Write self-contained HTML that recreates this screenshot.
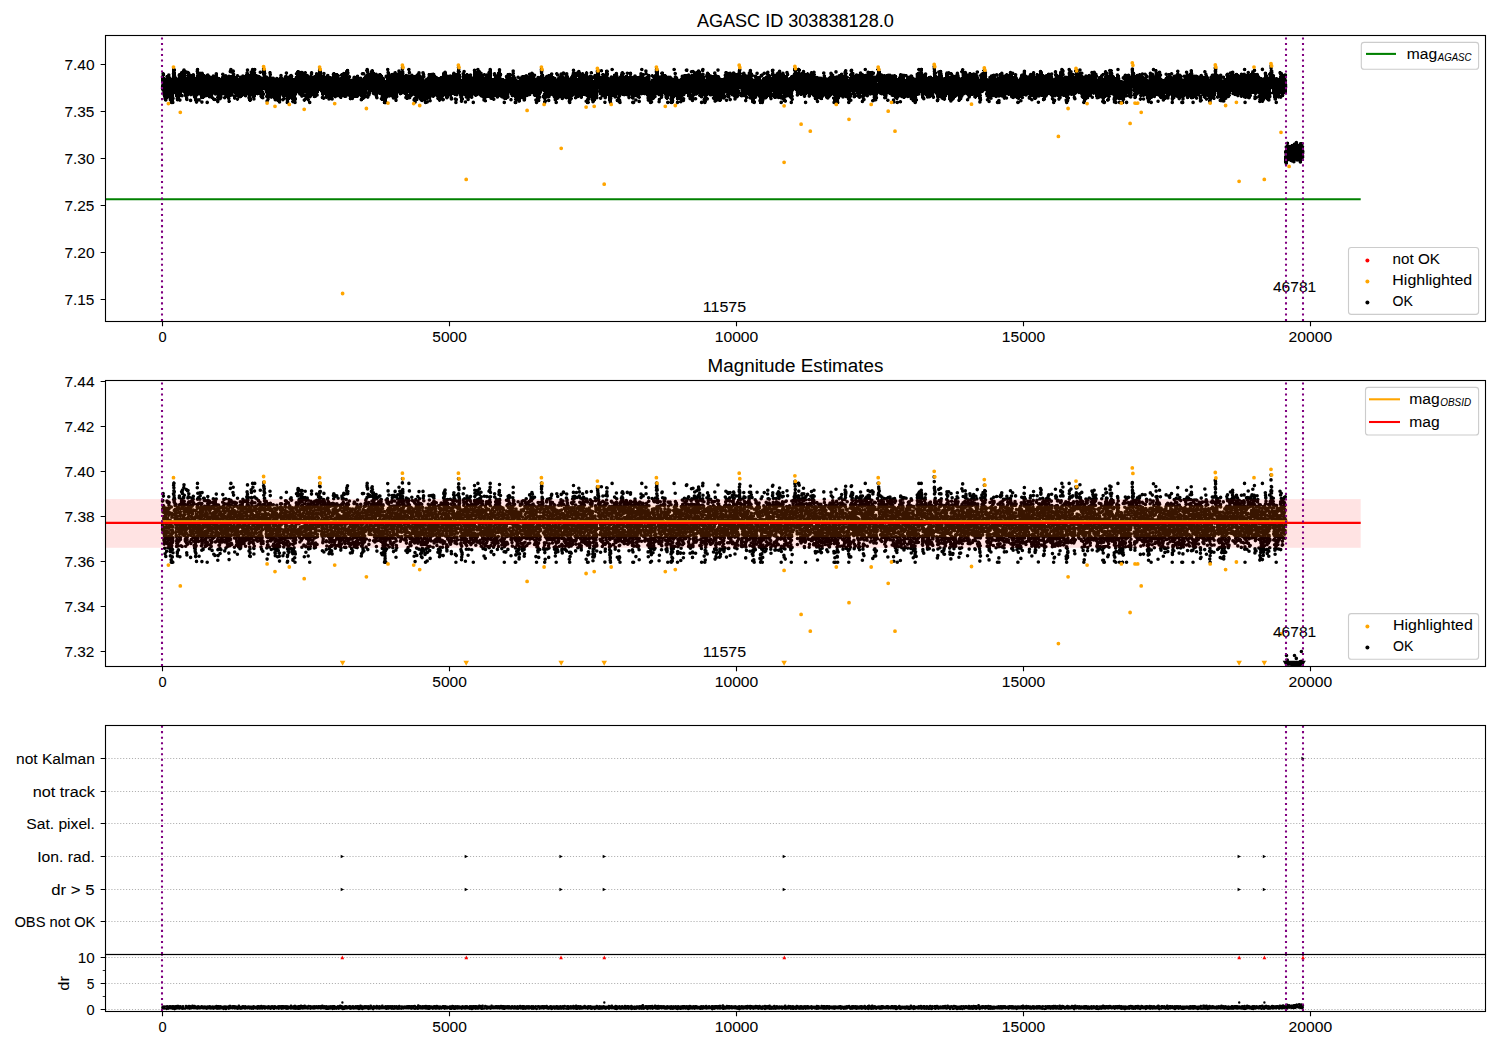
<!DOCTYPE html>
<html><head><meta charset="utf-8"><style>
html,body{margin:0;padding:0;background:#fff;}
svg{display:block;font-family:"Liberation Sans",sans-serif;}
text{stroke:#000;stroke-width:0.06px;}
</style></head><body>
<svg width="1500" height="1050" viewBox="0 0 1500 1050">
<rect width="1500" height="1050" fill="#fff"/>
<defs><clipPath id="c2"><rect x="105.5" y="380.5" width="1380.0" height="286.0"/></clipPath><clipPath id="c4"><rect x="105.5" y="954.5" width="1380.0" height="57.0"/></clipPath></defs>
<text x="696.91" y="26.90" font-size="17.72" textLength="196.87" lengthAdjust="spacingAndGlyphs" fill="#000">AGASC ID 303838128.0</text>
<path d="M161.5 76v6m0 3v5m1 -18v19m0 2v1m1 -22v25m1 -24v3m0 1v24m1 -23v23m1 -26v26m1 -26v24m1 -25v24m1 -24v27m1 -24v27m1 -26v26m1 -36v10m0 1v25m1 -36v36m1 -36v26m1 -25v2m0 1v25m1 -20v24m1 -23v23m1 -27v27m1 -28v25m0 1v2m1 -29v25m0 2v2m1 -30v26m1 -27v22m0 2v3m1 -28v24m1 -24v27m1 -26v30m1 -29v3m0 1v1m0 1v24m1 -30v25m0 1v4m1 -30v25m1 -24v23m0 5v1m1 -27v22m0 3v3m1 -28v22m0 3v2m1 -27v21m1 -21v24m1 -24v27m1 -24v26m1 -34v5m0 1v28m1 -35v28m0 3v4m1 -35v27m0 4v2m1 -29v23m0 4v2m1 -29v26m1 -26v27m0 2v2m1 -31v27m0 2v2m1 -30v26m1 -25v24m1 -23v22m1 -23v23m0 4v3m1 -30v23m0 4v3m1 -30v24m0 4v1m1 -28v23m1 -22v22m1 -22v23m1 -24v25m1 -25v19m0 3v4m1 -26v20m0 3v3m1 -28v22m0 3v3m1 -28v22m0 2v1m0 1v1m0 1v1m1 -29v30m1 -26v26m1 -26v23m1 -22v22m1 -26v1m0 2v22m1 -26v22m1 -22v22m0 2v1m1 -23v20m0 1v3m1 -24v24m1 -24v23m1 -22v23m1 -24v28m1 -33v3m0 2v28m1 -35v5m0 2v22m0 4v1m1 -34v5m0 2v21m1 -26v26m1 -26v23m0 2v4m1 -28v1m0 1v21m0 1v4m1 -23v23m1 -24v22m0 1v2m1 -26v23m0 1v3m1 -26v2m0 1v22m1 -24v22m1 -22v22m1 -22v22m1 -23v22m1 -22v21m1 -21v22m1 -23v23m1 -28v2m0 1v25m1 -28v26m1 -26v2m0 2v28m1 -27v28m1 -31v31m1 -33v27m0 2v3m1 -33v30m1 -30v32m1 -32v32m1 -32v3m0 1v25m1 -23v21m1 -20v20m1 -20v20m1 -24v2m0 2v20m1 -24v3m0 2v22m1 -26v1m0 4v22m1 -31v7m0 2v22m1 -32v23m0 1v8m1 -32v23m0 3v2m1 -26v24m0 3v1m1 -21v22m0 2v2m1 -26v26m1 -25v24m1 -30v27m1 -27v27m1 -24v1m0 2v21m1 -21v21m1 -21v22m1 -21v23m1 -23v23m1 -24v24m1 -24v25m1 -24v25m1 -26v26m1 -29v29m1 -29v21m0 4v1m1 -23v20m0 1v3m1 -23v23m1 -25v24m1 -28v2m0 1v22m0 1v1m1 -27v32m1 -32v2m0 2v28m1 -28v27m1 -28v25m1 -26v25m1 -25v26m0 1v1m1 -27v28m1 -25v25m1 -25v26m1 -31v2m0 1v28m1 -33v24m0 3v2m1 -30v23m1 -23v24m1 -23v24m1 -24v25m1 -25v26m1 -26v26m1 -25v25m0 2v2m1 -29v21m0 1v3m0 1v4m1 -31v22m0 1v7m1 -29v1m0 1v26m1 -26v27m1 -26v28m1 -27v22m0 1v1m0 1v3m1 -32v26m0 3v3m1 -33v26m1 -25v3m0 1v20m1 -20v22m1 -23v23m1 -25v25m1 -25v24m1 -24v23m1 -27v24m1 -25v23m1 -23v24m1 -22v25m0 2v2m1 -24v24m1 -27v24m0 1v3m1 -28v23m0 2v2m1 -23v22m1 -23v24m1 -25v24m1 -24v26m1 -24v24m1 -24v24m1 -23v23m1 -27v27m1 -28v25m1 -25v26m1 -25v25m1 -25v24m1 -24v24m1 -23v23m1 -22v1m0 2v20m1 -24v2m0 1v22m1 -26v26m1 -26v24m1 -25v25m1 -25v26m1 -27v27m1 -29v28m1 -28v27m1 -27v6m0 1v20m1 -21v25m1 -24v2m0 1v21m1 -21v21m1 -21v21m1 -24v23m1 -23v22m1 -22v22m1 -23v23m1 -23v23m1 -23v22m1 -20v19m1 -19v20m0 1v3m1 -28v2m0 2v24m1 -29v3m0 4v22m1 -29v3m0 2v23m1 -27v2m0 1v23m1 -29v1m0 4v23m1 -30v5m0 1v20m0 1v3m1 -30v22m0 2v6m1 -29v29m1 -25v23m1 -25v23m1 -24v22m1 -23v25m1 -24v25m1 -23v23m1 -22v25m1 -25v26m1 -25v25m1 -25v20m1 -21v22m1 -22v22m0 3v2m1 -26v27m1 -26v26m1 -24v27m1 -26v26m1 -29v3m0 2v24m1 -35v1m0 5v29m1 -36v30m1 -30v29m1 -25v25m1 -22v22m1 -24v24m1 -24v26m1 -26v26m1 -27v27m1 -28v31m1 -29v29m1 -29v25m1 -28v23m1 -23v25m1 -24v24m1 -28v3m0 1v24m1 -29v28m1 -27v3m0 1v23m1 -19v20m1 -21v25m1 -25v26m1 -31v1m0 5v25m1 -32v6m0 1v18m0 1v5m1 -31v6m0 1v24m1 -27v1m0 2v24m1 -25v23m1 -23v22m1 -21v20m0 3v3m1 -26v21m0 1v6m1 -28v28m1 -29v27m1 -28v28m1 -29v26m1 -26v28m1 -25v26m1 -25v26m1 -30v30m1 -30v29m1 -28v5m0 2v23m1 -24v25m1 -26v22m0 1v3m1 -27v23m0 1v2m1 -30v26m0 2v1m1 -29v26m0 1v2m1 -29v29m1 -29v23m1 -23v24m1 -24v25m1 -25v24m1 -22v21m1 -20v21m1 -20v23m1 -23v24m1 -24v25m1 -26v25m1 -25v24m1 -27v28m1 -29v25m0 1v3m1 -30v25m0 3v1m1 -29v27m1 -26v27m1 -24v24m1 -24v23m1 -23v21m1 -21v21m0 1v3m1 -25v25m1 -27v22m0 2v3m1 -28v23m1 -23v24m0 2v2m1 -27v23m0 2v6m1 -31v23m0 2v6m1 -37v29m0 3v1m1 -34v28m1 -27v29m1 -25v1m0 2v28m1 -23v24m1 -30v29m1 -32v25m0 3v2m1 -30v26m0 5v2m1 -29v24m0 3v2m1 -30v25m0 3v2m1 -30v28m1 -27v27m1 -27v24m1 -24v24m1 -24v25m1 -22v21m0 3v3m1 -35v26m0 6v3m1 -35v27m0 6v1m1 -34v28m1 -28v1m0 1v25m1 -28v28m1 -28v27m1 -25v26m1 -25v26m1 -25v25m1 -23v24m1 -24v27m1 -28v3m0 1v25m1 -28v28m1 -28v24m0 2v2m1 -28v24m1 -27v27m1 -30v30m1 -30v31m1 -30v31m1 -22v22m1 -27v3m0 2v23m1 -29v25m0 1v2m1 -27v24m1 -22v23m1 -26v26m1 -29v29m1 -29v28m1 -28v28m1 -24v3m0 2v20m1 -20v20m1 -20v21m0 2v3m1 -25v21m0 1v3m1 -28v2m0 1v21m0 2v1m1 -28v25m1 -27v26m1 -26v25m1 -25v20m1 -20v22m0 3v3m1 -27v2m0 1v20m0 1v3m1 -31v27m1 -27v27m1 -24v1m0 1v23m0 1v1m0 1v3m1 -27v27m1 -25v25m1 -28v2m0 2v21m1 -25v3m0 1v22m1 -25v25m1 -25v25m1 -26v23m1 -24v24m1 -24v26m1 -26v26m1 -26v26m1 -26v22m1 -22v22m1 -24v2m0 1v20m1 -23v23m1 -23v23m1 -24v22m1 -22v22m1 -21v23m1 -22v23m1 -23v2m0 2v19m0 2v4m1 -25v26m1 -28v27m1 -27v26m1 -25v25m1 -34v6m0 1v20m0 1v2m1 -30v25m1 -25v23m0 4v3m1 -24v18m0 1v6m0 2v2m1 -26v27m1 -28v28m1 -29v23m0 2v2m1 -27v23m0 2v1m1 -27v24m0 1v3m1 -28v24m0 1v3m1 -29v23m1 -23v22m1 -22v23m1 -20v22m1 -21v24m1 -28v1m0 3v27m1 -32v4m0 3v25m1 -31v3m0 2v22m0 2v1m1 -29v2m0 1v22m1 -23v22m1 -25v25m1 -25v27m1 -28v28m1 -28v3m0 1v23m1 -27v3m0 2v21m1 -25v26m1 -26v26m1 -26v26m1 -23v27m1 -25v26m1 -27v27m1 -29v25m1 -31v2m0 1v25m0 1v1m1 -30v27m1 -27v2m0 1v23m0 2v2m1 -27v27m1 -27v27m1 -28v6m0 1v20m1 -28v28m1 -28v27m1 -25v26m1 -25v26m1 -27v26m1 -25v23m1 -22v22m1 -24v24m0 4v2m1 -31v26m0 2v5m1 -32v32m1 -28v28m1 -29v25m0 2v1m1 -31v2m0 1v23m1 -27v3m0 1v26m1 -29v2m0 2v27m1 -27v3m0 1v23m1 -29v28m1 -28v27m1 -32v30m1 -30v30m1 -30v20m0 2v1m1 -22v25m0 2v2m1 -29v2m0 4v19m0 2v3m1 -31v3m0 2v1m0 1v23m1 -29v2m0 1v24m1 -24v24m1 -23v25m0 2v3m1 -34v29m0 2v3m1 -34v28m1 -28v26m1 -25v1m0 1v2m0 2v24m1 -23v25m1 -27v28m1 -36v3m0 5v27m1 -35v3m0 5v21m1 -28v1m0 4v23m1 -23v24m1 -26v26m1 -26v26m0 1v3m1 -29v22m0 2v5m1 -25v26m1 -27v28m1 -30v23m0 2v5m1 -32v23m1 -24v25m1 -24v24m1 -23v1m0 2v20m1 -21v21m1 -24v2m0 1v21m1 -24v24m1 -24v2m0 2v23m1 -27v3m0 1v23m1 -27v23m0 2v1m1 -26v3m0 1v23m0 3v1m1 -27v23m0 2v3m1 -28v23m0 2v3m1 -29v22m0 4v2m1 -28v22m0 2v2m1 -25v21m0 2v2m1 -25v22m1 -22v22m0 2v3m1 -27v23m0 1v3m1 -34v1m0 3v22m0 2v1m0 3v1m1 -34v3m0 2v22m1 -27v3m0 2v22m1 -22v22m1 -21v1m0 2v18m1 -25v5m0 2v18m1 -25v5m0 1v20m1 -22v27m1 -27v27m1 -27v29m1 -22v23m1 -29v2m0 2v25m1 -30v4m0 1v21m0 1v2m1 -28v25m1 -25v24m1 -31v30m1 -30v27m1 -27v27m1 -25v26m0 2v5m1 -27v20m0 2v5m1 -30v1m0 2v24m1 -28v27m1 -27v26m1 -26v22m1 -20v21m1 -21v25m1 -24v25m0 2v1m1 -27v24m0 1v3m1 -28v23m0 2v3m1 -28v20m0 6v1m1 -27v28m1 -27v27m1 -26v26m1 -36v3m0 7v25m1 -35v3m0 1v3m0 1v22m1 -29v1m0 2v3m0 1v21m1 -24v1m0 2v24m0 1v2m1 -26v23m0 1v3m1 -25v21m0 1v2m1 -24v21m0 1v1m1 -24v25m1 -28v28m1 -28v22m0 1v4m1 -27v21m0 1v5m1 -28v22m0 2v3m1 -32v2m0 3v20m1 -25v3m0 2v20m1 -25v3m0 2v23m1 -23v23m1 -23v26m1 -29v2m0 2v25m1 -30v3m0 1v19m0 1v7m1 -31v3m0 1v28m1 -32v31m1 -30v25m0 2v2m1 -28v23m0 2v3m1 -29v24m0 3v2m1 -30v25m1 -25v24m0 1v1m1 -26v27m1 -26v27m0 4v1m1 -34v2m0 3v24m0 3v3m1 -36v4m0 1v25m0 3v2m1 -35v4m0 1v23m0 2v5m1 -27v28m1 -25v25m1 -31v27m0 1v1m1 -30v24m0 1v3m1 -28v23m0 3v1m1 -26v23m1 -21v21m1 -21v21m1 -21v21m0 1v2m1 -26v1m0 1v25m1 -28v30m1 -30v30m1 -27v27m1 -33v2m0 4v26m1 -32v2m0 4v26m1 -25v26m1 -24v24m1 -24v23m1 -23v21m1 -21v21m1 -25v25m1 -28v22m0 2v3m0 1v2m1 -30v22m0 1v1m0 4v3m1 -30v26m0 1v2m1 -29v26m1 -26v29m1 -29v23m0 3v3m1 -28v23m0 3v1m1 -28v24m1 -24v25m1 -25v28m1 -27v27m1 -27v25m1 -25v25m1 -29v28m1 -29v21m0 1v4m0 1v1m1 -27v20m0 3v5m1 -24v1m0 1v22m1 -24v24m1 -25v25m1 -25v25m0 3v1m1 -27v28m1 -27v27m1 -27v20m0 1v2m1 -26v24m1 -26v29m1 -30v30m1 -29v32m1 -29v4m0 1v25m1 -28v1m0 3v25m1 -29v3m0 1v25m1 -29v24m0 2v2m1 -31v2m0 1v23m1 -26v3m0 1v20m1 -20v21m1 -21v28m1 -30v30m1 -30v3m0 3v24m1 -30v3m0 1v26m1 -32v3m0 2v26m1 -31v3m0 2v22m1 -26v1m0 2v23m1 -27v3m0 1v23m1 -28v27m1 -27v26m1 -23v24m1 -23v25m1 -31v3m0 1v3m0 1v23m1 -31v23m0 1v4m1 -28v29m1 -24v25m1 -25v25m1 -26v25m1 -26v26m1 -27v28m1 -29v29m1 -29v29m0 2v3m1 -31v26m0 2v3m1 -32v22m0 1v5m0 2v1m1 -31v30m1 -28v28m1 -27v23m0 1v3m1 -31v26m0 3v2m1 -31v26m1 -24v3m0 2v19m1 -20v21m1 -22v23m0 2v3m1 -29v29m1 -29v26m0 1v1m1 -35v3m0 2v18m0 8v1m1 -33v23m1 -23v24m1 -23v28m1 -28v3m0 1v24m1 -28v28m1 -28v27m1 -26v2m0 2v23m1 -24v24m1 -25v24m1 -25v27m1 -26v27m0 3v2m1 -30v24m0 4v3m1 -31v22m0 6v2m1 -31v22m1 -21v24m1 -23v23m1 -25v25m1 -26v24m1 -23v24m1 -25v26m1 -26v29m1 -26v1m0 1v24m1 -24v26m1 -26v27m1 -26v22m0 2v1m1 -25v22m1 -22v23m1 -23v23m1 -27v1m0 4v22m1 -28v2m0 1v22m1 -25v2m0 1v21m1 -21v23m1 -20v21m1 -21v21m1 -22v22m1 -23v22m1 -26v25m1 -25v24m1 -23v22m0 2v2m1 -25v22m0 1v7m1 -28v28m1 -33v2m0 3v28m1 -33v2m0 3v28m1 -28v28m1 -29v29m1 -30v25m1 -26v24m1 -24v24m1 -24v25m1 -23v23m1 -28v27m1 -28v29m1 -28v28m1 -25v1m0 2v24m0 2v1m1 -26v1m0 1v25m1 -30v2m0 1v27m1 -35v3m0 1v29m1 -33v23m0 1v4m0 2v2m1 -32v26m1 -23v26m1 -23v23m1 -24v18m0 1v5m1 -24v20m0 1v2m1 -23v23m1 -23v24m1 -26v27m1 -27v26m1 -26v22m0 1v2m0 3v3m1 -30v30m1 -29v28m1 -34v3m0 3v23m0 1v3m1 -33v3m0 3v22m1 -27v1m0 4v23m1 -26v26m1 -26v23m0 1v1m1 -25v24m1 -24v24m1 -24v24m0 5v1m1 -30v24m0 4v3m1 -30v3m0 1v26m1 -30v2m0 2v25m1 -25v25m1 -32v1m0 5v26m1 -33v14m0 1v12m0 2v2m1 -32v26m1 -25v26m1 -23v24m1 -21v21m1 -21v21m1 -20v21m0 1v1m1 -24v25m1 -24v24m1 -25v25m0 1v1m1 -27v20m0 5v3m1 -28v20m0 5v2m1 -27v21m1 -21v21m1 -20v21m1 -21v22m0 2v3m1 -27v22m0 2v4m1 -29v24m0 1v4m1 -28v24m1 -24v25m0 1v3m1 -26v22m0 1v3m1 -27v21m0 4v1m1 -29v23m0 4v2m1 -30v24m0 3v3m1 -29v24m0 3v2m1 -29v24m1 -24v25m1 -25v25m1 -25v3m0 2v19m1 -24v3m0 1v19m1 -21v22m1 -22v22m1 -22v21m1 -22v25m1 -25v25m1 -25v27m1 -25v25m1 -24v26m1 -26v26m1 -31v30m1 -34v1m0 2v24m0 3v2m1 -33v3m0 1v23m1 -27v3m0 1v23m1 -27v25m1 -25v30m1 -30v3m0 1v27m1 -25v26m1 -27v22m0 2v3m1 -27v23m1 -23v25m1 -21v21m1 -22v22m1 -22v22m1 -22v22m1 -22v21m1 -20v21m1 -33v34m1 -34v28m0 3v2m1 -32v28m1 -22v2m0 1v22m0 2v3m1 -26v26m1 -31v31m1 -32v28m1 -28v28m1 -28v29m1 -24v25m1 -22v22m1 -23v24m1 -28v27m1 -28v25m1 -25v23m1 -23v28m1 -28v3m0 1v25m1 -29v3m0 1v26m1 -30v30m1 -29v28m1 -26v25m1 -25v24m1 -24v23m1 -26v25m1 -25v24m1 -23v29m1 -25v25m1 -31v1m0 6v23m1 -32v4m0 4v23m1 -32v29m1 -28v26m1 -24v24m1 -24v23m1 -22v23m0 4v2m1 -27v22m0 2v3m1 -27v27m1 -29v26m1 -26v25m1 -24v23m1 -23v23m1 -23v22m1 -22v25m1 -25v26m1 -28v27m1 -27v2m0 2v22m1 -26v2m0 4v22m1 -24v1m0 3v24m1 -29v29m1 -30v20m0 2v1m0 1v4m1 -31v1m0 1v21m1 -24v23m1 -24v23m1 -22v22m0 2v2m1 -23v25m0 2v2m1 -22v22m1 -22v24m1 -27v23m0 1v3m1 -28v24m1 -24v24m1 -25v23m1 -23v23m1 -23v23m1 -23v24m1 -24v2m0 2v20m0 3v2m1 -29v2m0 1v20m0 3v4m1 -27v20m0 2v5m1 -31v24m0 2v5m1 -31v24m1 -25v25m1 -25v25m1 -22v24m1 -24v24m1 -25v25m1 -26v22m0 2v2m1 -25v21m0 2v2m1 -25v22m1 -24v23m1 -24v26m1 -25v26m1 -26v27m1 -27v3m0 1v23m1 -25v24m1 -25v25m1 -24v25m0 3v1m1 -25v21m0 2v3m1 -25v21m0 1v3m1 -26v21m0 2v2m1 -28v23m0 1v3m1 -28v25m0 1v2m1 -28v25m1 -29v26m0 1v1m1 -28v26m1 -26v26m1 -21v21m1 -20v19m1 -19v19m0 1v3m1 -25v25m1 -26v27m1 -27v24m0 1v3m1 -29v25m0 2v2m1 -30v28m1 -27v28m1 -24v24m1 -27v26m1 -26v24m0 4v2m1 -29v23m0 4v3m1 -33v26m0 4v2m1 -33v26m1 -26v27m1 -25v25m0 1v3m1 -27v27m1 -26v26m1 -26v25m1 -26v23m1 -24v23m1 -23v22m1 -22v22m1 -22v23m1 -23v24m0 1v2m1 -27v2m0 1v25m0 1v1m1 -24v18m0 1v6m1 -33v2m0 1v2m0 2v19m0 2v5m1 -34v27m0 2v3m1 -31v25m1 -22v23m1 -22v25m1 -28v28m1 -29v28m1 -31v28m1 -28v28m1 -27v7m0 1v20m1 -21v21m1 -21v22m0 1v4m1 -27v28m1 -28v28m1 -36v3m0 1v30m1 -34v27m0 2v2m1 -30v26m1 -24v25m1 -23v22m1 -22v26m1 -29v2m0 2v1m0 1v24m1 -31v26m0 2v3m1 -31v25m1 -25v24m1 -23v2m0 1v21m1 -25v2m0 1v22m1 -25v2m0 1v22m1 -22v26m1 -26v2m0 1v24m0 3v1m1 -27v28m1 -28v28m1 -29v27m1 -27v25m1 -25v24m1 -25v25m1 -25v23m1 -22v22m1 -26v27m1 -27v23m0 2v3m1 -28v23m0 3v1m1 -27v23m1 -22v25m1 -24v26m1 -24v2m0 2v20m1 -22v22m1 -23v22m1 -23v23m1 -24v24m0 3v1m1 -29v30m1 -30v3m0 2v26m1 -33v4m0 1v23m0 1v4m1 -34v28m0 3v2m1 -32v26m0 2v2m1 -29v25m0 1v3m1 -31v1m0 4v26m1 -32v29m0 1v1m1 -31v26m0 1v1m1 -28v26m1 -25v1m0 1v23m1 -20v21m0 1v6m1 -27v27m1 -26v27m1 -30v26m0 1v3m1 -36v3m0 3v25m1 -31v3m0 3v26m0 2v1m1 -28v25m0 1v3m1 -24v20m0 1v2m1 -23v20m0 1v3m1 -27v2m0 2v23m1 -28v4m0 1v23m1 -30v26m1 -26v23m0 5v1m1 -29v23m0 4v3m1 -30v20m0 1v2m0 4v2m1 -29v23m1 -23v24m1 -22v22m1 -30v30m1 -30v20m0 2v1m0 4v1m1 -28v24m0 1v3m1 -24v27m1 -24v24m1 -25v24m1 -24v21m1 -21v20m1 -21v21m0 1v1m0 2v2m1 -26v23m0 1v3m1 -28v24m0 1v2m1 -27v23m0 2v2m1 -27v2m0 1v21m0 1v2m1 -27v2m0 2v19m0 2v2m1 -27v23m1 -22v25m1 -24v3m0 1v23m1 -22v23m1 -31v31m1 -31v28m0 1v3m1 -31v26m0 2v3m1 -35v2m0 2v25m0 4v1m1 -35v3m0 3v23m1 -28v2m0 5v22m1 -29v28m1 -28v27m1 -24v24m0 4v2m1 -31v2m0 1v22m0 4v3m1 -32v27m1 -27v28m1 -25v2m0 2v21m1 -20v19m0 1v2m1 -22v22m1 -22v22m1 -28v2m0 2v17m0 1v5m1 -27v26m1 -25v1m0 1v23m1 -26v26m1 -26v23m1 -23v22m1 -23v3m0 1v24m0 1v3m1 -31v2m0 2v27m1 -29v25m0 2v1m1 -28v24m1 -24v22m1 -26v1m0 2v23m1 -27v28m1 -28v30m1 -26v26m1 -26v25m1 -24v23m0 3v3m1 -25v21m0 1v3m1 -29v2m0 2v21m0 1v3m1 -29v22m1 -26v2m0 2v21m1 -25v27m1 -27v28m1 -25v25m1 -26v24m1 -27v29m1 -30v30m1 -29v29m0 2v3m1 -29v24m0 2v3m1 -29v23m1 -23v24m1 -24v24m1 -24v21m0 1v2m1 -23v20m1 -20v26m1 -28v20m0 1v7m1 -28v20m0 1v7m1 -27v21m0 4v1m1 -25v22m1 -28v3m0 3v23m1 -28v29m1 -27v23m0 2v2m1 -25v22m0 1v2m1 -23v22m0 1v2m1 -23v25m1 -28v28m1 -30v26m0 2v1m1 -29v25m1 -25v26m1 -33v33m1 -33v29m1 -29v25m0 4v2m1 -24v24m1 -23v23m1 -23v23m0 1v3m1 -28v28m1 -28v28m1 -26v2m0 2v22m1 -26v3m0 1v22m1 -26v26m1 -24v22m1 -27v26m1 -26v25m1 -25v25m1 -26v2m0 1v22m1 -25v22m0 1v1m1 -25v21m1 -21v24m1 -24v24m1 -21v22m1 -23v23m1 -23v23m1 -23v24m1 -23v23m1 -22v20m1 -22v24m1 -24v25m1 -25v24m1 -28v1m0 3v25m1 -30v3m0 2v25m0 3v3m1 -36v3m0 3v25m0 2v3m1 -30v24m1 -26v26m1 -27v28m1 -27v1m0 1v25m1 -26v25m1 -26v22m0 1v1m1 -25v23m1 -25v25m1 -25v3m0 1v21m0 2v4m1 -31v2m0 2v27m1 -27v21m0 2v3m1 -26v20m0 4v1m1 -24v20m0 1v3m0 3v1m1 -26v27m1 -26v26m1 -26v25m1 -24v25m1 -25v24m1 -30v28m1 -28v27m1 -27v28m1 -25v26m1 -27v1m0 2v24m1 -29v29m1 -36v33m1 -33v24m0 3v2m1 -24v24m1 -20v24m1 -23v25m1 -22v22m0 1v3m1 -27v23m0 1v3m1 -26v20m0 4v1m1 -25v20m1 -27v4m0 1v22m1 -27v23m0 1v3m1 -26v26m1 -25v24m1 -23v23m1 -23v20m0 57v2m0 3v7m1 -89v20m0 52v19m1 -91v2m0 4v2m0 1v10m0 49v2m0 1v20m1 -23v22m1 -22v2m0 1v16m1 -16v16m1 -16v17m1 -18v18m1 -18v18m1 -19v20m1 -20v20m1 -21v18m1 -19v20m1 -19v19m1 -17v17m1 -18v20m1 -21v21m1 -21v21m1 -21v19m1 -15v12" stroke="#000" stroke-width="1"/>
<path d="M162.5 76.9h0m.1 10h0m0 1.7h0m.1-8.3h0m.1 5h0m.2-3.9h0m0-2.6h0m.1-5.1h0m.1 16.5h0m.2-15.4h0m.1 4h0m0 7.1h0m.1-1.9h0m.3 9.1h0m.3 1.7h0m.1-6.9h0m0-4.1h0m.3-4.1h0m.1 16.9h0m.4 2.2h0m.5-17.1h0m.1 9.3h0m.1 9h0m.1-5.8h0m.3-14.4h0m.4 18h0m.3-15.6h0m0 5.8h0m.1-11.2h0m.3 9.6h0m.2-1.5h0m.6 4.8h0m0 3.6h0m.3-5.1h0m.2-8.4h0m.2-4.7h0m.1 20.2h0m.3-17.8h0m0 4h0m.7 4.2h0m.3-.8h0m0 13.1h0m.2 1.8h0m.4-8.4h0m.2-2.3h0m.2 7.8h0m.1-17.6h0m0 23.1h0m.1-8.9h0m.3-11.6h0m.2 1.7h0m.2 2h0m.2 14.6h0m.2-6h0m0 2.9h0m.1-6.8h0m.2 12.1h0m0-9h0m.1-5.7h0m0 4.5h0m.1 6.2h0m.5-24.6h0m.1 2.4h0m.2-6.7h0m.1 1.8h0m0 1.2h0m.1 2.1h0m0-5.1h0m.1 7.7h0m.2 3.5h0m0-7.7h0m.3 3.2h0m.3 7.6h0m.4 2.7h0m.3-5h0m.2 8.5h0m.2-11.7h0m.3 10h0m.1 3.3h0m0-5.9h0m.2 8h0m0 2.1h0m.5-10.9h0m.1 9.4h0m.1 4.3h0m.2 1.2h0m.1-19.2h0m.3 8.9h0m.2 6.1h0m.2-14.1h0m.1 15.7h0m.1-12.3h0m.1 3.7h0m.7-13.1h0m0 16.4h0m.1-6.3h0m0-10.9h0m.1 3.9h0m.4 21.5h0m.5-18.8h0m0 11.6h0m.4-8.7h0m0 5.4h0m.2 5.9h0m.1-8.7h0m.1-4.3h0m.4-9.6h0m.1 3.2h0m.1 12.4h0m.3 7.3h0m.1-16h0m.3-7.6h0m.3 12.7h0m.7 6.3h0m.5-21.2h0m.1 17h0m.1-10h0m.1-2.6h0m.2 8.2h0m.4-2.3h0m.1 9.9h0m.3 3.3h0m.1-15.2h0m.3 17.4h0m.2-8.6h0m.4-2.4h0m0-12.6h0m.1 18.2h0m.3 8.1h0m.1-17.1h0m.1 18.1h0m.3-7.4h0m.3 2.9h0m.3-6.7h0m.1-12.6h0m.1-3.1h0m.4 5.6h0m.1 6.6h0m.1-2.8h0m.1-2.7h0m.1-5.4h0m.1 17.2h0m.4-15.7h0m.3 3.1h0m.1 9.8h0m.1 5.6h0m.4-10.1h0m.4 16.7h0m.3-5.8h0m.3-8.1h0m.1 4.9h0m.3-1.1h0m.1-9.5h0m.4 6h0m0-11.2h0m.1 .5h0m0 2.9h0m.9 4.9h0m.1-7.8h0m.1-1.2h0m.4 18.7h0m.1-12.9h0m.2 8.1h0m.1-10.7h0m.1 17.3h0m.4 1h0m0-4.7h0m.2-6.6h0m.5 2.7h0m.1 10.4h0m.1-5.8h0m.2 7.6h0m.2-1.3h0m.2-3.2h0m.2-13.4h0m.2 20h0m.3-12.5h0m.3-10.3h0m.2-8h0m.1 11.8h0m.1-7h0m0-6.6h0m.2 17.2h0m.1-13.1h0m.3 12.8h0m.2 7.3h0m.5-12.2h0m0 9.9h0m.1 2.2h0m.2 6.3h0m.5-22h0m.1 9.2h0m.1 2.9h0m.2-13.9h0m0-2.7h0m.2 1.2h0m.1 16.1h0m.2-9.8h0m.1 3.3h0m.1 7.1h0m.7 4.2h0m.4 1.9h0m.1 4.7h0m0-24.2h0m.1 16.6h0m.1-21.2h0m.2 8.8h0m.1 11.1h0m.1-5.3h0m.6 9.2h0m.1-12.7h0m.3 1.7h0m.1-10.5h0m.3 14.2h0m0-9.8h0m.3-4.3h0m.1 15.3h0m0-14.4h0m.8 18.9h0m.3 .3h0m.4-2.8h0m.1-10.2h0m.1-6.1h0m.2 11.1h0m.2-3.1h0m.3-5h0m.1 15.7h0m.4-5.4h0m0 12.4h0m.1-8.2h0m.2-2.9h0m.1-11.2h0m.1-2.1h0m.1-3h0m.4 8.5h0m.5 1.8h0m.1 3.4h0m.7 8.1h0m.1-19.8h0m.4 4.9h0m.1 11.3h0m0-13.4h0m.4 5.4h0m.4 5.4h0m.3 5.2h0m.1-5.1h0m.4-2.9h0m.3 6.1h0m.1 3.6h0m.2-15.1h0m.3-4.9h0m.4 2.1h0m.1 12.1h0m.2-15.7h0m.1 8.4h0m.4 14.7h0m.4-10.9h0m0-2.4h0m.6-8.8h0m.1 22.5h0m.2-17.5h0m.4 11.9h0m.3-3.1h0m.1-7.6h0m.2-2.8h0m.1-4.4h0m.1-2.1h0m.2 4.9h0m.4 14.8h0m.4-7.2h0m.3 4.2h0m.1-2.4h0m.1 13.4h0m.1-4.4h0m0-13.1h0m.2 15.5h0m.4-21.1h0m.3 2.4h0m.1 12.3h0m.1 2.1h0m.3-7.8h0m.8 11.3h0m.4-8.5h0m0-8.7h0m.1-2.1h0m.1 3.6h0m.3 14.1h0m.3-11.6h0m.6 8.4h0m.4-2.6h0m.1-2.1h0m.3-11.9h0m.1-3.2h0m0 8.2h0m.1 4.9h0m.8-9.5h0m.2-1.6h0m.1 6h0m0 2.8h0m.3-4.5h0m.4 13.4h0m0 3.8h0m.5-11.1h0m.2 4.1h0m0-1.4h0m.3-13.4h0m.2 20.6h0m.1-18.4h0m.4 15.6h0m.1-12.7h0m.3 3.2h0m.3 11.8h0m.1-5.9h0m.7-3.1h0m.3-8.5h0m.3 14.4h0m.1-12.1h0m.2 17.8h0m.2-22.3h0m.1 25h0m.2-18.5h0m.2 8.4h0m.3 4.3h0m0-9h0m.1 2.3h0m.2-6.5h0m.2-10.7h0m0 12.5h0m.3 8.8h0m.3-23.4h0m.1 7.2h0m.4 2.3h0m.2 9.1h0m.2 6.9h0m.6-9.3h0m.3 5.1h0m.1-11.1h0m.2-6.4h0m.1 4.1h0m.1-6.3h0m0 11h0m.4-7.8h0m.2 9.6h0m.4 3.9h0m.2 8.3h0m0-3.9h0m.2-11.3h0m.1 17.2h0m.2-20.6h0m.2 5.1h0m.2 6.2h0m.5 3.5h0m.2-6.3h0m.5 9.2h0m.1-16.2h0m.2 14.9h0m.6 5.2h0m.1-23.4h0m.3 12h0m.1-4.7h0m.3 8.1h0m.1-11.3h0m.2 1.8h0m.1 14.4h0m.1-6.2h0m.3-3.5h0m.8 .8h0m.2 9.7h0m.3-19.6h0m0 5.7h0m.1 10.6h0m.2 2.9h0m.3-16.3h0m.1 10h0m.3-4.2h0m1-2.7h0m.1-3.8h0m.1 15.4h0m0-5.6h0m.3 2.7h0m.1-15.8h0m.5 18.2h0m0 .2h0m.3-8.2h0m.4-6.4h0m.3 1.8h0m.1-5h0m.3 12h0m.1-3.5h0m.7 10.6h0m0-15.7h0m.1 11.3h0m.2-7h0m.3 .7h0m.4 7.7h0m.1-11.6h0m.1-6.1h0m.3-2.1h0m.3 5.3h0m.1-8.2h0m.1 18h0m0-5.1h0m.7-4.3h0m0-3.4h0m.1 14.7h0m.5-3.2h0m.1 10.9h0m.1-3.1h0m.4-9.8h0m.1 15h0m.3-6.3h0m.1 3.4h0m0-15.8h0m.1 17.3h0m.2 1.6h0m.1-9.2h0m.5 3.2h0m.1-5.3h0m0-11h0m.2-5.6h0m.2 3.5h0m0-2.4h0m.2 12.4h0m.3-1.7h0m.4-3.4h0m.1 1.8h0m.2-12.8h0m.1 8.1h0m.2-6.5h0m.3 16.2h0m.2 4.2h0m.1 3.1h0m.3-4.1h0m.1 8.5h0m0-2.4h0m.4-11.2h0m0 10.2h0m.2-22.9h0m.1 7.4h0m0-4.9h0m.1-5.7h0m.2 8.1h0m.7 10.3h0m.1-5h0m.2-7.3h0m.2 9.7h0m.1 7.9h0m.3-13h0m.4-4.2h0m.1 14.2h0m.5-2.9h0m.1 6.3h0m.2-9.6h0m.4-5.6h0m.3-1.8h0m.4 3.9h0m.3 3.1h0m.2 .7h0m.2 6.9h0m.4-13.8h0m0 12.1h0m.1 3.9h0m0-13.9h0m.2-7.2h0m.1 14.5h0m.6 9.3h0m.6 .9h0m.2-9.3h0m.2-5.4h0m0 9.7h0m.4-7.1h0m.3-6.5h0m0 2.1h0m.1 8.2h0m0 9.1h0m.2-4.2h0m.1 1h0m.5-25.6h0m0 1.4h0m.1-1.4h0m.1 5.4h0m.2-3h0m.1 1.1h0m.2-.8h0m.1 4h0m.3-2.2h0m0 7h0m.4 2.8h0m.2 3.1h0m.1-2.1h0m.2 3.7h0m.2-9.2h0m.4 11.8h0m.1-13.6h0m.2 14.4h0m.2-3h0m.1 8h0m.1-14h0m.2 18.7h0m.2-7.3h0m.1-13.6h0m.7 18.9h0m.2-7.4h0m.4-6.5h0m0-6.9h0m.3 10.7h0m.3 7.1h0m0-13.6h0m.4 3.8h0m.1-7h0m.2-6.6h0m.2 12.4h0m.1-10.5h0m.1 3.1h0m.2 15.4h0m.2-5.1h0m.5 9.1h0m.3-6.7h0m.2 2.7h0m.3-14.7h0m.3 2.7h0m.3 2.5h0m.2 11.9h0m.4-10.1h0m0-7h0m.2 8.6h0m.2 4h0m.1 5.8h0m.1-7.9h0m.7-9h0m.2 2.8h0m.2 15.7h0m.1-4.8h0m.2 6.1h0m.9-10.1h0m.2-9.1h0m0 3.9h0m.1 2.8h0m.1 4h0m.2-12.6h0m.2 18.1h0m.1-13.5h0m.4 12.3h0m.1 4.6h0m.1-20.4h0m.4 13.4h0m.5-9.6h0m.3 5.6h0m.4-2.4h0m0 13.2h0m.1-1.4h0m0-5.2h0m.1 8.6h0m.2-6.1h0m.1-5.4h0m.2-4.6h0m.3-5.2h0m.2-2.6h0m.3 4h0m.2-6.5h0m.3 13.1h0m.2-10.6h0m.3 8.4h0m.8 7.7h0m.1-1.8h0m.1-8h0m.1 15.4h0m.5-17.6h0m.1 8.1h0m.2 5.8h0m.1-15.6h0m.2 8.9h0m.1 9.2h0m.3-12.8h0m.6 7.4h0m0-3.2h0m.1-11.6h0m.1 5.1h0m.1 11.3h0m.2-17.9h0m.4 11.1h0m.1-10h0m.3-1h0m.1-3.8h0m.1 12.8h0m0-4.6h0m.3 10.7h0m.1-4.9h0m.3 7h0m.1 8.3h0m.1-2.3h0m.1-3.4h0m0-13.2h0m.1 18.5h0m.1-2.6h0m.2-8.6h0m.4 1.4h0m.1-14.6h0m.3 11.4h0m0-3.7h0m.3 13h0m.1-18.5h0m.1 11.2h0m0-7h0m.6-5.2h0m.3 2.4h0m.2 13.6h0m.1-18.8h0m.2 16.3h0m.2 4.3h0m.2-9h0m.1-12.1h0m.1 6.9h0m.4-6h0m.5 14h0m.1-4.2h0m.1 11.6h0m0-18.1h0m.5 19.1h0m.1 2.8h0m0-17.5h0m.2 9.3h0m.1 1.6h0m.2-10.1h0m.3-3.5h0m.2 9.9h0m0-3.8h0m.2-7.8h0m0 16.6h0m.6 4.2h0m.2-2.4h0m.1 4.3h0m.2-12.5h0m.1 9h0m0-4.6h0m.5-1.2h0m0-8.9h0m.1-4.4h0m.4-2.2h0m.2-3.8h0m.1 12.6h0m.1 3.5h0m.1-10.5h0m.1 4.9h0m.2-1.6h0m.5-8.1h0m.1 14.3h0m.3-16.9h0m.1-.3h0m.2 10.6h0m.1-10.6h0m.3 19.8h0m.2-13.3h0m.1-1.6h0m.2 9.6h0m.4 2.3h0m.3 5.4h0m.1-3.1h0m0-5.9h0m.4-4.4h0m.1 3.3h0m0-6.5h0m.3-2.7h0m.3-2.1h0m.3 20.7h0m.1-4.9h0m.4 7.8h0m.1-23.6h0m0 17h0m.1-12.2h0m.3 2.2h0m.3-4.2h0m0 7.3h0m.4 2.9h0m.3 2h0m.5 7.8h0m.1-3.3h0m.3 8.1h0m.3-19.9h0m.2-2.2h0m.3-2.6h0m.1-2.6h0m.1 16.6h0m.1-6.1h0m.3 12.5h0m.2 2.4h0m.3-13.8h0m.4 2.4h0m.1 5.8h0m0-12.2h0m.5-4.8h0m.1 12.7h0m.5-4.8h0m.2 11.2h0m.1-16.7h0m.1 21.8h0m0-23.3h0m.3 14.1h0m.1 6.2h0m.4-17h0m.7 22.6h0m.1-16.7h0m0-1.9h0m.1-2.2h0m.1 15.1h0m.1-3.7h0m0-5.8h0m.3 2h0m.5-12.3h0m.3 13.5h0m.3-16.4h0m.1-1.3h0m.2 7.1h0m.3 14.4h0m.1-8.7h0m.9 6h0m.1-8.7h0m.1-3.7h0m0 9.2h0m.6-5.6h0m.3-5.6h0m.1 19.4h0m.4-19.6h0m.3 15.2h0m.2-5.1h0m.2 9.2h0m.2-10.7h0m0 3.6h0m.1 5.3h0m.3-13.7h0m.2-3.1h0m.4-3.7h0m.1 2.6h0m0 6.6h0m.4 11.9h0m.3-3.2h0m.6-11.7h0m.1 5.3h0m.4-1.4h0m.1-1.7h0m.1 5.3h0m.3 1.6h0m.1-14.6h0m.5-4h0m.1 2.4h0m.1-3.5h0m0 8.1h0m.3-6.7h0m.3 1.9h0m.1 6.8h0m.2-4h0m.2 3h0m.3 .4h0m.1 6.2h0m.3-2.8h0m.2 8.6h0m.1-2.8h0m.2-4.8h0m0 8.1h0m.3 6.1h0m.3-16.7h0m.1 13.4h0m.2-.7h0m.2-.9h0m.2-2.2h0m.2-14.3h0m.3 21.9h0m0-24.5h0m.2 12.9h0m.3-6.9h0m.3 1.7h0m.1-3.8h0m.3 6.6h0m.2 4.7h0m.5 2.3h0m.4 2.8h0m.1 3.2h0m.1-3.6h0m.3-5.2h0m.1 7.3h0m.2-14.6h0m.4-4.9h0m.1 2.7h0m.1 11.7h0m.2-14.9h0m.1 9.9h0m.1-2.7h0m.4-5.6h0m.3 13.4h0m.3 8.3h0m.1-10h0m.3 5.1h0m0-10.3h0m.1 13h0m.2-15.3h0m.4-3.4h0m.2 1h0m.5 7.7h0m.3-8.7h0m.1 11h0m.3 3.4h0m.1 5.3h0m.1-2h0m.3-12.1h0m.1 15.3h0m.4-15.7h0m.2 8.5h0m.1-10.1h0m.1 4.9h0m0-8.8h0m.5-3.1h0m.2 7.6h0m.1-1.9h0m.1-6.5h0m.2 21.4h0m.2-7.3h0m.2 2.6h0m.1 3.4h0m.3-19h0m.3 14.4h0m.2 7.3h0m.1-11.2h0m.3-1.4h0m.1-5.9h0m.6 13.5h0m.3-10.8h0m.1-6.1h0m.2 11.9h0m.3 8.8h0m.6 .1h0m0-3.6h0m.2-16.2h0m.1 2.9h0m.2 8.3h0m.2-2.8h0m.2 5.2h0m.1-6h0m.4 12.4h0m0-1.2h0m.2-3.9h0m.3-6.2h0m.2-3.9h0m.8 16.8h0m.2-7h0m0 6.2h0m.1-18.1h0m.1 4.9h0m.2 3.7h0m.1 7.8h0m.2-1.9h0m.2-18.1h0m.4 1.1h0m0 5.3h0m.3 8.8h0m.1-5.5h0m.6-7.1h0m.2 2.1h0m0-5.3h0m.2 16.7h0m.1-17.3h0m.3 20.4h0m.3-8.5h0m.1 10.6h0m.1-13.7h0m.2 5.4h0m.6 3.7h0m.1-11.9h0m.3 16.6h0m.2-14.2h0m.2 3.7h0m0-9.4h0m.1 16.2h0m.2-3.6h0m.3-17.6h0m.2 1.4h0m.2 .9h0m.2 5.8h0m.1-8.9h0m.2 3.2h0m.1 10.7h0m0 1.4h0m.1-13h0m.1 5.6h0m.4 16.2h0m.3-4.7h0m.6-7.7h0m.1-5.4h0m.2 15.6h0m.2-4.8h0m.1 8.2h0m.2-13.8h0m.2 2.7h0m.1 13.9h0m.2-18.4h0m.1 10.7h0m.1 4.2h0m.4-8.6h0m.5 6.2h0m.5-8.5h0m.1 14.2h0m.3-7.9h0m0 7.1h0m.1-17.4h0m.1 3.3h0m0 4.7h0m.7 5.9h0m0-1.8h0m.5-14.4h0m.3-.7h0m.5 9.3h0m.2-5.6h0m.1 2.5h0m.1 7.6h0m.2-3.1h0m.3 8.2h0m.2-.4h0m.3-3.5h0m.1-10.5h0m.1 9.1h0m.1-3.8h0m.5-8.1h0m.1 4.3h0m.1 13.1h0m.3-19.9h0m.1 3.1h0m.2 12.2h0m.1-5.4h0m.1 6.8h0m.6-4.5h0m.1 1.2h0m.2 5h0m.4-13.1h0m.8 1.6h0m.5 1.4h0m.1-6.5h0m.1 9.9h0m.2 4.8h0m.2-11h0m0 4.8h0m.1 13.1h0m.1-9.3h0m.2 5.2h0m.1 3.1h0m.7-25.1h0m.2 15.2h0m.1 6h0m.2-11.7h0m.4-2.8h0m.2 11.7h0m.1-18.4h0m.2 12.4h0m.1 11.6h0m.1-18.5h0m.4 14.8h0m.1-1.2h0m.6-14.9h0m.4 7.6h0m.1-3.7h0m0-3.3h0m.1 10.9h0m.1-12.8h0m.1 6h0m0 5.3h0m.1-11.6h0m.1 19.8h0m.2-3.4h0m.7-22.4h0m0 5.1h0m.1-4.5h0m.1-1.4h0m.1 9.3h0m.2 7.1h0m.1-14.1h0m0-.4h0m.2 25.7h0m.2-23.1h0m.2 13.9h0m.3-6.7h0m.3-3.7h0m.1 17.5h0m.2-11.2h0m0 6.9h0m.4 2.5h0m.1-13.3h0m.7 8.5h0m.2-13.7h0m.6 16.1h0m.3-18h0m0 13.6h0m.2-8.2h0m.1 3.8h0m.1-10.6h0m.2 3.4h0m.2-3.9h0m0 13.9h0m.4-2.3h0m.4 5.6h0m.4-14.7h0m.2 20h0m.5-16.8h0m0 1.2h0m.1 13.4h0m.2-11.1h0m.4 6.6h0m0 7.3h0m.3-5.2h0m.4-5.3h0m.5 2.9h0m.1-12.2h0m.2 8.1h0m.1 13.6h0m.1-2.6h0m.4 4.4h0m0-21.8h0m.2 13.8h0m.1-8.8h0m.1-1.8h0m.2 12.9h0m.9-7.2h0m.1 1.9h0m.4 2.3h0m.2 1.6h0m.1-12.5h0m.2 4.7h0m.2 10.5h0m0-18.5h0m.3-.1h0m.1 6.5h0m.2 5h0m.8 3.8h0m0-11.8h0m.1 15.5h0m.2-17.5h0m.1 22.5h0m.3-17.3h0m.1 3.1h0m.2 2h0m.2 12.8h0m.1-2.7h0m.2-4.1h0m.2-3h0m.3-11.1h0m.1 17h0m0-16.7h0m.3 5.7h0m.1 6.3h0m.4-3.4h0m.5-6.1h0m.1 21.2h0m.5-2.5h0m.1 .8h0m.1-6h0m.2 3h0m.2-8.8h0m.1 3.6h0m.1 9.9h0m.3-16h0m.1-3.7h0m0-6.3h0m.4 20.5h0m.1-12.3h0m.3-7.2h0m.2 10.2h0m.1-11.6h0m.2 4.7h0m.2-11.2h0m0 25.8h0m.1-4.3h0m.3-18.4h0m.2 20h0m.5-15.2h0m0-3.1h0m.3 7.2h0m.2 2.3h0m0 12.2h0m.3-9.5h0m.3 3.4h0m.1-10.7h0m.6 14.8h0m0-10.8h0m.1 1.9h0m.3 6h0m.4-3.4h0m.1-10.5h0m.4 3.8h0m.3-6.5h0m0 17.9h0m.6 4h0m.3-17.5h0m.1 12.2h0m.2-5.8h0m.1 12.6h0m.1-8.4h0m.3 4.8h0m.3-19.8h0m.1 9.1h0m.2-3.8h0m.1-3h0m.3 10.2h0m.1-8h0m.1-6.2h0m.1 9.5h0m.2 8.5h0m.5-6.1h0m0 12.7h0m.1 2.9h0m.2-6.8h0m.2 1.9h0m.2-20.3h0m.1 21.3h0m.3-14.2h0m.1 5.7h0m.4-8.7h0m.2-5h0m.3 15.6h0m.1-3.4h0m.1-8.7h0m.2 6.6h0m.2-3.7h0m.1 11.1h0m.3-20.6h0m.3 7.6h0m.5-6h0m.3 10.6h0m0-7.5h0m.2 17.8h0m.1-5.8h0m.7-3.8h0m.2-3.3h0m.2 6.6h0m0-11.1h0m.1 9.1h0m.2 4.6h0m.1 2.8h0m.5-23.4h0m.1-1.7h0m.1 7.4h0m.1-3h0m.1 1.5h0m.1 5h0m.5-1.6h0m.3 4.7h0m.3 1.7h0m.3 4.9h0m.4 4.9h0m.1-9.8h0m0 3.1h0m.2 4.6h0m.2-12.2h0m.6 10.7h0m.1 8.1h0m.1-15.9h0m.3-6.1h0m.1 18.8h0m.9 3.9h0m.2-19.6h0m.2 12.9h0m.1-6.7h0m0-1.2h0m.1 3.5h0m.2 9h0m.1-16h0m.1-4.2h0m.4 14h0m.2-20.5h0m0 7.2h0m.4 7.7h0m.1-11.8h0m.1 8.9h0m.2 16.1h0m.1-10.1h0m.1 7.4h0m.2-4.6h0m0 1.8h0m.7-12.7h0m.2 16h0m.5-10.8h0m.1 7.7h0m.2 1.5h0m0-18.5h0m.5 13.9h0m.1-12.6h0m.4 5.9h0m.1 5.1h0m.4-7.3h0m.3 12.4h0m.3-3.5h0m.2 10.7h0m.1-11.8h0m.1-3.3h0m.3 9.6h0m.1-16.7h0m.2 11.7h0m.1 8.9h0m.1 3.8h0m.3-11.6h0m.2-6h0m.1-3.5h0m.1-4.8h0m.4 17.2h0m.3-10.9h0m.1 14h0m.1-5.9h0m.1 8.9h0m.4-20.9h0m.3 8.4h0m.2-6.2h0m.1 6.7h0m0-12.6h0m.9 10h0m0 12h0m.1-3.5h0m0-15.4h0m.2-5.1h0m0 5.9h0m.4 11.6h0m.2-14.5h0m.7 5.9h0m.2 12.1h0m0-7h0m.1 12h0m.1-9.4h0m.3-8h0m.1 15.9h0m.1-2.3h0m.2 5h0m.3-21.9h0m.1 12.6h0m.1-6.4h0m.2 16.1h0m.1-6.5h0m.1-8h0m.1-2.3h0m.1-4.2h0m.5-6.7h0m.3 2.8h0m.2 12.7h0m.1-13.6h0m.1 22.7h0m.1-20.7h0m.2 14.1h0m.5-6.5h0m.1 9.9h0m.2-12.3h0m.2 17.2h0m.1-.4h0m.2-8h0m.2 11.7h0m.1-16.7h0m.2 3.4h0m.2 6h0m.1-15.3h0m.3 6h0m.3-3h0m.5 19.1h0m.1-3.6h0m.1-4.2h0m.1-2.6h0m.2-2.7h0m.1-7h0m.3 11.4h0m.1 3.1h0m.1-18.2h0m.5 8.6h0m.4-12h0m.1 14.5h0m.1-8.7h0m0-4.1h0m.2 2.6h0m.1 18.6h0m.1-13.2h0m.2 11.3h0m.1 5.1h0m.3-8.8h0m.7 1.5h0m.1-18.9h0m.6 6.9h0m.1 4.4h0m.2 3.2h0m0-11.3h0m.3 10.1h0m.1 3.5h0m0-8.6h0m.5-8.4h0m.1 21.8h0m.3-10.5h0m.3-11.2h0m.4 19.8h0m.1-.8h0m0-13.5h0m.3 9.3h0m.4-8.1h0m.2-3.8h0m.2 6.8h0m.3 5.9h0m.1-3.4h0m.1 6.2h0m.2-12.6h0m.1 3.9h0m.2-6.6h0m.2 5.8h0m.4 12h0m.6-6.4h0m.2 3.4h0m.2 5.8h0m.6-19.3h0m.4 7.1h0m.2-.9h0m.1-3.5h0m.3 18.5h0m.2-9.2h0m.2 7.4h0m.2-2.1h0m.2-15.3h0m.2 13h0m.3-5.8h0m.4-10.4h0m.3 12.8h0m.3-6.9h0m.5 2.7h0m.1 9.8h0m0-18.1h0m.3 13.1h0m.1 8.5h0m.3-18.9h0m0 7.2h0m.1 6.8h0m0 4.9h0m.2-10.2h0m.1-7.4h0m.1-6.5h0m.2-1.7h0m.1-.4h0m.8 20.5h0m0-14.3h0m.4-7.3h0m0 1.3h0m.1 10.4h0m.2 2.1h0m0-9.2h0m.1 14.5h0m.7-2h0m.2 6.8h0m.1-15.4h0m.2 14.3h0m0-3.4h0m.2 6h0m.2-10.4h0m.3 2h0m.1-10.9h0m.2 17.5h0m0-19.7h0m.3 7.6h0m.9 9.2h0m0-11.1h0m.3 9.5h0m.1-4.6h0m.1 1.1h0m.8-7.7h0m.1-4.1h0m.2 8.9h0m0 9.9h0m.4-16.8h0m.2 12.7h0m.2 7.1h0m.1 1h0m.2-11.2h0m.1 5.8h0m.2-1.3h0m.4-2.7h0m.1-7.3h0m.1-5.6h0m.1 3.2h0m.5 7.1h0m.5-3.3h0m0-9.4h0m.3-.8h0m.3 8.7h0m.1-5.4h0m.1-2.1h0m.3 17.5h0m.3 2.2h0m.1-6.2h0m.2 11h0m.1-19.8h0m0 6.1h0m.4 4.2h0m.1 12.8h0m.4-2.8h0m.5-4.9h0m.1-11.2h0m.2-1.6h0m.1-5h0m.2 2.4h0m.1 13.8h0m.1-18.8h0m.1 15.9h0m.1-3.2h0m.1 1.3h0m.5-17.1h0m.1-3.6h0m.1 3.6h0m.1-1.5h0m.3 2.4h0m.1 2.9h0m.5 9.4h0m.1-6.7h0m0-.9h0m.1 6.8h0m.1 2.2h0m.3-5.3h0m.3 7.9h0m.1-7.8h0m.1 10.9h0m.1 1.5h0m0 1.9h0m.1 2.2h0m.6 4.2h0m.2-5.6h0m0 4.5h0m.3-8.7h0m.1 7h0m0 .7h0m.2-15.3h0m.2 2h0m0 2.1h0m.7-7.4h0m0-6.8h0m.1 19.3h0m.1-16.8h0m.3 1h0m.1 1.4h0m.3-7.2h0m.3 22.8h0m.1-18.4h0m0 14.1h0m.2-3.1h0m.1-9.4h0m.4 5.8h0m.2 18.7h0m.2-22.1h0m.1 13.8h0m.4-2.8h0m.1-5.7h0m.1 11.8h0m.1-9.3h0m.3 7.7h0m.1-16h0m.2-4.6h0m.2 1.7h0m.3 14.7h0m.3-9.1h0m.2 8.5h0m.1 8.8h0m.1-23.6h0m.5 9.6h0m.1 11.6h0m.2-15.8h0m0 7.5h0m.2 5h0m.2-8.9h0m.4 4.8h0m.1-11h0m.1-2.3h0m.5-1.3h0m.1 6.9h0m.3 13.1h0m.5-2.9h0m.2-4.9h0m.1-9.1h0m0 19.1h0m.4-12.7h0m.1-2.6h0m.3-1.1h0m.1 9.6h0m.7 12h0m.3-14.3h0m.1 3.2h0m.2 2.7h0m.3-6.9h0m.2-6.2h0m.1-10.5h0m0 6.3h0m.2 7.9h0m.1-9.6h0m0-2.6h0m.1 1.2h0m.1 4.1h0m.2 3.6h0m.4-2.6h0m.2 16.6h0m.2-4.5h0m.4-10h0m.3 12.7h0m.1-5.7h0m0-15.3h0m.1 21.4h0m.1-17.5h0m.2 6.9h0m.3 5.3h0m.2-3.5h0m.2-15.6h0m.1 6.8h0m.3 6.4h0m0-9.2h0m.3 17.2h0m.1-11h0m.7-8h0m.1 5.8h0m.2 7.6h0m0 1.9h0m.2 7.5h0m.1-1.2h0m.2-3h0m.1-8.7h0m.7-8.4h0m.1 1.9h0m.1 20.7h0m.3-6.4h0m.1-5.3h0m.4-3.9h0m.4 6.3h0m0-9.5h0m.2 15.6h0m0-14.2h0m.1 3.7h0m.3 14.6h0m.1-3.4h0m.5-.7h0m.4 7.3h0m.2-15h0m.1-10.1h0m.2 15h0m.2-1.1h0m.6 6.3h0m0 5.8h0m.1-21.7h0m.1 18h0m.1-16.5h0m.1 1.9h0m.1 4.1h0m.3 2h0m.1 2.5h0m.2-13.9h0m.2 2.8h0m.2-5h0m.7 17.9h0m.2-9h0m.4 11.9h0m.1-8.2h0m.4-7.1h0m.2 9.5h0m.2-4.7h0m0-12.6h0m.2 23.6h0m.2-19.5h0m.1-1.7h0m.2 8.3h0m.2-4.9h0m.2-7.4h0m.1-1.6h0m.1 7.9h0m.2-4.1h0m0 1.7h0m.1 17.9h0m.3 2.5h0m0-8.1h0m.2 10.9h0m.5-17h0m.1 5.8h0m0-3.2h0m.2 7h0m.3-1.2h0m.1 4.5h0m.7-12.9h0m.2-1.5h0m.3 16.4h0m.3 3.1h0m.2-13.2h0m.2 2.3h0m.1 2.9h0m.1 1.3h0m.1 2.7h0m.1-21.4h0m.1 1.3h0m.1 8h0m.4-4.1h0m.2 6.8h0m.2-8.6h0m.3 14.6h0m.2-9.1h0m.3-6.6h0m.1 12.1h0m.7-5.7h0m.1 11.7h0m.1 2.8h0m0-16.6h0m.3 8.4h0m.2-3.1h0m.4 6h0m.2-13.4h0m0 17.5h0m.5-22.8h0m0 1.1h0m.4-1.6h0m.1-2.6h0m.1 7.8h0m.1-1.2h0m.5 4.4h0m0 2.5h0m.2 5.6h0m.1-14.5h0m.2 18.6h0m.1-6.4h0m.8 3.5h0m.1-10.6h0m.1 15.6h0m0 1.5h0m.1-12.4h0m.1 6.5h0m.8-9.1h0m.1-2h0m.2 8.1h0m0 1.5h0m.4-8.8h0m.6 17.5h0m.2 4.4h0m.1-9.8h0m.1-7.2h0m.2 10.2h0m.5-12.8h0m.3 12.4h0m.2-4.8h0m.1 7.8h0m0-6.6h0m.5-10.5h0m.1 6.3h0m.1-10.9h0m.5 2.3h0m.2 5.8h0m.3-6.2h0m.1 16.4h0m.2-3.6h0m.1 5.9h0m.2-22.3h0m.6 8.9h0m.3 5.3h0m.2-14.5h0m.1 11.7h0m0-5.3h0m.4-6h0m.1 3.2h0m.4 8.1h0m.1 4.8h0m.4-6.1h0m0 4.2h0m.1-7.8h0m.2 18.4h0m0-6.8h0m.5-2.7h0m.4 2.3h0m.1 1.7h0m.3 1.4h0m.1-17.1h0m.4-3h0m.1 11.3h0m.3-15.8h0m0 2.4h0m.3 9.9h0m.2 5.7h0m.1-12.2h0m.2 4.5h0m.1 9.5h0m.1-4.8h0m.4-7.8h0m.5 14.7h0m.1-.7h0m0 4h0m.1 6.2h0m.1-5.9h0m.3 5.9h0m.1-3h0m.2-15.9h0m0-3.3h0m.4 9.1h0m.3 8.6h0m.1-9.9h0m.7 7h0m0-2.1h0m.2-7h0m.2 4.4h0m.2-13.1h0m.3 4.3h0m.3 17.4h0m.3-3.2h0m.1 5.4h0m.2-18h0m.1 4.3h0m.1 11.5h0m.2-6.5h0m.3-3.4h0m.3-10.3h0m.2 2.6h0m.4 4.4h0m.2 7.2h0m.3-2.3h0m.5 6.4h0m.1-19.9h0m.1 1.1h0m.1 14.1h0m.1-6.9h0m.1 12.1h0m.1-2.6h0m.4-11.3h0m.1-6.9h0m.1 11h0m0-7.1h0m.6 13.8h0m.1-4.9h0m.4 10.4h0m.3-1h0m.2-2.8h0m.1-19.4h0m.2 9.6h0m.1 1.6h0m.1-5.1h0m.2 9.4h0m.2-7.7h0m.1-4.9h0m.5-3.7h0m.2 3.5h0m.1 2.3h0m.3 13.7h0m.3-9.8h0m.1 5.6h0m.2-1.1h0m.6-12.7h0m.3 10.4h0m.1 6.8h0m.1-11.5h0m.3 6.7h0m.4 2.2h0m.1-7h0m.2 2.8h0m.1-13.5h0m.1 20.1h0m0-14.1h0m.2-1.7h0m.7-2.3h0m.2 14.5h0m.3-8.3h0m.1 3.7h0m.4-9.6h0m.3-3.3h0m.4 19.2h0m.1-14.1h0m0-4.4h0m.3 14.5h0m.3-7.2h0m.4 2.9h0m.2 1.8h0m.3 5.6h0m.2-12.8h0m.2 2h0m.2-5.6h0m0 19.8h0m.1-4h0m1.1-6.9h0m.2 15.9h0m.1-12.4h0m.3 7h0m.2 7.8h0m.1-23h0m.1 9.7h0m.2 6.9h0m.1-14.5h0m.1 11h0m.2-9.1h0m.1 7.2h0m.2-4.4h0m.2 11.3h0m.3-20h0m.5 17h0m.1 5.9h0m.3-21.7h0m.3 6h0m.5 12.4h0m.2-4.3h0m.1-11.3h0m.1 7h0m0 3.3h0m.2-2.6h0m.1-2h0m.3-4h0m.1-5.8h0m.5-7.9h0m.1 1.3h0m0 1h0m.1-2.3h0m0 3.6h0m.2-2.4h0m.3 4.5h0m.1 4.3h0m.4-3.6h0m.1 9h0m.1-7.3h0m.3 4.1h0m.1 5.1h0m.2 3.3h0m.3 6.9h0m.1-.6h0m.2-15.1h0m.2 5.3h0m.2 7.6h0m.3 8.2h0m.1-4h0m.4-14.3h0m0 17h0m.2-9.2h0m.6-12.8h0m.1 2.2h0m.1 12.9h0m.2-5h0m.2-12.4h0m.2 9.9h0m.4 10.1h0m.2-20.6h0m.3 15.6h0m.6-3.2h0m.2-5.2h0m.1-4h0m.1 21h0m.2-8.2h0m0-9.2h0m.1 13.5h0m.1-1.8h0m.2-18.8h0m.2 3.3h0m.1 6.5h0m.1-4.7h0m.7 8h0m.9-10.2h0m.1-4.3h0m.3-.4h0m.1 12.8h0m.2 2h0m.1 3.3h0m.1-8.5h0m.2 10.7h0m.1-16.9h0m.3 1.9h0m.3 6.2h0m.1-3.7h0m.8-3.6h0m.2 17.9h0m.3 .8h0m.3-16.9h0m.1 9.9h0m0-11.4h0m.2 7.1h0m.2 14.1h0m.1-11.6h0m.3 5.6h0m.1-1.8h0m.2-8.1h0m.2 18.5h0m.1-8h0m.3-13.3h0m.2-7.3h0m.3 7h0m.1 5.1h0m.2-2.3h0m.1 6.6h0m.1 7.2h0m.1-22.4h0m.2 23h0m.2-10.1h0m.5-9.3h0m.1 14.9h0m.8-12h0m.1 14.2h0m.1-11.1h0m.1 6.4h0m.1-13.5h0m0 10.5h0m.3 1.4h0m.5-5.4h0m.3-6.5h0m0-1.1h0m.2-2.3h0m.3 6.5h0m.3 14.3h0m.1 2.7h0m.2-12.2h0m.1 7h0m.1 6.1h0m.2-3h0m.1-8.1h0m.4-10.5h0m.4-3.8h0m.2 17h0m0-16.8h0m.1 5h0m.2 4.2h0m.3 10h0m.2-12.6h0m.4 11h0m.2-7.1h0m.2 13.2h0m.1-11.5h0m.1 10.2h0m.1-14.8h0m.2 7.4h0m.7-12.7h0m.1 22.1h0m.1-18.7h0m.1-5.1h0m.1 19.2h0m.1-16.3h0m.1 11.7h0m.1-12.1h0m.6 17.3h0m0-11.5h0m.2 8.2h0m.1-4.4h0m.1-7.2h0m.4 16.7h0m.2-10.8h0m.5-3h0m.1 19.5h0m.2-2.9h0m.2 4.1h0m.1-13.9h0m.3 11.5h0m.4-16.9h0m.2 9.2h0m.1-12.6h0m.3 10.1h0m.1 5.8h0m0 3h0m.3-21h0m0 9.5h0m.3-1.9h0m.2 5.5h0m.3-13h0m.2 2h0m.1 15.3h0m0-19h0m.3 6.6h0m.2-7.5h0m.3 12.2h0m0-14.1h0m.1-2.8h0m.7 23.1h0m.1-9.1h0m.4-8.7h0m.2 12.9h0m0 1.5h0m.4-2.7h0m.1-6.5h0m.2 16.8h0m0-19.2h0m.2 13.6h0m.2 2.8h0m.4-21.6h0m.5 11.8h0m.1-2.4h0m.1-7.3h0m.2 4.4h0m.1 7.5h0m.3 4.5h0m.1 4.6h0m.1-7.4h0m.5-9.8h0m.2 4.6h0m.2-12.3h0m.4 23.3h0m.1-12.6h0m.1-9.2h0m.4 4.4h0m.3 8.8h0m.2-10.7h0m.1 13h0m.1 2.5h0m.2 1.4h0m.2-11.6h0m.2 14.9h0m.2 1.6h0m.3-19.3h0m.4 5.3h0m.6-9.5h0m0 11.2h0m.2 3h0m.3 2.1h0m.1-9.1h0m.3 13h0m.1-18.8h0m.2 2.6h0m.2 15.1h0m.4-14.3h0m.5 4.5h0m.4 11.5h0m.1-7.9h0m.1 5.3h0m.1-3.4h0m.6 12.6h0m.1-21h0m.1 3.7h0m.2-10.9h0m0 .2h0m.1 2.8h0m.5 19.3h0m.1-3.6h0m.2-14.5h0m.2 25.2h0m.1-3h0m.2-13.3h0m.1 16.3h0m.3-12.1h0m0 7.7h0m.2-11h0m.2 8.2h0m.1-13.6h0m.1 17.4h0m0-15h0m.3-3.5h0m.3 12h0m.1 3.9h0m.5-11.3h0m.1-8.8h0m.1 17.9h0m0-16h0m.1 11.7h0m.8-17.1h0m.1 9.8h0m.5 5.8h0m0-9.9h0m.3 6.1h0m.2-7.6h0m.1 4.2h0m.2 10.6h0m.1 8.4h0m0-1.2h0m.2 2.8h0m.2-4.7h0m.1-2.9h0m.3-6.2h0m.4 8.8h0m.3-10.5h0m.1 13.5h0m.7-16.7h0m0-7.6h0m.2 14.2h0m.2-10.9h0m.1-2.1h0m.2 2.9h0m0 1.5h0m.1 11.3h0m.4 2.1h0m.2-9.7h0m.1 7.1h0m0-5.2h0m.1 2.1h0m.1 6.5h0m0 2.4h0m.1-6.8h0m.5-19.5h0m.1-.5h0m.1 1.3h0m.2 2.1h0m.3-.6h0m.2-2.8h0m.2 9.6h0m.2-5.5h0m.2 2.8h0m.1 4.5h0m.3 2.7h0m.1 3.3h0m.4-9h0m.3 13.5h0m0-15h0m.1 13.1h0m.4 2.5h0m0 4.9h0m.6-8.5h0m.2-19h0m.2 13.8h0m.3-2.4h0m.1-3.3h0m.1 7.8h0m.2 9.1h0m.2-8.1h0m.2 6h0m.1-16.7h0m.1-2.3h0m.1 17.4h0m.2-7.8h0m.7-2.9h0m.1-1.9h0m.1-2.1h0m.6 13h0m.2 11.9h0m.2-7.3h0m0-8.2h0m.1 11h0m.1-.9h0m.4-13.7h0m.3-8.7h0m.1 18.5h0m.5-16.6h0m.1-5.1h0m.2 1.7h0m.2-1.6h0m0 9.1h0m.1-5.8h0m0 3.2h0m.1 10.3h0m.3-3.9h0m.1 9.8h0m.1-7.9h0m.2 4h0m.9-7.3h0m.3 5.9h0m0 3.3h0m.3 3.9h0m0-16.9h0m.1 15.8h0m0 2.3h0m.2 2.2h0m.4 2.2h0m.1-1h0m.1-9.9h0m.1 11.7h0m.1-4.7h0m.1 .9h0m0-12.1h0m.1-4.4h0m.2 1.7h0m.4-6.8h0m0 3h0m.1 12.2h0m.3-5.7h0m.1-9.2h0m.2-7.8h0m.5 19.1h0m.4 6.5h0m.3-.1h0m0-5.9h0m.2-7.5h0m.2 3.2h0m.4 6.9h0m.4-13.1h0m.1-3.4h0m.3 6.7h0m.3 15h0m.1-12h0m.1 1.7h0m.2-7.1h0m.5 14.6h0m.3-20.6h0m.1 17.9h0m.1-13.6h0m.1-1.9h0m.2 13.5h0m.3-4.3h0m.1 15.2h0m0-21.3h0m.4 3.7h0m.3 5h0m.4-5.6h0m.3 15.5h0m0-4h0m.1 7.7h0m.4-5.8h0m0-4.2h0m.1-1.6h0m.3 10.7h0m.1-5.1h0m.1-16h0m.2 23.1h0m0-24.8h0m.2 7.4h0m.2-3.9h0m.5 9.3h0m.3-3.8h0m.2-10.9h0m.1 14.2h0m.4 3.9h0m.1-20.4h0m.2 10.9h0m.2-11.4h0m0 6.1h0m.4-2.8h0m.3-2.5h0m0 17.8h0m.2-9.4h0m.5 6.9h0m.1-1.9h0m.2 7.5h0m0-16.9h0m.5 11.5h0m.2-8.9h0m.1 14.2h0m.1-9.3h0m.2 5.8h0m.3-9.3h0m.2 10.6h0m.6-15.6h0m.3 2.4h0m.6 8.9h0m.1-1.2h0m0-13.6h0m.1 20.4h0m.2-10.5h0m.2 11.8h0m.3-17.2h0m.1 12.3h0m.4-8.7h0m.4 3.9h0m0 12.4h0m.3-8.4h0m0 5.1h0m.1-2.5h0m.3-8.2h0m.3-5.5h0m0 7.9h0m.4-12h0m.1-.6h0m0 3.5h0m.3 13.5h0m.1-9.4h0m.3 12.9h0m.1-16.5h0m.3 9.3h0m.3-8h0m.3 5h0m.2 13.6h0m0-1.9h0m.2-9.7h0m.2 16.7h0m.2-4.3h0m.1-8.8h0m.1 4.9h0m.2-2.4h0m.2 10.6h0m.2-6.7h0m.1-18.5h0m.2 4.6h0m.7-2.6h0m.2-3.2h0m0 11h0m.3-3.2h0m.2-2.4h0m.1 9h0m.1-13.3h0m.2 22.9h0m.2-7.7h0m.5 3.5h0m.3-3.4h0m0 2.5h0m.4-5.4h0m.1-11.6h0m.4 2.9h0m.3 6.9h0m.2-1.5h0m.2-2.2h0m.2 11.7h0m.2-2.8h0m.1-14.2h0m.1 18.5h0m.1 4.2h0m.4-11.3h0m.1-12.8h0m.2 4.4h0m.7 5.6h0m.2-2.7h0m.2-10.7h0m.1 1.5h0m.1 15.7h0m.3-5.2h0m.1 7.7h0m.2-24.1h0m.2 9h0m.1 2.7h0m.7 7.6h0m.4-14.1h0m0 3.2h0m.7 5.8h0m.2-4.6h0m.4 6.9h0m.1 7.3h0m.1-2.2h0m.2 2.5h0m.1-6.3h0m.3-5.5h0m.3-2.1h0m.2 3.8h0m.1-12.4h0m.2 2.7h0m.3 16.1h0m.2-12.1h0m.5 3.8h0m.2 4.7h0m.5 6.5h0m.1 2.5h0m.1-5.9h0m.1 8.7h0m.2 2h0m.3-16.7h0m0-7.9h0m.2 1.4h0m.1 1.9h0m0 8.7h0m.2-4.4h0m.3-1.4h0m.1 11.1h0m.7-7.1h0m.3 4.3h0m0 12.4h0m.1-8.3h0m.2 3.2h0m.5 1.9h0m.1-2.8h0m.1 5.6h0m0-13.6h0m.2-3.3h0m.5-9.3h0m.2 4.4h0m0 1.7h0m.2 7.3h0m0 3.4h0m.4 5.9h0m.7-3h0m0-18.7h0m.4 3.3h0m.3 6.5h0m.2 4.6h0m.1-8.5h0m.2 2.2h0m.1 11.7h0m.4-16.4h0m.1-3.1h0m.1-1.5h0m.1 12.1h0m.2 3.1h0m0 2.8h0m.5-22.4h0m.1 1.1h0m0-2.8h0m.2 0h0m.1 .6h0m0 3.7h0m.4 .8h0m0-2.3h0m.3 11.6h0m.2-2.1h0m0-5.3h0m.3 2.8h0m.1 6.5h0m.2 6.1h0m.4-3h0m.1 3.6h0m.2 2.1h0m.1 7.2h0m.3-2.3h0m.4-14.9h0m.5-7.5h0m.3 10.2h0m.1 2.5h0m.1-7.1h0m.1-2.5h0m.6 17h0m.1-6.3h0m.2 4.6h0m0-1.5h0m.1-20.7h0m.3-.3h0m.2 16.4h0m.2-14h0m.3 17h0m.2-10.9h0m.1-2.9h0m.2 6.7h0m.7 1.2h0m.6-2.7h0m.1 6.6h0m.1-12h0m0 1.7h0m.1-4.4h0m.4 17.5h0m.3-5.2h0m.1-.9h0m.3 9.9h0m0-1.8h0m.6-11h0m.3 13.8h0m.1-.6h0m.1-16.1h0m.3 9.9h0m.3 11.2h0m0-7.8h0m.3-17.3h0m.3 1.7h0m.1 8.3h0m.1-2.6h0m.1 4.9h0m.6-8.1h0m.5 7.8h0m.2 2.5h0m.1-11.1h0m0-3.4h0m.1 17.6h0m.6-7.7h0m.1-2.7h0m.1 14.4h0m.1-20.5h0m.1 23.7h0m.1 .3h0m.2-5.6h0m.6-13.6h0m.1 5.4h0m.1 13.3h0m.3-9.7h0m0 8.5h0m.1-2.6h0m.1-2.6h0m.1-10.1h0m.4 11.4h0m.1-8.8h0m.1-7.2h0m.5 11.8h0m.1-23.1h0m.1 20.2h0m.1-10.3h0m.3 5.5h0m.1 10.9h0m.5-22.2h0m.1 10.3h0m.1-6.8h0m.2 3.9h0m.1 10.8h0m.3-4.4h0m.3-9.7h0m.2 8.8h0m.1-8.2h0m.3 16.3h0m.1-14.1h0m.3 9.7h0m.2 12.2h0m.1-3.7h0m.1-.7h0m.1-2.1h0m.1-3h0m.3 1.7h0m.1-11.1h0m.3-2.9h0m.2 8.5h0m.2-3h0m1 4.2h0m.1-7.3h0m.1 15.6h0m.4-5.6h0m.1 5.6h0m.1 3.1h0m.1-14.4h0m.2 9.2h0m.1-6.5h0m0 1.4h0m.1-12.2h0m.5 2.5h0m.2 3.8h0m.3-9.1h0m.3 18.7h0m.3-1.5h0m.3-7.9h0m.2 14.8h0m.1-16.1h0m.1 14.3h0m.1-8.1h0m.1 4h0m.2-13.7h0m.1-1.6h0m.1 9.1h0m.2-12.7h0m.2 11.4h0m.1-2.1h0m.8 7.5h0m.1-16.4h0m.1 7h0m.4-3.8h0m.3-9h0m.4-.3h0m.3 16.8h0m.1-10.8h0m.2 13.7h0m.1-6.1h0m0-2.9h0m1 13.1h0m0-2.3h0m.1-16.4h0m0 20.7h0m.4-9.3h0m.3-8.1h0m.4 14.3h0m.1-9.1h0m0 6.3h0m.1 1.2h0m.1-10.4h0m.1 17.9h0m1.1-12.8h0m.1 9.7h0m.1-14.6h0m.1-9.2h0m.1 4.8h0m0 1.5h0m.2-2.1h0m.4 8.2h0m0 6h0m.2-2h0m.1 12.3h0m.1-10.8h0m.3 8.8h0m.1-26.9h0m0 24.1h0m.1-1h0m.1-2h0m.2-5.7h0m.6-5h0m0-3.6h0m.4-3.6h0m.2 13.3h0m.1-15h0m.2 10.9h0m0-3h0m.2 10.9h0m.2-8.5h0m.3 15.4h0m.4-12.3h0m0 7.7h0m.7-18.1h0m.1-3.5h0m0 17.9h0m.3-12.5h0m.2 15.2h0m.2-13.8h0m.2 1.2h0m.1 7.6h0m.4-4.1h0m.4-13h0m.2 3.4h0m.4-2.3h0m0 17.9h0m.4-11.2h0m.1-5.2h0m.1 12h0m0-2.8h0m.1 12.7h0m.3-19.4h0m.3 10.7h0m.1 6.2h0m.1-16.7h0m.1 14.2h0m.1-6h0m.2-4.6h0m.3 15.5h0m.1 1.3h0m.1 5.7h0m.1-9.9h0m.8-3.8h0m.2-18.3h0m.1 12.1h0m.1-13h0m.1 4.9h0m.4 10.7h0m.2-6.2h0m.1 13.2h0m0-1.2h0m.3-13.7h0m.2 22.6h0m.2-17.3h0m.2 5.7h0m.1-7.8h0m.1 22h0m.1-7.5h0m.3 2.5h0m.1 4.1h0m.3-17.4h0m.1 12.1h0m.1-9h0m.6 7.6h0m.2-5h0m.1 2.8h0m.2-17.2h0m.3 23.5h0m.1-17.7h0m.1-1.2h0m.2-6.6h0m.1 15.2h0m.3-2.4h0m0-8.3h0m.5-3.4h0m.4 8.7h0m.2 6.8h0m.4 3.9h0m.4-14.6h0m.1 11.6h0m.1-4.3h0m.1-6.2h0m.1 14.4h0m.3-11.1h0m0-7.6h0m.3 10.6h0m.2 8.1h0m.1-9.8h0m.1 9.4h0m.4-3.8h0m.1-10.1h0m.4-3.5h0m.1 11.9h0m.4 5.4h0m.4-5.8h0m.4 9.6h0m.2-15.3h0m.1 7.6h0m.3-4.6h0m.1 6.2h0m.1-12.9h0m.2-2.1h0m.1 19.9h0m.1-12.1h0m.1-11.7h0m.1 7.7h0m.2 20.3h0m.2-25.8h0m.1 4.3h0m.3 6.6h0m.4 10.1h0m.1-1.9h0m0 6.1h0m.3-1.8h0m.2-10h0m.3-6h0m0 7.5h0m.1 1.8h0m.3-9.7h0m0-5.8h0m.2 12.1h0m.4-18.5h0m.1 14.8h0m.2-5.7h0m.1-2.5h0m.1 1.9h0m.3-.5h0m.3 20.1h0m.4-11.4h0m0 13.5h0m.1-8.4h0m.1 2.9h0m.2-13.1h0m0 15.2h0m.3 3.1h0m.2-16.9h0m.1 7.1h0m.1 8.9h0m.2-19.6h0m.1 12.6h0m.7-6h0m.3-3.8h0m.1-2.5h0m0 8.5h0m.3 5.3h0m.4 3.2h0m.3-7.2h0m0-5.5h0m.7 10.7h0m.2 3.2h0m.1-17.2h0m.3 11.4h0m.1-2.5h0m.2-10.9h0m.2 17.5h0m.3-9.6h0m0 1.6h0m.2-13.1h0m.3 8.1h0m.1-6.1h0m.2-4.4h0m.2 8.6h0m.4 18.9h0m.2-9.3h0m.2-14.3h0m.3 9.7h0m.1-7.2h0m.1-6h0m.3 21.1h0m.2-10.8h0m.2 5.2h0m.1 8h0m.1-23h0m.5 22.9h0m.1-16.1h0m.1 4.8h0m.1 8.9h0m.1-2.5h0m.2-13.2h0m0 11.9h0m.3-13.5h0m.4-3.6h0m.1 26.3h0m.3-17.4h0m.4 5.6h0m.1 5.1h0m.3-12.7h0m.4 3.3h0m.6-6.5h0m0-2.5h0m.1 11.7h0m0 8.5h0m.2-3.8h0m.3 3h0m.5-13.1h0m.1-2.9h0m.1 11.8h0m0-16.6h0m.3 .3h0m.2 9.6h0m.1-7.3h0m.6 9.3h0m0 11.3h0m.1-4.3h0m.1 7h0m.2-11.2h0m.1 8h0m.7-16.1h0m.3-1.3h0m0 7.2h0m.1-10.9h0m.1 15.7h0m.2 4.3h0m.1-11.8h0m.2 13.9h0m.4-19.3h0m.1 16.1h0m.3-5.3h0m.3 7h0m.1-8.1h0m.1-6.7h0m.3 10.5h0m0 1.6h0m.1-7.7h0m.5-12.1h0m.2-1.8h0m.1 4.4h0m.3-5.6h0m.1 5.9h0m0-2.3h0m.2 9h0m.2-4.3h0m.2 2.1h0m.5 7.5h0m.1-3h0m.2-2.5h0m.1 12.2h0m.2 1.4h0m.2-7.4h0m.4 4.2h0m.1-1.9h0m.6-3.4h0m.1-11.4h0m.2 19.6h0m.2-10.7h0m.2-6.3h0m.1 1.6h0m.1-6.8h0m0 17.7h0m.3-9.4h0m.1 1.8h0m.4-5.2h0m.4 16.4h0m.1-19.3h0m.1 14.2h0m.3-10.2h0m.1 7.9h0m.1 13.4h0m.1-6.6h0m.1 2h0m.5-2.3h0m.1 3.8h0m0-14.9h0m.1 9h0m.2-5.9h0m.8-8.2h0m.1 4.5h0m.2 4.6h0m.2 6.2h0m.1-1.5h0m.2-11.8h0m.2 4h0m.2 5h0m.2-13.4h0m.2 1.2h0m.2-3.2h0m.1 5.9h0m.4 16.5h0m0-12.5h0m.1 14.8h0m.2-13.3h0m.2-13.9h0m.3 2.6h0m0 18.8h0m.3-.7h0m0-4.7h0m.1-8.3h0m.3 3.7h0m.2 7.8h0m.1-10.3h0m.4-4.1h0m.2 23.6h0m0-4.9h0m.3-9.6h0m.1 11.3h0m0 6h0m.2-10.2h0m.1 7.9h0m.4-3.7h0m.3-7.9h0m.1 13.5h0m.4-21.1h0m0 22.1h0m.6-20.5h0m.4-5.6h0m.1 13h0m.1 7.9h0m0-12.7h0m.2 8.1h0m.4-15h0m.1-.6h0m.1 17.7h0m.2-7.9h0m.2-1.6h0m.1 4.1h0m.2 2h0m.1-11.7h0m.1-6.4h0m.5 21.4h0m.3-12.5h0m0 4.9h0m.6-5.8h0m.3 11.2h0m.3-14.7h0m.2 18.4h0m.2-11.3h0m0-5.5h0m.1 4.1h0m.2 5.8h0m.2 11.6h0m.3-7.3h0m.2 5.8h0m.2 3.1h0m.3-16.4h0m.2-10.1h0m.4 20.4h0m0-2.7h0m.1-3.1h0m.2-8.7h0m.2-6.8h0m.2 27.4h0m.1-14.8h0m.2-6.9h0m.1 19.7h0m.1-17.4h0m0 13.7h0m.4-.3h0m.5-3.5h0m.1-14h0m.5-5.6h0m.1 12.4h0m.1 4.2h0m.4 8h0m.1-1.7h0m.5-13.8h0m.1 4.9h0m.1 10.4h0m.2-18.2h0m.3-2.1h0m.1 19.5h0m.2-4.5h0m.2-3.9h0m0 6.9h0m.1-11.4h0m.2 10h0m.2-6.5h0m.4-13.6h0m.2-1.6h0m.1 17.8h0m.2-14.2h0m.4 8.5h0m.1-3.1h0m.1 6.4h0m.4 6.9h0m.2-15.5h0m0-3h0m.1 15h0m.3-12.9h0m.1 9.6h0m.3-4.5h0m.1-3.4h0m.5 13.4h0m.1 3.7h0m.2 1.6h0m.1-13.1h0m.4 4.6h0m.4-.8h0m.1-10.7h0m.1 16.7h0m.2-8.2h0m.2-16.4h0m0 4h0m.1 10.6h0m.2-3.5h0m0-8.4h0m.1-3.2h0m.3 7.2h0m.2-1.6h0m.4 3.5h0m0 5.7h0m.1 6.2h0m.3 3h0m.1-12.2h0m.3 5.7h0m.3 9.6h0m.3-11.5h0m.5 11.5h0m.2-1.8h0m.1-5.1h0m.2-14.6h0m.2 3.6h0m.1-2.2h0m.2 9.5h0m.2-3.4h0m.4 5.4h0m0-14.9h0m.1 18.9h0m.3-12h0m.6 14.3h0m.1-22h0m.1 10.4h0m.1 14h0m.2-19.7h0m.3-1.9h0m.1 10.5h0m.4 3.6h0m0-18.5h0m.1 9.5h0m.5-6.5h0m.3 11.9h0m.2 6.4h0m.2-11.2h0m.3 20.9h0m.1-6.6h0m0-16.9h0m.1 19h0m.1-8.9h0m.1-5h0m0 8.1h0m.5-7h0m.4-7.9h0m.4-3.9h0m0 15.5h0m.3-9.5h0m.1-4.5h0m.4 7.3h0m.1 10.6h0m.1 6.9h0m.1-14.4h0m.1 11.5h0m.1 3.6h0m.1-9.8h0m.1 4.5h0m0-11.8h0m.1 4.7h0m.1 7.2h0m.1-13.9h0m.3 15.7h0m.3 4.2h0m.2-11.3h0m.1 3.5h0m.1-16.3h0m.2 4.7h0m.4-4.8h0m.3 14.1h0m.1-11.8h0m.3-6.7h0m.1 13.7h0m.2 .7h0m.2-6.1h0m.1-6.2h0m.1 9.6h0m.3 11.5h0m.5-3.3h0m.2-3.5h0m.3-3.4h0m.2-.9h0m.4-5.8h0m.6 12h0m.1-9.1h0m.3 12h0m.2 3.5h0m.3-9.4h0m.2 14.6h0m.2-9.2h0m.2-1.6h0m.1-14.8h0m.3 19.4h0m.1 3h0m0-13.2h0m.2-5.8h0m0 3.2h0m.5 6.2h0m.7-6.3h0m.2 5.5h0m.1-1.9h0m.3-11.8h0m.1 3.2h0m.1 9.2h0m.5-17.9h0m.2-.9h0m.1 2h0m0 2.7h0m.1-1.3h0m.6 8.6h0m.1-5.7h0m0 2.4h0m.1 7.6h0m.2-8.7h0m.1 7.5h0m.6 5.8h0m.1-3.3h0m.1 4.3h0m.2 4.4h0m.1-2.5h0m.1-10.5h0m.7 2.9h0m.1-15.4h0m.2 9.4h0m.1-4h0m0-5.4h0m.1 3.2h0m.3 5.3h0m.1-7.7h0m.4 17.3h0m.4-3.7h0m.1 6.8h0m.2 2.8h0m.7-12.4h0m.1 13.2h0m0-13.5h0m.5 4.9h0m.3-9.6h0m.1 14.1h0m.1-16.4h0m.1 9.4h0m.2 6.2h0m.3-8.4h0m0-3.2h0m.2 15.9h0m.6-22.2h0m0 20.9h0m.2-16.8h0m0 3.5h0m.1 7.4h0m.1-12.7h0m.6 22.4h0m.1-8.1h0m0-3.6h0m.6 9.6h0m.4 8.3h0m0-11.3h0m.3-16.2h0m.1 1.4h0m0 5.9h0m.2 3.9h0m.3-5.9h0m.7-.1h0m.1-.9h0m0 9.3h0m.1-6.7h0m.3-7.7h0m.2 9.6h0m.4 9.1h0m.1-6.5h0m.5 3.2h0m.2-11.5h0m.1 18.1h0m.1-3.3h0m0-16.6h0m.2 18.8h0m.8-16.4h0m.1 8h0m.1-5.8h0m0 1.4h0m.2 7.7h0m.2-15.1h0m.2 10.3h0m.1 8.3h0m.3-20.5h0m0 7.5h0m.4 5.8h0m.8-2.2h0m.3-6.7h0m.1 11.5h0m.4 3h0m.1 3.3h0m0-6.4h0m.3-12.1h0m.1-4.3h0m.2 2.5h0m0 6.6h0m.1 10.9h0m.1-12.3h0m.3 5.5h0m.6 12.5h0m.2-18.7h0m.1 19.3h0m.2-8.9h0m.1 5.8h0m.2-12.3h0m.3-2.3h0m.1 5.6h0m.4-9h0m.4 15h0m.1 5.5h0m.1 3.5h0m.5-23.4h0m.1 16.1h0m.1-8.2h0m.3 3h0m.4-7.8h0m0 2.6h0m.3 11.5h0m.5-17.1h0m0 8.1h0m.2 5.5h0m.3-4.3h0m.2 10.4h0m.2-4.2h0m.3-15.5h0m.3 20.3h0m.1-7.5h0m.3-1h0m.1-10.1h0m.1 7.1h0m.2-3.2h0m.2 12.7h0m.2-14.4h0m.1 12.3h0m.7-5.6h0m0-9.6h0m.6-6.2h0m.1 18.9h0m.3-6.9h0m.1-8.9h0m.1 1.3h0m.3 6.3h0m.3-1h0m.1 12.3h0m.1-9.1h0m.3 3h0m.1-10.2h0m.4 2h0m.1 7.3h0m.5 4.4h0m0-2.2h0m.2 7.1h0m.6-14.8h0m.4 15.5h0m.2-12.5h0m.1 6.6h0m.1 3.2h0m0-13.1h0m.5-2.8h0m0 8.4h0m.1 2.9h0m.2-12.2h0m.5 16.4h0m0 1.1h0m.6-18.3h0m.1 9.2h0m.3 1.7h0m.1-4.6h0m.2 10.7h0m.2-21.5h0m.2 8.6h0m.1-7.1h0m.2 17h0m.4-13.1h0m.6 9h0m.1-5.5h0m.1-6.8h0m.5 10.4h0m.1 5.9h0m.5-10.4h0m.1 16.8h0m.1-8.4h0m.1 8.9h0m0 3.9h0m.1-24.7h0m.1 16.9h0m0-9.7h0m.6 15.6h0m0-7.1h0m.4 4.9h0m.1 4.1h0m.4-14.9h0m.2-15.6h0m.3 6.9h0m.1 4.5h0m0 6.9h0m.1-5h0m.1-8.2h0m.1 5h0m.2 10.5h0m.1 3.6h0m.4 4.1h0m.3 2.2h0m.4-24.4h0m.1 20.1h0m.1-3.7h0m.1-15h0m.1 11.4h0m.1-6.7h0m.4 3.7h0m.2-11.9h0m.6 6.4h0m.3 13.5h0m.1-3.7h0m.3-6.6h0m0 5.5h0m.1-11.9h0m.9 9.6h0m.2-14.5h0m.1 3.4h0m.5 10.2h0m0 7.8h0m.2-12.8h0m.1-1.6h0m0-4.9h0m.1 16.6h0m.3 4.1h0m.5-8.1h0m.1-10.2h0m.2 6.5h0m.2 6.5h0m.1-2h0m.1 5.9h0m.6-19.4h0m.3-3.9h0m.2 1h0m.1 10.1h0m.1-8.1h0m.1 4.1h0m0-5.2h0m.1 12.1h0m0-15.6h0m.1 2.3h0m.3 9.2h0m.1 11.8h0m.1 2.6h0m.6-8.9h0m0 4.3h0m.2-11.3h0m0-.3h0m.1-3.2h0m.1 5.7h0m.3 7.6h0m.1-4.5h0m.6 9.3h0m.4 3.6h0m.1 3.5h0m.3-2.7h0m.2-14.5h0m.2 8.3h0m.1 3.5h0m.2-14h0m.1 5.5h0m.2-8.8h0m.3 16.5h0m.3-17.6h0m.1 21.6h0m0-25.4h0m.2 19.5h0m.1-3.7h0m.1-4.9h0m0-14.9h0m.2 7.1h0m0-3.8h0m.2-3.7h0m.6 11.9h0m.3 3.7h0m.1-11.8h0m.2 4.1h0m0-4.7h0m.1 3.2h0m.2 4.8h0m.2 6.9h0m.1 5.3h0m.4-2.4h0m.2 1.8h0m.2 3.5h0m.7-12.7h0m.2-3.9h0m.3 8.8h0m0 6.6h0m.1-13.3h0m.2 3.5h0m.2-9.9h0m.2 2.5h0m.4 6.5h0m.1-7.8h0m0-1.9h0m.2 15.3h0m.2-2.6h0m.6 4.6h0m.4-12.9h0m.1 2.6h0m.4 14.2h0m.1-12.1h0m.1 10.7h0m.2-6.8h0m0-12.5h0m.6 21.6h0m.1-1.3h0m.3-9.6h0m0-4.4h0m.3 9.1h0m.1-4.9h0m0-8.5h0m.3-4.5h0m.1 19.7h0m.4-16.9h0m.5 3.7h0m0-1.7h0m.4 5.3h0m.1 5.8h0m.2 1.2h0m.1 11.3h0m.1-26.7h0m.1 10.2h0m.3-4.4h0m.1 16.4h0m.1-1.2h0m.1-7.3h0m.2 10.4h0m.1-4.1h0m.3-2h0m.2 6.8h0m.4-21.5h0m0 17.2h0m.3-14.8h0m.1-4.4h0m.2 7.1h0m.1 5.8h0m.1-2.9h0m.1-16.6h0m.4 20.3h0m.1-14.2h0m.9-.4h0m.2 17h0m0-2.5h0m.2 3.5h0m.2 2.5h0m0-14.3h0m.1-3.1h0m.3 8h0m.1-2.3h0m.3-11.6h0m.1 5.2h0m.6 5.1h0m.1-3.1h0m.1 7.4h0m.3-12.4h0m.4 17.1h0m.4-18.8h0m.2 21h0m.1-4.8h0m.2-12h0m.3 14.9h0m.2-11.3h0m.1 3.9h0m.7-8.1h0m.1 6.7h0m.1-10.7h0m.6 11.5h0m.1 2.6h0m0 14.2h0m.1-26.9h0m.1 17.5h0m.1-9.9h0m.1-8.4h0m.1 14.7h0m.1-8.8h0m.1 12h0m.3 3.3h0m.4-4.6h0m.1 7.5h0m0 2.7h0m.4-12.9h0m.1-9.6h0m.1 2h0m.3 12.5h0m.2-14.4h0m.2 6.7h0m.1 15.5h0m.1-16.8h0m.5 11.5h0m.1 3.2h0m.8-8.1h0m.1 3h0m.2-4.5h0m0-12.2h0m.1 4.6h0m.1 5.5h0m.5-16.4h0m.1 4.8h0m.3-.8h0m0-4h0m.1 1.5h0m.1 .7h0m.1 6.5h0m.3 1.4h0m.1-7h0m.1 9.1h0m.1 1.8h0m.7 4.5h0m.1 5.1h0m.3-2.1h0m0-16.2h0m.2 11.7h0m.1-8.6h0m.1 11.4h0m.4-5.2h0m.1-2.7h0m.3 12.4h0m.2-18.6h0m.6 11.4h0m.1-.8h0m.4-7.4h0m.3 3.4h0m.2 9.2h0m.2 .9h0m.7-16.1h0m.1 13.7h0m0-6.4h0m.2 11.8h0m0 2.9h0m.4-10.2h0m.4 9.9h0m.1-12h0m.2 10.3h0m.4-19.8h0m.1 4h0m0-1.5h0m.1 14.7h0m.1-3.3h0m.2-8.3h0m.7 1.5h0m.4 17.1h0m.2-11.7h0m.1-13.1h0m.1 9.9h0m.5-6.1h0m0 13.4h0m.4-2h0m.5-8.9h0m.1 11.3h0m0-15.7h0m.1 10.8h0m.1-12.9h0m.5 10.3h0m.4-1.5h0m.6-3.5h0m.2 12.4h0m.1-3.6h0m.4 5.9h0m.1-10.4h0m0-2.5h0m.4-5h0m.2-1.3h0m.5 10.7h0m.2 13.4h0m.1-4.7h0m.1 6.6h0m.4-10.2h0m.1-11.6h0m.3-4.4h0m0 14.4h0m.4-7.3h0m.2 1.2h0m.4-7.3h0m.1 17.3h0m.3 3.4h0m.1-10h0m.1-7h0m.1 1.9h0m.2 6h0m.4 9.9h0m.2-18.1h0m.2 22.2h0m.1-10.5h0m.4 2.8h0m.1-9.9h0m.6-5.3h0m0 8.4h0m.1 8.1h0m.1-13.4h0m.2 7.5h0m.2 1.8h0m.7-6.3h0m.4 6.1h0m.1-14.9h0m0 7.4h0m.1-3.3h0m0 20.8h0m.3-26.9h0m.5 19.9h0m.1-5.3h0m.2-10.9h0m.1 14.7h0m.2 3.2h0m.2-10.3h0m.4-3.5h0m.4-7.2h0m.3 2.2h0m.1 9h0m0-7.2h0m.6 12.1h0m.1 3.1h0m.1 2.7h0m.2-8.4h0m.2-13.4h0m.2 8.5h0m.1-1.6h0m0 9.3h0m.1 4.7h0m.3-.5h0m.3-3.3h0m.4-6.3h0m.3-10.6h0m.2 4.9h0m.1 3.5h0m.1 .8h0m.6 2.9h0m.2-6.9h0m0 11.7h0m.2-13.7h0m.2 16h0m0-4.7h0m.1 6.3h0m.7-13.3h0m.6-6h0m.5 11h0m.2-2.4h0m.2 6.1h0m.1-7.5h0m.1-3.7h0m.3 14h0m.3 2h0m.3-17.5h0m.1-3.2h0m.1 22.6h0m.2-10.3h0m.1-6.4h0m.1-5.4h0m.2 9.8h0m.1 4.5h0m.6 3h0m.5-10.6h0m.2 17.4h0m.1-3h0m.2-15.1h0m.2-3.4h0m.1 9.4h0m.4 7.4h0m.1-9.7h0m.5 5.9h0m.2 4.7h0m.1 5.6h0m.3-12.5h0m.1 8.1h0m.1-12.7h0m.3-5.1h0m.2 19.8h0m.1-13.9h0m.4-3.3h0m.3 11.4h0m.1-15.8h0m.1 14.7h0m.1-18.8h0m.1 1.1h0m0 1.2h0m.1 3.9h0m.6 7h0m.2 3h0m.2-16.8h0m0 10.1h0m.1 10.2h0m.1-16.9h0m0 7.4h0m.2-15h0m.5 3.6h0m.2 16h0m.3 2.5h0m.1-11h0m.4-3.3h0m.4-1h0m.2 10.1h0m.2-16.9h0m0 13.6h0m.1-13.6h0m0 2.9h0m.5 1.7h0m.2 1.7h0m0 2.4h0m.4 16.7h0m0-7.3h0m.1 6h0m.1-.9h0m0-12.2h0m.1 14.8h0m.2 1.8h0m.1 .7h0m.1-8.1h0m.2 4.4h0m.2-8.8h0m.1 2.8h0m.2 10.6h0m.5-15.7h0m.3-1.6h0m.3-3.1h0m.2 7.3h0m.1-10.1h0m.1 .6h0m.3-2.1h0m.1 17.5h0m.2-2h0m.1-11.1h0m.6 16.1h0m0-13.4h0m.2 5.1h0m.4-3h0m.3 13.2h0m.1 .6h0m.7-7.1h0m.1-7.7h0m.2 10.1h0m.1-13.4h0m.2 8.6h0m.2-9.8h0m.3 19h0m0-12.7h0m.4 10h0m.3-.8h0m0-7h0m.1-3.7h0m.1 7.5h0m.2-12.7h0m.8 3.2h0m.6-.1h0m.4 5.3h0m.1 5.1h0m.1-7.9h0m.1 4.7h0m.1-8.6h0m.1 16.4h0m.2-2.7h0m.3-2.3h0m.1 6.9h0m0-12.7h0m.1 1.1h0m.2 5.8h0m.5-24.7h0m.1 1.9h0m.1 2.9h0m.1-.5h0m0 2.8h0m.2 3.6h0m.3-1.3h0m.1-3.1h0m.1 7.3h0m.1-4.7h0m.6 6.7h0m.1 6.7h0m0-1.4h0m.1-6.6h0m.2 3.4h0m.2-7.2h0m.4 16.3h0m.1-1.1h0m.2-14.6h0m.2 22.7h0m.2-15.8h0m.1 10.2h0m.2 4.6h0m0-2.7h0m.1-7.1h0m0-3.6h0m.3-4.2h0m.1 11.3h0m.4-21.3h0m.3 7.3h0m.1-2.6h0m.3-2.9h0m.2 14.2h0m.2 .8h0m.1 7.5h0m.4-17.2h0m0 12.4h0m.2-20h0m0 12.4h0m.3 1.3h0m.1-11.3h0m.3 2h0m.2 18.4h0m.3-6.6h0m.1-6.2h0m.2 16.4h0m.1-19.4h0m.1 19.6h0m.2-5.8h0m.5-3.8h0m.2-4.8h0m.1 6.9h0m.1-5.8h0m.6 14.2h0m.2-2.3h0m0-6.8h0m.3 9.1h0m.1-19.4h0m.1 6h0m.1-4.1h0m.1-2.8h0m.5 15.4h0m0 1.6h0m.1-.2h0m.3-2.9h0m.2-5.2h0m0-1.3h0m.4-7h0m0 5h0m.1-4h0m.1 10h0m.2-13.9h0m.1-2.1h0m.1-1.1h0m.8 1.5h0m.1 8.8h0m.1 7h0m.2-13.3h0m.3 16.6h0m.2-20.7h0m.3 14.8h0m.1-7.3h0m.2-1.5h0m0 9.7h0m.4 7.9h0m.1-10.6h0m.1 12.2h0m.1 1h0m.4-6h0m.4 2.2h0m.1-11.8h0m0 17.5h0m.2-19h0m0-8.3h0m.2 17.7h0m.3-14.5h0m.4 11.1h0m.2-12.5h0m.2 5.3h0m0-1.3h0m.1 5.4h0m.1 7.1h0m.1 7.1h0m.1-14.9h0m.2 14.5h0m.1-19.4h0m.4 15.5h0m.4-9.2h0m.1 11.1h0m.2-7.5h0m.4-4.9h0m.4-7.2h0m.2 4.9h0m.1 10.3h0m0-11.2h0m.3-4.8h0m.2 19.5h0m.3-8.1h0m.4 6h0m.1-15.4h0m.1 6.7h0m.4-10h0m.1 15.8h0m.2-17.4h0m.2 8.5h0m.3 5.5h0m0-11.8h0m.2 1.5h0m.5 2.2h0m.1 4.9h0m.3 16.1h0m.1-5.9h0m.3-1.8h0m.1 3.9h0m.1-10.5h0m.1 12.6h0m.2-17.7h0m.1 8.4h0m.1-6.5h0m.6 15.8h0m1-2.3h0m0-17.4h0m.1 8.1h0m.1-15.3h0m0 18.6h0m.1-7.8h0m.1-4.2h0m.1 14.6h0m.1 1.8h0m.1-10.6h0m.3-14.4h0m.1 10.3h0m0-7.4h0m.4 2.3h0m.4 11.2h0m.3-4h0m.3 6.3h0m.1-10.8h0m.1 15.8h0m.2-2.7h0m.2-11.6h0m.3 5.1h0m.2-11.7h0m.2 3h0m.1 8h0m.4-9.5h0m.7 12.8h0m.2 5.3h0m.1-14h0m.1 7.1h0m.1-9.3h0m.1 4.7h0m.1 12.7h0m.2-3.5h0m0 9.9h0m.5-17.1h0m.1 12h0m.1-3.3h0m.3-14.7h0m.5 11.1h0m.1 9.2h0m.1-3.8h0m.6-6.8h0m0-12.5h0m.1 6h0m.1 3.3h0m0 5.8h0m.1 5.8h0m.9-14.2h0m.1-2.7h0m.1-3h0m.4 9.9h0m.1 6.1h0m.4-1.2h0m.1-3.2h0m.1 7.8h0m.1-16.1h0m.1 12.9h0m0-7.8h0m1-7.9h0m.1-1.2h0m.3 7.2h0m.3-3.5h0m.4 7h0m.1 2h0m.1-2.8h0m0 12.8h0m.2-4.6h0m0 1.2h0m.2-4h0m0 7.6h0m.6-22.1h0m0 14.9h0m.7-10.7h0m.1 2.4h0m.2-5.6h0m.4-3.8h0m.1 14.6h0m.2 8h0m.2-15.8h0m0-.8h0m.1 6.5h0m.1 3.4h0m.1 4.2h0m.1 3.3h0m.1-14h0m.4 12.6h0m.5-8h0m.2 4.8h0m.3-2.5h0m.2 13.5h0m0-4.1h0m.1 .6h0m0-14.4h0m.3 11.5h0m.1 4.3h0m0-7.5h0m.1 7.5h0m.2-8.6h0m.1-15.6h0m.1 4.8h0m.6 3.8h0m.2 3.5h0m.2-13.4h0m.1 4h0m.1 4.1h0m.6 8.6h0m.2-9.7h0m.2-8h0m.1 4.5h0m.3 8.6h0m.2 3.1h0m.1-5.5h0m.6-13.7h0m.1 0h0m.1 6.1h0m.5 1h0m.2-2.7h0m.1-1.9h0m.1 3.5h0m.2 7.9h0m.1-3.9h0m.1 1.9h0m.5 7.3h0m.1-2h0m.4 6.3h0m.2-13.9h0m0 12.3h0m.1 3.5h0m.3 4h0m.1-17.3h0m.5 3.6h0m.2 3h0m.6 7.1h0m.2 5.3h0m0-4.5h0m.5 .7h0m.1-13.8h0m.2-4.2h0m.1-2.1h0m0 15.8h0m.3-7.1h0m.2 4.7h0m.1 4h0m0-13.4h0m.1 12.6h0m.1-6.7h0m.2 10.8h0m.5-22.2h0m.1 4.8h0m.2 2.4h0m0-4.2h0m.4 7.8h0m.3 1.2h0m.1 3.1h0m.8 4.3h0m.2-2.3h0m.1-6.5h0m.1-11.3h0m.3 2.1h0m0-.5h0m.2 11.9h0m0-6.4h0m.1 2.5h0m.2-4.1h0m.5 10.1h0m.4-11.4h0m.3 13.8h0m.3 3.1h0m.5-10.8h0m.1-10.7h0m.3 6h0m.2 11.7h0m.1-8.9h0m.1 3.4h0m.1 15.3h0m.1-13.9h0m.4-10.4h0m.5 16.7h0m.3-3.3h0m.1 9.1h0m.1 1.8h0m0-6.5h0m.3-6.1h0m.1-4.7h0m.6-7.5h0m.1-2.6h0m.1 19.7h0m.1-7.6h0m0-5.2h0m.1 1.8h0m.1-3.9h0m.7 11.7h0m.3-5.5h0m.2-6.5h0m.1-6.1h0m.3 22.6h0m.2-3.8h0m.2-3.2h0m.3-12.1h0m.6-.7h0m0 4.8h0m.2 2.6h0m.3 10.2h0m0-3.4h0m.2 6.1h0m.1-1.3h0m.2 2.9h0m.2-9.1h0m.1-9.6h0m.1 7.1h0m.4-10.4h0m.1 8h0m.8 5.7h0m.2 3.1h0m.2 5.1h0m0-16.5h0m.2 12.1h0m.1-9.2h0m.1-9.6h0m.2 12.9h0m.3-9h0m.2 11.7h0m.4-4.4h0m.5 7h0m.2 1.1h0m.2-16.9h0m.5 4.8h0m.4-6.2h0m.1 8h0m.2-3.7h0m.3 11.3h0m0-2.8h0m.1-16.1h0m.3 14h0m.2 8.3h0m.3-9.3h0m.1-4.3h0m.1-6.4h0m.3 21.9h0m.5-18.7h0m.1 14.9h0m0-5.3h0m.3-14.2h0m.3 9.8h0m.1 6.2h0m.1 8h0m.2-18.8h0m.3 16.3h0m.1-3.3h0m.4-6.5h0m.1 9.3h0m0-12.7h0m.2 7.2h0m.6-11.8h0m.1 14.8h0m.3-5.1h0m.1-12.1h0m.5 8.3h0m.1-4.9h0m.3 2.3h0m.3 15.6h0m.2 1.2h0m.1-6.4h0m.1-4.7h0m.4 7.7h0m0-5.6h0m.3 14.2h0m.1 0h0m.4-4.2h0m.4-15h0m.5 3.1h0m.1-5.6h0m.3 14.8h0m.1-6.3h0m0 3.6h0m.1-13.1h0m.2 16.8h0m.1-12h0m.4-5.6h0m.3 21.9h0m.1-22h0m.2 3.2h0m.1-4.5h0m.2 16.5h0m.1-2.5h0m.2-16.2h0m.2 13.4h0m.4 8.8h0m.2-12.5h0m0 .8h0m.3 5.9h0m.1 2.7h0m.2-16.7h0m.1 3.7h0m.7 7.2h0m.1-15h0m.2 .1h0m.1-2.5h0m.4 12h0m0 2.7h0m.1-7.7h0m.4 5.9h0m0-8.1h0m.3 18h0m.3-3h0m.1 4h0m.4-14.2h0m.5 8.1h0m.3-7h0m0-4.3h0m.3 16h0m.4-8.2h0m0-8.4h0m.7 12.9h0m.4-10.4h0m.1 11.3h0m.1-4.5h0m.1 11.8h0m.2-1.1h0m.3-3.4h0m.3-12.8h0m.1-1.1h0m.1 3.7h0m0-7.8h0m.4-1h0m.4 2.6h0m0 10.5h0m.6 3.3h0m.2 8.8h0m0-4h0m.3-3.5h0m0-9.6h0m.2 3.1h0m.2 3.1h0m.4-10.8h0m.1 9h0m0-7.7h0m.2-2.8h0m.1-2h0m.2-1.8h0m.3 9.9h0m.2 11.7h0m.1 .8h0m.2-5.2h0m.6-4h0m.2 12.3h0m.4-5.1h0m.1-13h0m.1 17.2h0m.2-8.2h0m.2 2.7h0m.3-14.6h0m.4-.8h0m.1 6.6h0m.2-8.4h0m.1 19.5h0m.1-6.7h0m.2-2.1h0m.4-3.8h0m.3 6.2h0m.1 14.5h0m.1-10.1h0m.1-2.1h0m.1-12h0m.2 17.9h0m.2-17.2h0m.4 6.1h0m.4-5.7h0m.1-3.2h0m.4 5.6h0m.1-10h0m.2 13.7h0m.1-12h0m.2 .3h0m.2 19.6h0m0-20.9h0m.1 16.4h0m.1 2.7h0m.1-8.8h0m.1 12.6h0m.6-16.9h0m.5-2.7h0m.1 1.6h0m0 7h0m.1 5.1h0m.2-9.2h0m.2 11.4h0m.3 8.1h0m0-13.2h0m.2 7.1h0m.1 6h0m.2-3.8h0m.1 3.4h0m.2-1.5h0m.2-15.6h0m1-3.3h0m.1 5.7h0m.2 11.6h0m.1-6.7h0m.1-1.8h0m.2-11.6h0m.2 15.6h0m.6-11.4h0m.3 13.7h0m.7-11.3h0m.2 1h0m.2 2.8h0m.3-12.1h0m0 3.5h0m.1 10.4h0m.3-12h0m.6 10.2h0m0 4.7h0m.2-5.9h0m.1-4.9h0m.1 13.1h0m.6 .8h0m.2-4.5h0m.4-12.8h0m.3 6.3h0m0-9.1h0m.2 4.8h0m.5 17.1h0m0-14.7h0m.1 17.6h0m.1-3.8h0m.1-8.2h0m.7 5h0m.1-8.1h0m.2 18.7h0m.2-13.9h0m.3 12.2h0m.4-.4h0m.3-17.5h0m.1 12.2h0m0 .8h0m.2-16.7h0m.1 6.2h0m.2-13.4h0m.2 19.1h0m.2-16.3h0m.1 6.5h0m0-5.6h0m.2-.6h0m.4 17.8h0m.2-4.7h0m.9-9.1h0m0 3.2h0m.3 3.6h0m.2-9.3h0m.1 19h0m.2-12h0m.5 15.6h0m0-16.6h0m.2 7.4h0m.2 1.7h0m.3 1.1h0m.1-4.8h0m.3 9.7h0m.1-3h0m.2 .7h0m.1-17.8h0m.1-2.8h0m.2-2.3h0m0 7.7h0m.2 6.2h0m.2-9.2h0m.4 6.1h0m.3-13.7h0m.1 18.3h0m.2-6.7h0m.3 9.8h0m.1-17.8h0m0 19.1h0m.2-13.6h0m.2-7.6h0m.1 3.7h0m.2 9.2h0m.3 11.3h0m.5-2h0m.1-7.2h0m.3-8h0m.3 10h0m.1-7.5h0m.3 2.8h0m.4-.7h0m.1 8.4h0m.2-13.8h0m.3 22.8h0m.1-20.1h0m.1 21.1h0m0-4.7h0m.1-5.8h0m.2 11.9h0m.4-8.7h0m.1-6.5h0m.1 9.5h0m.3 3.8h0m0-.7h0m.2-14.8h0m.1 12.9h0m.1 .4h0m.3-9.5h0m.2 5.4h0m.1-3.5h0m0-13.2h0m.2 3.9h0m.2-3.2h0m.2-8.7h0m.1 4.2h0m.1 2.3h0m.1 6.6h0m0-10.1h0m.7 14.8h0m.4 3h0m.1-12.3h0m0 7.9h0m.2 7.5h0m.1-21.5h0m.4 22.3h0m.1-9h0m.2-2.6h0m.2-2.8h0m.1-4.6h0m.8-.5h0m.1 13.8h0m.6 3.5h0m.1-14.8h0m.2 17.2h0m.3-10.8h0m.3 14h0m0-17h0m.3 6h0m.2 12.2h0m.3-7.7h0m.1-2.9h0m.1 4.8h0m.6-22.1h0m.2 3.1h0m.1-2.6h0m.1 3.3h0m.1 4.3h0m.1-3.8h0m.1-4.3h0m.1 6.1h0m.2-5.7h0m.1 11h0m.3 2.9h0m.1-1.3h0m.3-6.4h0m.4 10.7h0m.2-5h0m.1 7.2h0m.2 1.5h0m.3 .5h0m.3-12.4h0m.2 4.4h0m.1 2.9h0m.1-13.4h0m.3-3.8h0m.5 5.3h0m.1 2.6h0m.2 12.2h0m.7-8.9h0m.1 12.1h0m.1-8.4h0m.1-11.8h0m.3 15.7h0m.1 7.3h0m.4-19.1h0m.1 7.8h0m.3-2.3h0m.2 14.9h0m.1-18.1h0m.1 10.1h0m.2-2h0m.3 14.9h0m.3-10.3h0m.1 9.3h0m.1-6.3h0m.3 .8h0m.1-7.5h0m.1 10.6h0m.1-17.9h0m.1 18.2h0m.4-15.1h0m.2 2.1h0m.3-10.3h0m.1 1.8h0m.3 3.9h0m.1-4.3h0m.4 12.6h0m.3 4.2h0m.4 3.4h0m0-14.1h0m.1 8.9h0m.1-6.4h0m0 10.3h0m.3-8.7h0m.4-7.4h0m.8-4.6h0m0 3.6h0m.2 13.4h0m.2-2h0m.2-7.1h0m.4-4.7h0m0 16.5h0m.4-8.8h0m.4 2.7h0m.2 3.1h0m.1-11.4h0m.3-4.8h0m.3-3.5h0m.3 24.7h0m.4-13.1h0m.8-6.2h0m0-3.3h0m.1 18.4h0m0-11.4h0m.3 5.8h0m.1 2.9h0m.2-18.1h0m.4 14.4h0m.1-5.2h0m.5 3.3h0m.3-6.1h0m.4-4.4h0m.3 1.6h0m.1 17.4h0m.2-2.7h0m.1-2.2h0m.3 7.3h0m.3 2h0m.2-11.7h0m.3-3.4h0m.1-2.3h0m.4 17.1h0m.1-6.3h0m.3-1.6h0m.5 4.6h0m.1-16.3h0m.5 19h0m.4-10.2h0m.3-2.3h0m.1 7.4h0m.1-12h0m0 2h0m1 12.4h0m.2-18.2h0m.1 12.4h0m.2 .7h0m.2-9.9h0m.1 .7h0m.1 17.5h0m.1-9.5h0m.2 13.8h0m.3-17.1h0m.1-9.9h0m0 21.9h0m.1 2h0m.2-6h0m.1 9.1h0m.1-19h0m.2 19.8h0m.3-12.7h0m.2 12.7h0m.1-15.4h0m.2-7.7h0m.1 13.9h0m.3 2.7h0m0-13.1h0m.4-4.6h0m.1-6.4h0m.1 5.5h0m.6 9.2h0m.1-10.5h0m.1 14h0m.2-16.7h0m.1 18.2h0m.2-6.7h0m.1-3h0m0-6.1h0m.5 20h0m.2 4.4h0m0-21.8h0m.1 7.8h0m.2 3.2h0m.2-9.6h0m0 13.4h0m.1 6.3h0m.6-5.9h0m.1 2.7h0m.2-12.8h0m.4 8.1h0m.1-10.2h0m.1-10.7h0m.2 15.7h0m.1-14.2h0m.1 1.7h0m.2 3h0m.1 6.3h0m.5-12.2h0m.2 16.9h0m0-9.2h0m.2 12.1h0m.2-17h0m.4 19.9h0m.3-11.3h0m.2 10.9h0m0-6.3h0m.5-10.2h0m.3 .8h0m.1 7.6h0m.1-5h0m.5 10.1h0m0-10.6h0m.1 19.9h0m.1-1.1h0m.1-3.1h0m.1 6.6h0m.3-13.9h0m.1 12.3h0m.2-6.5h0m.1-7.2h0m.1-3.6h0m.6 19.4h0m.2-6.8h0m.3 2.3h0m.3-15.8h0m0 8.1h0m.1-11.7h0m.1 12.7h0m.1-7.7h0m.2 3.8h0m.1-7.7h0m.3-4.6h0m.4-5.5h0m.3 7.3h0m.3 2.8h0m.1 13.6h0m0-14.6h0m.1 10.5h0m.3 9.4h0m0-15.2h0m.1 9.7h0m0 2.8h0m.2-10h0m.2 16.6h0m1.1-16.2h0m.1 3.3h0m.1 7h0m.1-14.9h0m.1 13.7h0m.5-4h0m.2-6.4h0m0-3h0m.4 16.9h0m0-6.4h0m.4 10h0m.3-5.2h0m.2 1.2h0m.2-20.5h0m.1 10.2h0m.1 11.2h0m.1-5.5h0m.4-5.9h0m0-4.9h0m.2 6.1h0m.2-12.2h0m.3 .6h0m.2 1.9h0m.4 6.3h0m.1 5h0m0-15.5h0m.2 19h0m.1 1.8h0m0-7.7h0m.4-6.8h0m.2 1.7h0m.2 3h0m.1 16.2h0m1-10.2h0m.5-12.5h0m.1 9.4h0m.1-7.5h0m.1-4.1h0m.1-2.2h0m.1 20.5h0m.3-8.7h0m.6-2.6h0m.1 5.8h0m.1 3.6h0m.4-9.6h0m.5-3.5h0m.1 16.2h0m.2-8.9h0m.1 4.7h0m0-6.3h0m.1 8.9h0m0-17.5h0m.1 12.7h0m.1-13.4h0m.5 4.6h0m.5-6.5h0m0-5.8h0m.1 1.5h0m0-1.9h0m.1 3.2h0m.2 1.3h0m.5 3.2h0m.4-3.1h0m.1 13.2h0m.1-2.8h0m.1-4.9h0m.4 10.6h0m.4 5.1h0m0-.9h0m.2-12.6h0m.1 10.1h0m0 5.9h0m.1-1h0m.6-19.8h0m0 10.5h0m.1-3.6h0m.2 2h0m.2 6.4h0m.1-1.9h0m.2-7.9h0m.1-3.8h0m.2 15.7h0m.6-.7h0m.2-17.8h0m.2 3.7h0m.2 7.9h0m.6-2.1h0m.3-9.8h0m0 6.8h0m.3 7.6h0m0-10.6h0m.6-4.1h0m0 2.1h0m.2 14.5h0m.1 1.4h0m.3 6.2h0m.5-3.5h0m.1-2.5h0m.2-3.8h0m.1-2.3h0m.2-5.6h0m.1-1.9h0m0 3.8h0m.4 6.8h0m.2-5.7h0m.1-7.1h0m.1-3.2h0m.8 3.6h0m.1 2.9h0m.3 18.4h0m0-3.8h0m.6-5.9h0m.1 2.3h0m.2 2.4h0m.1-7h0m.1-1.5h0m.3-2.6h0m.1-2.6h0m0-6.1h0m.4 4.1h0m.1 14h0m.2-5.4h0m.6 1.8h0m.2-12.6h0m.1 .9h0m.3 6.9h0m.1-3.1h0m.1 14.6h0m.3 1.8h0m.2-5.5h0m.1 6.1h0m.4 1.6h0m.2-12.6h0m.2 14.8h0m.6-2.5h0m.1-4.3h0m.3-13.1h0m.1 7.4h0m.3-9.1h0m0 5h0m.1 1.1h0m.1-8.1h0m0-1.6h0m.2-3h0m.2 18.4h0m.3-11.9h0m.3 22.5h0m.2-5.1h0m.2-3.7h0m.4-4.4h0m.1-5.3h0m.1 11.2h0m.2-20.7h0m.1 11.7h0m.2-4.2h0m.5 3.1h0m.1-8.1h0m.1 15.4h0m.1-22.7h0m.4 21.5h0m.1-12.4h0m.1 3.7h0m.2 4.7h0m.1 9.3h0m1.1-4.6h0m.1 2.4h0m.1-6h0m.2-17.4h0m.2 4.2h0m.1 6.7h0m0-9h0m.3 12.1h0m.1-7.2h0m.2 1.7h0m.3-4.3h0m0 .9h0m.4 14.8h0m0-5.5h0m.3 9.2h0m.1-6.5h0m.2 13.3h0m.6-17.9h0m.4-3.2h0m.1 15.1h0m.4-22.8h0m.1 5.7h0m.3 16.6h0m.1-4.3h0m.3-6.9h0m.1 9h0m0-17.4h0m.1 21.6h0m.1-10.3h0m.4 11h0m.1-17.5h0m.1 7.6h0m.7-4.4h0m.2 .5h0m.8 5.4h0m0 5.4h0m.1-2.1h0m.2-5.8h0m.1 13.4h0m.3-6.4h0m.5-13h0m.1 16.1h0m.3-8.4h0m.4 8.2h0m0 1.9h0m.2-6.6h0m.5-8h0m.4-4.6h0m.1-4.8h0m.2 11.6h0m.3-7.6h0m.1 10.5h0m.1 4.1h0m.4-11.9h0m.2 3.1h0m.1-6.1h0m.1 12.1h0m0-8.3h0m.2 16.2h0m0-3.3h0m.1 1.7h0m.1-9.3h0m.6-8.7h0m.2 14.2h0m.2-17.7h0m.6 12h0m.1-11.6h0m.1 15.3h0m.3 3.3h0m.3-9.6h0m.2-3.5h0m.3 8.3h0m.2-11.3h0m.4-4.1h0m.2 4.5h0m.1 7h0m.2 7.4h0m.1-2.9h0m.1 12.7h0m.1-3.8h0m.1 .6h0m.1-18.8h0m.1 13.2h0m.1-10.4h0m.1 14.1h0m0-1.4h0m.2-8.3h0m.6 3.2h0m.2 6.8h0m.2-12.3h0m.2-9.1h0m.4 16.1h0m.5-10h0m0-4.2h0m.6 1.7h0m.4 15.4h0m.1-17.7h0m.1-1.8h0m.1 13.2h0m.2-2.3h0m.2-3h0m.1 7.5h0m0 3.2h0m.6 2.1h0m.1-22.1h0m.1-3.1h0m.2 16.5h0m.4-5.3h0m.1-6.4h0m.3 9.6h0m.1-5.2h0m0 9.3h0m.2-11h0m0 16.4h0m.1 3.5h0m.6-5.6h0m.1-17.6h0m.2 7.1h0m.2 7.7h0m.4 6.3h0m.1-19.8h0m.3 11.3h0m0-3.9h0m.3 11.4h0m.5-3.8h0m0 10.7h0m.4-22.4h0m0 5.1h0m.1 2.9h0m.3 14.4h0m.1-10.1h0m.2 6.6h0m.2-18.1h0m.2 13.4h0m0 1.9h0m.8-19.9h0m0 6.1h0m.1 5.1h0m.4 2.1h0m.3-9.9h0m.1 4.6h0m.4 8h0m.6-14h0m.1 3.4h0m.4-9.3h0m0 22.9h0m.2-8.8h0m.1-10.8h0m.4 15.1h0m.1-15.5h0m.1 17.9h0m.1 4.4h0m.1-16.4h0m0 6.4h0m.7-3.2h0m.7-6.1h0m.1 15.9h0m.1-3.3h0m.1-8.4h0m.2 13.2h0m.1-10.1h0m.4-9.3h0m.1-2h0m0 13.3h0m.3-8h0m.3-1.6h0m.1 5.1h0m.4-12.2h0m.1 21.5h0m.1-19.1h0m0 24.4h0m.2-23.5h0m.3 15.2h0m.3 5.2h0m.2-9.4h0m0 12.4h0m.2-4.7h0m0-11.4h0m.2 9.1h0m.1 6.8h0m.1 5.1h0m.4-25.1h0m.4 9.9h0m.1-7.9h0m.1 3.5h0m.1-6.4h0m.3 19.9h0m.2-15.1h0m.4 12h0m0-9.1h0m.2 5.9h0m.2-11.9h0m.2 18h0m.3-2.2h0m0-17.5h0m.3 13.1h0m.2-2.9h0m.1 11.5h0m.3-21.6h0m.8 6.7h0m.1-3.3h0m.1 11.8h0m.6-5.6h0m.1 8.7h0m.7-5.8h0m.1-11.7h0m.1 5.8h0m.4 3.5h0m.2 3.3h0m.1 2.1h0m0-13.3h0m.1 17.6h0m.2 2.4h0m0 2.2h0m.1-4.5h0m.1 .9h0m.3-15.8h0m.1 18.8h0m.2-24.7h0m.3 12.1h0m0-3.6h0m.2 8h0m0-12.3h0m.2 1.6h0m.6 3.3h0m.2-7.4h0m.2 11.9h0m0 4.9h0m.1-10.8h0m1 11.3h0m.4-7.6h0m.3 10.1h0m.1-25.3h0m.1 19.8h0m.1-11.4h0m.2-3h0m.2 6.6h0m.2 1.1h0m.2-10.5h0m.4 15.1h0m.2 9.6h0m.1-5.9h0m.1-12.6h0m.3 6.1h0m.1-9.5h0m.4 18.1h0m.1-2.4h0m.2-14.5h0m.1 2.6h0m.2 7.1h0m.2 3.4h0m.5-7.9h0m.8 14.2h0m.2 3.3h0m0-14.2h0m.3-6.7h0m.1 22.2h0m0-2.7h0m.1-10.4h0m.1 5.5h0m.3-2.2h0m.5-15.4h0m.1 10.1h0m.1 10.5h0m.2-14h0m.2-1.5h0m.2 13h0m.1-10.1h0m.2 5.4h0m.1-15.4h0m.1 2.3h0m.1 2.1h0m1 9.1h0m.2-13.5h0m0 7.5h0m.2 15.5h0m.2-5h0m0 2h0m.1-15.2h0m.2 9.5h0m.2 1.7h0m.1-5.1h0m.5-15h0m0-3h0m.2 5.2h0m.1-4.5h0m0 3h0m.1-2.1h0m.1 7.7h0m.1-2.6h0m.1 7.4h0m.4 2.7h0m.6-5.1h0m.1 .9h0m.3 .9h0m.1 6.2h0m.1-12h0m.1 21.3h0m.2-6.6h0m.4 2.8h0m.1-8.5h0m.4 11.9h0m.3-19.1h0m.1 15.9h0m.1-4.1h0m.1 3.3h0m.4-10.3h0m0 6.5h0m.3-.7h0m.2 12.2h0m.3-22.1h0m.1-3h0m0 4h0m.2 5.5h0m.2 11.3h0m.3-10.4h0m.3 12.7h0m.4 2.4h0m.2-9.4h0m.3 1.4h0m0 2.2h0m.3-12.8h0m.1-.8h0m0 6.7h0m.4-10.9h0m.1 8.5h0m.2 9.1h0m.1-13h0m0 19.2h0m.7-9.4h0m.1-2.1h0m.1 8.1h0m.2-17.5h0m.6 4.9h0m.1 6.3h0m.1-3.1h0m.1 10h0m.4-18.7h0m0 15h0m.7-19.5h0m.2 6.8h0m.1 5h0m.4-12.6h0m0 6.4h0m.1-3.9h0m.1 16.3h0m.3-2.7h0m0-6.5h0m.3 12.6h0m.5-.8h0m.2-.4h0m.2-18.8h0m0 16.2h0m.3-10h0m.3-4.5h0m.4 6.7h0m0 3.4h0m.2-15.1h0m.3 3.8h0m0 13.3h0m.2-10.4h0m.4 5h0m.3-4h0m.2-1.1h0m.5 3.3h0m.1 7.4h0m.1-14.9h0m.1-3.2h0m.3 21.2h0m0-6.6h0m.2 2.6h0m.8 4.2h0m.3-9.5h0m.1-6.6h0m.1 7.2h0m.1 6.2h0m.4-10.3h0m.1 9.8h0m0-15.3h0m.1 19.3h0m.8-2.8h0m.3-14.5h0m.1 10.5h0m.2-13.2h0m.5 11.5h0m0-3.2h0m.4-7.3h0m.3 3.7h0m.1 16.4h0m.1-13.6h0m.1 8.1h0m.5-12.4h0m.3 15.5h0m.1-7.7h0m.3-9h0m.5 11.8h0m.4 3.1h0m.2-11h0m.1 3.8h0m.1 9h0m.4-4.2h0m.3-7.3h0m.1 14.5h0m.1-21.8h0m.1 3.3h0m.5 9.4h0m.1-5.9h0m.5 10.5h0m.3-8.1h0m.1 10.6h0m.2-4.2h0m.6-13.2h0m.2 1.9h0m.1-4.4h0m.1 2.8h0m.2 11.2h0m.1-18.8h0m.1 21.4h0m.1 6.1h0m.1-10.8h0m.1 9.8h0m.1 6.4h0m.1-9.6h0m.3-11.4h0m.1 15.6h0m.2-8.1h0m.2-4.8h0m.2-4.8h0m.4-3.8h0m.4 21.4h0m0-2.6h0m.1-2.1h0m.1-4h0m.3-11.8h0m.4-1h0m.1 4.3h0m.1 2.5h0m.1 3.2h0m.1-12.8h0m.3 18.7h0m.5 6.5h0m.1-12h0m.3 3.6h0m.3 3.1h0m.4-13.2h0m.1 16.1h0m0-17.2h0m.2 5.3h0m.3 6.9h0m.2-12.9h0m.1 8.8h0m0-11.3h0m.2 12.1h0m.1-5.3h0m.5 10.5h0m.2-18.1h0m.7 8.6h0m.1-10.9h0m.4 5.6h0m.1 11.4h0m.1-3.9h0m.1-6h0m.2 4.1h0m.2 8.5h0m.3-17.2h0m.1 3.7h0m.1-2.5h0m0-5.2h0m.1 18.3h0m.3-8.5h0m.1 18.3h0m.1-1.7h0m0-17.3h0m.2-4.8h0m.2 18.7h0m.3-.5h0m.1-6.4h0m.1 5.1h0m.1 6.1h0m.5-15.2h0m.6-7.9h0m.1 10.5h0m.2 2.6h0m.2 3h0m0-13.5h0m.1 4.4h0m.1-5.3h0m.5 2.9h0m.6 17.3h0m.1-15.3h0m.1 11.7h0m.4-7.2h0m.1-7.2h0m.1 12.9h0m.1 10.1h0m.1-13.7h0m0 11.8h0m.2-15.2h0m.1 12.2h0m.1-18.1h0m.4 18.8h0m.2-3.6h0m.3-4.9h0m.2-7.2h0m.2 2.9h0m.8 16.8h0m.4-14.1h0m.3 4.1h0m.2-12.2h0m0 20.4h0m.1-11.9h0m.2 10.6h0m.1-2.3h0m.4-1.9h0m0-1.2h0m.6-10.7h0m0-3.2h0m.1 4.9h0m.3 1.6h0m.1-2.6h0m.1 6.2h0m0-15.7h0m.2 1.1h0m.3 1.2h0m.2 1.3h0m.4 4.2h0m.1 16h0m.2-6.5h0m.2-4.4h0m.2 6.1h0m.1-2.8h0m0 9.3h0m.1-4.1h0m.6-10h0m.1-4.8h0m.6-1.6h0m.1 4.9h0m.1 16.7h0m0-2.1h0m.3-6.2h0m.2-4.7h0m.2-5.1h0m.1-7.5h0m.1 22.1h0m.1-3.6h0m.1-5.1h0m0 .6h0m.1 4.9h0m.2-16.2h0m.1 6.9h0m.7-17.9h0m0 2h0m.1 4.4h0m.1 3.6h0m.1-5.2h0m.2 2.7h0m.1-2.5h0m.1 1.6h0m.2 6.9h0m.7 6.2h0m.1-2.8h0m.4 3.8h0m.2-11h0m0 12.3h0m.1-9.3h0m.3 14.4h0m0-2.5h0m.2-12.3h0m.6 7.5h0m.1 9.3h0m.2 1.7h0m.1 .6h0m.2 1.6h0m.2-5.9h0m0-12h0m.3 6.2h0m.2-4.4h0m.2 13.9h0m.2 5.6h0m.2-12.4h0m.1-11.3h0m.6 6h0m.1-2.1h0m.4 5.3h0m.1-4.3h0m.2 11.4h0m.1-3h0m.3-2.4h0m.4-9.5h0m0 16.8h0m.2-11.3h0m.9 7.1h0m.2-19.9h0m.4 5.4h0m.1 5.2h0m.1-9.1h0m0 2.9h0m.1 11.6h0m0 8.3h0m.5-23.5h0m0 7.7h0m.1-5.5h0m.5 15.7h0m.2-4.2h0m.1-1.2h0m.1 9.2h0m.4-.2h0m.1-16.2h0m.7 13.4h0m.3-8.7h0m0 6.6h0m.5-9.6h0m.1-5.2h0m.3 2.4h0m0 5.9h0m.1-4.9h0m.2 10.2h0m.2 3.4h0m.1-2.2h0m.1-15.2h0m0 5.6h0m.1 5.8h0m.1 .5h0m0-1.9h0m.1 76.8h0m.1-10.2h0m0 8.1h0m.1-2.4h0m0-.7h0m.1 2.4h0m.1-5.3h0m.1 9.6h0m.1-16.2h0m.5 2.4h0m.2 10.7h0m.3-13.4h0m.1-3.6h0m.7 8.9h0m.3-5.8h0m.3 3.1h0m.2 5.1h0m.1 3.1h0m.1-1.1h0m1-9.6h0m.3 13h0m.5-8.5h0m.1-2.1h0m.3 7.4h0m.2 3.9h0m.2-6.5h0m.4-8.3h0m.1 4h0m1.1 2.8h0m.2 5.1h0m.1-10.2h0m.3 14.2h0m.4-5.5h0m.1-11.8h0m0 14.8h0m.3-5h0m.4-4.7h0m.4 1.6h0m.4-5.6h0m.3 12.9h0m.2-15.8h0m.2 12.2h0m.2-1.8h0m.1-4.7h0m.3 11.6h0m0-5.8h0m.3-8.2h0m.7 9.6h0m0-5.8h0m.2 10h0m.7-12.7h0m.4 4.3h0m.2-6.2h0m.1 12.2h0m.6 4.6h0m.1-9.6h0m0-8.4h0m.3 6h0m.2 4h0m.3 .3h0m.6 5.1h0m.1-15.5h0m.1 5h0m.2 1.9h0m.2-3.9h0m.1 10.4h0m0-1.2h0m.1-3.1h0m.1-1.5h0" stroke="#000" stroke-width="3.6" stroke-linecap="round"/>
<path d="M1260.6 69.4a1.8 1.8 0 1 0 3.6 0a1.8 1.8 0 1 0 -3.6 0" fill="#000"/>
<path d="M171.6 67.1a1.9 1.9 0 1 0 3.8 0a1.9 1.9 0 1 0 -3.8 0M166.5 103.6a1.9 1.9 0 1 0 3.8 0a1.9 1.9 0 1 0 -3.8 0M178.4 112.3a1.9 1.9 0 1 0 3.8 0a1.9 1.9 0 1 0 -3.8 0M261.7 66.6a1.9 1.9 0 1 0 3.8 0a1.9 1.9 0 1 0 -3.8 0M265.2 103.1a1.9 1.9 0 1 0 3.8 0a1.9 1.9 0 1 0 -3.8 0M273.1 106.3a1.9 1.9 0 1 0 3.8 0a1.9 1.9 0 1 0 -3.8 0M287.4 104.4a1.9 1.9 0 1 0 3.8 0a1.9 1.9 0 1 0 -3.8 0M302.3 109.3a1.9 1.9 0 1 0 3.8 0a1.9 1.9 0 1 0 -3.8 0M317.7 67.1a1.9 1.9 0 1 0 3.8 0a1.9 1.9 0 1 0 -3.8 0M332.8 103.6a1.9 1.9 0 1 0 3.8 0a1.9 1.9 0 1 0 -3.8 0M340.7 293.5a1.9 1.9 0 1 0 3.8 0a1.9 1.9 0 1 0 -3.8 0M364.5 108.5a1.9 1.9 0 1 0 3.8 0a1.9 1.9 0 1 0 -3.8 0M386.1 103.1a1.9 1.9 0 1 0 3.8 0a1.9 1.9 0 1 0 -3.8 0M400.5 65.2a1.9 1.9 0 1 0 3.8 0a1.9 1.9 0 1 0 -3.8 0M411.8 103.6a1.9 1.9 0 1 0 3.8 0a1.9 1.9 0 1 0 -3.8 0M417.8 105.5a1.9 1.9 0 1 0 3.8 0a1.9 1.9 0 1 0 -3.8 0M456.5 65.2a1.9 1.9 0 1 0 3.8 0a1.9 1.9 0 1 0 -3.8 0M464.3 179.4a1.9 1.9 0 1 0 3.8 0a1.9 1.9 0 1 0 -3.8 0M525.2 110.4a1.9 1.9 0 1 0 3.8 0a1.9 1.9 0 1 0 -3.8 0M539.5 67.1a1.9 1.9 0 1 0 3.8 0a1.9 1.9 0 1 0 -3.8 0M542.2 104.4a1.9 1.9 0 1 0 3.8 0a1.9 1.9 0 1 0 -3.8 0M559.3 148.3a1.9 1.9 0 1 0 3.8 0a1.9 1.9 0 1 0 -3.8 0M584.2 107.1a1.9 1.9 0 1 0 3.8 0a1.9 1.9 0 1 0 -3.8 0M592.3 106.3a1.9 1.9 0 1 0 3.8 0a1.9 1.9 0 1 0 -3.8 0M595.5 68.5a1.9 1.9 0 1 0 3.8 0a1.9 1.9 0 1 0 -3.8 0M602.3 184.2a1.9 1.9 0 1 0 3.8 0a1.9 1.9 0 1 0 -3.8 0M609.3 104.4a1.9 1.9 0 1 0 3.8 0a1.9 1.9 0 1 0 -3.8 0M654.5 67.1a1.9 1.9 0 1 0 3.8 0a1.9 1.9 0 1 0 -3.8 0M663.4 106.3a1.9 1.9 0 1 0 3.8 0a1.9 1.9 0 1 0 -3.8 0M673.4 105.5a1.9 1.9 0 1 0 3.8 0a1.9 1.9 0 1 0 -3.8 0M737.3 65.2a1.9 1.9 0 1 0 3.8 0a1.9 1.9 0 1 0 -3.8 0M782.2 105.8a1.9 1.9 0 1 0 3.8 0a1.9 1.9 0 1 0 -3.8 0M782.2 162.3a1.9 1.9 0 1 0 3.8 0a1.9 1.9 0 1 0 -3.8 0M793.0 66.3a1.9 1.9 0 1 0 3.8 0a1.9 1.9 0 1 0 -3.8 0M799.2 124.2a1.9 1.9 0 1 0 3.8 0a1.9 1.9 0 1 0 -3.8 0M808.4 131.2a1.9 1.9 0 1 0 3.8 0a1.9 1.9 0 1 0 -3.8 0M834.4 104.4a1.9 1.9 0 1 0 3.8 0a1.9 1.9 0 1 0 -3.8 0M847.1 119.3a1.9 1.9 0 1 0 3.8 0a1.9 1.9 0 1 0 -3.8 0M869.3 104.4a1.9 1.9 0 1 0 3.8 0a1.9 1.9 0 1 0 -3.8 0M876.3 67.1a1.9 1.9 0 1 0 3.8 0a1.9 1.9 0 1 0 -3.8 0M886.3 111.2a1.9 1.9 0 1 0 3.8 0a1.9 1.9 0 1 0 -3.8 0M889.6 102.3a1.9 1.9 0 1 0 3.8 0a1.9 1.9 0 1 0 -3.8 0M893.1 131.2a1.9 1.9 0 1 0 3.8 0a1.9 1.9 0 1 0 -3.8 0M932.3 64.4a1.9 1.9 0 1 0 3.8 0a1.9 1.9 0 1 0 -3.8 0M969.6 104.2a1.9 1.9 0 1 0 3.8 0a1.9 1.9 0 1 0 -3.8 0M982.4 67.9a1.9 1.9 0 1 0 3.8 0a1.9 1.9 0 1 0 -3.8 0M1066.2 108.5a1.9 1.9 0 1 0 3.8 0a1.9 1.9 0 1 0 -3.8 0M1056.5 136.4a1.9 1.9 0 1 0 3.8 0a1.9 1.9 0 1 0 -3.8 0M1074.1 68.5a1.9 1.9 0 1 0 3.8 0a1.9 1.9 0 1 0 -3.8 0M1085.2 103.6a1.9 1.9 0 1 0 3.8 0a1.9 1.9 0 1 0 -3.8 0M1119.5 103.1a1.9 1.9 0 1 0 3.8 0a1.9 1.9 0 1 0 -3.8 0M1128.2 123.4a1.9 1.9 0 1 0 3.8 0a1.9 1.9 0 1 0 -3.8 0M1130.4 63.0a1.9 1.9 0 1 0 3.8 0a1.9 1.9 0 1 0 -3.8 0M1133.1 103.1a1.9 1.9 0 1 0 3.8 0a1.9 1.9 0 1 0 -3.8 0M1135.8 103.1a1.9 1.9 0 1 0 3.8 0a1.9 1.9 0 1 0 -3.8 0M1139.3 112.3a1.9 1.9 0 1 0 3.8 0a1.9 1.9 0 1 0 -3.8 0M1208.3 103.1a1.9 1.9 0 1 0 3.8 0a1.9 1.9 0 1 0 -3.8 0M1213.4 64.9a1.9 1.9 0 1 0 3.8 0a1.9 1.9 0 1 0 -3.8 0M1223.7 105.5a1.9 1.9 0 1 0 3.8 0a1.9 1.9 0 1 0 -3.8 0M1234.5 102.3a1.9 1.9 0 1 0 3.8 0a1.9 1.9 0 1 0 -3.8 0M1237.2 181.3a1.9 1.9 0 1 0 3.8 0a1.9 1.9 0 1 0 -3.8 0M1252.1 67.1a1.9 1.9 0 1 0 3.8 0a1.9 1.9 0 1 0 -3.8 0M1262.4 179.4a1.9 1.9 0 1 0 3.8 0a1.9 1.9 0 1 0 -3.8 0M1269.1 63.6a1.9 1.9 0 1 0 3.8 0a1.9 1.9 0 1 0 -3.8 0M1279.1 132.3a1.9 1.9 0 1 0 3.8 0a1.9 1.9 0 1 0 -3.8 0M1287.2 166.4a1.9 1.9 0 1 0 3.8 0a1.9 1.9 0 1 0 -3.8 0M262.3 68.9a1.9 1.9 0 1 0 3.8 0a1.9 1.9 0 1 0 -3.8 0M318.3 69.4a1.9 1.9 0 1 0 3.8 0a1.9 1.9 0 1 0 -3.8 0M401.1 67.5a1.9 1.9 0 1 0 3.8 0a1.9 1.9 0 1 0 -3.8 0M457.1 67.5a1.9 1.9 0 1 0 3.8 0a1.9 1.9 0 1 0 -3.8 0M540.1 69.4a1.9 1.9 0 1 0 3.8 0a1.9 1.9 0 1 0 -3.8 0M596.1 70.8a1.9 1.9 0 1 0 3.8 0a1.9 1.9 0 1 0 -3.8 0M655.1 69.4a1.9 1.9 0 1 0 3.8 0a1.9 1.9 0 1 0 -3.8 0M737.9 67.5a1.9 1.9 0 1 0 3.8 0a1.9 1.9 0 1 0 -3.8 0M793.6 68.6a1.9 1.9 0 1 0 3.8 0a1.9 1.9 0 1 0 -3.8 0M876.9 69.4a1.9 1.9 0 1 0 3.8 0a1.9 1.9 0 1 0 -3.8 0M932.9 66.7a1.9 1.9 0 1 0 3.8 0a1.9 1.9 0 1 0 -3.8 0M983.0 70.2a1.9 1.9 0 1 0 3.8 0a1.9 1.9 0 1 0 -3.8 0M1074.7 70.8a1.9 1.9 0 1 0 3.8 0a1.9 1.9 0 1 0 -3.8 0M1131.0 65.3a1.9 1.9 0 1 0 3.8 0a1.9 1.9 0 1 0 -3.8 0M1214.0 67.2a1.9 1.9 0 1 0 3.8 0a1.9 1.9 0 1 0 -3.8 0M1269.7 65.9a1.9 1.9 0 1 0 3.8 0a1.9 1.9 0 1 0 -3.8 0" fill="#ffa500"/>
<path d="M105.5 199.20H1360.7" stroke="#008000" stroke-width="2.08"/>
<text x="702.81" y="311.80" font-size="14.72" textLength="43.33" lengthAdjust="spacingAndGlyphs" fill="#000">11575</text>
<text x="1272.93" y="291.80" font-size="14.76" textLength="43.34" lengthAdjust="spacingAndGlyphs" fill="#000">46781</text>
<path d="M162.0 321.0V35.5M1286.0 321.0V35.5M1303.0 321.0V35.5" stroke="#800080" stroke-width="2.08" stroke-dasharray="2.08 3.44" fill="none"/>
<rect x="105.5" y="35.5" width="1380.0" height="286.0" fill="none" stroke="#000" stroke-width="1.11"/>
<path d="M162.5 321.5v4.86M449.5 321.5v4.86M736.5 321.5v4.86M1023.5 321.5v4.86M1310.5 321.5v4.86" stroke="#000" stroke-width="1.11"/>
<text x="158.43" y="341.80" font-size="14.76" textLength="8.14" lengthAdjust="spacingAndGlyphs" fill="#000">0</text>
<text x="432.28" y="341.80" font-size="14.76" textLength="34.59" lengthAdjust="spacingAndGlyphs" fill="#000">5000</text>
<text x="714.74" y="341.80" font-size="14.76" textLength="43.55" lengthAdjust="spacingAndGlyphs" fill="#000">10000</text>
<text x="1001.74" y="341.80" font-size="14.76" textLength="43.55" lengthAdjust="spacingAndGlyphs" fill="#000">15000</text>
<text x="1288.63" y="341.80" font-size="14.76" textLength="43.65" lengthAdjust="spacingAndGlyphs" fill="#000">20000</text>
<path d="M105.5 64.5h-4.86M105.5 111.5h-4.86M105.5 158.5h-4.86M105.5 205.5h-4.86M105.5 252.5h-4.86M105.5 299.5h-4.86" stroke="#000" stroke-width="1.11"/>
<text x="64.42" y="69.50" font-size="14.76" textLength="30.27" lengthAdjust="spacingAndGlyphs" fill="#000">7.40</text>
<text x="64.42" y="116.50" font-size="14.76" textLength="30.01" lengthAdjust="spacingAndGlyphs" fill="#000">7.35</text>
<text x="64.42" y="163.50" font-size="14.76" textLength="30.27" lengthAdjust="spacingAndGlyphs" fill="#000">7.30</text>
<text x="64.42" y="210.50" font-size="14.76" textLength="30.01" lengthAdjust="spacingAndGlyphs" fill="#000">7.25</text>
<text x="64.42" y="257.50" font-size="14.76" textLength="30.27" lengthAdjust="spacingAndGlyphs" fill="#000">7.20</text>
<text x="64.42" y="304.50" font-size="14.72" textLength="30.01" lengthAdjust="spacingAndGlyphs" fill="#000">7.15</text>
<rect x="1361.3" y="42.4" width="117.29999999999995" height="26.9" rx="2.8" fill="#fff" fill-opacity="0.8" stroke="#cccccc" stroke-width="1.11"/>
<path d="M1366 53.9h30" stroke="#008000" stroke-width="2.08"/>
<text x="1406.86" y="58.90" font-size="14.45" textLength="30.38" lengthAdjust="spacingAndGlyphs" fill="#000">mag</text>
<text x="1437.78" y="60.80" font-size="10.33" font-style="italic" textLength="33.75" lengthAdjust="spacingAndGlyphs" fill="#000">AGASC</text>
<rect x="1348.5" y="247.5" width="130.0999999999999" height="66.89999999999998" rx="2.8" fill="#fff" fill-opacity="0.8" stroke="#cccccc" stroke-width="1.11"/>
<path d="M1365.4 260.4a2.0 2.0 0 1 0 4.0 0a2.0 2.0 0 1 0 -4.0 0" fill="#ff0000"/>
<path d="M1365.4 281.4a2.0 2.0 0 1 0 4.0 0a2.0 2.0 0 1 0 -4.0 0" fill="#ffa500"/>
<path d="M1365.4 302.4a2.0 2.0 0 1 0 4.0 0a2.0 2.0 0 1 0 -4.0 0" fill="#000"/>
<text x="1392.55" y="264.10" font-size="14.76" textLength="47.42" lengthAdjust="spacingAndGlyphs" fill="#000">not OK</text>
<text x="1392.35" y="285.10" font-size="14.56" textLength="79.78" lengthAdjust="spacingAndGlyphs" fill="#000">Highlighted</text>
<text x="1392.41" y="305.80" font-size="14.76" textLength="20.38" lengthAdjust="spacingAndGlyphs" fill="#000">OK</text>
<text x="707.63" y="372.10" font-size="17.48" textLength="175.70" lengthAdjust="spacingAndGlyphs" fill="#000">Magnitude Estimates</text>
<path d="M162.5 501.1h0m.1 23.9h0m0 4.3h0m.1-20h0m0 17.3h0m.1 3.7h0m0-8.9h0m.1-20.8h0m.1 11.3h0m0-6.2h0m.1-12.2h0m.1 39.5h0m.1-25.3h0m.1-11.6h0m.1 9.6h0m0 16.9h0m.2-6.1h0m.1 2.1h0m.1 21.5h0m0-20h0m.2-7.7h0m.1 31.7h0m.1-16.7h0m.1 14.1h0m.1-5.5h0m.1-28.2h0m.1 40.5h0m0-29.7h0m.2 19.3h0m.2 15.8h0m0-22.8h0m.4-20.1h0m0 4.7h0m.2 18.8h0m.1 4.7h0m0 17.4h0m.1-32.6h0m0 18.7h0m.3-15.6h0m0-18.7h0m.4 43h0m.1-19.9h0m.2-17.4h0m0 13.8h0m.1-26.7h0m.1 42.6h0m.2-19.8h0m.1-21.6h0m0 8.2h0m.1 9.8h0m.1-2.2h0m0 3.5h0m.2 15.4h0m.1-3.9h0m.1 14.8h0m.1-15.9h0m0 8.5h0m.1-38.5h0m.2 26.3h0m.2-20.1h0m.2-11.3h0m.1 48.5h0m0-40.3h0m.1 3.8h0m0 6.3h0m.2-12.5h0m0 9.7h0m.2 24.1h0m0-10.2h0m.4 12.9h0m.1-16.9h0m.2 21.2h0m.1-23.1h0m0 31.3h0m.1-1.8h0m.1 6.1h0m.1-31.8h0m.2 2.5h0m.1 7.3h0m0 2.1h0m.2-5.7h0m.1 16.6h0m.1 12.9h0m.1-52.8h0m0 55.2h0m.1-21.3h0m.1 6h0m.1-12.5h0m.1 11.2h0m0-32.4h0m.2 4.1h0m0 43.9h0m.1-35.4h0m.1-3.7h0m.2 34.8h0m0-41.8h0m.1 15.3h0m.1 12.1h0m0 7h0m.1-16.3h0m.1-.8h0m0 8.8h0m.1 21h0m0-21.6h0m.1-13.7h0m0 10.9h0m.1 14.9h0m.5-59h0m.1 5.8h0m0-14.2h0m.2 8.2h0m0-10.2h0m.1 4.5h0m0 2.9h0m.1 4.9h0m0-12.3h0m.1 18.6h0m.1-4.3h0m.1 12.8h0m0-18.6h0m.1 10.6h0m.1-3.7h0m.1 .8h0m0 3h0m.3 15.2h0m.1 3.4h0m0-7.7h0m.1-9.4h0m0 1.5h0m.1 9.4h0m0 4.9h0m.1 4.3h0m.1-14.9h0m.2 3h0m.2 20.3h0m.1-18.5h0m.1-9.5h0m.1 27h0m.1 3.7h0m.1-6.8h0m0-6.3h0m.1 14.4h0m.2 4.8h0m0 5.1h0m.1-20.7h0m.1 1.5h0m0 16.4h0m.2-4.2h0m.3 13.7h0m.1-1.4h0m.1-35.5h0m0 39.7h0m.1-45.9h0m.1 9.1h0m0-11.6h0m.1 35.2h0m.3 3.2h0m.1-20.7h0m.2 24.7h0m.1-29.5h0m.1 8.7h0m.1 2.6h0m.2-9.5h0m.1-9.5h0m.1 28.4h0m0-12.5h0m.2-30.8h0m0 39.3h0m.1-41.1h0m.1 9.2h0m.1 28.8h0m.2-29.4h0m.1 52.1h0m.2-48h0m0-3.7h0m.1 10.8h0m.2-4.1h0m0 27.8h0m.1-2h0m.1-9.7h0m.2-9.2h0m0 13h0m.2 14.2h0m.1-20.9h0m.1-10.2h0m.2 7.9h0m.1-21.3h0m.1-9.6h0m0 11h0m.1-3.4h0m0 21.5h0m.1 8.2h0m.1 5.1h0m.1-2.9h0m.1 15.3h0m.1-55.4h0m0 17.1h0m.2-14.8h0m.1-3.4h0m0 16.9h0m.3 13.5h0m.4-16.5h0m0 3h0m.1-9.4h0m.1 30.1h0m.1-11.2h0m0 18.9h0m.2-37.5h0m.1-10.2h0m.1 21.9h0m0 2h0m.1-26.7h0m.1 40.5h0m0-6.9h0m.1-17h0m.1 11h0m0-17.1h0m.1 34.4h0m0-24.2h0m.1 9.4h0m.2 8.4h0m.3 9.7h0m.1 3h0m.2 3.2h0m0 1.6h0m.1-36.2h0m.2 36.8h0m.1 4.8h0m.2-20.7h0m.1 8.2h0m0-6.3h0m.1 2.9h0m0-21.7h0m.1 11.6h0m.1-30.6h0m.1 43.6h0m.2 9.9h0m0-2.7h0m.1 12.3h0m.1-34.2h0m0-6.9h0m.1 43.4h0m.1-15.5h0m.1-15.8h0m.1 13.6h0m.1-28.1h0m.2 35h0m0-53.4h0m.1 14.5h0m.2 23h0m.1-14.3h0m0-16h0m.1-7.4h0m.2 26.5h0m.1-20.4h0m.1 5.9h0m.3 4.1h0m0 14.4h0m.1-27.3h0m.1 41.2h0m.1-15.8h0m0-17.4h0m.1 14.1h0m.1-4h0m0 1h0m.1-15.7h0m.1 11.4h0m.1 17.2h0m.2 2.5h0m.1 13.4h0m.3-9.9h0m.2-30h0m.2 28.6h0m.1-23h0m0 50h0m.1-33.2h0m.2-19.5h0m0 38.7h0m.1-23.7h0m0 15.8h0m.1-19.1h0m.2 23.1h0m.3-6.3h0m.1-22.7h0m.1 12.2h0m.3-24.7h0m.1 1.3h0m0 6.8h0m.1 6.1h0m.1-10.9h0m.1 12.8h0m.1 12.8h0m.3-16.9h0m.1 27.8h0m.1-20h0m.1-18.5h0m0 29.6h0m.1-32.5h0m0 28.7h0m.3-22.4h0m0 28.2h0m.1 10.3h0m.1-31h0m.1 24.1h0m.1-12.4h0m.1-17.9h0m.1 41.5h0m.2-25.9h0m.2 28.3h0m0-11.2h0m.2-26h0m.3 40.2h0m.1-1.6h0m.1-22h0m0 14.5h0m.1 1.8h0m0 8.7h0m.1-13.9h0m.1 18h0m0-9.4h0m.1 9.6h0m0-32.5h0m.1-7.7h0m0 1.6h0m.1 35.4h0m.1-24.6h0m0-18.4h0m.1 28.7h0m0 6.7h0m.2-32.1h0m0 1.6h0m.1 17.3h0m.1 28.8h0m.3-29.7h0m.1-10h0m.2-14.7h0m.1-2.4h0m.1-16.9h0m0 48.4h0m.2-36.8h0m0-15.9h0m.1 22.1h0m0 2.7h0m.1 9.7h0m.1-24.7h0m.1 33h0m0 12h0m.2-14.2h0m.1-26.2h0m.1 43.6h0m0-19.9h0m.1-17.8h0m.1 25.2h0m.1 1.9h0m.1 3h0m.1-21.6h0m0 23.7h0m.1 5.4h0m.2 15h0m.1-40.6h0m.4-12.2h0m.1 22.1h0m.1 6.9h0m0-24.7h0m.1 6.9h0m0-11.7h0m.1-3.8h0m0-6.4h0m.2 2.9h0m.1 24.6h0m.1 2.4h0m.1-11.9h0m.1 7.8h0m0 10.1h0m.5 5.6h0m.1-14.9h0m0-10.3h0m.1 2.7h0m.1-5.5h0m0 39.4h0m.1-5.3h0m0-2.9h0m.2-20.9h0m.1 33.7h0m0-18.7h0m.1 30h0m0-58h0m.1 11.1h0m0 28.5h0m.1-50.6h0m.1 51h0m.1-14.4h0m.1 11.1h0m.1-12.8h0m0 9.4h0m.2 4.1h0m0-29.2h0m.2 11.9h0m.1 1.9h0m0 2.5h0m.1 20.6h0m0 .8h0m.4-27.3h0m.1-24h0m.3 34h0m0-23.6h0m.1 10.6h0m.2-20.8h0m0 28.9h0m.1 7.5h0m0-34.4h0m.2 23.7h0m.1-17.7h0m.3 10h0m.1-2.5h0m0 25.4h0m.1 6.5h0m.2-14.6h0m0-24.7h0m.1 15.6h0m0 24.3h0m.1-36.8h0m.1 33.2h0m.1-6h0m.1 2.9h0m.2-39h0m.1 10h0m.1 15.7h0m0 .9h0m.2 3.4h0m0-10.7h0m.2 13.3h0m0-20.6h0m.1-4.9h0m.1 37.6h0m.3-30.3h0m.1 47.1h0m.1-19.6h0m.1-25h0m0 26.9h0m.1-8.8h0m.1-27h0m.1-5h0m.1-7.1h0m.1 27.5h0m.1-19.4h0m0-4.3h0m.1 32.3h0m.1 4.5h0m.5-15.8h0m.1 7.9h0m.1 1.3h0m.2-3.9h0m.1-7.5h0m.1-12.7h0m.2-3.2h0m0 45.4h0m.1-47.3h0m.1 9.5h0m.2 5.8h0m.1 28.2h0m0-31.7h0m.1 27.1h0m.1-3.5h0m.1-1.1h0m0-11.4h0m.2-3.2h0m.2-11.9h0m.1 20.5h0m.4 16.7h0m0-29.3h0m.1 17.1h0m0 8.7h0m.2-11.6h0m.2-3.9h0m.3 14.5h0m0-18.4h0m.1 26.9h0m.1-44h0m.1 7.9h0m.2 21.2h0m.1-32.9h0m0 29.8h0m.1 6.2h0m.1-18.5h0m.4-3.9h0m0-3.3h0m.1-14h0m.1 20.2h0m.3-10.6h0m.1 45.7h0m0-25.2h0m.1 8.6h0m.1-12.4h0m.2 3h0m0-5.8h0m.1 14.7h0m.1-33.4h0m.2 2.4h0m.2 18.9h0m0-23.6h0m.1 54h0m.1-37.8h0m.1-4.2h0m.1-2.6h0m.1-8.3h0m.1-1.4h0m0 31.4h0m.1 9.4h0m.3-7.4h0m.1-18.1h0m.2-12.2h0m0 5.4h0m.1 20.8h0m0-31.3h0m.1-5h0m0 12.1h0m.1 20.9h0m.2-11.2h0m.1 4.2h0m.4-8h0m.2 5h0m0 6.8h0m.1 8.3h0m.1 7.3h0m0-3.4h0m.2-13h0m0 5.1h0m.1 32h0m.1-10.4h0m0-31.4h0m.2 37.2h0m0-18.5h0m.1 4.1h0m0-8.4h0m.2 16.5h0m.1-44.3h0m.1 3.6h0m.1 26.5h0m.2-13.7h0m0 18.8h0m.1 5.1h0m0-35.7h0m.2 32.2h0m.1-27.3h0m0 12.1h0m.3-7.3h0m0 25.4h0m.3 3.4h0m.2-18.5h0m0 23.9h0m.3-41.7h0m.1 21.4h0m0-20.7h0m.1-5.1h0m.2 16.5h0m.1-7.8h0m0 8.7h0m.1 25h0m.1-12h0m.2-15.8h0m.1 5.6h0m0 3.8h0m.2-16.5h0m.2 24.6h0m.1 2.6h0m0-13.1h0m.4 6.9h0m.3-17h0m.1-16.6h0m0 34.4h0m.1-42.1h0m0 19.8h0m.1 25.3h0m0-13.6h0m.1-2.2h0m.3-17.8h0m.1 3.3h0m.1 1.4h0m0-2.9h0m.2-4.6h0m0 14.5h0m.1 15.9h0m.1-34.3h0m.1 21.2h0m.1 10.2h0m.1-3.7h0m.5 14.9h0m0 8.9h0m.1-34.5h0m.1-3.6h0m.1 8.2h0m.2 3.4h0m.2 9.7h0m0-3.2h0m.1 6.1h0m.2-38.2h0m.2 49.3h0m.1-44h0m0 22.9h0m.2 1.8h0m0 10.7h0m.1-31.6h0m0 34.4h0m.2-31.3h0m.2 25h0m.1-17.4h0m.2 10.6h0m.1 17.6h0m.3-30.1h0m0 27.4h0m.5-11.1h0m0-7.6h0m.1-10.6h0m.1 7.8h0m0 9.1h0m.1 7h0m0-33.6h0m.1 4h0m.2 11.6h0m.1 7.1h0m.1 18.2h0m0-2.1h0m.1 9.2h0m.1-50.3h0m.1-3.2h0m.1 41h0m0 19h0m.1-47.2h0m.1 2.9h0m.1-13.5h0m.2 9.4h0m.1 25.6h0m0-15.9h0m.1 24.8h0m0-21.6h0m.1 5.6h0m0 5.3h0m.1-28h0m.3-18.6h0m0 30.1h0m.2-2.5h0m.1 8.6h0m0 14.8h0m.3-39h0m0-17h0m.2 52.4h0m.1-1h0m0-29.9h0m.1 38.3h0m0-30.2h0m.1 14.2h0m.3-10.5h0m.1 27.8h0m0-12.7h0m.2-21h0m.2-9h0m.2 20.3h0m.1-13.2h0m.1 19.6h0m.2-11.4h0m.2-24.6h0m.1 10h0m.1-15.2h0m0 26.3h0m.1 6.5h0m.2 5.9h0m.1-30.9h0m.2 22.7h0m.1 13.1h0m.1-7.6h0m0-16.8h0m.2 28h0m.1-28.4h0m.1 41.1h0m0-9.3h0m.2-27.2h0m.1 41.3h0m.1-49.8h0m.2 3h0m.1 9.6h0m.1-1.1h0m.1 7.1h0m.2 12.2h0m.2-5h0m.1 9.9h0m.1-35.2h0m.1 20.2h0m0 15.5h0m.3-3.9h0m0-19.8h0m.1 16.4h0m0-28h0m.1 23.5h0m0 18.5h0m.1-38.9h0m.1 34.6h0m.1 1.1h0m.1-25h0m.3 2.1h0m0 4.1h0m.2 31.2h0m.1-56.1h0m.1 31.7h0m0-18.1h0m.1 8.7h0m.2-4.8h0m.1 6.2h0m.2 13.4h0m.1-27.1h0m.1 15.6h0m.2 11.2h0m0 11.9h0m.1-10h0m0-4.9h0m.2 10.4h0m.2-15.1h0m.3 12.3h0m0 4.5h0m.2-31h0m.2 12.4h0m.1-19.9h0m.1 6.1h0m0 37h0m.1-30.3h0m.2-16.5h0m0 13.7h0m.2 22.6h0m.1-6.5h0m0 16.2h0m.1-1.1h0m.1-26.2h0m.1-11.7h0m0 32.8h0m.4-19.1h0m.2 11.1h0m.2-7.3h0m.1 17.5h0m.3-16.5h0m0-13.6h0m.1-9h0m0 35.3h0m.1-23.9h0m.1-9.1h0m.1 23.5h0m.1-27.5h0m.1 17.6h0m0-1.8h0m.1 18.3h0m.1-35.7h0m0-2.3h0m.1 11.4h0m.1 17.3h0m.3 14.8h0m.1-16.9h0m.2-2h0m0 11.2h0m.1-27.8h0m.2 24.2h0m.1 12.3h0m.1-27.6h0m.2-3.5h0m0 21.9h0m.1-33.8h0m.3 28.8h0m.1-8.5h0m.1 17.3h0m0-14h0m.1 16.7h0m.1-17.7h0m.1-21.8h0m.3 44.8h0m0-37.4h0m.2 17.3h0m.1-7h0m.1 18.3h0m.1 2.6h0m.2-9.7h0m.1 3.2h0m.1-33.1h0m.1 14.4h0m.1-3.5h0m.1-14.5h0m.1 9h0m.1 16h0m.1-30h0m0 6h0m.1 19.1h0m.2-12.6h0m.1-10.2h0m0-9.3h0m.1 43.2h0m0-12.2h0m.1-13.6h0m.3-2.3h0m0 9.3h0m.1 2.4h0m0 23.9h0m.1-10.1h0m.1-19.9h0m0-8.2h0m.1 33.3h0m0 1.9h0m.2-12.7h0m.2 20.4h0m0-2.5h0m.1-13h0m.1 26.2h0m.1-7.5h0m.1-36.5h0m.3 13h0m.1 36h0m.1-8.9h0m0-23.8h0m.1 32.4h0m.1-28.2h0m.1 21.5h0m0-37.8h0m.1 41.5h0m.1-14.9h0m.1 18.6h0m.1-40.8h0m0 18.8h0m.1-16.2h0m.1 20.5h0m.1-30.3h0m.1 19.7h0m.1 14.1h0m.1-12.9h0m0-26.1h0m.1 10.1h0m.1-23.6h0m.2 8.3h0m0-5.6h0m.1 30.7h0m0-25.6h0m.1 24.6h0m.1-15.9h0m.1 25.7h0m0-33.8h0m.1 13.9h0m.1-10.5h0m.3 35.4h0m0-27.2h0m.1 4.3h0m.2-30.6h0m.1 19.6h0m0 16.3h0m.1 6.3h0m.1-38.4h0m.1 30.8h0m.1 22.2h0m0 .9h0m.3-5h0m0-7.4h0m.1 14.9h0m0-28.2h0m.2 32.7h0m.1-14.3h0m.1 20.2h0m0-5.6h0m.1-23.4h0m.2-18.2h0m.1 14.7h0m0 24.5h0m.2-55h0m.1 17.7h0m0-11.7h0m.1-13.6h0m.1 27.1h0m.1-7.8h0m.2 17.4h0m.2 11.8h0m.1-8.3h0m0-6.6h0m.1 20.1h0m.1-9.7h0m.1-11.9h0m.1 15.1h0m.1-32.4h0m.1 35.1h0m.1-11.9h0m.1 18.7h0m.3-31.1h0m.1 3.4h0m0-6.4h0m.3-7h0m.1 34.1h0m.2-18h0m.2 21.6h0m.1-10.6h0m.1 15.2h0m.1-12.2h0m.1-10.9h0m.1 2.1h0m.1 3.2h0m.2-18.7h0m.3-4.2h0m.1 .3h0m0 19h0m.2 18h0m0-9.2h0m.1-14.5h0m.3 2.9h0m.2 1.9h0m.1-8.4h0m.1 21.6h0m0 3.2h0m.1-27.3h0m.2 3.5h0m.1-9.3h0m.1 38.5h0m.2-35.9h0m0-14.7h0m.1 34.6h0m0 1.7h0m.1-3.5h0m.4 10h0m.1 14.1h0m.1-15.9h0m0 3.8h0m.2 8.6h0m.3 5.7h0m.2-22.3h0m.1 9.2h0m0 2.6h0m.1-24.6h0m0 23h0m.1-21.3h0m0 21.9h0m.2-8.6h0m0-21.5h0m.1 12.6h0m.1-2.2h0m0 3.5h0m.1 8.1h0m.1-24.9h0m0 4.9h0m.1 41.6h0m.1-37h0m.1 10.6h0m0 16.3h0m.1 2.2h0m.5-57.7h0m.1-3.5h0m.1 13h0m0-12.4h0m.1 4.8h0m.1 .4h0m0-1.3h0m.1 4h0m.1 17h0m0-15.9h0m.1-3.1h0m.1 9.7h0m.1 2.5h0m.1-2.7h0m.1-5.1h0m0 16.8h0m.2 1.2h0m.1 9.7h0m.1-4.3h0m.1-13.2h0m.2 15.7h0m.1 6.1h0m0-11.7h0m.1 8.9h0m0 5.4h0m.2-22h0m0 23.2h0m.3-13.2h0m.1 18.2h0m.1-32.5h0m0 29.2h0m.2 5.4h0m0-4.5h0m.1 5.3h0m0-11.4h0m.1-6.2h0m.1 28.7h0m.3 11.2h0m0-21.8h0m.2 4.4h0m.1-32.7h0m.1 .4h0m0 35.8h0m.2-26.9h0m.1 22.9h0m0-10.6h0m.1 14.1h0m.1-16.8h0m.1 26.3h0m0-19.5h0m.1 2.8h0m0-23.8h0m.2 9.1h0m.1-15.9h0m.1-3h0m.1 17.2h0m.6 25.9h0m0-32.3h0m.3 19.2h0m.1-8.5h0m.1-18.5h0m.1 24h0m.1-20.5h0m0-19.2h0m.1 38h0m.1-8.3h0m0-2.8h0m.1-22.5h0m.1 7.6h0m.2 36.8h0m0-4.1h0m.2-8.2h0m0 13.2h0m.4-25.1h0m.1 33.7h0m.1-26.5h0m0-14h0m.1 28.7h0m.1-4.1h0m.2 6.3h0m.3-3.7h0m0-31.4h0m.3 8.1h0m0-1.7h0m.3 6.1h0m.1 21.5h0m.1 7h0m0-15h0m.2 2.7h0m.1-13.3h0m.1 1.4h0m0-16.9h0m.2 23.9h0m0-3.2h0m.2 18.7h0m.1 4.6h0m.2-33.9h0m.1 22h0m.3-25h0m.1 8.6h0m.1-12h0m.1 10h0m0 7.5h0m.3 26.7h0m.1-7.1h0m0-4.3h0m.1 6.6h0m0 5.8h0m.1 2.2h0m.3-32.7h0m.2 6.4h0m.1 21.5h0m.1-12.3h0m.1-22.4h0m.1 17.9h0m0-2.7h0m.2-21.6h0m.1 16h0m.1 9.6h0m.1-22h0m0-4.3h0m.1-4h0m.2 13.9h0m0 29.5h0m.2-4.7h0m0-21.8h0m.3 23.7h0m.1 11h0m.1-48.8h0m.2 19.9h0m0 5.6h0m.1-11.8h0m.1 18.3h0m.1 .7h0m.1 9.9h0m.3-33.6h0m.1-1.6h0m.1 21.1h0m.1-6.1h0m.1 14.7h0m.1 8.2h0m0-6.3h0m.2-22.3h0m0 31.5h0m.1-3.2h0m0-12.5h0m.1 20.6h0m.2-34.3h0m0 19.6h0m.2-8.8h0m0 5.2h0m.1-20.3h0m.1-15h0m0 24h0m.2-21.4h0m.2-6.2h0m.1 9.5h0m.3 21.5h0m.1-16.6h0m0-20.5h0m.1 27.1h0m.1-4.4h0m.1 8.7h0m.1-21.8h0m.1-3.6h0m.2 35.5h0m.2-23.2h0m.2 7.6h0m.2-11.1h0m.2-3h0m.1 32.8h0m.1-4.5h0m.1-19h0m.1 36.9h0m.5-12h0m.1-10.8h0m.1-1.2h0m0-12.2h0m.1 27.4h0m.3-12.4h0m.1 18.4h0m.3-30.8h0m0 7.5h0m.1 13h0m.3-35.7h0m0 7.2h0m.1 22.4h0m.1 3.2h0m0-7.5h0m.1-27.7h0m.1 12.1h0m0-4.8h0m.1-1.4h0m0 33.4h0m.1-20h0m.1-23.1h0m.2 25.5h0m.2 1.3h0m.1-20.5h0m0-3.4h0m.1 16.3h0m.2-18.9h0m.1 10.2h0m0-19.1h0m.1 30.6h0m0-11.1h0m.2 33.3h0m0-8.5h0m.1 .9h0m.1-11.8h0m0 5.7h0m.3-16.4h0m0 27.6h0m.1 19.7h0m.1-5.6h0m.1-7.9h0m0-31.8h0m.1 24.3h0m0 20.1h0m.1-6.3h0m.1-22h0m.1 1.3h0m.1-5.3h0m.1 22.2h0m.1-9.5h0m.1-4h0m.1-34.8h0m.2 43h0m.1-15.7h0m0-8.9h0m.3 31h0m.1-44.1h0m0 6.4h0m.2 4.2h0m.1-7h0m.1-5.1h0m.3 10.1h0m0-11.1h0m.1 2.7h0m.1 18.6h0m0 22h0m.1-37.4h0m.1 14.8h0m.1 17.7h0m0-23.4h0m.1 14.7h0m0-36.4h0m.2 38.9h0m.2 10.5h0m.2-25.7h0m.1-25h0m0 36.2h0m.1-33.8h0m0 14.2h0m.3 17.5h0m.1-31.7h0m.2 29.4h0m.2-12.2h0m.1 16.2h0m0-7.3h0m.1-2.7h0m0-13.1h0m.1-2.5h0m.1 43.4h0m.1-37.2h0m.1 38.3h0m.1-14.6h0m.1 15.9h0m.1 6.6h0m0-41.9h0m.1 40.9h0m.1-18.5h0m.1 3.6h0m.2-24.1h0m0 29.8h0m.3-19.2h0m0-19.1h0m.1 5.2h0m.1 18.7h0m.2-27.7h0m0 39.7h0m.4-19.4h0m0 7.2h0m.1-9.3h0m.1 11.2h0m0 20.3h0m.2-5.8h0m.1 10.3h0m0-39.5h0m.1-6.7h0m.1 16.3h0m.1 21.6h0m0-11h0m.2-23.3h0m.1 7.1h0m0 10.9h0m.1-24h0m.1 26.4h0m.3-22.4h0m.1-8.3h0m0 21.2h0m.1-27.6h0m.1 3.4h0m.1-12.5h0m0 11.5h0m.1 18.6h0m.1 8.4h0m.1-25.1h0m.1 11.8h0m.1 3.1h0m0-12.1h0m.4 24.1h0m.2-38.4h0m.1 34.2h0m.1-18.2h0m.1-22.1h0m.1 4.2h0m.1-5.2h0m0 17.6h0m.1-15.3h0m.2-2.1h0m0 35h0m.1-8.5h0m.2 20.8h0m0-32.7h0m.3-2.9h0m.1 18.2h0m0-19.1h0m.1 24h0m0-2.4h0m.1 10.6h0m.2-19.7h0m0 24.3h0m.1-7.4h0m.1-30.1h0m.1 39.1h0m.1 4h0m.1-7.5h0m.1-20.8h0m.2 13.5h0m0-18.4h0m.1 1.1h0m.1 7.8h0m0-15.5h0m.2 17.5h0m.1-24h0m.1 20.4h0m.1 15.4h0m.1-37.7h0m0-3.2h0m.1 43.3h0m.2-28.1h0m0 34.5h0m.1-11.8h0m.2-1.8h0m.2 20.5h0m.1-56.6h0m.1 11.5h0m.1-8h0m.1 11.4h0m.1 2h0m.1-7h0m.2-3.1h0m0 17.5h0m.1 6.4h0m0 17h0m.2-6.5h0m0 3.2h0m.1-25.6h0m.3 3.3h0m0 13.9h0m.1-9.5h0m0 5.1h0m.3 3.8h0m.1 19.1h0m0-25h0m.1 17.1h0m.3 19.6h0m.3-58.1h0m.1 8.9h0m.1-3.8h0m.1 25.4h0m.1-19.3h0m.1-12.4h0m.1-6.2h0m.1 39.9h0m.1-14.7h0m0 10.1h0m.1-1.7h0m0-4.3h0m.2 25.7h0m.1 .4h0m.1 5.6h0m0-51.6h0m.1 32.9h0m.1 2.1h0m.1-22h0m0 5.3h0m.3 3.8h0m.2 15.9h0m0-29.2h0m.2-3.3h0m.1 5.1h0m.1 11.8h0m0 7.2h0m.1-32.2h0m.1 30.5h0m.1 6.7h0m.4-18.3h0m.2-4.8h0m0 31.5h0m.1-40h0m.1 52.3h0m0-55.7h0m.1 25.7h0m.1 21.2h0m.2-13.7h0m0 15.4h0m.1-7.9h0m.1-25.7h0m0 23h0m.2-30.3h0m.2 20.5h0m0-9.4h0m.2 2.5h0m0 13.6h0m.2-28.8h0m.1 55.8h0m.2-49.7h0m.1 36h0m.1-8.9h0m.2 7h0m.1-16h0m0-6.7h0m.1-13.8h0m.3 33.7h0m0-39.2h0m.1-3.4h0m.2 25.9h0m0-24.7h0m.1 14.7h0m0 16.5h0m.1 3.2h0m.1-23.4h0m.1-19.3h0m.1-3h0m0 41.8h0m.2-24.9h0m.1 20.6h0m.2 14h0m.1-21h0m.3-1.5h0m.1-5.1h0m.1 25h0m.1 .5h0m0-15.2h0m.1-11.4h0m.2 22.2h0m.1-20.9h0m.1-8.9h0m0 22.1h0m.1-25.4h0m.2 19.9h0m0-11.9h0m.1-4.3h0m.3 10.8h0m0 26.8h0m.2-42.5h0m.1 46.2h0m.1-15.1h0m0 12.5h0m.1-38.8h0m.1 11.5h0m.1-16.8h0m0 36.6h0m.4-28.2h0m0 23.8h0m.1-8.2h0m.2 22.1h0m.1-42.6h0m.1 16.9h0m0 8.7h0m.1 12.6h0m.2-29.4h0m0 18.7h0m.1-2.2h0m0-19.9h0m.3 27h0m.1-9.9h0m.1-6.9h0m.1-26.4h0m.1 6.3h0m0 15.8h0m.3-9.4h0m.1 37.8h0m0-20.7h0m.2-18.9h0m0 29.6h0m.1 2.3h0m.1-2.3h0m0-31.8h0m.4 14.9h0m.2-4.5h0m.1-5.5h0m.2 2.2h0m.1 8.4h0m0-21.4h0m.1 17.2h0m.1 7.5h0m0 5.3h0m.2-1.2h0m.1 5.1h0m0-30.8h0m.1-4.2h0m.5-9.5h0m.1 5.6h0m0 1.3h0m.1-9.8h0m0 19.6h0m.2-16.4h0m.1 .2h0m.3 4.8h0m.1 16.1h0m.2-9.5h0m.1-.5h0m0 12.8h0m.1-5.1h0m.1 10h0m.2-9.1h0m.1 17h0m.1 2h0m0-13.3h0m.1 7.8h0m.1-5.4h0m0 16.8h0m.1 2.8h0m.1 1.1h0m.1-6.7h0m.1-27h0m.1 15.4h0m0 19.5h0m.3 14.6h0m.2-41.9h0m.2 33.9h0m.2-1.6h0m0-36.8h0m.1 22.6h0m.1 12h0m.2-5.3h0m.2-34.1h0m.1 32.4h0m.1-9.4h0m.1 29.4h0m0-58.6h0m.1 19.1h0m.1 11.6h0m.1 4.6h0m.1-27.4h0m.1 6.4h0m.1 11.6h0m0 .4h0m.2-8h0m.1 3.4h0m0-12.5h0m.1 2.4h0m.1 4.5h0m.1 26.5h0m0-17.6h0m.1-4.2h0m.3 17.5h0m.2-16.1h0m0-7.3h0m.1 26.9h0m.3-11h0m.1 17.6h0m.1 7.8h0m.1-23.8h0m0 15.1h0m.3-12.4h0m.1 17.5h0m.2-35h0m0 16.3h0m.1-7.2h0m.3 2.1h0m0-22.9h0m.1 6.3h0m.2 18.6h0m.1-26h0m0 19h0m.1 2.8h0m.1-16.2h0m.1 29.7h0m.1-3h0m.1-22.5h0m0 28.4h0m.1-14.6h0m0-19.9h0m.2 11.9h0m.2-11.2h0m.2 34.2h0m0 17h0m.1-23.8h0m0-19.5h0m.3 31.6h0m.1 6.6h0m.1-2h0m0-8h0m.1-26.6h0m.1 39.8h0m0-10.8h0m.4-7h0m.1-27.9h0m.1 20.7h0m.2-10.4h0m.2 8.1h0m.2-5.8h0m.1-15h0m.1 26.4h0m.1 2.3h0m.1 2.7h0m.1 3.2h0m0 6.6h0m.1 5.9h0m.1-4.6h0m.4-22.3h0m0 29.9h0m.2-39.9h0m0 27.8h0m.1-36.1h0m.1 34.2h0m.2-3.4h0m0-8.8h0m.1-15.2h0m.1 11.7h0m0-21h0m.1 12.5h0m0-5.8h0m.3 9.3h0m0 4h0m.1-27.6h0m.3 3.2h0m0 10.5h0m.1-15.6h0m0 38h0m.2 13.3h0m.1-41.3h0m.1 23.9h0m.1-32.9h0m.1 39.1h0m.2-20.5h0m0 29.3h0m.2-46.2h0m.1 10.1h0m0 38.7h0m.2-14.3h0m.1 9.7h0m.1 7.7h0m0-35.7h0m.1 8.9h0m0 3.8h0m.3 9.9h0m0-17h0m.1-8.7h0m.1 16.8h0m.1-6.7h0m.1 9.4h0m.3 10.3h0m0-2.8h0m.1-30.2h0m.3-10.4h0m.1 8h0m0 12h0m.1 8.5h0m.2-11.1h0m.1 32.2h0m.2-12.8h0m0 3.2h0m.4 1.2h0m.1-26.6h0m.1 .3h0m0-12.5h0m.1 7h0m.1 22.4h0m.1-5.4h0m0 2.9h0m.1-6.4h0m.3 12.1h0m0 8.5h0m.1-22.8h0m0 6.4h0m.1 10h0m.1-18h0m.1 21.2h0m.1 10.1h0m0-3.1h0m.1-1.3h0m.4-22.7h0m.1 18.8h0m.1-28.2h0m.3-1.3h0m.2 37h0m.1-24.2h0m0 19.4h0m.1-33.9h0m.1 43.3h0m.2-2.1h0m.1-43.3h0m.1 11.8h0m.1 12.2h0m.1-3.3h0m.1 18.7h0m.1-9.9h0m.2-2.4h0m.1-35.7h0m.1 32h0m.1-30.7h0m.1 6.3h0m0 35.7h0m.1-40.5h0m0 12.5h0m.1 26.1h0m0-13.7h0m.2 8.8h0m0-28.3h0m.1 15h0m.1-3.2h0m.3 2.4h0m.2-16.1h0m.2-7.7h0m.2 39.9h0m0-26.3h0m.1-14.9h0m0 18h0m.1-12.4h0m.1 13.4h0m.1 29.7h0m0-17.8h0m.1-9.9h0m.1-7.3h0m.1 14.7h0m.1 25.4h0m0-17.2h0m.2 3.7h0m.1-6.5h0m.1 10.5h0m.1 3.3h0m0-13.9h0m.1 16.4h0m.1-24h0m.2 16.7h0m.1-28.6h0m.1 9.1h0m.2-22.9h0m0 53.6h0m.2-33.9h0m0 17.3h0m.1-26.6h0m.1 18.1h0m0-22.7h0m.1 39h0m.1-28.6h0m0 27.8h0m.1-7.9h0m.1-39.3h0m0 33.3h0m.2-8.9h0m0-27.1h0m.6 19.2h0m0 10.7h0m.1-32h0m.1 17.4h0m.1-9.6h0m.1 25.5h0m.1-27.6h0m.1 41.9h0m.1 8.2h0m.3 1.9h0m0-9.3h0m.1-21.8h0m0-7.9h0m.1 16.5h0m.1 11.3h0m.1 7.7h0m.1-12.3h0m.1 1.6h0m.1-1.9h0m.1-18.3h0m.1 6.6h0m.1-14.7h0m.2 37.2h0m.1-14.6h0m.1 3.1h0m.1 19.6h0m.1-13.9h0m.1-19.1h0m.1 13.3h0m.1 16.7h0m.1 9.7h0m.2-43.9h0m.1 25.6h0m.1-16.2h0m0 26.3h0m.1-5.8h0m.2-3.1h0m.1-24.8h0m0 13h0m.2-2.6h0m.1 9h0m.1 18.3h0m.4-9.5h0m.2-20.7h0m.1 24.2h0m0 9.8h0m.2-37.1h0m.1 18.3h0m0 16.9h0m.1-41.7h0m.1 19.3h0m.1 15.3h0m.2-20.1h0m.3 13.3h0m.1 5.6h0m0-4.3h0m.1-11.8h0m.1-13.3h0m.2 .5h0m.1-9.9h0m.1 43.1h0m.1-25.8h0m.1-18.9h0m0 30.1h0m.1-1.9h0m.3-27.6h0m.1 21.6h0m.2-13.5h0m0 10h0m.1 23h0m0-26.9h0m.1 13.7h0m0 4.4h0m.2-7.4h0m0-9.2h0m.3 28.9h0m.4-38.8h0m.1 29.4h0m0-4.5h0m.1-20.7h0m0 28.8h0m.2-16.1h0m.1 20.3h0m.4-31.1h0m0-8.4h0m.1-1.6h0m0 11.7h0m.1 31.4h0m.1-41.7h0m.1 30.9h0m.1-16.6h0m0-20.2h0m.1 7.3h0m.1 14.7h0m.1-10.5h0m.1 12.3h0m.1 16.1h0m.2 3h0m.1-13.2h0m.2-3.1h0m.1 2.5h0m.1 3.1h0m.1-13.4h0m0 16h0m.1 9.3h0m.4-31.3h0m.2-3.5h0m.7 6.4h0m.1 7.5h0m.1-16.2h0m.1 30.5h0m.1-17.7h0m.1-15.4h0m.1 23.5h0m.1 11.7h0m.3-26.6h0m0 11.6h0m.1 31.4h0m.1-13.2h0m0-9h0m.2-2.7h0m0 15.2h0m.1 7.3h0m.1-35.4h0m.1 22.3h0m0-28.6h0m.1 13.3h0m.1 21.1h0m.3-10.3h0m0-42.4h0m.2 36.2h0m.1 14.5h0m.1 7.7h0m.1-35.7h0m0-3.2h0m.1 35.4h0m.1 1.2h0m0-16.5h0m.1-11.4h0m.1-12.3h0m.2 28.1h0m.1-44.1h0m.1 34.9h0m.1-5.1h0m.1 11.3h0m0 16.4h0m.1-44.4h0m.3 32.7h0m0-20.5h0m.1 23.3h0m.2-1h0m.1-5.1h0m.1-4.4h0m.3-28.1h0m.1 1h0m0 22.3h0m.2-16.1h0m0-4.5h0m.1 15.6h0m.1-9h0m.1 18.4h0m.1-30.7h0m.1 14.4h0m.1 4.8h0m0-20.1h0m.1 47.5h0m.1-31.1h0m.1 23h0m.3-9.3h0m.1-26.7h0m.2 21.3h0m.1-38.8h0m0 12.1h0m.1-10.7h0m0 36.7h0m.1-40.2h0m.2 34.5h0m.1 4.9h0m.1-33.9h0m0-.9h0m.2 61.6h0m.2-55.3h0m0 9.9h0m.2 5.1h0m0 18.1h0m.1-12.8h0m.1-18.2h0m.1 15.1h0m.3-8.9h0m.1 41.8h0m0-37.7h0m.1 22.8h0m.1 4.7h0m.2-1.8h0m.1-11.9h0m.1 19.8h0m.1-31.8h0m.1-13.2h0m.1 1.1h0m0 18.3h0m.3 3.3h0m0 7.6h0m.2-15.9h0m0 19h0m.1 2.6h0m.2-8.1h0m.5 11.3h0m.2-22.5h0m0 13.1h0m.1-33.7h0m.2 13h0m.1 1.8h0m.1-18.1h0m.2 12.9h0m.1-8.9h0m0 23.2h0m.1-28.6h0m0 33.4h0m.2-30.5h0m.2 19.2h0m.1-12.1h0m.1-.4h0m0-2.8h0m.2 34.4h0m0-15.5h0m.3 5.2h0m.1 12.3h0m0-37.1h0m.2 48h0m.1-30.2h0m0-11.4h0m.1 23.2h0m.2-6.5h0m.1-15.3h0m0 2.7h0m.1 32.2h0m0-3.6h0m.2-23.2h0m.1 17.4h0m.1 11.2h0m.1-31.3h0m.1 18.5h0m0 17.5h0m.2-19.7h0m.1 7.2h0m.1 5h0m.3-17.5h0m.1 2.3h0m.1-24.4h0m0 18.2h0m.3-15.8h0m.1-2.7h0m0 44.5h0m.3-14h0m0 21.5h0m.2-42.7h0m.1 4.6h0m.1 32.3h0m.1 10.3h0m0-52.4h0m.2 33h0m.1-21h0m.1 4.9h0m0-9.1h0m.2 30.9h0m0-39.8h0m.1 31.3h0m.4-6.8h0m.2-14h0m.1 27.7h0m.1-2.8h0m0-12.8h0m.1 4.4h0m.1-4.4h0m0 7.4h0m.1-25.9h0m0 20.5h0m.1-9.4h0m.1 17.2h0m.1-21.1h0m.2-4.7h0m.4 36.2h0m0-44.3h0m.2 22.5h0m0 12.6h0m.1-35.2h0m.1 15.4h0m.1 6.2h0m.1 5.9h0m.1 14.2h0m.2-22.7h0m.1 20.9h0m.1-3h0m0-7.9h0m.1-19.3h0m0-6.1h0m.2 4.7h0m.1-2.6h0m0 39.8h0m.2-41.9h0m.1 53.7h0m.3-41.5h0m.1-3.3h0m.1 19.6h0m.3 26.7h0m.1-34.4h0m0 28h0m.1-24.9h0m.1 15.1h0m0-30h0m.1 6.8h0m0 20.8h0m.1-5h0m.2 12.3h0m.1-38.8h0m0 23.1h0m.1 17.7h0m0-39.9h0m.1 6.4h0m.2 7.2h0m.1 12h0m0 3.1h0m.1 18h0m.1-13.4h0m0-16.3h0m.1-5.7h0m.1 9.2h0m.2 24.1h0m.1-8.5h0m.2-30.1h0m.1 50.6h0m.1-46.5h0m0 30.4h0m.3 7.7h0m0-6.1h0m.1 8.4h0m0 4.1h0m.1-1.9h0m.1-14.6h0m.1-6.5h0m.1 13.8h0m.2-21h0m0 11.5h0m.2-13.7h0m0 34.4h0m.1-28.4h0m.1 7h0m.1-16.8h0m.1-23.9h0m.1 21h0m.1-3.2h0m.2 31.2h0m.2-11.2h0m0-23.8h0m.1 17.5h0m.1-29.2h0m.2 24.4h0m.1-27.9h0m0 31.1h0m.1-29.5h0m.1 9.7h0m.2-26.6h0m0 61.7h0m.1-10.4h0m.2-31.1h0m.1-12.9h0m0 21.4h0m.2 26.6h0m.1-30.4h0m.1-4.5h0m0 16.8h0m.2-4.4h0m.1-14h0m0-7.4h0m.1 14.2h0m0 13.5h0m.1 2.4h0m.3-7.4h0m0 29.3h0m.1-35.3h0m.5 20.5h0m0 6.1h0m.1-9.6h0m0-22.1h0m.2 34.8h0m.1-4.4h0m.2-23.2h0m.1 2.3h0m.1 4.8h0m.1 22.7h0m.2-8.4h0m0-28.9h0m.1 18.9h0m.1-2.2h0m.2 4.1h0m.1-25.2h0m.1 .3h0m.1 7.2h0m.1 6.1h0m.1-2.8h0m.1 8.1h0m.1-20.6h0m.1-4.7h0m0 42.8h0m.1-40.5h0m.1 20.9h0m.1 11.5h0m.1 15.2h0m.2 2.4h0m.2-38.2h0m.1-3.6h0m.1 29.2h0m.2-2.5h0m.1 18.9h0m.1-24.5h0m0 4.2h0m.1-2.4h0m.1 13.7h0m.1 .3h0m.1-18.1h0m.1 10.2h0m.1-39.7h0m.1 21.9h0m0-4.3h0m.2-4.8h0m.1-7.1h0m.1-4.3h0m0 41.6h0m.2-13h0m.1-2.8h0m0-16.4h0m.1-14.7h0m.1 22.8h0m.1 5.6h0m.1 14.6h0m.1-24.9h0m.2 29.5h0m.2 11.1h0m.1 7.1h0m.1-38h0m.1 21.8h0m0-24.7h0m.2 29.2h0m.1-24h0m0 13.2h0m.1-37.8h0m0 9.2h0m.1 41.7h0m.2-18.3h0m.1-16.6h0m0 1h0m.1 13.6h0m.2-3.6h0m0-20.9h0m.1 29.1h0m0 3.3h0m.1-28.7h0m.1 22.9h0m0-30.7h0m.1-4.2h0m.2 36.2h0m.1 1.2h0m.1-15.7h0m0 7.4h0m.1 12.8h0m.2-10.3h0m0-7.3h0m.2-9.7h0m0 .8h0m.1 26.5h0m.1-15.5h0m.2-33.8h0m.2 13.9h0m0 12.8h0m.1-8.5h0m.1-3.2h0m.1 23.1h0m.2-20.1h0m.1-14.1h0m.2 2.5h0m.1 22.9h0m0-18.1h0m.2 42.7h0m.1-14h0m0-31.1h0m.3 16.8h0m0 19h0m.1-30.8h0m.1 37.9h0m.2-16.1h0m.1 6.9h0m.1-21.2h0m0 1.6h0m.1 5.5h0m.1 10.4h0m.1-4.8h0m0 15.3h0m.1-17.2h0m0 8.8h0m.1 4.1h0m.1 6.8h0m.5-56.2h0m0 10.2h0m.1-14.3h0m0 24.9h0m.1-7.1h0m.1-7.1h0m.1 3.5h0m0-1.7h0m.1 8.3h0m.3 6.2h0m.1 2.2h0m.1-6.8h0m.1 17.1h0m.1-14.6h0m.1 8.7h0m.1 3.1h0m0-4.7h0m.4 10.9h0m0 3.6h0m.1 2.9h0m.3 2h0m.1 9.7h0m.1-23.4h0m0 7.4h0m.1 7.9h0m.1 3.1h0m.2-29.1h0m.1 32.2h0m.2-26.6h0m.2 8.3h0m.1 19.4h0m.1 11.7h0m.1-35.9h0m.1 17.7h0m.1 7.9h0m0-.3h0m.1-40.2h0m0-2h0m.1 45.1h0m0-13.6h0m.3-2.3h0m.1 3.2h0m.1-28.2h0m0 19.4h0m.1-10.3h0m.1 38.4h0m.2 2.7h0m0-36.8h0m.2-10h0m.2 30.8h0m.1-18.8h0m.1 7.4h0m.2 22.5h0m.1-38.4h0m.1-10.1h0m.1 4.4h0m.1 17.5h0m.1 4.5h0m.1-12.9h0m0 20.1h0m.2-49.2h0m0 17.2h0m.2 5.7h0m.2 16.1h0m.1-31.5h0m0 13.9h0m.2 4.7h0m.1 41.1h0m.1-33h0m0 8.9h0m.1 17.7h0m.1-15.9h0m0 10.2h0m.1-5.2h0m.1 11.7h0m0-1.5h0m.2-9.5h0m.1 8.4h0m.1-31.2h0m0 23.4h0m.2-27.4h0m0 6.8h0m.1 6h0m.1 16.9h0m0 8.7h0m.2-19.1h0m.1-3.4h0m0-8h0m.3 3.9h0m.1 18.6h0m.1-40.3h0m.2 11h0m.1 30.9h0m.2-8.6h0m.1-30.1h0m.1 41h0m.2-8h0m.1-18.9h0m.1-1.8h0m.2 14.7h0m.1-11h0m.1-7.2h0m0 1.8h0m.2 13h0m.1 14.9h0m.1-17.4h0m.3-19.9h0m.1 15h0m0 39.5h0m.1-28.2h0m.1-8h0m.3 23h0m.1-39.9h0m.2 38.8h0m0-10.7h0m.1 21.3h0m.1 9.1h0m.2-25.6h0m.1-2.2h0m.1 5.3h0m.1-19.7h0m0-10.7h0m.1 16.6h0m.1-25.8h0m.1 12.9h0m.1-12.7h0m.1 4.9h0m.1 2.6h0m0 33.5h0m.1-13h0m.2-13.1h0m.1 33.5h0m.1-14.2h0m.1 21.5h0m.3-25.5h0m.3 7.2h0m.1-20.8h0m0 9h0m.1 6.8h0m.1-21.7h0m.1 16.2h0m0-30.1h0m.1 46.8h0m0-21.7h0m.1-20h0m0 20.7h0m.2-10.4h0m.1 27.4h0m0-31.5h0m.3 9.8h0m.1 2.6h0m0 28.9h0m.1-8.4h0m0-36.8h0m.2-12.3h0m0 14.2h0m.1 16.8h0m.1 12.7h0m.1-24.9h0m.1 23.1h0m0-17.5h0m.2-17.2h0m.2 15.5h0m.1 5.5h0m.1 8.3h0m.1-19.2h0m.1 5.1h0m.1-1h0m.2 12.1h0m.1-21.5h0m0 50.1h0m.1-22.3h0m0-23.6h0m.1 30.2h0m.1 4h0m.1-11.5h0m.1 19.8h0m.1-5.6h0m.2 12h0m.1-3.4h0m.2-49h0m.1 30.3h0m0 17.6h0m.3 5.4h0m.1-31.1h0m0 15.6h0m.1-19.2h0m0 25.4h0m.1-30.8h0m.1-10.1h0m0 33h0m.1-24.3h0m.2 14.5h0m.1-19.8h0m.1-19.4h0m0 28.8h0m.2 5.5h0m0 7.4h0m.1-35.1h0m.2 30.4h0m.1-32.5h0m.1 48.6h0m0 5.7h0m.1-49.5h0m.1 12.4h0m.3 25.6h0m0-3.7h0m.2 2.6h0m.1-18.7h0m.1 23.6h0m.1-13.6h0m.1-5.2h0m.2 30.7h0m.1-1h0m.2-19.3h0m.1-18.7h0m.1 46.8h0m.1-39.9h0m0 2.9h0m.2 5.1h0m.1 18.5h0m0-37.2h0m.1 33.2h0m0-12.7h0m.1 17.1h0m0-41h0m.3 44.5h0m0-30.3h0m.1-4.2h0m.2-2.8h0m.1 25.4h0m.1-19.8h0m.1 7.8h0m.2 32.2h0m0-21.9h0m.1 13.3h0m.1-10h0m.1-6.3h0m.3-23.1h0m.1 33.3h0m.3 1.3h0m.1-43.4h0m.1 22.2h0m.1 2.2h0m.1-8.1h0m.1 12.7h0m0-23.1h0m.1 14.6h0m.1-16.8h0m.1 8.2h0m.1 6.7h0m.1-27h0m.1 34.8h0m.1-30.6h0m.1 40.1h0m.1-33.8h0m.1 44.3h0m.1-31.4h0m0 15.9h0m.1-11.6h0m.1 22.8h0m.1 12.1h0m.1-43.8h0m.1 24.6h0m.1-1.8h0m0-15.6h0m.6-9.4h0m.1 28.6h0m.1-45.4h0m0 12.8h0m.2 2.2h0m.1-6.1h0m0 21.7h0m.1 2.1h0m.1-8.6h0m.1 13h0m.1-19.6h0m.2 17.2h0m0-26.9h0m.2 13.8h0m.2 18.6h0m0-20.6h0m.2 6h0m.2-24.8h0m.1 36.4h0m0-37.6h0m.1 28.2h0m0 23.9h0m.2-41.6h0m.3 20.4h0m.1-30.6h0m0 6h0m.1-5.2h0m.1 1.9h0m.2 44.7h0m.1-2h0m0-32.3h0m.1-4.2h0m0 24h0m.2 2.5h0m.1-13.1h0m0-16.1h0m.1 19.9h0m0 13.4h0m.2-23.5h0m.1-1.2h0m.2 3.3h0m.1 5.1h0m.1-12.2h0m.2 8.1h0m.1-5.6h0m0 15.6h0m.1 14.8h0m.2-28.2h0m.2 18.4h0m.1-26.9h0m.2 23.5h0m.2-3.4h0m.1 16.9h0m0-6.3h0m.1 12.1h0m.2-3.5h0m.1-5.3h0m.1-16.4h0m0-5.3h0m.2 15.1h0m.2 8.3h0m.1-21.7h0m.1 35.5h0m.1-25.1h0m.1-2.3h0m.3 24.8h0m.1-43.7h0m.2 43.5h0m0-16.5h0m.1-13.9h0m.3 1.9h0m0-7.2h0m.1-5.6h0m0 4.4h0m.2-4.1h0m.1 48.4h0m0-19.5h0m.2-2.6h0m.1-12h0m.1 29.7h0m0 2.1h0m.2-7.1h0m0-7h0m.2-29.6h0m.1 19.7h0m0 20.1h0m.1-8.7h0m.1-37h0m.1 21.8h0m.1 1.3h0m.1 12h0m.2-4.8h0m0-21.3h0m.1-10.9h0m.1 20.5h0m.1-6.2h0m.1 16.5h0m.1-25.1h0m.2 8.4h0m.1 3.4h0m0 19.8h0m.3-12.6h0m.2 19.5h0m0-43.3h0m.3 31.3h0m0 5.6h0m.1 14.7h0m.1-30h0m.1 8.4h0m0-10.5h0m.1-13.1h0m0 17.2h0m.1 16.3h0m0 11.8h0m.1-36h0m.1 11.5h0m.1-17.8h0m.1-15.4h0m.1 7.7h0m.1-11.9h0m.1-.9h0m.1 21.6h0m.2-13.8h0m0 9.5h0m.1-2h0m0-5.9h0m.1-5.6h0m.2-5.3h0m.1 50.6h0m.1-47.5h0m.3-4.3h0m0 3.2h0m.1 24.8h0m.1 11h0m.1-5.8h0m.1-19.8h0m0 32.5h0m.1-20.3h0m.1-2.2h0m.1-5.9h0m.1-1.2h0m.2 19.2h0m.1 5.5h0m0-31.4h0m.1 2.5h0m0 18.2h0m.1 27h0m.1-36.8h0m0 17.5h0m.1 5.5h0m.1 11.1h0m0-8.1h0m.2 13.4h0m0 .9h0m.2-24.8h0m0-5.1h0m.3 9.8h0m.1-27.7h0m0 1.6h0m.1 34.4h0m.1 7.5h0m0-47.1h0m.1 24h0m.2-5.9h0m.1-3.2h0m.1 22.1h0m.1-28.9h0m.3 3.6h0m.2 5.2h0m.1-3.4h0m.1 27.5h0m.2-4.6h0m.2-8.3h0m.1 3.3h0m.1-23.2h0m.1 34.9h0m0-22.9h0m.1 5.4h0m.2 7.6h0m.3-33.4h0m.2 21.2h0m0 23.7h0m.1-25.7h0m.1 3.4h0m.2 17h0m0-34.8h0m.3 6.3h0m0 31.7h0m.1 9.4h0m.1 2.3h0m.2-26.7h0m.1 13.8h0m0-27.2h0m.1 24.5h0m.1-3.3h0m.1-6.1h0m.1 3.8h0m.4-9.7h0m0-22.5h0m.1 7.6h0m.1 6.9h0m.1-8.9h0m0 24.8h0m.1-13.9h0m.2 8.2h0m.1-22.5h0m.3 18.7h0m0-10.2h0m.1-16.3h0m.3-2.1h0m.1 25.5h0m.1-20.5h0m.1 15.9h0m.1-12.8h0m.1-5.2h0m.1 20.6h0m.1-11.7h0m0 20.9h0m.1 11.7h0m0 .3h0m.1-38.4h0m.1 41.7h0m.1 2.2h0m0-8.9h0m.1-6.1h0m.1-22h0m.1 48.5h0m.1-47.5h0m0 14.6h0m.4 10.1h0m0-1.3h0m.1 31.9h0m.1-20.7h0m0-18.8h0m.3 32.9h0m.1-36.3h0m.1 3.3h0m.2-21.3h0m.1 42.5h0m.1-26.7h0m.1-3.1h0m0 23h0m.1-23.8h0m.1-12.1h0m.2 5.7h0m.1 9.1h0m0 23.9h0m.1-44.8h0m.1 38.1h0m0-21.2h0m.1 13.4h0m0-16.9h0m.1 20h0m.5-41h0m.1-8.6h0m0 16.8h0m.1-1.9h0m.1-9.8h0m.1 3.8h0m.1 16.6h0m.1-14.7h0m0 7.6h0m.1-.5h0m.1 8.2h0m.1 1.9h0m.1-8.4h0m.1 14.9h0m.1 5.8h0m.1-16h0m0-2.2h0m.1 7.6h0m.1 14h0m0 1.6h0m.1-3.6h0m.1-2.3h0m.2-8.7h0m.2 6.8h0m0 12.4h0m.1-18.6h0m0 21.2h0m.1 4.9h0m.1 3.5h0m0 4.4h0m.1 5.4h0m.1-6.4h0m.2 1.9h0m.1-8h0m.1 14.4h0m0-24.6h0m.1 32.9h0m.2-13.5h0m0 10.9h0m.1-23.8h0m.3 19.6h0m0 1.6h0m.1-24.9h0m.1-11.6h0m.1-3.6h0m.1 8.4h0m.1-11.2h0m.2 8.4h0m.1 3.4h0m.1 11.7h0m.2-25.2h0m0-16.1h0m.1 46.2h0m.1-2.6h0m0-37.6h0m.2 14.9h0m0-2.8h0m.1-9.8h0m.1 3.4h0m.1 14.4h0m.1-16.1h0m.1-15.6h0m0 38.1h0m.3 3.6h0m0 12.8h0m.1-44h0m0 33.8h0m.2-7.3h0m.2 11h0m0-20.4h0m.3 .8h0m.2 44.7h0m.1-32.1h0m.1-20.8h0m.1 32.9h0m.1 2.9h0m.3-9.6h0m.1-13.7h0m.1 28.3h0m0-47.1h0m.1 36.9h0m0-11.9h0m.1-16.1h0m.1 11.3h0m.1 23.3h0m.1-38.5h0m0 6.2h0m.1-14.8h0m.1-2.4h0m.1 35.6h0m.1-31.4h0m.2 4.3h0m0 12h0m.1 18.7h0m0-16.3h0m.1 14.3h0m.2-19.7h0m.1-4h0m0 14.9h0m.2 30.7h0m.1-56.7h0m.1 43.3h0m.2-11.5h0m.1-7.5h0m.2-5.9h0m0 32.4h0m.2-20h0m.2-17.3h0m0 29.3h0m.1 1.1h0m.1-22.4h0m.1 6.9h0m.1-16.9h0m0 25.2h0m.2-3.6h0m.1-26.2h0m0 .8h0m.1 18.5h0m0-25h0m.2 38.3h0m.2-36.7h0m.1-4.7h0m.2 18.6h0m0-5.8h0m.1-3.5h0m.1 38.7h0m.1-27.7h0m.2 8.1h0m.1 10.1h0m.1 2.5h0m.1-16.3h0m0 18h0m.1-13.5h0m.1-21.8h0m0 45.7h0m.1-16.7h0m.1 10.3h0m0-13.9h0m.2-9.9h0m.1-6.3h0m.3-2.7h0m.1-1.5h0m.1 31.3h0m.1-24.3h0m.1-10.6h0m.1 16.8h0m.3-7.8h0m0 47.8h0m.1-53.3h0m.1 21.1h0m.1-2.1h0m.1 7.6h0m.1-6.1h0m.1 12.7h0m.2-26.4h0m.2 8.7h0m.1 12.9h0m.1-51.7h0m0 15h0m.1 .8h0m0 31.9h0m.1-13.7h0m.1-23h0m0-6.3h0m.1 2.9h0m.1 9.9h0m.2 8.5h0m0 10.6h0m.2 4.2h0m.2 13.3h0m0-34.3h0m.2 39.8h0m0-37.9h0m.2 27.1h0m.1-17h0m.1-22.6h0m0 17.1h0m.2-1.4h0m0 28.1h0m.3-23.9h0m0 26.3h0m.1-13.8h0m0-36.6h0m.2 9.3h0m.1 30.1h0m.1-26.9h0m.1 39h0m0-8.1h0m.2-4.9h0m0 7.4h0m.2-15.7h0m0-16.9h0m.2-20.5h0m.1 16.4h0m.1-9.6h0m.2 24.8h0m0-22h0m.1 34.6h0m.2 6.6h0m.1-26.4h0m.1 4.1h0m0-.9h0m.1-11.9h0m.1 24.2h0m.1-5.7h0m.1 7.5h0m.1-30.8h0m.1-5.6h0m.1 13.9h0m.2 18.3h0m0 4.4h0m.1 4.7h0m.1 13.2h0m0-44.9h0m.1 42h0m.2-7.1h0m.1-34.3h0m0 13.5h0m.2-5.8h0m.1 36.3h0m.1-15.3h0m.1 1h0m0-18.1h0m.2-18.2h0m0 42.8h0m.1-38.2h0m.1 49.4h0m.1-44.8h0m.1 13.7h0m.1 16h0m.1-12.9h0m.3-13.7h0m0 17.1h0m.1-12.5h0m0-6.6h0m.3 1.2h0m.1 20.3h0m0-22.8h0m.2 37.4h0m0-34h0m.1 33h0m.1-5.5h0m.1-19.5h0m.1 35.9h0m.1-21.8h0m.2-16.9h0m0 31.6h0m.2-25.2h0m.2 27.7h0m.1-12.8h0m0-3.2h0m.2 28.1h0m.1-22.5h0m.1-13.2h0m0 14.9h0m.1-39.1h0m.2 21.9h0m.3 20.4h0m.1 7.6h0m0-24.3h0m.1 10.2h0m.3 12.5h0m0 13.8h0m.1-51.9h0m.1 43.1h0m.1-39.3h0m.1 4.5h0m0 .3h0m.1 9.4h0m0 3.2h0m.1-15.8h0m0 27.9h0m.2-10.5h0m.1 5.9h0m0-31.3h0m.2-1.9h0m.1 41.1h0m.1-34.4h0m.2 12.2h0m0-24.2h0m.1 7.1h0m.2 37.5h0m.2-26.6h0m.1 15.9h0m.1 8.9h0m.1-5.5h0m.1-16h0m.1 20.2h0m.1 8.7h0m.1-30.3h0m.1 12.2h0m0 17.8h0m.1-19.8h0m0-4.3h0m.2 14.1h0m.2-26.7h0m0-.4h0m.2 23.2h0m.1-31.5h0m.1 20.3h0m0-30.2h0m.2 56.5h0m0-23.8h0m.3 7.5h0m0-34.4h0m.1 38h0m.1-45h0m0 26.8h0m.1-16.8h0m.1 5h0m.1-1.9h0m.1-15.8h0m.1-3.9h0m.1 44.3h0m0-25.4h0m.1 11.4h0m0-8h0m.1-13.2h0m0 4.2h0m.1 42.7h0m.1-28.2h0m.1 8.1h0m.1 26.2h0m0-19.5h0m.2 26.1h0m.1-22.4h0m.1 4.3h0m.1 3.1h0m.1-13.5h0m0 27.6h0m.1-30.9h0m.3-4.5h0m0 18.7h0m.1 8.3h0m.2-11.2h0m.3-22.7h0m.2 1.1h0m.1 12.1h0m.1-5h0m.1-3.5h0m.2 26.7h0m0-32.4h0m.3 39.3h0m.2-15.3h0m.1-5.5h0m0 28.2h0m.1-26.7h0m.4 7.5h0m.1 3.2h0m0-8.7h0m.1 15.2h0m.1-51.4h0m.1 3.3h0m.1 14.8h0m0 4.2h0m.1 8.8h0m.1 17.9h0m.1-21.7h0m.1-14.7h0m.2 11.7h0m.1 21.8h0m.1-35h0m0-3h0m.3 35.2h0m.2-21.9h0m.1 27.9h0m.1-40.8h0m0 30.5h0m.1-33.5h0m.1 9.9h0m.2 14.5h0m.3 14.7h0m.1-10.7h0m.1-12.9h0m.1-8h0m.1 42.7h0m0-39.8h0m.1 17.4h0m.2 14h0m0-11.3h0m.1-10.4h0m.1 3h0m.2 21h0m.1-30.6h0m.1 23.8h0m.1-4h0m.1-28.1h0m0 42.1h0m.1-45.4h0m.2 16.1h0m.1 7h0m.1-32.4h0m0 2.7h0m.1 19.2h0m.2-21.1h0m.1-2h0m.1-6.1h0m.1 14.7h0m0 3.8h0m.1-2.7h0m0 5.6h0m.3 21.7h0m.1-3.9h0m0-11.6h0m.2-4h0m.1 22h0m.1-20.6h0m0-14h0m.2 44.4h0m.1-15.3h0m.1-3.9h0m.2-5.1h0m.2 25.5h0m0-21.9h0m.3 13.7h0m.1-25.4h0m.1 37.5h0m0 3.6h0m.1-29.6h0m.1 15.5h0m.1 2.4h0m.1-6.9h0m.1 12.1h0m.1-19.7h0m.3-8.2h0m.1-1.6h0m.1-4.6h0m.2 19.2h0m0 3.7h0m.1-9.8h0m.3-11.4h0m.1 30.2h0m0-23.2h0m.2 8.4h0m.2 9.3h0m.1 17.4h0m.1-10h0m.1 20.4h0m0-48.3h0m.1 24.8h0m0 8h0m.1-25.2h0m.1 22.1h0m.1 2.4h0m.1-21.7h0m.1 3.6h0m0-9.9h0m.2 12h0m.4 15h0m.1 6.7h0m.2 .4h0m0-15.8h0m.2 .5h0m.1-22h0m.2-3.7h0m0 21.3h0m.1-6.1h0m.1-26h0m.2 29h0m.1-6.6h0m0 19.7h0m.2-36.8h0m.1 37.2h0m.1-23.1h0m.1 16.8h0m.2-31.8h0m.1 39.3h0m.1-10.3h0m.1-21.9h0m.1 37.6h0m.1-25.9h0m0-6.6h0m.1-20.7h0m.1 2.3h0m.1 8.9h0m.1 28.5h0m.1-34.8h0m.1-.8h0m.1 17.2h0m.3 12.6h0m0-16h0m.2-18.6h0m.2 7.4h0m.1-5.5h0m0 23.1h0m.2-8.8h0m0-15.3h0m.1 7.8h0m.1 5.7h0m.1 18.1h0m.2-4.5h0m.1 11.5h0m.2-3.8h0m.4-24.9h0m.1 49.5h0m0-16.4h0m.1-28.9h0m.1 25.3h0m.1 2h0m.1-23.1h0m.1 18.4h0m0-25.7h0m.1 32.5h0m.2-23.4h0m0 2.9h0m.2 23.2h0m.1-10.5h0m.1-10.8h0m.1 24.8h0m.4-32.9h0m.1-5.2h0m0-10.3h0m.1 27.1h0m.1 2.4h0m.1-23.9h0m.1-16.1h0m0 5.5h0m.1 28.2h0m0 8.3h0m.1-26.8h0m0-2.2h0m.1 16.3h0m.1-2.6h0m0-2.5h0m.1 14.8h0m.1-25.3h0m.2 4.2h0m.1 29.3h0m0-4.4h0m.2 7.5h0m.1-19h0m.2-14.2h0m.2 29.5h0m.2-11.3h0m.1 17.1h0m.1-1.7h0m0 9.5h0m.1 14.8h0m.1-14.2h0m.1-34.1h0m.2 48.3h0m.1-7.3h0m.1-14.3h0m.1-23.7h0m0-7.8h0m.2 15.2h0m.2 2.6h0m.1 4.7h0m0-16h0m.2 6.3h0m0 29.5h0m.1-39.7h0m0 16.1h0m.3 9.9h0m0 7.2h0m.1-2.2h0m.1-7.7h0m.2 9.4h0m0-5h0m.1-10.5h0m.1-6.1h0m.1-3.4h0m.1-2.4h0m.2-15.2h0m.2 48.6h0m.1-38.2h0m.1 36.9h0m.2 4.8h0m0-40.3h0m.1 24h0m.2 8.6h0m0-20.5h0m.1 7h0m0 26.3h0m.1-1.4h0m.1-41.5h0m.1 10.1h0m.1-4.1h0m0 31.8h0m.1-26.2h0m.2 13.1h0m0-21.2h0m.2 10.5h0m.3-24.6h0m.1-1.1h0m.3 38.9h0m.1-27.2h0m.2-2.3h0m0 24.3h0m.1 1.3h0m0-9h0m.1-19.2h0m.1-1.2h0m.1 24h0m0-11.3h0m.3 12h0m.1 12.6h0m0-3.4h0m.1 5.3h0m.1-47.6h0m.1 2.7h0m.1 33.8h0m.2 12.5h0m.3-33.3h0m0 9.3h0m.1-6.1h0m.1-3.2h0m.1-16.6h0m.3 26.9h0m.1 16.2h0m.1-32.9h0m.1 26.5h0m.1 5.6h0m0-33.7h0m.1 22h0m0-7.1h0m.1 22.4h0m.2 3h0m.1-20.5h0m0 27.2h0m.3-2.5h0m0-32.4h0m.2 25.7h0m.1-46.3h0m0 33h0m.1-27.3h0m0 30.4h0m.1 5.4h0m.1-14.9h0m.1-12.8h0m.2 23.3h0m.2-35h0m0 16.4h0m.1 6h0m.3-20.8h0m.1 3.5h0m.1-9.2h0m.2 18.7h0m.1-4.9h0m0 5.7h0m.1 12.5h0m0 7.9h0m.2 6.7h0m.3-23.5h0m.1 13.6h0m.1-12.3h0m.1 9.6h0m.1-23.5h0m.1 3.2h0m0 13.3h0m.1-18.5h0m.3-4.9h0m.1 26h0m.3 15.1h0m.1-27.5h0m0 18.2h0m.3-2.1h0m.1-19.5h0m.1 16.5h0m.1-24.4h0m.1 19.1h0m0 13.5h0m.1-16.8h0m0-3.2h0m.2 10.1h0m.1-32.5h0m0 6.4h0m.1 41.7h0m0-33.6h0m.2 29.9h0m0-34h0m.3-4.1h0m.1 25.1h0m.2-6.7h0m.1-19.9h0m.1 36.6h0m.1-1.8h0m.1-18.2h0m.2-1.7h0m0-16.8h0m.1 25.7h0m.1-16.4h0m.1 23.3h0m.1-20.4h0m.1-9.5h0m.1 11.2h0m.2 21.4h0m0-40.5h0m.4 28.9h0m0 17h0m.1-33.7h0m0-10.6h0m.1 3.7h0m.2 31h0m.2-30.5h0m.1 13.3h0m0 14.7h0m.1-22.3h0m0 24.7h0m.1-20.1h0m.2 9.9h0m.1-2.8h0m.1 7.1h0m0 .7h0m.3 12.9h0m.1-5.1h0m.1-16.9h0m0-8.8h0m.1 28.4h0m.1-23.6h0m.2-13.3h0m0 47.3h0m.1-9.6h0m0 5.1h0m.1-19.9h0m.3 9.8h0m.2 13.1h0m.5-12h0m0-12.7h0m.2 38.3h0m.1-29.9h0m.1-11.7h0m0-2.8h0m.1 29.2h0m.1 2h0m.2 18.8h0m.1-25h0m0-30.2h0m.2 2.2h0m.1 37.8h0m.1-34.9h0m.1 26.5h0m0-15h0m.2-6.8h0m.1 8.2h0m0 9h0m.2 12.3h0m.2 4.2h0m0-29.8h0m.1 7.9h0m.1 23.4h0m0-4.1h0m.1-45.4h0m.2 31.5h0m.3 9.3h0m0-11.1h0m.1 25.2h0m.3-51.9h0m.1 30.1h0m.1-9.1h0m.1-8.2h0m.1 5.2h0m.1 16.5h0m.1-31.2h0m.1 7.5h0m0 3.7h0m.1 29.5h0m.1-31.4h0m.1 21.3h0m.1-27.2h0m.1 16.7h0m0 7.9h0m.1-26.5h0m.1 20.3h0m.1-9.6h0m0 4.7h0m.2 4.5h0m0-24.6h0m.1 10.6h0m.1-13.9h0m.5-19h0m.1 3.4h0m0 2.4h0m.1-5.8h0m0 8.8h0m.1-6.4h0m.1 .7h0m.1 6.4h0m.2 6.3h0m0-1.9h0m.1 10.3h0m.1-6.3h0m0 7.3h0m.2 8.7h0m.1-18.4h0m.1 7h0m0 14.6h0m.1-17.5h0m.1 .8h0m0 18.8h0m.2-9.7h0m.1 12.1h0m.2 7.9h0m.1-6.6h0m.1-10.7h0m.1 33.8h0m.1-1.5h0m0-20.2h0m.1-16.7h0m.1 3.1h0m.2 10.3h0m.1 9.9h0m.1 8.5h0m.1 2.3h0m.2 17.2h0m0-11.9h0m.1 2.3h0m.1-21.5h0m.1 18.2h0m0-27.7h0m.1 10.9h0m.1-14.2h0m0 40.9h0m.2-22.2h0m.2-28.5h0m.3 13.8h0m0 5.7h0m.1-21.6h0m.1 5.3h0m.1 31h0m.2-12h0m.1-3h0m.1 8h0m0-34.9h0m.1 1.1h0m0 36.6h0m.1-13.9h0m.1-17.9h0m0 8.6h0m.3 33.6h0m.1-9.1h0m.1-40.4h0m.3 13.7h0m.1 6.4h0m.1 13.1h0m0-9.5h0m.3 10.2h0m0-7.8h0m.1 3.7h0m0-20.6h0m.1 2.6h0m.1 5.6h0m0 29h0m.1-38.7h0m.1 50.3h0m0-17.7h0m.2-1.9h0m.1 10.3h0m.1-4.3h0m.2-45.1h0m.1 13.8h0m0 11.9h0m.2-2.2h0m.2 6.5h0m.2-9.3h0m.1 16.1h0m.1-9.3h0m.2-10.6h0m0 14.6h0m.1-24.7h0m0-3.8h0m.1 1.7h0m.2 36.1h0m0-41.2h0m.4 34.9h0m.1-24.9h0m.1-12.9h0m0 26.6h0m.3-27.6h0m.1 15.7h0m.1 3.6h0m.1 14.2h0m0 2h0m.1 8h0m.1-14.8h0m0-5.6h0m.1 1.7h0m.1 23.8h0m.1-40.4h0m.1 31.9h0m0 5.4h0m.2-32.7h0m.3 14.8h0m.1 3.9h0m.5-11.1h0m.1 16.5h0m.1-19.5h0m.1-7.3h0m0 11.2h0m.2 31.6h0m.1-8.2h0m.2 10.1h0m0-29.7h0m.1 17.7h0m.2-28.4h0m0 21.5h0m.1 2.3h0m0-27.3h0m.2 29.6h0m0-12.8h0m.2 33.9h0m.1-27.9h0m.1-2h0m0 20.5h0m.1 6.2h0m.1-11.1h0m0-18.1h0m.1 13.7h0m.2 13.6h0m0-32.9h0m.2 44.2h0m.1-19h0m.1-28.8h0m.1 23.2h0m.1-26.3h0m.2 35.9h0m0-53.4h0m.1 33.1h0m.1 21.7h0m.1-38h0m.1 12.2h0m0-3.9h0m.2-1.6h0m.1 15.7h0m.1 1.1h0m0 16.1h0m.1-53.7h0m.2 55.3h0m0-20.8h0m.1-2.9h0m.2 11.1h0m0-2.1h0m.1 5.2h0m0-29.6h0m.2 7h0m.1-14.5h0m.1 35.8h0m.1-17h0m.3-18.8h0m0 19.9h0m.3-11h0m.1-3.3h0m.1 35.4h0m.2-11.4h0m.1-32.1h0m0 25.1h0m.1-11.6h0m.1 5.3h0m.1 9.7h0m.2-.8h0m.3-12.1h0m.2 5h0m.1-20.6h0m0-2.8h0m.1 38.2h0m.1-43.7h0m.3 15.7h0m0-4.8h0m.1 29.2h0m.2 9.8h0m.1 6.5h0m0-1.6h0m.1-35.9h0m.1 8.2h0m0 13.7h0m.1 3.2h0m0-23.3h0m.1 37.8h0m.1-4.4h0m.1-20.5h0m0 17.6h0m.1-19.3h0m.1 11.4h0m.1-4.8h0m.1-10.8h0m.1-21h0m.2 3.3h0m.2-12.4h0m.1 24.6h0m.1-24h0m.1 12h0m0 9.2h0m.1 18.4h0m.2-13.3h0m.2 19.6h0m0-14.1h0m.1 16.9h0m.1-32.9h0m.2 22.3h0m.4-13.1h0m.1 17.4h0m.1 14.4h0m0-23.3h0m.1-4.4h0m.1-6.3h0m0 30.8h0m.1-35.5h0m.1 32.2h0m0-11.3h0m.1-3.2h0m.4 15.7h0m.2-36.2h0m.1-9.9h0m.1 52.9h0m.1-44.8h0m.1 18h0m0-30.1h0m.1 46.1h0m.1-28.1h0m0-11h0m.1 28h0m.1-29.1h0m.2 19.6h0m0 16.1h0m.1-32.5h0m.3 10.7h0m.1 18.3h0m.1 1.4h0m.1-10.5h0m0 14.9h0m.1-32.2h0m0 3.1h0m.1 17.2h0m.1-9.3h0m.2 28.9h0m.2-2.6h0m.2 3.7h0m.4 12.6h0m.1-39h0m.1 32.1h0m0-40.9h0m.1 5h0m.1 45.7h0m.1-33.3h0m0-5.3h0m.2 17.1h0m.1 15.8h0m.2-22.3h0m0 9.5h0m.1-12.6h0m.2 21.1h0m0-17.3h0m.1 3h0m.1-30h0m0 3.2h0m.2 3.1h0m.2 31.7h0m0 7.3h0m.3-50.3h0m0 22.7h0m.2 2.9h0m.1-7.5h0m.1 9.5h0m0 9.2h0m.1-5.4h0m.2-9.8h0m0-6.5h0m.1-9.3h0m.1 25.2h0m.1-30h0m0 3.9h0m.1 36.6h0m0-45.4h0m.1 12.3h0m.2 3.6h0m.2 27.2h0m0-45.3h0m.3 29.2h0m0-33.6h0m.1-6.9h0m.3 27.5h0m.1-11.3h0m.2 21.5h0m0-15.3h0m.1 32.9h0m.1-21.7h0m.2 11.6h0m.2-32.5h0m.1-1.9h0m.1 32.9h0m0 3.6h0m.2 3.4h0m.2-9.8h0m.1-15.6h0m.1 10.1h0m.1 30h0m0-45.8h0m.1 10.7h0m0 25.2h0m.1-3.5h0m.1-20h0m.1 26.8h0m.1-4.2h0m.3-47.6h0m.1 33.4h0m.1-12.7h0m.3 15.6h0m0-8h0m.1-5.8h0m0 19.8h0m.1-37.3h0m.1 33.1h0m.1-18.6h0m0-3.8h0m.1 17.9h0m.1 11.7h0m.2-1h0m0-13.9h0m.1 24.9h0m.5-15.9h0m.1-25.2h0m.2 11.1h0m.2-29.5h0m.1 33.2h0m.3 22.6h0m.1-48h0m0 17.7h0m.1-21.9h0m.1 22.6h0m0 31.3h0m.1-22h0m.1-15.1h0m0 1.4h0m.1-7.8h0m.2 23.8h0m0 1.6h0m.1 5.2h0m.2-35h0m.1 31h0m.1 6h0m.2 3.4h0m.1 .9h0m.1-28.6h0m0 8.6h0m.1-13.6h0m.1 24.4h0m.1 17.9h0m.1 2.1h0m0-4.2h0m.2-38.5h0m0 14.3h0m.1-17.8h0m.1 38.1h0m.2-19.3h0m0-8.6h0m.1 2.5h0m.2-17.6h0m.2 26.3h0m.1 6.8h0m.1-38.3h0m.1 24.4h0m.1 9.7h0m0-14.1h0m.1 22.8h0m.2-3.7h0m.1-21.8h0m0-9.3h0m.1 6.1h0m.2 34.4h0m.1-45h0m.1 31.2h0m.1-25.2h0m.2 36.2h0m.2-4.2h0m.1-14.3h0m.1-15.7h0m.1 27.4h0m.4-16.5h0m.1-17.4h0m0 15.8h0m.1 12.9h0m.1 2.8h0m.1 13.4h0m0-3.5h0m.1-15.6h0m0-4.7h0m.1 17.6h0m0-25.6h0m.5-10.4h0m.1 14h0m.1 23.5h0m0 20.4h0m.1-16.8h0m0-33.5h0m.2 14.3h0m.1-31.4h0m0 .4h0m.1 6.7h0m.1 22.5h0m.1 3.5h0m0-5.3h0m.2 11.2h0m.1 14.4h0m.1-35h0m.1 19.6h0m0-11.9h0m.1-16.1h0m0 60.3h0m.2-27.1h0m.1 19.9h0m.2-31.8h0m.1 39h0m.1-35.4h0m.1 15.3h0m.1-8.8h0m0 18.5h0m.1-13.2h0m.1-25h0m0 11.8h0m.2 19.7h0m.1-32.6h0m.1 41.6h0m0-35.9h0m.2-10.1h0m0 27.3h0m.1-25.6h0m0 31.9h0m.3-3.2h0m.1 9.3h0m.1-24.6h0m.1 22h0m.1-7.4h0m0-8h0m.2-9.1h0m.1-21h0m.1 43h0m0-38.5h0m.1 11.1h0m.1 15.4h0m.1-4.2h0m.1-23.4h0m.2 8h0m.3-19.6h0m.2 41.1h0m.2-26.7h0m.2 22.7h0m.1-13.1h0m.1 2.4h0m0-14.2h0m.1 15.9h0m.1-6.2h0m.1-11.9h0m.1 10.1h0m.1 13.1h0m.1-2.2h0m0 14.3h0m.1 20.2h0m0-2.9h0m.2 6.6h0m.1-9.3h0m0-12.4h0m.1 10.4h0m.1-17.5h0m0 10.6h0m.2-.5h0m.1-15.8h0m0 1.6h0m.1 7.4h0m0 11.1h0m.2-9h0m.1 19.6h0m0-8h0m.1-3.2h0m.2-21.9h0m.1 32.3h0m0-8.6h0m.1 6.7h0m.2-33.4h0m.2-3.3h0m.2-1.4h0m0-18.2h0m.1 32.3h0m.1 1.5h0m.2-25.9h0m.1-5h0m.2 6.9h0m0 3.7h0m.1 28.5h0m.1-30.2h0m.2 12.7h0m0 11.4h0m.1 9.4h0m.1-16.3h0m.1-6.9h0m.1 17h0m0-12.4h0m.1 5h0m0 16.4h0m.1-.8h0m0 5.8h0m.1-16.2h0m.5-46.8h0m.1-1.3h0m.1 3.3h0m.2 5h0m0-4.1h0m.1 1.8h0m0-4.4h0m.2 5.3h0m.1 5.3h0m0-3.8h0m.1-8.4h0m0 13.6h0m.1 12.9h0m.1-9.3h0m0 5.8h0m.1 6.6h0m.1-19.7h0m0 3.3h0m.1 8.6h0m.1-5.1h0m0 17.8h0m.2-14.7h0m.2 13.2h0m.1 8.8h0m.3-13.4h0m.1-10.4h0m0 2.2h0m.3 32.4h0m.1-29.8h0m0 25.3h0m.1-23.8h0m.1-8.3h0m.1 22.2h0m0 8.9h0m.1 6.8h0m0 11.7h0m.1-34.6h0m0 14.7h0m.2-9.6h0m.1 5h0m.2 11.7h0m.1-6h0m.1-10.1h0m0-36.7h0m.1 43h0m.1 11.7h0m0-21.8h0m.3-5.8h0m.1-7.8h0m.1 18.7h0m.2 21.8h0m.1-30.5h0m.1 11.1h0m.1 9.4h0m.2-35.1h0m0 39.6h0m.1-45h0m.1 41.6h0m.2-24.1h0m.1 30.3h0m.1-8h0m.1-26.3h0m.3 18.6h0m.1-16.2h0m.1-4.6h0m0 23.7h0m.1-28.7h0m.2 2.9h0m.2 11.8h0m.1-1.2h0m.1 17.6h0m0-13.7h0m.2 4h0m0 38.4h0m.1-41h0m.1 23.3h0m0-19.6h0m.1 26.5h0m.1-2.3h0m.2-39.7h0m.1 23.2h0m0 10.7h0m.1-26.9h0m.1 27.2h0m.1-6.2h0m.1-32h0m0-9.9h0m.1 44.4h0m.1-4.3h0m.1-7.8h0m.1-14.9h0m.2-12.8h0m.1 29.4h0m0-41.7h0m.1 6.3h0m0 29.7h0m.1-8.9h0m0-23h0m.2-3.8h0m0 21.9h0m.1-14h0m0 7.6h0m.4 15.5h0m.1 23.3h0m.1-18.8h0m.1 3.7h0m.1 5.9h0m.2-24.9h0m.3 13.3h0m.2-7.9h0m.1 18.5h0m.1-16.5h0m.1-5.3h0m.1 25.4h0m0-9.2h0m.1 3.3h0m0 7.8h0m.2 1.1h0m.1 8.2h0m0-40.4h0m.1 37.8h0m0 5.4h0m.2 5.3h0m.1-26.5h0m0 25.5h0m.1-1.4h0m0-13h0m.2 20.8h0m0-27.8h0m.1 24.8h0m0 .6h0m.1-23.8h0m.1 28h0m.1-11.1h0m0-5h0m.1 7.1h0m0-29h0m.1-10.7h0m.2 4.2h0m.2 1.8h0m.1 2.1h0m.1-20.2h0m0 7.1h0m.1 2h0m0 27.3h0m.1-19.4h0m.2 5.7h0m.1-9.9h0m0-12.1h0m.2 4.1h0m0-22.8h0m.1 24.8h0m.3 8.3h0m.1 21.7h0m0-9h0m.2-17.9h0m.1 23.3h0m0-6.8h0m.2 5.1h0m.1-8.7h0m.1 20.4h0m0-14.2h0m.1-3.2h0m.3 17h0m0-24.2h0m.4 16.6h0m.3-13.9h0m0-15.5h0m.1-1.8h0m0-2.2h0m.1-6.1h0m.1 13h0m.1 21.9h0m.1-18.9h0m.1 28h0m.2 8.1h0m.1-2h0m.1-36.1h0m.1 15.2h0m.1 13.5h0m0-32.5h0m.1 26h0m0-3.5h0m.1-12h0m.1-1.5h0m.1-4.1h0m.1 30.2h0m.1-6.2h0m.2-43.2h0m0 9.2h0m.1 26.7h0m.2-30.1h0m.1 24.6h0m.1 7.8h0m0-26.9h0m.1 20.9h0m.2-4.5h0m.1 36.6h0m0-51h0m.2 12.6h0m.2-3.8h0m.1-1.4h0m.2 13.3h0m0 11.3h0m.1-29.2h0m.2 26.1h0m.2-12.9h0m.1 8.1h0m.1 20.3h0m0-9.6h0m.1 18.4h0m0-26.8h0m.2-14.1h0m.1 8h0m.1 19.1h0m0-9.9h0m.2 21.1h0m.1-32.6h0m0-9h0m.1 42.1h0m.1-45.6h0m0 33.5h0m.1-38.3h0m.2 55.2h0m0-59.4h0m.2 17.8h0m.1-15.3h0m.2 3.8h0m.1 30.4h0m0-36.4h0m.1 11.7h0m0 .8h0m.2 17.9h0m.1 2.4h0m.2-11.4h0m0 13.1h0m.1-36.6h0m.1-2.7h0m0 30.5h0m.1 3.6h0m.3-17.3h0m.1 26.5h0m.1-44.8h0m0-4.1h0m.2 26.1h0m.2-27.1h0m.2 6.3h0m0-6h0m.1 14.8h0m0 5.1h0m.1-12.5h0m.1 23.4h0m.1 4.3h0m.1-33.7h0m0 42.7h0m.1-26.1h0m.1 3.7h0m.1-11.8h0m0 19.5h0m.2 21h0m.1-9.4h0m.1-2.8h0m.1-4.7h0m.1-21h0m.1 39.1h0m0-40.5h0m.2 34.7h0m.2-20.2h0m.1 12.9h0m0 8.8h0m.1 4.2h0m.1-34.1h0m.1 13h0m.1-1.3h0m.1-14.2h0m.1 28.1h0m.1-3h0m.1 8.3h0m0-21.8h0m.1-5.9h0m.2 25.4h0m.2-11.5h0m.2-9.2h0m.1 21.9h0m.1-38.6h0m0 3.2h0m.2 7.9h0m.1-10.7h0m.3 20.7h0m.2-8.7h0m.1 14.7h0m.1-2.9h0m0-32.4h0m.1 48.7h0m.2-25h0m.2 19.6h0m0 8.5h0m.1-38.9h0m.1 14h0m0-9.1h0m.1-7.2h0m0 5.2h0m.1 24.2h0m0 1.2h0m.4-22h0m0 18.8h0m.1 5.9h0m.2 4.7h0m.1 9.7h0m.1-25.3h0m.2 5.3h0m0 12.2h0m.3-28.9h0m.1 24.4h0m0-21.2h0m.2 9.9h0m.1-23h0m0 18.9h0m.3-2.7h0m.1-26h0m0 13.2h0m.1-14.6h0m0 8.3h0m.2 28.5h0m.1 3.9h0m.1-22.7h0m.3 3.2h0m0 27.7h0m.1-32.9h0m0-6.5h0m.2 33.5h0m.1-11.2h0m.1 5.9h0m.2-25h0m.1 21.5h0m.1-11.9h0m.1 2.3h0m.1 2.3h0m.1 30.1h0m0-4.4h0m.1-22.2h0m.2 15.6h0m0 5.1h0m.1 18.2h0m.2-10.2h0m0-19.5h0m.1-22.8h0m0 21.1h0m.1 11.9h0m0-30.8h0m.1 27.7h0m.1 5.6h0m0-8.5h0m.2 25.5h0m.2-40.5h0m0 24.5h0m.1-44.3h0m.1 25.5h0m.1-14.5h0m.2 21.9h0m.1-18.1h0m.1 11.8h0m.1-21.6h0m.1-2.5h0m.3-5.3h0m0 26.2h0m.1 6.6h0m.1-24.9h0m.1 10.6h0m.1 2.1h0m0 17h0m.2-13.3h0m.1-21.7h0m.1 13.7h0m.1 41.2h0m.1-45.1h0m.2 16.4h0m.1 14.6h0m0-27h0m.1 18.5h0m.1 5.2h0m.1 7.1h0m.1-20.2h0m.2 18.2h0m.2-7.3h0m.2-1.9h0m.1-4.1h0m0-27.4h0m.1 4.4h0m.2 5.9h0m.1-9.1h0m0 5.6h0m.2 10.1h0m.2 26.8h0m.1-24h0m.2-5.1h0m.1 11.7h0m.1 16.2h0m.1-4.9h0m.2-35.8h0m.1 44.4h0m.1 9.9h0m.1-34.5h0m0 13.2h0m.1-30.3h0m0 19.4h0m.2 5.3h0m0-21.9h0m.1-8.8h0m.1 13.4h0m0 14.7h0m.1-17.5h0m.1 8.1h0m.1-2.5h0m.5 7.8h0m.2-6.5h0m0 14h0m.1-2.1h0m.1-37.5h0m.1 3.6h0m.1 37.5h0m.1-19.4h0m0-12.6h0m.2 19.5h0m.1 2.4h0m0 16.3h0m.2-57.9h0m.3 23h0m0 5h0m.2-2h0m.2 4.2h0m.2 4h0m.1 12.1h0m.2-26.3h0m.1 23.5h0m.1-31h0m0 7.7h0m.1 2.1h0m.3 30.7h0m.1-15.7h0m.1-9.9h0m.1 6.1h0m.2-10.4h0m.3 25.8h0m.1-9.3h0m.1 17.5h0m.2-6.6h0m.1 7.2h0m.1-15.1h0m.1 11.8h0m.1-15.3h0m.1-3h0m0-6.5h0m.2-1.8h0m.1-3.4h0m.1 7.2h0m.1 1.9h0m.1-29.7h0m.1 42.7h0m0-2.7h0m.1-33.5h0m.1 13.7h0m.3-1.5h0m.1 29.1h0m0-31.8h0m.2 19.6h0m.3-10.4h0m.4 21.4h0m.1-11.8h0m0 9.1h0m.2 8.1h0m0-4.2h0m.1 10.2h0m0-20h0m.2 26.7h0m.1-41.5h0m0 30.5h0m.1-21.9h0m0 37.7h0m.1-41.8h0m.2-17.1h0m.1 46.3h0m.1-42.8h0m.1 4.4h0m0 20.9h0m.2-10.6h0m.2 31.5h0m.1-27.9h0m0-6.8h0m.1 2h0m0 24.3h0m.4-9.3h0m.1-1.1h0m.1 23.1h0m.1-29.5h0m.2 13.6h0m.1-3.3h0m0 29.6h0m.1-19.7h0m.1 2.1h0m.1 5.4h0m.1-9.4h0m0-23.2h0m.1 6.8h0m0 11.3h0m.1-2.7h0m.2 21.9h0m.2 6.6h0m.2-13.4h0m0-27h0m.2 10.9h0m.1-5.1h0m.2-28.2h0m0 39.7h0m.1-27h0m.1-2h0m0 3.9h0m.1 10.6h0m.1 7h0m.2-2.9h0m.2 25h0m.2-41.7h0m.1 3.3h0m.1 3.7h0m.3 27.6h0m0-44.8h0m.1 42.2h0m.1-3.1h0m.2-31.1h0m.1 3.9h0m0 36.7h0m.1-47.8h0m.2 22.8h0m0-8.5h0m.1 19.3h0m.1-20.2h0m.1 19.4h0m0-17.2h0m.1 14.6h0m0-11.6h0m.1 28h0m0-9.9h0m.1-8.1h0m.1-8.3h0m.2-13h0m.1 27.4h0m0-34.8h0m.1-3.5h0m0 42.3h0m.1-13.3h0m0 1h0m.2 6.3h0m0 6.8h0m.5-53.7h0m.1 2.8h0m0-7h0m.2 0h0m0 3.1h0m.1-1.5h0m0 8.8h0m.1 13.2h0m0-18.5h0m.3 7.3h0m0-5.6h0m.1 21.2h0m.2 6.7h0m0-19.3h0m.1 4.1h0m.1 10.2h0m0-12.7h0m.1 10.4h0m.1-2.7h0m0 6.8h0m.1-8h0m0 13.9h0m.3 16.5h0m.1-12.5h0m0-8.8h0m.1 7.5h0m.2 6.6h0m.1 12.5h0m0-4.1h0m.1-11.8h0m.1 16.8h0m.1 17.4h0m0-20.5h0m.1-7.1h0m0-2.2h0m.2 24.3h0m.1-26.7h0m.1-10.5h0m.1-12h0m.1 13.4h0m.4 17.4h0m.1-35.2h0m.1 21h0m.2 3.4h0m.1 11.5h0m0-5.5h0m.1-17h0m.1-6.1h0m.2-3.7h0m.1 6.2h0m.1 1.8h0m.1 31.7h0m.1 4.8h0m.1-15.1h0m.2 11.1h0m0-3.7h0m.1-49.4h0m.1 48.3h0m.1-23.2h0m0 10.3h0m.1-36.1h0m.1 35.6h0m.1 3.4h0m.1-7.5h0m.1-25.8h0m.1 23.1h0m.1 4.6h0m.1 12.8h0m.1-6.7h0m.2-26.2h0m.2 16.1h0m.2-9.4h0m.2-8.1h0m.1 25.9h0m.2-28.7h0m0 23.1h0m.1-9h0m.1-11.3h0m0-5.4h0m.2 6.9h0m0-4.5h0m.2 16.8h0m.1 15.9h0m0-34h0m.1 5.1h0m0 4.2h0m.1 24.3h0m0-34.8h0m.2 14.1h0m.1 24.3h0m.1 3.4h0m0-9.8h0m.3-2.8h0m.1-2.1h0m.2-7h0m.1 30.9h0m0-4.4h0m.1-.9h0m.1-21.9h0m.1 1h0m.1 17.6h0m0-24.6h0m.1 20.2h0m.1-17.8h0m.1 26.7h0m.1 3.3h0m0 3h0m.1 .1h0m.1-1.5h0m.1-38.4h0m.1 18.3h0m.1-16.1h0m.2 20.5h0m.2 27.7h0m0-18.6h0m.3-41.5h0m0 12.5h0m.2-5.1h0m.1-3.3h0m.1 32.5h0m0-12.7h0m.1-6.2h0m.1 21h0m0-9.2h0m.4-28.8h0m0 15.5h0m.4 7.1h0m0-13.3h0m.1 10.8h0m.2 8h0m.1-2.1h0m.1 8h0m0-16.6h0m.1-9.8h0m0-8.4h0m.1 42.3h0m.2-6.5h0m0 3h0m.2-7.1h0m.1-17.2h0m.1 9.2h0m.1-6.4h0m.1 34.6h0m.1-49.1h0m.1 56.6h0m.1 .8h0m.1-15.7h0m0 1.4h0m.1 3.7h0m0-2.9h0m.2 4.3h0m.1-3.7h0m.1 8h0m.1-34.3h0m.1-6.7h0m.1 12.9h0m.1 31.9h0m0-45.2h0m.3 22h0m0 20.3h0m.1-6.2h0m.1-9.5h0m0 3.3h0m.1-24.3h0m.1 13.9h0m0-3.5h0m.1-12.2h0m.2 29h0m.1-21h0m.1 11.6h0m0-28.8h0m.3 21.8h0m.1-6.7h0m.1 4.7h0m.1-46.9h0m.1 52.9h0m0-4.5h0m.1-24.6h0m.1 6h0m.1 10.8h0m0 14.1h0m.1-17.7h0m0-3.7h0m.1 29.8h0m.2-40.3h0m.1 2.8h0m.2-15.7h0m.1 24.6h0m.1-16.3h0m.1 3.2h0m.1 6.1h0m.1 26h0m0-20.2h0m.1 10.3h0m.1-12.9h0m.3-5.1h0m0 24.8h0m.1-30.7h0m.1 10.1h0m.1-7.2h0m0 18.2h0m.1-19.7h0m0 18.3h0m.1 6.8h0m.2-2.2h0m0 16.2h0m.2-8h0m.2-2.6h0m.2 29.2h0m.1-8.7h0m.1-1.9h0m.1-4.9h0m.1-7.3h0m.1-19h0m.1-8.5h0m.1 30.4h0m.1-25.3h0m.2 28.5h0m.1-35.5h0m.2 20.4h0m.1-4.6h0m.1-2.5h0m0-8.2h0m.1 29.8h0m.1-4.5h0m.1-12.1h0m.2 6.7h0m.2-23.2h0m0 32.1h0m.1-5.8h0m.2-4.9h0m.2 19.9h0m.2-34.7h0m0 2.7h0m.2 18.6h0m0-16.5h0m.1 29.9h0m.1-15.9h0m0 23.3h0m.1-34.4h0m0 4.4h0m.2 17.7h0m0-35.2h0m.1 23h0m.1-29.4h0m.3 9.5h0m.1-6.3h0m0 21.7h0m.1-18.8h0m.2-4.4h0m.2 10.9h0m.1-19.1h0m0 24.8h0m.1 16.4h0m.1-13.2h0m.1 16.6h0m.1-40.3h0m.1 11.3h0m.1 25.5h0m.2-7.9h0m.1-11.1h0m.2 35.5h0m.1-38.5h0m.1 34.1h0m.1-17.2h0m.1 7.5h0m.1-29.8h0m.1 24.8h0m.1-31.7h0m.1 21.9h0m.2-4.4h0m0-26.2h0m.1 32.9h0m.1-21.8h0m0 16.4h0m.3-23.9h0m.1 9.3h0m.4-8.2h0m0 3.2h0m.1 13.9h0m0 18.6h0m.1-21.4h0m.3 16.4h0m.1 4.8h0m.1-31.4h0m.1 14.9h0m0-6.1h0m.1 12.6h0m.1-43h0m.2 51.4h0m.1-36.1h0m.1-16h0m.2 29.1h0m.1-5h0m0 16.1h0m.1-26h0m.1 5.1h0m.1 27.8h0m.1-14.6h0m.1 4.3h0m.2 4.6h0m.1-15h0m.2 4.3h0m0-16.7h0m.1 30.1h0m.3 12.9h0m0-5.5h0m.1-39.4h0m0 49.6h0m.3-2.6h0m.1-35.9h0m.1 11.5h0m.2-14.6h0m.3 18.2h0m.1 9.3h0m0 6.7h0m.1-21.8h0m0 15.1h0m.1 3.3h0m.1-25.4h0m.1 17.2h0m0 25.8h0m.1-40.6h0m.2 35.6h0m.1-18.6h0m.2 5.7h0m.2-10.7h0m.1-24.2h0m.2 22.1h0m0-7.1h0m.1 30.4h0m.2-57h0m.1 11.4h0m0 3.7h0m.1 2.2h0m.1-7.3h0m.3 13.3h0m.2 8.4h0m.1 7.4h0m.1 29.5h0m.1-5.4h0m0-20.3h0m.1-22.4h0m.1 9h0m0 2.8h0m.1 31.6h0m0-6h0m.1-58.4h0m0 57.6h0m.1-2.4h0m.1-4.7h0m.1-8.3h0m.1-5.4h0m0 8.2h0m.1 2h0m.2 5.5h0m.2-3.5h0m.1-24.2h0m0-8.5h0m.1-5.7h0m.2 24.4h0m.1-27.3h0m.1 17.6h0m0-16.7h0m.1 30.7h0m.1-35.6h0m.1 15.5h0m0 8.6h0m.1-5.3h0m.2 26h0m.3 1.2h0m.2-19.1h0m0 34.4h0m.1-43.7h0m.1 11.9h0m.1 4.1h0m0 3.7h0m.1 13h0m.1-5.2h0m.2-24.1h0m.1 20.5h0m0 7.9h0m.1-40.2h0m0 4.6h0m.2 16.4h0m0-23.2h0m.1-8.3h0m0 42.7h0m.3-29.8h0m.1-6.2h0m.1 42.6h0m.1-15.4h0m.1-17.7h0m.1 9.3h0m.1-6.3h0m.1 3h0m0 15.1h0m.1 3.6h0m.2-35.9h0m.1 22.6h0m0-17.1h0m.1-11.6h0m0 14.5h0m.2 28.5h0m.1-45.5h0m.1 33.5h0m.1-25.5h0m.1 21.9h0m.1 10.6h0m.1-18h0m.1-20h0m.3 6.9h0m.1 15.7h0m.1-18.9h0m.1 28.6h0m.1 23.7h0m0-37.6h0m.1-2.5h0m.2-6.3h0m.1 30.2h0m.2-4.6h0m.1 14.9h0m.1-39.5h0m.1 33.6h0m.1-19.2h0m0 4.7h0m.1 13h0m.1-24h0m0 30.6h0m.1 3.9h0m.2-7.2h0m0 9.9h0m.1 3h0m.1 13.7h0m.3-19.8h0m.2-1.2h0m0-40.2h0m.2 24.5h0m.1-20.4h0m.1 11.9h0m0 12.4h0m.1-18h0m.1-12.5h0m0-13.2h0m.1 28.9h0m.1-31.2h0m.1 11.8h0m.2 27.8h0m.1-1.4h0m.2 10.6h0m.1-26.1h0m0 20.4h0m.1 11.1h0m0-2.9h0m.2-26.4h0m.1-6.5h0m0 18.5h0m.2 35.8h0m.2-41.4h0m.1 8.9h0m.1-12.1h0m.1-2h0m.1 52.7h0m.1-18h0m0-3.3h0m.1 2.4h0m.2 6.9h0m.1 9.9h0m0-30.8h0m.1 23.2h0m.2-34h0m0 15.9h0m.1 12.9h0m.1-21.4h0m0-4h0m.1 29.1h0m.1-6h0m.3-4h0m.1 2.9h0m.2-11.9h0m.1 6.7h0m.1-23h0m.1 21h0m0-39h0m.2 30.2h0m.1 26h0m.1-42.5h0m.1-2.8h0m.2-15.7h0m.1 36.4h0m.1-31.8h0m.2 26h0m0-19.8h0m.1 16.2h0m0-1.1h0m.2-16.3h0m.1-2.1h0m0 13.4h0m.1-18.3h0m0 12.1h0m.1-11.4h0m.1 38.1h0m.2-18h0m.1 23.8h0m.1-7.6h0m.1-6.7h0m0-14.6h0m.1 25.1h0m.1-8.5h0m.1 14.1h0m.2-28.3h0m.1 8.5h0m.1-15.2h0m.1 27.7h0m.2-25.1h0m0 21.1h0m.1 13.5h0m.1-37.3h0m.2 10.7h0m0-18.3h0m.2 40.2h0m.1-14.8h0m.2 19.5h0m.1-23.5h0m.1 22.4h0m.2-32.4h0m.4 4.7h0m0-13h0m.1 25h0m.2-25.9h0m.1 28.5h0m0-10.1h0m.4 23.1h0m0-21.1h0m.1 13.5h0m.1-2.8h0m.1-23.8h0m.1 20.3h0m.2-16.3h0m0-7.1h0m.1 35.1h0m.1 11.3h0m.1-50h0m.1 22.1h0m0-8.9h0m.1 18.3h0m.2-17.2h0m.2-10.1h0m0 31h0m.1-19.1h0m.1 20.2h0m.1-36.8h0m0 25h0m.1 22.5h0m0-30.8h0m.1 1.8h0m.1-28h0m.1 18.5h0m.1 11.8h0m.1 36.8h0m.2-61.7h0m.1 10.3h0m.1 22.6h0m.2-6.7h0m0 21.6h0m.1-5.2h0m.2 16.5h0m0-24.4h0m.1 15.5h0m.1-4.5h0m0 14.6h0m.1-23.1h0m.1-21.2h0m0 36.7h0m.1 3.4h0m0-17.8h0m.2-6.2h0m.1 14.5h0m.2-28.9h0m0 17.9h0m.1 4.3h0m.1-28.3h0m0 7.7h0m.1-4.8h0m.1 2.2h0m0-13.9h0m.2 7h0m.2-6.4h0m0 21.4h0m.1-18.5h0m.1-18.7h0m.1 35.4h0m0-2h0m.3-17.6h0m.1 4.4h0m.1 22.4h0m.1-19.5h0m.1 22.4h0m0-26.4h0m.1 38.8h0m.2 9.4h0m.1-29h0m.3 1.5h0m0 32.4h0m.1-50.7h0m0 30.7h0m.1 6.7h0m.1-9.6h0m.1 14.8h0m.1 1.3h0m.1 .1h0m.1 6h0m.1-36.1h0m0 22.5h0m.1-32.4h0m0 5.5h0m.1 11.4h0m0 5.6h0m.1 21.3h0m.1-40.9h0m0 25.4h0m.1-31.4h0m.1 30.3h0m.1-25.8h0m.2 12.6h0m0 5.2h0m.1-12.5h0m.2 18.8h0m.1-12.8h0m.1-15.7h0m.3 21h0m.3 12.8h0m0-32.4h0m.3 23.9h0m.1 16.1h0m0-34.5h0m.1 25.9h0m0 5.9h0m.2-14.7h0m0-13.1h0m.3 2.8h0m.1 3.7h0m.1 25h0m.2-5.9h0m.1-3.4h0m0-24.7h0m.1 35.7h0m0-26.2h0m.1-14.8h0m.1 26h0m.1 13.4h0m.1-15.3h0m0 3.2h0m.1-6.1h0m.1-3.4h0m.1-22.6h0m.1 9.2h0m.1 32.7h0m.1-40.4h0m.1 23.4h0m.1-6h0m0 3.7h0m.1-6.6h0m.1-24.8h0m.1 13.3h0m.2 6.1h0m.1-14.5h0m.1 2.7h0m.1-13.3h0m.2 28.5h0m0-7.9h0m.1 3h0m.1-16.2h0m.2 58.4h0m.1-23.8h0m.1 1.6h0m.1-9.1h0m.1-25.2h0m.1 5.3h0m.2 17.9h0m.1-17.1h0m.1-14.3h0m.2 39h0m.1 11.4h0m.3-23.9h0m.1 10.5h0m0 6.6h0m.1 12.5h0m.1-32.4h0m0-22.6h0m.2 14h0m.1 19.2h0m.1 11.4h0m.1 10.3h0m.1-38.6h0m.1 11.5h0m.1 21.4h0m.1-6.1h0m.1-25.3h0m.1-6.2h0m0 28.5h0m.1-33.4h0m.1-2.3h0m.1 3.2h0m.1 25.9h0m.2-13.6h0m.1 10.6h0m0-31.4h0m.1 62.9h0m.2-49.2h0m.1 7.5h0m0 6.2h0m.1-3.2h0m.2 24.2h0m0-14.5h0m.2 13h0m.2-15.7h0m.1-14.7h0m.1 22.9h0m.1-2.3h0m.1-22.5h0m.3 29.4h0m.2-15.8h0m.2-19.4h0m0-5.9h0m.1 28.1h0m0 20.2h0m.2-9.2h0m.1-37.3h0m.1 14.3h0m.1 30.4h0m.2-23.6h0m.1-3.1h0m.1 11.1h0m0-25.5h0m.1 9.7h0m.1 18h0m0-25.1h0m.1 28.3h0m0-39.7h0m.1 6.6h0m0 6.5h0m.1 27.3h0m.1-39.8h0m.1 2.2h0m.1 9.2h0m.1-5.7h0m.1 22.2h0m.2 23h0m0-19.3h0m.1-7.5h0m.1-3.4h0m.1 7.2h0m0 27.1h0m.1-10.5h0m.1 16.8h0m0-45.5h0m.1 37.9h0m.1-10.3h0m0-8.7h0m.5 3h0m.1-19.6h0m.2-5.6h0m.2 21.2h0m0-7.5h0m.1-14.2h0m.1-8.7h0m.1 37.5h0m.1-18.9h0m.1 29.3h0m.1-28.4h0m.1 27.3h0m.1 6h0m.1-38.6h0m.1 2.3h0m.2 9.8h0m0-19.8h0m.1 38.6h0m.1-9.1h0m0-14.9h0m.2 11.3h0m.1 4.9h0m0 3.7h0m.1-29.8h0m.1 38h0m.1-19.3h0m.1-1.7h0m.1-5.7h0m.1-18.2h0m.1 34.6h0m0 4h0m.1-18.5h0m.5-29h0m.1-1.3h0m.1-3.1h0m0 8h0m.1 2.5h0m0 6.3h0m.2-7.2h0m0-5.3h0m.1-7h0m.1 14.1h0m0-5.7h0m.2 17.8h0m0 3.9h0m.1-14.1h0m.2 12.7h0m.1-4h0m.1-5.4h0m.1 11.7h0m.1 6.5h0m.2-14.9h0m0 20.2h0m.1-11.3h0m0 4.1h0m.2 5.1h0m0-11h0m.1 29.1h0m.1-2.3h0m.1-36.5h0m0 42.1h0m.1-1.4h0m.1-16.2h0m.2 9.4h0m.2 .6h0m.1-4.6h0m.2-17.4h0m.1 14.8h0m0 14.8h0m.1-36.2h0m.3-11.3h0m.1 25h0m.1 21.9h0m.1-23.6h0m0 19.8h0m.1-22h0m.2 12.2h0m.1-11.7h0m0-11.6h0m.1-16.3h0m0 42.4h0m.2-7.9h0m.1-30.4h0m0 15.7h0m.1 17.2h0m.1 7.8h0m.1-22.7h0m0-5.4h0m.1-3.3h0m0-4.4h0m.1 2.7h0m.2 13.2h0m.1-19.8h0m.2-.3h0m.1 33.9h0m.1-18.6h0m.2-5.7h0m0 37.9h0m.1-19h0m.1 32h0m.2-10.9h0m0-4.4h0m.4-8.8h0m.1 5.8h0m0 1.8h0m.1 9h0m0-35.5h0m.1 21.5h0m.1-13.5h0m.1 4.9h0m0-5.5h0m.1-19.8h0m.2 17.3h0m.1-1.6h0m0-7.2h0m.2 16h0m.1 12.9h0m.1-37.3h0m.1 10.9h0m.2 19h0m0-8h0m.1-13.6h0m.1 28.4h0m.1-3.8h0m.1-14.6h0m0-15.1h0m.1 1.5h0m.2 9.7h0m.1-5.8h0m0-10.4h0m.2 29.1h0m.1-28.7h0m0-4.3h0m.1 1.4h0m.1 1.4h0m.1 40h0m.1-47.5h0m.1 14h0m.3 26h0m0-29.4h0m.1 42.8h0m.1 5.6h0m0-35.2h0m.2 3.4h0m.2-33.3h0m0 37.2h0m.1 4.2h0m.1-7.4h0m.1-27.8h0m0 45h0m.1-11.7h0m.2 10h0m.1-27.5h0m0-3.5h0m.1 38.4h0m.1-48.2h0m0 22.8h0m.1-4.3h0m.2 18.8h0m.1-24.6h0m.1 21.4h0m.1-5.7h0m0 11.1h0m.1-13.7h0m.1 17.7h0m0-40.7h0m.1 28.1h0m.1 28.3h0m.2-38h0m.1 3.3h0m.1 27.1h0m0 14.3h0m.2-24.4h0m0 14.1h0m.1 5h0m.2-14.8h0m.1 11.6h0m.2-8.3h0m0-27.8h0m.2 11.4h0m.1-5.2h0m0 37.6h0m.2-11.7h0m.1-2h0m.1-36.9h0m0 52.9h0m.2-32h0m0 7.1h0m.1 13h0m.1-18.7h0m.2 2.4h0m0-20.8h0m.1 9.9h0m.1 25.6h0m0-8h0m.2-40.9h0m.2 49.9h0m0-30.4h0m.2 19.5h0m.1 1.1h0m.2-14.3h0m.1-22.7h0m.1-1.5h0m0 21.5h0m.1 20.8h0m.2-10.6h0m.2 11h0m.1-13.3h0m.1-23.2h0m0 3.5h0m.1 24.5h0m.1-7h0m.1-36.4h0m.4 22.4h0m.1-6h0m.1 11.8h0m0-15.3h0m.4 11.4h0m0 7.5h0m.2 18.1h0m.4-21.3h0m0-15.7h0m.1 33.2h0m.1-11.5h0m0-14.2h0m.2-9.5h0m.1 42.9h0m.1 1.1h0m0-6.4h0m.1-32.5h0m.1-1.2h0m.1 8.2h0m.1-3.7h0m.1 19h0m.2 27.9h0m.1-41.4h0m.1 14h0m.2 12.2h0m0-24.5h0m.1 36h0m.1 7.5h0m0-8h0m.2-25.8h0m.1 31h0m.1-36.5h0m.1 14.5h0m.1-38.7h0m0 46.6h0m.2-6.8h0m0-3.1h0m.1-10.3h0m.1 22.5h0m0-6.3h0m.1-7.6h0m.1 20.1h0m0-4.6h0m.1-36.3h0m.1 22.3h0m.1-38.5h0m.2 24.5h0m0 41h0m.1-35.4h0m.1-7.3h0m.1-9.2h0m.1 47.1h0m.1-41.7h0m0 32.8h0m.2-19.5h0m.1 16h0m0-7.6h0m.2 13.4h0m.2-27.1h0m0 7.7h0m.2 8.2h0m.1-33.7h0m.3 6.1h0m.1-3.6h0m.1-15.8h0m.1 29.6h0m.1 10.1h0m.2-12.4h0m.1-10h0m.1 41.7h0m.1-4.3h0m.1-10.9h0m.4-22.1h0m0 11.8h0m.1-.1h0m.1 3.4h0m0 21.5h0m.2-43.5h0m.2 4.5h0m.1-9.5h0m0 34.5h0m.1 12.1h0m0-7.2h0m.2-3.5h0m.1-5.6h0m.1-3.9h0m0 16.6h0m.1-27.3h0m.1-1.3h0m.1 25.3h0m0-19.9h0m.2 4.4h0m.1-22.3h0m0 27.4h0m.1 6.3h0m0-14.1h0m.2-29.9h0m.1 30.9h0m0-14.8h0m.1-19.9h0m.2 43.9h0m.1-35.3h0m.3 14.2h0m.1 6.2h0m.1-4.1h0m.2-16.3h0m0 9.7h0m.1 35.7h0m.2-.7h0m.1-40.5h0m.1 3.5h0m0-7.2h0m.1 21.1h0m0 14.8h0m.3-31h0m0 24.9h0m.1 4.6h0m0-6.4h0m.1 12.2h0m.2-22.9h0m0 20h0m.1-28.3h0m.1 35.1h0m.1-12h0m.1 3.9h0m.2 5.3h0m0-28.9h0m.1 37.5h0m0-1.9h0m.1-19.9h0m0-5.1h0m.1 30.9h0m.1-6.2h0m.2-29.6h0m.1-5h0m.1 12.8h0m.2-4.3h0m.1 12.3h0m.1-2.4h0m.1-25.6h0m.1 40h0m.2-19.7h0m.1-15.9h0m.1-23.3h0m0 9.5h0m.1 25.4h0m.1-26.2h0m.1 17.9h0m0-20.1h0m.1-7.6h0m.3 17.2h0m0 12.5h0m.1-16.6h0m.1 .1h0m.1 32.3h0m0-13.8h0m.1 3h0m.1 4.4h0m.1-17.4h0m.1 28.6h0m.1-7.1h0m.1 14.6h0m.1-.5h0m.1-29.1h0m.2 16.9h0m.1-3.2h0m0-22.3h0m.1 41.1h0m.1-3.9h0m.1 8.1h0m.1-41.1h0m.1 27h0m.1-23.8h0m0 10.2h0m.3 24.2h0m0-12h0m.2 15.3h0m.2-4.1h0m.1-12.4h0m.2-34.9h0m.1 42.5h0m.1-33.8h0m.1-5.3h0m.1 19h0m.1 3.6h0m.1 18.1h0m.1-26h0m0-14.5h0m.1 12.8h0m0 14.1h0m.1 8.1h0m.1-32.1h0m.1-11.2h0m.1 37.2h0m0 7.9h0m.3-28.5h0m0 28.8h0m.1-17.3h0m0 4.8h0m.1-9.5h0m.2 20.9h0m.2-42.4h0m0 48.9h0m.1-52.7h0m.1 20.1h0m0 4.8h0m.1 33.4h0m.2-47.1h0m.1 2.9h0m.2-7.4h0m0 20.9h0m.3 5.6h0m0-32h0m.1 11.5h0m.1 27.7h0m0-44.3h0m.1 22.7h0m.3 4.6h0m0 7.6h0m.2 6.2h0m0-33.8h0m.3 28.4h0m.2 15.4h0m.1-11.4h0m.1-15.5h0m.1 21.1h0m0 15.2h0m.2 13.7h0m.1-15.9h0m0-40.3h0m.1 45.5h0m0-14.3h0m.2-19h0m.1 16.6h0m.1-3.9h0m.3-17.6h0m0 7.4h0m.1 5.1h0m0-28.9h0m.2 6h0m.1-1h0m.1 7.5h0m.3-16.9h0m0 37.3h0m.1 3.8h0m.1-20.7h0m0-9h0m.1 3h0m.1 9.1h0m0-19.8h0m.2 12.4h0m.1 13.5h0m.1-8.4h0m.1 25.4h0m.1 16.3h0m.2-6.8h0m0-2.4h0m.1 11.1h0m.2-12.8h0m0-28.1h0m.1 11.1h0m0-9.2h0m.3 18.3h0m.1-11.1h0m0 15.6h0m.1 7.9h0m.1-38.7h0m0 27.2h0m.2 21.6h0m.1-36h0m.1 8.9h0m.1 8.5h0m0 .9h0m.1-39.9h0m0 42.9h0m.1-24h0m.1-7.7h0m.1 16.7h0m0 4.3h0m.3-5.9h0m0-26.7h0m.3 33.7h0m.1-17.3h0m0-10.9h0m.1 7.8h0m.2-23.7h0m.2 18.5h0m.3 34.4h0m.1-47.9h0m.1 22.9h0m.1-6.8h0m0 9.4h0m.1 4.4h0m.1 5.4h0m0 15.1h0m.2-22.3h0m.1-14.5h0m.1 18.7h0m0 2.2h0m.1 8.1h0m.1-2.6h0m.2-18.2h0m.2 4.2h0m.3-13.9h0m.3-2h0m.1 9h0m0 19.2h0m.2 8.5h0m0-22.9h0m.2 18.8h0m0-21.5h0m.1 30.5h0m.1-34.6h0m.3 18.5h0m0 10.2h0m.1-16.8h0m.1 25.1h0m.1-5.1h0m.1-4.3h0m.1-29.2h0m0 16.2h0m.2 34.8h0m.1-54.2h0m.1 32.2h0m0-5.1h0m.1-4.7h0m.1-7.5h0m0 13.5h0m.1-35.4h0m.3 46.4h0m.1 7.2h0m.2-45.5h0m0 7.6h0m.2 8.8h0m.1 6.2h0m.1-12.8h0m.3-15.4h0m.1 1.4h0m0 9.5h0m.2 6.8h0m0-20.8h0m.2 11.5h0m.1 6.3h0m.1 11.5h0m0-5.3h0m.2-17h0m.1 7.9h0m.1-15.7h0m0-2.8h0m.2 29.6h0m.5-42.7h0m0 11.6h0m.1-1.3h0m.1-12.6h0m.1 4.8h0m0 6.6h0m.1-3.2h0m0 4.1h0m.4 20.7h0m.1-5.9h0m.1 1.8h0m.1-13.7h0m0 5.7h0m.1 18.4h0m.1-12.5h0m.1-8.5h0m.1 17.9h0m0-6.2h0m.1-6.2h0m.3 22.7h0m0-6.4h0m.1 4.5h0m.1 5.5h0m.1-7.9h0m.1 10.3h0m.1-17.7h0m.1 28.3h0m.1-6h0m.1-25.8h0m.3-2.9h0m.4 10.5h0m.1-36.9h0m0 12.5h0m.1 28.2h0m.1-18.2h0m.1-9.6h0m0-12.9h0m.1 7.7h0m.1 7.1h0m.1 2.4h0m.1 3.2h0m.1-18.5h0m.1 36.3h0m.1-15.7h0m.2 20.8h0m.2-11.4h0m.1 14.2h0m.1-11.7h0m0 15h0m.1 1.4h0m.1-25h0m.1 31.7h0m.2-3.3h0m.1-25.8h0m.1 9.1h0m.1 18.4h0m.3 3.6h0m.1-16.9h0m.1-2.1h0m.1-21h0m.1 15.4h0m0-3.1h0m.2-1.9h0m.1-14.4h0m.1 .5h0m0-4.3h0m.1 37.8h0m.1-25.2h0m0-13.9h0m.1 11.6h0m.1 23.8h0m.1 1.9h0m.2 3.7h0m.1-23.9h0m.1 12.3h0m.1 18.1h0m0-24.5h0m.2-7.9h0m.1 28.4h0m.3-49h0m0 49.9h0m.1-17h0m.1-23.2h0m0 8.6h0m.1-6h0m.1-6.9h0m.3 10.3h0m0 21h0m.1-9.3h0m.1 30.8h0m.1 .9h0m.1-19.3h0m0-8.7h0m.4 11.8h0m0 5.6h0m.1 2.3h0m.1 3.2h0m.2-28.8h0m0 27.8h0m.1-7.3h0m.1 28.2h0m.1-51.2h0m.2-14.5h0m.1 3.2h0m.2 23.6h0m.1-4.6h0m.1-14.9h0m.1 5.3h0m.1-1.4h0m.1 18.1h0m.2 4.8h0m.1-8.9h0m.3-15h0m0 22.2h0m.1-16.1h0m.2-18.4h0m0 41.9h0m.1-16h0m0-25.7h0m.2 22.8h0m.1-1.6h0m.1 19.7h0m.2 3.8h0m.1-15.6h0m.1-12h0m.1 20.6h0m.1-24.2h0m.1 18.4h0m.3-22.6h0m0 26.6h0m.1 16.7h0m.1-7.9h0m0-39.7h0m.2 45h0m0-.2h0m.1-25.7h0m.1 3.7h0m.2 3.9h0m0-10.8h0m.1-12h0m.2 30.6h0m.1-28.8h0m0 34.1h0m.2-29h0m0 3.6h0m.2 18.3h0m.2-36.1h0m.1 7.9h0m.2 36.5h0m.1-15.3h0m.2-33.7h0m0 18.1h0m.1 19.3h0m.2-16h0m.1 10.5h0m.1-17h0m.2-6.4h0m.1 17.3h0m0-21.7h0m.1 25h0m.2 17.1h0m0-38.7h0m.2 2.9h0m0 38.1h0m.3-10.4h0m.2-34.1h0m.1 20.5h0m.1 20.9h0m0-37.3h0m.1 45.1h0m.2-11.8h0m0 10.5h0m.1-43h0m0 26.3h0m.1-7.9h0m0-28.6h0m.1 13.3h0m.1-7.3h0m0 15.7h0m.1 26h0m.1-29.3h0m.2 5.5h0m.1 7.5h0m.2-14.9h0m.1 3.4h0m.3 41.4h0m0-8.1h0m.1-4.2h0m.1-32.5h0m.1 46.2h0m.1-24.5h0m.1 3.3h0m.1 3.3h0m0 10.5h0m.1-31.7h0m.1 2.3h0m.1 4.9h0m.1 2.5h0m0 2.4h0m.1-15.2h0m.3 36.1h0m0-39.1h0m.1 33.8h0m.1-39.1h0m.1 29.9h0m.1 4.1h0m0-20.3h0m.1 2.1h0m.1 20.1h0m.1 13.4h0m.1 8.2h0m.3-32.6h0m.1 15.3h0m.1-38.5h0m.2 18.9h0m.3 7.2h0m0-6.4h0m.2 23.1h0m.3-11.9h0m.1-21.9h0m.1 32.1h0m.1-12.8h0m0-26h0m.1 14.3h0m0-4.1h0m.1-6.4h0m.2-6h0m.1 35.7h0m0-21.2h0m.1 18.1h0m.3-10.4h0m.1 22.9h0m.1-7.6h0m0 9.7h0m.1-45.1h0m.3 7h0m.1-9.2h0m.2 9.6h0m.1 39h0m0-23.1h0m.1 5.3h0m.1-12.6h0m.1 30.1h0m0-9.8h0m.1-10.3h0m.1-15.1h0m0-8.9h0m.1 17.1h0m.1 16h0m.1-23.8h0m.1 28.5h0m.1 2h0m.2-10.5h0m0-24h0m.1 14.6h0m0 14.7h0m.1-31.8h0m.1 24h0m.2-13.7h0m.2 17.6h0m.1-9.5h0m0-22.9h0m.2 8.3h0m.2 12.7h0m0-8.2h0m.2-27.6h0m.1 45.3h0m0-27.2h0m.1 22.8h0m.1-8.6h0m.2-24.9h0m.1 3.2h0m.3 15h0m.2-10.1h0m.2 37.1h0m.1-2.9h0m.2-5.3h0m.2-30.9h0m.1 7.1h0m.1 9.5h0m.1 3.2h0m.1 4.6h0m0-19.5h0m.1 17.6h0m.2-12.6h0m.1 24.6h0m.2-1.5h0m0-5.3h0m.2 16.8h0m.1-31.1h0m.6 12.1h0m.1 3.6h0m.1 7.7h0m.1 9.5h0m.2-29.8h0m.1 18.5h0m0-2.7h0m.1 7.5h0m0-31.4h0m.1 9.3h0m.3 4.7h0m0 9.9h0m.1-30.5h0m0 20h0m.1 7.1h0m.2-29.3h0m.1 27.2h0m.1-7.7h0m.1-8h0m.2 30.4h0m.2-38.3h0m.1 17.5h0m.1 2.6h0m.1-22h0m.1-3.7h0m.1 15.9h0m.1 22.9h0m0-20.2h0m.2 18.5h0m.1-21.9h0m0 11.5h0m.1-15.1h0m.1 29.1h0m.2-51.4h0m.2 20.7h0m.1-17.2h0m.1 14.5h0m0 25.3h0m.1 1h0m.1-3.9h0m.3-27.4h0m.2 34.3h0m.4-23.9h0m0 11h0m.1-13.1h0m.1-16.3h0m.1 3.5h0m0 23.3h0m.1-15.8h0m0 26.1h0m.1-28.8h0m.1 23.9h0m.1-7.3h0m0-19.2h0m.1 33.5h0m.1-16.2h0m.1-3.3h0m.2 23.7h0m.1-29.3h0m.1 40.2h0m.1-20.1h0m.1 21.5h0m0 9.2h0m.1-59.2h0m.1 40.6h0m.2-14.4h0m.3-10.1h0m0 13.8h0m.1 24.8h0m0-17h0m.4 2.4h0m0 9.3h0m.1 9.8h0m.1-23.5h0m0-11.5h0m.1 8.2h0m0-28.1h0m.1 18.3h0m.2-.5h0m0-10.1h0m.1-5h0m0-20.8h0m.1 33.2h0m.2-9.1h0m0-7.7h0m.1 11h0m0 16.5h0m.1-12.2h0m.1-19.5h0m.1 11.9h0m0 .8h0m.1 17.3h0m.2 15.7h0m.1 .1h0m.1 9h0m.1-6.3h0m.1 7.1h0m.1-27.9h0m.1 12.6h0m0 2.8h0m.1 17.7h0m.1-40.7h0m0 18.3h0m.2-3.3h0m.1-32.8h0m.1 48.2h0m.1-8.7h0m.1-36h0m.1 27.3h0m.1-16h0m.1-1.7h0m.3 10.5h0m0-1.8h0m.2-26.7h0m.2 29.5h0m0-4.2h0m.2 8.1h0m0-21h0m.1-2h0m.1 4.9h0m.3 32.2h0m.2-43h0m0 34.3h0m.1-27.7h0m.1 25.1h0m.1-28.6h0m0 24.9h0m.1-10.5h0m.1 3.3h0m.2-11.5h0m.1-15.3h0m0 9.2h0m.1 25.1h0m.1-14.4h0m.2 12.2h0m.2-34.8h0m.1 8.1h0m.5 24.5h0m0 18.8h0m.2-30.6h0m.1-3.8h0m0-11.8h0m.1 39.8h0m.1-17h0m.1-1.5h0m.1 28.2h0m0-39.3h0m.1-6.3h0m.1 32.6h0m.2-18.7h0m.2-12h0m.1 26.4h0m0-7.7h0m.1 4.8h0m.1 4h0m.2-14.8h0m.1 22.3h0m0 5.4h0m.1-7.2h0m.2 4.6h0m.1-16.1h0m.2-27.8h0m0 13.8h0m.3-23.2h0m.1 15h0m.1-12.5h0m.1 29.3h0m0-5.2h0m.1-19.3h0m.1 9.8h0m0-12.4h0m.1 28.9h0m0-37.4h0m.1 5.5h0m.1 1.1h0m.2 20.9h0m.1 21.9h0m0 6.4h0m.1 6.3h0m.1-16.7h0m.2 16h0m.1-38h0m.2 17.3h0m0 10.3h0m.2-27h0m0-.7h0m.1 24.6h0m0-32.4h0m.1 13.7h0m.1 24.9h0m.1-21.1h0m.1 14.4h0m.1-10.6h0m.4 4.9h0m0-9.5h0m.1 12.1h0m.1 14.6h0m.1 5.5h0m0-8.4h0m.1-10.7h0m.2 22.4h0m.1 8.2h0m.1-26.2h0m.2-10.4h0m0 30.2h0m.2-17.7h0m0-17.1h0m.1-8.2h0m.1 28h0m0 16.1h0m.1-7.6h0m.2-33.5h0m.1 13.1h0m.2-20.9h0m.1 36.5h0m.1-2.7h0m.1 5.5h0m.2-30.6h0m.1-11.6h0m.1 51.8h0m0-60.7h0m.1 27.5h0m.1 19.2h0m.1-9h0m.1-47.4h0m.1 34.8h0m.1-17.8h0m0-9h0m.1 24h0m.1-32.8h0m0 43.4h0m.1-2.3h0m.3-34.3h0m0 6.9h0m.1 .8h0m.1 12.2h0m0 1.6h0m.1-16.1h0m0 11h0m.2 14h0m.1-28.1h0m.2 9.7h0m0-11.3h0m.1 7.7h0m.2 23.3h0m.1-17.6h0m.1 22.2h0m.1-13.6h0m0 26.5h0m.1-24.7h0m0 16.4h0m.1-23.6h0m.1 21.2h0m.1 4.8h0m.1-16.2h0m.1 20.6h0m.2 8.5h0m.1-13.5h0m.1 12.6h0m.1-3.6h0m.1-12h0m.1-5.4h0m.1-14.5h0m.3-7.7h0m0 4.3h0m.2-5.3h0m.1 26.4h0m0 15.7h0m.1-31.9h0m.2 8.5h0m0 2.1h0m.1-24.3h0m.1-1.5h0m.1 18.3h0m.1-12.3h0m.2 5.1h0m.2 10.5h0m.1-18.8h0m0-4.6h0m.1 15h0m.1 21.8h0m.2-6.4h0m0-4h0m.2-15.7h0m.2 27.9h0m.2 2.8h0m.2-6.7h0m.1-13.3h0m.1 10.8h0m.1-15.5h0m.3 26.5h0m.1 7.6h0m.2-3.2h0m.1-12h0m0-6h0m.1-28.3h0m.1 44.7h0m.1-23.6h0m.1 23.8h0m0-22.1h0m.1-15.5h0m.2 44.3h0m0-49.2h0m.1 46.3h0m0-38h0m.1 1.3h0m.2 13.7h0m0-10.7h0m.1-10.9h0m.1 11.8h0m.1 21h0m.1-11.9h0m.1 15.7h0m0-27.9h0m.2-18.9h0m.1 47.2h0m.1-11.1h0m0-32h0m.1 34.5h0m.2-31.8h0m.4 1.8h0m.1 3.1h0m.1 21h0m.2-11.3h0m.1 19.1h0m0-16.2h0m.1-14.5h0m.1 35.1h0m.1-30.3h0m.1 53.6h0m0-21.6h0m.1-42.5h0m.1 24.4h0m0-2.1h0m.1 8.4h0m.2-16.8h0m.1 39.3h0m0-14.9h0m.1 12.1h0m.1-17.5h0m.1 15.9h0m.1-21.1h0m0 30h0m.1-9.8h0m.3-30h0m.1 7h0m.1 34.6h0m.2-15.7h0m0-9.2h0m.1 5.7h0m0-1.2h0m.1-31.1h0m0 41h0m.2-39.1h0m.1 3.8h0m0 8.9h0m.1-19.3h0m.2 17h0m0-15.6h0m.2 26.8h0m.1-44.2h0m.1 43h0m.1-13.4h0m.2 19.1h0m.1-34h0m.1 25.1h0m.3-20h0m.1 27.8h0m.1-30.5h0m.1 11.5h0m0 8.9h0m.2-23.9h0m.1 17.5h0m.1 23.4h0m0-6.1h0m.1-33.3h0m.1 41.8h0m.1-32.7h0m.1 38.7h0m.1-41.7h0m.3 19.1h0m0 9.1h0m.1-14.6h0m0-15.9h0m.2 13.1h0m.1-19.8h0m0-5.1h0m.3 37.3h0m.1-18.4h0m0 3.6h0m.1 16h0m0-23.3h0m.1-10.5h0m.1 19.8h0m.1-10.9h0m.1 21.3h0m.1 9.9h0m.1-7.1h0m.1-32.6h0m.1 .7h0m0 23h0m.1-20.9h0m.2 19.8h0m0 18.3h0m.2-14.3h0m.1 4.3h0m.1-34.9h0m0 42.9h0m.2 7.5h0m.1-11.6h0m.1-22.4h0m0 3.6h0m.1-9.9h0m.1 22.1h0m.1 8.8h0m.1 4.8h0m.2-27.2h0m.1 9.3h0m.1 21.2h0m.3-26h0m0-8.6h0m.3-5.8h0m.1 15.8h0m.1-25.3h0m.2 39.2h0m.1-14.7h0m.1-11.3h0m.1 10.2h0m.2 10.1h0m0 34.1h0m.1-64.4h0m.1 41.9h0m.1-23.8h0m.1 10.5h0m0-30.5h0m.1 35.2h0m0-5.9h0m.1-15.3h0m.1 28.8h0m.2-26.4h0m.1 34.4h0m.1-33.4h0m.1 27.9h0m.1-19.3h0m.1 13.7h0m.1 17.9h0m0 6.5h0m.1-16.3h0m.2-9.8h0m.1-4.8h0m.1-23h0m.1 46.6h0m0-41.7h0m.1 2.3h0m.4-6.8h0m.1 49.5h0m.1-33.5h0m.1 37.2h0m.1-40.5h0m.1 24.4h0m0-12.6h0m.1-5.3h0m.2 13h0m.1 8.2h0m0-18.3h0m.1 26h0m.1-18.9h0m.2 4.9h0m0-17.2h0m.1-.7h0m.3 2.9h0m.1 9.5h0m.1 7.1h0m.1-12h0m0 3.3h0m.1-31.1h0m.1 10.9h0m.6-26.2h0m.1 11.8h0m.3-1.9h0m0-9.9h0m.1 17.7h0m0-13.9h0m.1 1.6h0m.1 18.6h0m0-3.1h0m.1-9.2h0m0 5.7h0m.1 5.9h0m.1 1.1h0m.1-16.8h0m0 4.9h0m.1 16.3h0m0 .6h0m.1 4.2h0m.1-3.2h0m.2 10.2h0m.2-4.3h0m.1 1.1h0m0 4.2h0m.1 2.8h0m.1 12.3h0m.3-5.1h0m0-38.8h0m.3 7.4h0m.1 27.2h0m.1-3.3h0m.2-17.1h0m.1 8.2h0m.1 22.6h0m.2-41.1h0m.1 6.4h0m0 35.1h0m.2-44.5h0m0 40.7h0m.1-36.1h0m.1 30.5h0m.1-9.7h0m.2-7h0m.1 3.5h0m0 5.5h0m.2-11.9h0m0-3.7h0m.4 19.4h0m.2-15.3h0m.2 22.1h0m0-33h0m.1 32.7h0m.1 2.5h0m.2-17h0m.2-15.9h0m.1 22.6h0m.2-20.5h0m0-7.8h0m.1 32.8h0m0-15.5h0m.2 28.4h0m0 6.9h0m.2-40.8h0m.1 3.9h0m.1 12.5h0m.1 15.1h0m.1-18.8h0m.1 6.8h0m0 9.5h0m.1 11.1h0m.1-28.7h0m.2 24.7h0m.1-11.4h0m0-28.8h0m.2 11.5h0m.1-18.9h0m.1 9.7h0m.1 31.5h0m0-11.9h0m.1 4h0m.2-19.7h0m.1 24.1h0m.2-10.2h0m.1-7.3h0m0-14.8h0m.2 10.9h0m.1-4.9h0m.2-8.9h0m.2 55.6h0m.3-59.4h0m.1 23.7h0m.1 1.2h0m.1-21.2h0m.1 36.3h0m0-30.9h0m.3 23.4h0m.1 2.7h0m.2 1.2h0m0-10h0m.4-7.8h0m.1-3.5h0m.1 27.1h0m0-37.7h0m.1 25.8h0m.1-30.9h0m.3 22.3h0m0-15.7h0m.1 21.7h0m0 14.5h0m.1-18.1h0m.1-21.8h0m.2 11.2h0m0-4.6h0m.2 28.2h0m.5-24.9h0m.1 11.3h0m.2 9.7h0m0 5.8h0m.3-19.2h0m.1-3h0m0 30.6h0m.1-24.9h0m0-6h0m.1 13.8h0m.1 1.9h0m.1-24.4h0m.1 6.2h0m0-9.4h0m.2-3.1h0m.2 9.5h0m0 32.5h0m.2-17.1h0m.1 15.9h0m0-15.1h0m.1 8.4h0m0 9.6h0m.1 13.9h0m.1-11.3h0m.1 15.8h0m.4-24.5h0m.1-27.6h0m.1-1.5h0m.2-9.1h0m0 34.6h0m.1-5.3h0m.1-25.2h0m0 21.2h0m.1 8.4h0m.1-2.8h0m0-13.9h0m.2 2.9h0m.1 4h0m0 25.2h0m.1-39h0m.1-7.7h0m.1 11.8h0m0-11.7h0m.1 35.8h0m.3 13.8h0m.1-29h0m0 5h0m.1-16.9h0m0 26.9h0m.1-22.2h0m.1 29.1h0m.1-14.9h0m0 16.9h0m.3-4.2h0m.1 11.2h0m.1-2.5h0m0-12.1h0m.1-28.7h0m.2 15.6h0m0 37.4h0m.2-29.3h0m.4-12.9h0m.1-8.1h0m0 4.7h0m.3 23.9h0m.1-8.6h0m.1-24.5h0m0 20.2h0m.1 19.2h0m.1-31.9h0m.1 28.3h0m0-19.7h0m.3 13.6h0m.1-3.5h0m.3-21.3h0m.1 8.4h0m.1-16h0m.4 21.6h0m0 2h0m.1 8.3h0m.1-35.7h0m0 17.8h0m.1-7.9h0m0 49.7h0m.1-18.5h0m.2-46h0m0 1h0m.1 5.5h0m.1 6.5h0m.2 6h0m0 24.8h0m.1 4.1h0m0 1.6h0m.1-14.4h0m.1 3.9h0m.1-29.9h0m.1 35h0m.1-26.1h0m.1 33.8h0m0-41.6h0m.1 20.7h0m.1-3.7h0m.1-3.6h0m.5 14.7h0m.1-24.7h0m.1-3.7h0m0-8.4h0m.1 1.8h0m.1 18.5h0m0-9.3h0m.1 20.4h0m0-26.2h0m.1 21.6h0m0-17.1h0m.1 29.4h0m.4-20.1h0m.1-4.5h0m0 24h0m.1 7.6h0m.1 6.4h0m.1-30.2h0m.1 19.9h0m.1-8.2h0m.1-33.7h0m.1 44h0m.2-27.4h0m0 22.2h0m.1 11.3h0m.1-5.1h0m0-12.4h0m.2 16.3h0m.2-20.9h0m.1 13h0m0-17h0m.1 7h0m.3-5.1h0m.3-25.4h0m0 14.4h0m.2-2.6h0m.1 8.3h0m.1-2.7h0m0 4.7h0m.1-11.6h0m.5 18.5h0m.2-16.5h0m0 28h0m.1-25.6h0m.1-7.2h0m.1 28h0m.1 10.2h0m0-11.2h0m.1 15.1h0m.2-28.8h0m.1 16.5h0m.1-5.1h0m.2-28.3h0m.1 20.6h0m0-6.7h0m.1 8.8h0m.2-21.2h0m.3-2h0m.1 .9h0m.1 5.1h0m.1 8.7h0m.1 25.2h0m.1-13.5h0m.1-15.1h0m.2 21h0m.1-24.4h0m0 27.2h0m.1-15h0m0-2.9h0m.3 21h0m0-14.1h0m.1 17.8h0m.3 4.7h0m.1-16.8h0m.2-25.1h0m0-.7h0m.1 37.2h0m0-44.2h0m.1 54.1h0m.1-33.1h0m.1 27h0m0-18.4h0m.1-15.4h0m0 32.1h0m.1-44.9h0m.2 23.5h0m0-6.8h0m.1 17.5h0m.1 6.9h0m.1-13.9h0m.1 5.1h0m.2-13.8h0m0 11.1h0m.3-17.9h0m.1-5.5h0m.1 5.9h0m.1 3.8h0m0 21.7h0m.1-26.9h0m.1 46.8h0m.1-7.2h0m.1-43.5h0m.1 7.4h0m.2-8h0m.1 15.2h0m.1 14h0m0 9.8h0m.1-20.4h0m.1 24.1h0m.1-2.4h0m.1-23.5h0m0 11.2h0m.1 4.5h0m.2 3.7h0m.1-11.7h0m.2 24.3h0m0-27.1h0m.1 20.7h0m0-2.8h0m.1 7.6h0m0 8.5h0m.3-30h0m.1 19.5h0m0-33h0m.1 2.5h0m.1 18.1h0m.1-3h0m.1-27.3h0m0 20.4h0m.2 27h0m.1-31.8h0m.1-8.8h0m.1 19.5h0m.1 4.6h0m.1-24.8h0m.2 15.1h0m.1 12.4h0m.1-37.7h0m.1 35h0m.1-44.8h0m0 16.6h0m.1-14h0m0 2.9h0m.1 23.4h0m.2-18.1h0m0 7.7h0m.2-11.3h0m.2 24.3h0m.1-12.1h0m.1 19.2h0m.2-40.2h0m0 24.2h0m.1 24.5h0m0-4.1h0m.1-18.7h0m.1 7.7h0m.1-43.7h0m.1 14.1h0m0 10.9h0m.1 12.7h0m0-10.5h0m.1-15h0m.1 9.9h0m.1-13.4h0m.1 32.8h0m.1 5.4h0m.3 6.1h0m.1-16.1h0m.4-18.1h0m.1 11.4h0m0-13.1h0m.5 23.3h0m0-14.5h0m.2 6.8h0m.1-32.7h0m0 6.9h0m.1 2.3h0m.3 3.3h0m0 6h0m.1-7.5h0m.1 21h0m.1-16.8h0m0 5.7h0m.1 15.9h0m0-13.6h0m.1 22.2h0m0-11.5h0m.1-6.3h0m.1 33.4h0m0-17.6h0m.1 14.3h0m.1-2.2h0m.1 6.3h0m.1-9.4h0m0 7.3h0m.1-19.7h0m0 26.2h0m.1 1.6h0m.1-19.5h0m.1 6.5h0m.1 4.1h0m.2-21.1h0m.1 6.9h0m.2 25.2h0m.1-40h0m0 27.2h0m.4-24.7h0m.1 7.3h0m0-13.4h0m.1-1.8h0m0 16.5h0m.3-23.8h0m.1 16.9h0m0-12.9h0m.1 28.4h0m.1-19.5h0m.1-15.8h0m.1 32.2h0m0-30.7h0m.2 4.2h0m0 33.3h0m.1-42.5h0m.1 40.3h0m.2-3.1h0m.1-26.6h0m.1 2.1h0m.5 36.5h0m.1-1.7h0m.1-18.2h0m0-3.2h0m.2 23.9h0m.1-33.5h0m0 18.7h0m.1-13.2h0m.2 23.7h0m.1 8h0m0-28.8h0m.1 30.2h0m.1-3.4h0m.4-22.4h0m.1 4.7h0m.1 4.1h0m.1-18.4h0m.1 22.4h0m.1 1.8h0m.1-32.2h0m.1 28.1h0m.1-7.3h0m.2-23.6h0m.1 6.5h0m0 25.8h0m.2 13.2h0m0-30.3h0m.2-11.2h0m.2 35.1h0m.1-12.6h0m0-18.6h0m.2 29.2h0m0-16.8h0m.2 9.1h0m.2-30.4h0m0 41.9h0m.1-31.4h0m.1 7h0m.1 15.1h0m.1-15.4h0m.1-3.3h0m.3 9.5h0m.1 2h0m0-22.4h0m.3 37.5h0m0-28.4h0m.4-4.2h0m0-1.9h0m.1 36h0m.1-22h0m.2-6.6h0m0 22.1h0m.1-7.3h0m0-3.5h0m.1-20.5h0m.1 39.1h0m.2-6.5h0m.1-22.3h0m.2 16.8h0m.1 16.6h0m0-30.4h0m.1 2.7h0m.1 3.4h0m0 5.9h0m.1 4.6h0m.5-59.3h0m.1 4.7h0m.1 6.1h0m0 .8h0m.1-1.3h0m0 6.8h0m.1 16h0m.1-7.3h0m.1-12.3h0m0 10.5h0m.1 11.1h0m.1-12.5h0m.1-7.5h0m.2 9.1h0m0-2.9h0m.1 7.4h0m.2 2.6h0m.2 9.6h0m.1-3.5h0m.1 16.1h0m0-3.3h0m.1 4.3h0m0-20.3h0m.1 12.6h0m.1-8.2h0m.1 13.1h0m.1-26.5h0m.1 19.8h0m.1-2.7h0m.1 17.6h0m.1 4.3h0m.1-2.6h0m.2-34.8h0m.1 13.8h0m.1 40.4h0m.1-48.6h0m.1 10.9h0m0 6.2h0m.1 18.2h0m0-5.5h0m.2 16.5h0m0-6.6h0m.1-16.9h0m0-8.7h0m.3-10.1h0m.1 27.1h0m.2 1.6h0m.2-52.6h0m.1 54.8h0m.2-37.2h0m0 22.4h0m.1-19.3h0m0-9.5h0m.3-6.9h0m.2 34.1h0m.1-2.4h0m0 11.3h0m.1-32h0m.1 10.8h0m0 32.2h0m.1-15h0m.1-14h0m.1-4.8h0m.1-7.5h0m0 29.8h0m.1-14.6h0m.1-33.3h0m.1 14.2h0m.3-8.6h0m.1 6.8h0m0 12.8h0m.2-14.7h0m.1 28.5h0m.1-11h0m0 26.6h0m.1-3.1h0m.3-10.1h0m0-17.5h0m.1 12.7h0m.1 26.6h0m.1-46.4h0m.1 46.7h0m.2-13.8h0m.1-2.7h0m.1-2.5h0m.1-22.3h0m.2 2h0m0 16.4h0m.2-11.3h0m.2 2.6h0m.2 23.3h0m.1-6.4h0m.1 13.4h0m.1-22.3h0m.1 25.9h0m.1-6h0m.1 .6h0m0-16.3h0m.2 8.4h0m.1-5.1h0m0 18.5h0m.1-46.7h0m.1 15.3h0m0-.8h0m.1-9.9h0m.1-6.6h0m.1 9.9h0m.1-5.4h0m.1 18h0m.2 18.1h0m.1-.5h0m.1-3.5h0m0-25.3h0m.1 26.3h0m.1-4.3h0m0-14.2h0m.1 6.3h0m.1-4.6h0m.1-7.4h0m.1 23.6h0m0-4.4h0m.1-4.6h0m.1-27h0m.1 19.9h0m.2-13.3h0m.1-13.7h0m.1-4.9h0m.1 9h0m0-11.7h0m.2 27.4h0m.2-9h0m.1 19.9h0m.2-33.9h0m.1 4.6h0m0-5.3h0m.1 20.9h0m.1 5.8h0m0 11.1h0m.2-31.9h0m0 1.8h0m.2 35.3h0m.1-29.8h0m0 32.4h0m.1-16.2h0m.1-33.2h0m.2 38.5h0m.1-3.2h0m.1-17.4h0m.2-3.7h0m0 23.3h0m.2-9.7h0m.2 28.6h0m.1-25.3h0m.1 29.2h0m0-12.6h0m.1 14.9h0m.2-19.9h0m.1 19.9h0m0-7.2h0m.2-5.1h0m.2 2.3h0m.2-27.4h0m0 42h0m.2-45.6h0m0-19.8h0m.1 15.4h0m0 23.6h0m.1 4.9h0m0-1.5h0m.2-23.3h0m.1-11.3h0m.2 3.8h0m.1 17.9h0m0 2.3h0m.1 2.5h0m.1-10.9h0m.1-12.1h0m0-7h0m.2 12.7h0m.1 9.9h0m.2 9.6h0m0 24.4h0m.1-35.6h0m0-8.4h0m.1 26.7h0m.1 16.4h0m.1-45.2h0m0-1.4h0m.1 6.4h0m0 26.3h0m.2 6.9h0m.1-2.6h0m0-18.9h0m.5 23.7h0m.2-32.4h0m0 14.3h0m.2 12.2h0m.2-23.8h0m.1 8.5h0m.1 3.1h0m.2-26.1h0m0-2.8h0m.1 20.2h0m.2 16h0m0-26.6h0m.1 2.4h0m.1 14.1h0m0 12.1h0m.1-40.1h0m.1 34.9h0m.1 11.6h0m0-22.3h0m.1 11.8h0m0 7.9h0m.1-24.2h0m.1 7.6h0m.5-20.8h0m.1 14.4h0m.3 6.5h0m.1-30.5h0m.1 37.7h0m.1-17.5h0m.1-6.9h0m0-17.2h0m.1 39.4h0m.2-28.7h0m0 12h0m.1 26.3h0m.1-15.5h0m0-28.3h0m.2 3.7h0m.1 20.9h0m.3 7.5h0m.1-23.3h0m.1 12h0m.2-5.9h0m.1 11.6h0m0 32.8h0m.1-14.2h0m.1-23.5h0m.1 9.6h0m0 10h0m.1-.5h0m.1 9.4h0m.2 5.1h0m.2-42.3h0m.1 19.9h0m0 17.6h0m.1-13.3h0m0-19.7h0m.2 6.7h0m.1 16.9h0m.1 2.6h0m.1-14.2h0m.1 25.7h0m.1-16.2h0m.1-29.5h0m0 26h0m.3-15.9h0m0 12.5h0m.2 6.2h0m.2 4.5h0m.1 7h0m0-41.8h0m.1 19.6h0m.1-36.7h0m0 44.5h0m.2-28.9h0m.2 39.3h0m.1-34.1h0m0 8.9h0m.1-5h0m0 7.2h0m.1-10h0m.1 5.2h0m0-32h0m.1 24.7h0m0-17.7h0m.2 38.9h0m.1-19.6h0m.1-7.5h0m0-6.2h0m.3 29.9h0m.1-3.2h0m.1 8.6h0m.2 6.8h0m.2-26.1h0m.1 16.1h0m.2-7h0m0 19.2h0m.1-5.1h0m.1-1.5h0m0-27.9h0m.1 12.1h0m0-10.8h0m.3-6.3h0m.3-10.6h0m.1 12.6h0m.1 12.7h0m0-18.3h0m.2 28.4h0m.1 4.6h0m0-28.7h0m.1 11h0m.1-17.2h0m0-1.5h0m.1 39.5h0m.3-27.3h0m.2 15.3h0m.1 3h0m.1 2.6h0m.1 10.2h0m.3-16.7h0m0-22.1h0m.1 11.2h0m.1 30.4h0m0-37.1h0m.1 36.1h0m.1 16.4h0m.2-38.5h0m0-5.4h0m.1 18.2h0m0 1.5h0m.2 6h0m0-22.7h0m.1 28.6h0m.1-19h0m0 11.1h0m.3-35.2h0m.1 19.5h0m.3-9.1h0m0-4.7h0m.1 20.9h0m.1 22.1h0m.1-9.2h0m.2 2.5h0m0-9h0m.3-29.8h0m.1 20.1h0m0-29.9h0m.1 14.2h0m.1 21.8h0m.1-34.2h0m0 48.1h0m.1-29.3h0m.2-14.7h0m.1 12.5h0m.1 5.1h0m.3 5.8h0m.3-27h0m.1 30.4h0m.1-20.8h0m.2-3.2h0m.1 7.2h0m0 24.8h0m.1-14.7h0m.2 .8h0m.1-18.8h0m0 29.7h0m.2 11h0m.2-7.5h0m0-18.7h0m.1-18h0m.1 31.5h0m.1-4.4h0m.1 15.2h0m0-35.5h0m.1 6.3h0m.1 3.3h0m.1 18.1h0m.3-35.5h0m.1-2.8h0m0 9.9h0m.3 7.4h0m.2 23.6h0m.1-11.5h0m.1-24.1h0m0 28.5h0m.4-3.4h0m0-4.5h0m.1-2.2h0m0 30.6h0m.1-45.4h0m.1 34.4h0m0 2.8h0m.1-24.4h0m.1 15h0m0 18.2h0m.3-8.9h0m.2-19.1h0m.1-25.1h0m.1 10.6h0m0 8.2h0m.1 18.8h0m.3-6.2h0m0-16.9h0m.1-1.8h0m.2 3.3h0m0 24.1h0m.2-37.5h0m.3 10.7h0m.1-20h0m.1 35.1h0m.1 6.1h0m0-7.9h0m.1-15.1h0m0 36.1h0m.2-37.8h0m0-2h0m.1 15.4h0m.1 7.7h0m.1 10.5h0m.1 8.1h0m0-27.9h0m.1 24.3h0m0-30h0m.1 20.4h0m.1-18h0m.2 27.7h0m.4 4.5h0m0-25.7h0m.1 2h0m.2 11.7h0m.1 8.7h0m.1 5.3h0m.1-20.2h0m.1 3.7h0m.1 28.8h0m0-9.9h0m.1 1.4h0m0-34.5h0m.3 27.6h0m.1 10.4h0m0-18.2h0m.1 18h0m.1-19h0m.1-20.4h0m0 18.8h0m.1-37.2h0m.1 11.4h0m.1 16h0m0-13.3h0m.1 10h0m.2-22.8h0m.3 30.4h0m.1-2.8h0m.1-19.9h0m.1-12.1h0m.1 9.5h0m.1 9.9h0m0 17.4h0m.4-11.7h0m0 5.3h0m.1-24.2h0m.1 33.7h0m0-26.2h0m.1 6.5h0m.1-21.2h0m0 17.8h0m.2-19.2h0m0 35.8h0m.1-25h0m.2-5.6h0m.1 32.5h0m0-6.4h0m.2-18.8h0m0 26.3h0m.1-13.3h0m.6-32.8h0m.1 0h0m.3 5.2h0m.1 6.7h0m.2 5.3h0m.1 4.3h0m.1-12.3h0m0 1.3h0m.1-4.5h0m.1 8.6h0m.1 13.9h0m.1-4.2h0m.1 9.8h0m.2 8.4h0m0-1.7h0m.2-14.4h0m.2 19.7h0m0-9.1h0m.1-1.1h0m.1-6h0m.2 3.2h0m0 5.7h0m.1 17.4h0m.1 .5h0m.1-33.8h0m0 29.6h0m.1-3h0m0 11.5h0m.1-30.7h0m.2 40.1h0m.2-12.8h0m.4-20h0m.1 10.7h0m.1-3.6h0m.1-16.8h0m.1 22.7h0m.1-11.8h0m.1-4h0m0 19.6h0m.1-11.9h0m.1 3.4h0m.2 28.7h0m0-10.8h0m.1 1.1h0m.1-3.2h0m.2 1.9h0m0-30.8h0m.1 32.5h0m0-35.1h0m.1 22.1h0m.2-29.9h0m.1-5.2h0m.2 27.8h0m.1 14.4h0m.2-10.1h0m.1 9.6h0m0-32h0m.1 16h0m0 14.2h0m.1-16h0m.2 25.6h0m.1-29.8h0m.4-23.1h0m0 10.7h0m.1 .8h0m0 27.3h0m.2-21.6h0m0-10h0m.1 1.6h0m.3 17.1h0m0 15.2h0m.1-20h0m.1-2h0m.1 9.5h0m.2-26.5h0m.1 3.6h0m.2 9h0m.1-9.4h0m.1 22.6h0m.2 18.5h0m.1-11.7h0m0-30.3h0m.1 36.5h0m.1-15.7h0m.1-27h0m.1 38.4h0m.1-18.9h0m.1-14.4h0m0-1.2h0m.2 28.5h0m.3-19.1h0m0-2.2h0m.1 13.1h0m.2-3.4h0m.1 14.4h0m.1 2.1h0m.4-27.1h0m.1 19.6h0m.1-2.6h0m.1 16h0m.1-27.9h0m.1 3.5h0m.1 31.7h0m.1-32.9h0m.1 5h0m0 10.5h0m.1 5.7h0m.2-14.1h0m.1-25.5h0m.3 14.3h0m0 7.1h0m.1 .5h0m.1 20.5h0m.2-13.2h0m.1 36.5h0m.1-17.8h0m.1-15.8h0m.1 4.5h0m.2-28.9h0m0 8.7h0m.2 31.9h0m.1-19.8h0m.2 9.6h0m0 9.5h0m.2-3.5h0m.1-.8h0m0-3.7h0m.1 21.8h0m.1 4.3h0m0-15.5h0m.2-17h0m.1 2.3h0m.1-11.3h0m0-10.3h0m.3 13.1h0m.2-6.7h0m.1-13.9h0m.1-6.3h0m0 18.2h0m.1 29h0m.1-18.1h0m.1-8.3h0m0 19.5h0m.1-28.7h0m.1-2.5h0m.2-10.7h0m.1 30.9h0m0-29.3h0m.1 5.5h0m.2 17.8h0m0 16.3h0m.1-5.4h0m.2-18.3h0m0 10.6h0m.1 16.9h0m.1-44.6h0m0 12h0m.1-14.7h0m.3 54.2h0m.2-9.1h0m0-4.4h0m.1-1.2h0m.3-3h0m.1-28h0m.1 14.7h0m.1-5.5h0m.1-5.9h0m0 22.5h0m.1-3.5h0m.2-24.1h0m.1 35.1h0m.1-17.3h0m.1 21h0m.2 3.4h0m0-8.1h0m.2 14.5h0m.1-27.2h0m0 24.1h0m.2-32.1h0m0 39.1h0m.2-21.7h0m.1-23h0m.1 8.5h0m.3 9h0m.1-25.4h0m.1 19h0m.3 3.3h0m.3 14.2h0m0-28h0m.1 20.2h0m.1 4.2h0m.1-21.9h0m.1 29.1h0m.2 12.3h0m0-39.6h0m.1 18.5h0m0 11.3h0m.2-22.7h0m.1-23h0m.5 9.3h0m.1 19.6h0m.2 9.2h0m0-20.5h0m.1-11.3h0m0-.5h0m.1-3h0m.3 24.7h0m.1-7.1h0m.2 23.1h0m.2 2.6h0m.2-33.8h0m.1 27.9h0m0-10.2h0m.2 2.1h0m.1-6.7h0m.1-8.3h0m.2-2.5h0m.1 21.9h0m0-29.6h0m.1-4.5h0m.1 19h0m.1 2h0m.4 16.3h0m0-6.7h0m.1-38.5h0m0 8h0m.1 1.6h0m.2 23.9h0m.1-9h0m0-13.2h0m.1 42h0m.3-38h0m.1 5.5h0m.1-15.4h0m.1 41.5h0m.1-5.1h0m0-22.4h0m.1 8.2h0m0 30.3h0m.1-23.5h0m.1-2h0m.1 20.2h0m.1-34.7h0m.1-4.9h0m.1 35.8h0m0-12.6h0m.1 7.6h0m.1 10.1h0m.1-51.8h0m0 47.2h0m.1-18.9h0m0-6.5h0m.1 32.7h0m.1-31.1h0m.1 15h0m0-3.2h0m.1 22.2h0m.1-34.8h0m.1-10.2h0m.3 39.2h0m.1-8.1h0m.2 2.4h0m.3 4.3h0m0-30.3h0m.2 16h0m.1-6.9h0m.1 2.7h0m.1-6.4h0m.1-14h0m0 28.1h0m.2-30.6h0m.3 3.8h0m.1 7.6h0m.1-17.1h0m0 24.2h0m.3 5.9h0m0 15.6h0m.3-37.6h0m.2 12.4h0m.1-6.8h0m.1 26.5h0m.2 10.7h0m.1-1.5h0m.1-14.6h0m0 19.1h0m.1-15.3h0m.1 4h0m0-15.2h0m.2 21.6h0m.2-16.6h0m.3 33.9h0m0-15.1h0m.1 15.1h0m0-38.6h0m.3 18h0m.1 10.6h0m0-32h0m.2 9.4h0m.2-13.3h0m.1 10.9h0m.1-13h0m.1-4.6h0m.1 2.3h0m.2 21.3h0m.1 3.9h0m.1-12.1h0m.1 20.7h0m.1-6.4h0m.1-31.4h0m0 14.6h0m.2 25.7h0m.1-28.8h0m.2 16.1h0m.1 7.4h0m.1-36.9h0m0 26.2h0m.1 14.1h0m0-19.7h0m.2 31.8h0m.1-52.6h0m.1 41.9h0m0-18h0m.1-16.2h0m.1-4.4h0m0-6.4h0m.1 7.7h0m.1 5.7h0m.1 19.9h0m.1-13h0m0 16.3h0m.1-42h0m.2 32.2h0m0-3.6h0m.4-8.7h0m0 33.3h0m.1-9.6h0m.2-20.8h0m.2 16.4h0m.1 6.6h0m.2-39.9h0m0 24h0m.2 6.3h0m0-17.7h0m.1-13.3h0m.1 10.2h0m0 11.2h0m.1-12.7h0m.1-12.7h0m.3 23.1h0m0-28.3h0m.1 6.7h0m0 30.9h0m.1-37.4h0m.1 12.6h0m0-18.6h0m.1 9.9h0m0 4.7h0m.1 13h0m0 22.8h0m.2-15.3h0m.1-18.4h0m.1 31.2h0m.1-11.2h0m.1 4.3h0m.1-10.1h0m0-19.4h0m.3 33.6h0m0 9.4h0m.4 2.5h0m.1-19h0m.1-14.3h0m.3 24h0m.1-14.8h0m.1-10.3h0m0 14.2h0m.1-6.9h0m0-9.1h0m.1 5.8h0m0 15.7h0m.5-25.7h0m.1 37.1h0m.1-34.7h0m.1 22.6h0m.2-27.8h0m.1 25.7h0m.1-17h0m0 5.5h0m.2 16.2h0m.1-9.7h0m0 14.6h0m.2-4.3h0m0 6.5h0m.2-19.1h0m.1-5.8h0m.2 20.6h0m.1-10.8h0m0-6.4h0m.1 34.6h0m.1-39.2h0m.1 36.5h0m0-11.2h0m.3 3.1h0m.1-39.7h0m.2 9.2h0m.1-2.7h0m.1-9.9h0m.1 29.9h0m.1-23.1h0m.1-2.7h0m0 16.9h0m.1-23.3h0m.1 25.6h0m.2-9.8h0m0 27.1h0m.1-11.5h0m.1-10.5h0m.2 8.7h0m0 17.3h0m.3-7.6h0m.1 9.6h0m.1 11.4h0m0-9.7h0m.2-16.2h0m.1 7.8h0m0-22.8h0m.1 27.1h0m.1-19.7h0m.2 11.7h0m0-4.2h0m.1 .6h0m0-26.9h0m.1 16h0m.1-10.9h0m.1-4.6h0m.1 21.4h0m0-18.3h0m.2-6.9h0m.1 17.1h0m0-21.9h0m.1 15.6h0m0 1.5h0m.1-21.2h0m.3 49.3h0m.2-2.8h0m0 5.1h0m.1 1.9h0m.1-30.5h0m0 19.3h0m.2 2.4h0m.1-14h0m.1 5.4h0m.2 2.1h0m.2 22h0m.1 .7h0m.1-27.8h0m.1 25.3h0m0-17.2h0m.1 14.2h0m.1-37.4h0m0 30.6h0m.1-12.5h0m.1 22.6h0m.1-29.6h0m.3-2.4h0m0 18.9h0m.2-13.4h0m.1-21.5h0m.1 42.9h0m.3-44.9h0m.1 15.7h0m0-3.4h0m.2-16.7h0m.1 46.7h0m.1-16h0m.2-5h0m.1-6.4h0m0 15.5h0m.1-23.1h0m0 2.1h0m.2 2.9h0m.1 19.1h0m.2-4.3h0m0 7h0m.1 27.7h0m0-23.2h0m.3-34.7h0m0 39.3h0m.1-6.4h0m0-17.4h0m.1 27.3h0m.3-23.2h0m.1 16.5h0m.3-24.1h0m0 2.7h0m.2-15.1h0m.1 11.2h0m0-8.2h0m.1-7.8h0m.1 29.7h0m.2-2.5h0m0-17.3h0m.1 3.6h0m.1-23.9h0m.2 32.8h0m.1-28.7h0m.1 1.6h0m.1-.9h0m.1 14.3h0m.1 32.6h0m0-50.1h0m.1 39.2h0m.1 6.7h0m.1-3.3h0m.1 12.4h0m.2-10.8h0m0-10.7h0m.1 4.5h0m0-5.9h0m.3-17.8h0m.2 6.7h0m.1 6.5h0m.2 16.5h0m0-35.9h0m.1 3.7h0m.1 28.9h0m.1-7.6h0m0-7.9h0m.1-6.5h0m0-1.1h0m.1 8.5h0m0 10.4h0m.1 9.6h0m.1-17.2h0m.1-5.2h0m0 25h0m.1 16.7h0m0-31.6h0m.2 17.1h0m.1 14.3h0m.1-17.8h0m0 16.7h0m.1-7.9h0m.1-21.8h0m0 29.8h0m.1-53.2h0m0 40.9h0m.1 8.6h0m.1-7h0m.1 4h0m0-34.1h0m.4 29.6h0m0-11.3h0m.1-2.5h0m.1-18h0m.1-7h0m0 3.7h0m.1-6.4h0m.1 4.1h0m.2 13.4h0m.2 27.7h0m.2-20.3h0m.1 8.2h0m.1-18.7h0m0-17.2h0m.2 21h0m0 16.4h0m.2-29.4h0m.1 26.1h0m.1 8.6h0m.2-32.8h0m.3 32.8h0m.2-14.7h0m0 3.5h0m.3 9.3h0m.1-26.3h0m0-9.6h0m.1 32.2h0m.1-39.3h0m.1 20.4h0m.1-16.5h0m0 7.1h0m.1 16.1h0m.1-12.9h0m.2-16h0m0 8.4h0m.2 23.7h0m.1-8.1h0m.1-19.6h0m0 12.9h0m.1 8.4h0m.1 18.5h0m0-5h0m.2-18.7h0m.1 .6h0m.1 7.7h0m0 11.3h0m.2-14h0m.1-15.2h0m0 3.4h0m.1 31.3h0m.3-12.1h0m0 8.4h0m.3-9.3h0m0 15h0m.1-3.5h0m.1-7.4h0m.4-30.4h0m.3 15h0m0-21.8h0m.1 13.8h0m.1-2.5h0m0 18.9h0m.1-11.5h0m.1 5h0m.2 5.2h0m.1 23.5h0m0-35.3h0m.1 42.2h0m.1-9h0m.2-24.9h0m.1 21.4h0m.1 1.2h0m.2-6.8h0m.1-9.2h0m0 3.6h0m.1 6.9h0m.1-19.4h0m.1 21.5h0m.1 23.3h0m.3-28.7h0m0-20.4h0m.1 10.6h0m.1 34.3h0m.1-25.7h0m.1-7.6h0m.2 32.5h0m.1-20.3h0m0-8.1h0m.2-13.6h0m.1 29.3h0m0 1.8h0m.2-15.4h0m0-24.4h0m.1 14.8h0m.1-9.4h0m.1-22.7h0m.1 7.3h0m0 11.8h0m.1 26.6h0m.2-39h0m.1 2.3h0m.2 7.5h0m.2 13h0m.1-21.7h0m.1 42.2h0m.1-14.1h0m.2 17.7h0m.1-15h0m.1-17.4h0m.2-4.9h0m.1 16.8h0m0 8.6h0m.1-29.9h0m.1 32.8h0m.1-27.6h0m0 7.7h0m.1 2.5h0m.1 27.3h0m.2-7.2h0m.1-36.3h0m0 7.4h0m.1 38h0m.2-28.6h0m.2 12.5h0m.3 24.8h0m0-39.8h0m.1-3.1h0m.2 30.7h0m0-17h0m.1-5.9h0m.3 19.9h0m0-6.3h0m.1-5.3h0m.3 23.3h0m0-30.9h0m.1-1.8h0m0 25.4h0m.1-9.5h0m.1 11.3h0m.1-42.7h0m.1 19.3h0m0-25.9h0m.1-4.7h0m.1-.8h0m0 18.5h0m.2 14.7h0m.1 13.1h0m.1-35.1h0m.1 40.2h0m0-41h0m.2 5.8h0m.1 9.6h0m.1 14h0m.1-17.9h0m.1-29h0m.1 49.7h0m0-5.8h0m.1-20.1h0m.1-12.6h0m.1 37.3h0m.1-10.4h0m.1-6.4h0m0 19.5h0m.1-42.6h0m0 45.7h0m.2-32.3h0m.1 19.2h0m.1-37.6h0m.1 8.9h0m.2 22.1h0m0 10.8h0m.3-6.9h0m0 23.1h0m.3-5.3h0m0-29.9h0m.1 27.1h0m.1 7.7h0m.2-17h0m.2 15.3h0m0-39h0m.3 23.9h0m.2-15h0m.2 3.7h0m.1 2.2h0m.2 5.7h0m0-19.2h0m.1 5.1h0m.1 24.7h0m.1-20.4h0m.1-12.8h0m.1 10.5h0m.1 18.6h0m0-26.2h0m.1 51.9h0m.1-26.8h0m0-21.4h0m.1 50.5h0m0-11.2h0m.1-14.1h0m.1-16h0m0 3.4h0m.1 20.9h0m0 20.3h0m.1-15.4h0m0-7.6h0m.1-22.9h0m.2 26.4h0m.1 12.3h0m0-29.2h0m.1 22.8h0m.2-13.4h0m0 4.9h0m.1 17.5h0m0-1.6h0m.1-3.8h0m.1-31.6h0m.1 30.8h0m.1-13.1h0m0 14.2h0m.2-21.8h0m.1-1h0m.1-3h0m.1 15.9h0m.1-8.5h0m0-31.5h0m.1 3h0m0 16.4h0m.1-10h0m.2 .7h0m.2-29.3h0m.1 10.1h0m.1 16.8h0m0-11.2h0m.1 15.6h0m0-23.9h0m.1 26.9h0m0-11.4h0m.2-9.3h0m.1 28.7h0m0 3.7h0m.2-1.9h0m.1-1.4h0m0-6.7h0m.1-8.3h0m.4-7.2h0m0 18.8h0m.1-25.8h0m.1 43.7h0m.1-51.5h0m0 43.1h0m.1 2.7h0m.3 7.7h0m0-34.6h0m.3 24.8h0m0-17.9h0m.1 3.4h0m.2-21.2h0m.1 7h0m0 31.4h0m.2-32.1h0m.1 10.4h0m.1 25.5h0m.2-19.2h0m.1-24.2h0m.1 33h0m0-4h0m.1 12.8h0m0-14.9h0m.3-12.1h0m.2 26.6h0m.1-35.5h0m.1 4.8h0m0-3.4h0m.1 39.8h0m0-15.6h0m.2 3.3h0m.1-13.5h0m0-9.4h0m.1 26.8h0m.2 16.1h0m0-40.7h0m.1 31.4h0m.1-24.6h0m0 15.2h0m.2 .5h0m.1 21.2h0m.1-24.1h0m0-9.5h0m.2 2.7h0m0 12.3h0m.1-6.9h0m.1-4h0m0 15.6h0m.6-53.1h0m.2 7.6h0m.1-6.4h0m.1 8.1h0m0-3.1h0m.1 13.2h0m.1-8.9h0m.1-10.5h0m.2 14.7h0m.1-13.7h0m.1 26.4h0m0-5.3h0m.1 7h0m.1-9.9h0m.1 15.2h0m.1-17.4h0m0 14.3h0m.6 7h0m.1 3.2h0m.1 7.9h0m.2-2.5h0m0-15.1h0m.1 10.4h0m.1-7.7h0m0 16h0m.1-39.8h0m0 26.7h0m.1 12.6h0m0-6.2h0m.1 7.7h0m.1-4.1h0m.2-25.5h0m.1 6.4h0m.1 4.1h0m.1 6.9h0m.1-31.9h0m.2-.4h0m0 8.2h0m.1-17.1h0m0 13.7h0m.2 8.9h0m.2-2.4h0m.1-7.4h0m.2 30.7h0m.1 4.8h0m.2-33.4h0m0 23.9h0m.1-13.3h0m0 29.1h0m.1-21.5h0m.1 13.4h0m.1-19.7h0m.2 29.1h0m0-38h0m.2-10.3h0m.2 28.9h0m.2 26h0m.1-36.3h0m.1 14.8h0m.2-12.3h0m0-11.9h0m.1 7.9h0m0 10.8h0m.2 14.9h0m.1-19.7h0m0-.6h0m.1 26.7h0m.1 8.8h0m.1-43.3h0m0 7h0m.1-9.8h0m0 27.1h0m.2-4.9h0m.1-9.6h0m.1 12.3h0m0-7h0m.1 40h0m0-29.1h0m.2-25.2h0m.1 29.6h0m.1 22.2h0m.1-15.1h0m.1-38.9h0m.2 40.9h0m0-.7h0m.1-17.3h0m.1 25.6h0m.1-43.1h0m.1 43.8h0m0-31.3h0m.1 16.4h0m.1-7.7h0m.2 3.1h0m0-16.7h0m.5-19.6h0m.1 23.2h0m0-19h0m.1 24.8h0m0-2.7h0m.1-23.6h0m.1 11h0m.1-12.2h0m.1 42.4h0m0-27.3h0m.2-6.1h0m.1 22.9h0m0-13.4h0m.1-11.8h0m.2 35.3h0m.1-39.5h0m.1 13.5h0m.2 34.2h0m.1-12.4h0m.1-15.4h0m0 24.6h0m.1-19.4h0m.2-27.9h0m.3 13.3h0m.1-4.5h0m0 31.4h0m.2-19.3h0m.2 4.9h0m.1-19.6h0m.1 27.7h0m.1-22.4h0m0 24.5h0m.1-38.3h0m.4 34.9h0m0 1h0m.2-17h0m0 14.4h0m.1 10.7h0m.1-23.6h0m.2-12.6h0m0 39.5h0m.1-16.1h0m0 13.7h0m.2-23.4h0m.1 4.7h0m0 4.5h0m.1 10.8h0m.1-26.7h0m.2 1.9h0m0 16h0m.1 6h0m.1 1.3h0m0-35.8h0m.1 8.6h0m.1-2.8h0m0 17.6h0m.2-26.3h0m.2 23.4h0m0-6.7h0m.1-25h0m.2 12.5h0m.1 19.2h0m0 27.3h0m.3-58.1h0m.2 26.4h0m.1-23.7h0m.1 12.1h0m.1 21.6h0m.1-27.4h0m.2-4.8h0m0 35.1h0m.1-27.4h0m.1 36.1h0m0-27.3h0m.1 7.3h0m.1 11.4h0m.1-4.7h0m.1 7h0m.2-30.7h0m0-12.6h0m.1 25.2h0m0 22.7h0m.1-40.3h0m.2 11.6h0m0 15.3h0m.1-12.6h0m.1 15.1h0m.1-14.2h0m.1-11.5h0m.1 33.6h0m.1-16.6h0m.1-21.4h0m.2 8.3h0m0 18.7h0m.2-23.4h0m.1 31.4h0m.1-37.1h0m.2 42.8h0m.1-39.2h0m.1 16.4h0m0 25.4h0m.1-18.5h0m.1 12h0m.1-5.2h0m.3-13.6h0m0 31h0m.1-27.6h0m.2 32.4h0m.1-3.8h0m.1-24.3h0m0 22h0m.1-2.5h0m.1-15.4h0m.2-17.7h0m.4 40.9h0m0-36.5h0m.1 21.4h0m.2-11h0m0 3.3h0m.1 3.9h0m0 2h0m.2-13.1h0m.1 18.5h0m0-30.1h0m.1 1.8h0m.1 32h0m.1-39.1h0m.1 22.3h0m.3-9.6h0m.1 32.9h0m.1-32.2h0m.4 29.9h0m.2-4.1h0m0-23.7h0m.1 17.7h0m0-14.3h0m.1-14.2h0m0 4.8h0m.2 16.7h0m.1-25.8h0m.1 .4h0m.2 22.9h0m.1 13.4h0m.1-2.5h0m0 5h0m.3-23.6h0m0-13.3h0m.1-7.2h0m.3 32.6h0m.1-7h0m.3 25.6h0m0-38.5h0m.2 16.8h0m.1 31.9h0m.1-25h0m.1 11.7h0m.1-27.5h0m.1-23.8h0m0 52.6h0m.1 4.8h0m.1-31.5h0m.2 38.9h0m0-32.4h0m.1 14.2h0m0-27.5h0m.1-5.7h0m.1 53.2h0m0-24h0m.1-6.2h0m.1 15.6h0m.2-12.9h0m.1 12h0m0 15.5h0m.1-36.8h0m.1-3.1h0m.1-15.4h0m.1 33.2h0m.1-8.5h0m.1-26.1h0m0 21.9h0m.1 19.2h0m0-31.3h0m.1 2.1h0m.1-.8h0m.1 21.9h0m.1-34.3h0m.1-15.2h0m0 24.6h0m.1-11.5h0m.1 18.6h0m.1-27.6h0m.1 25.7h0m.2-9.9h0m0 2.3h0m.1 13h0m.1-23.9h0m0-1.3h0m.1 33.6h0m.1-34.5h0m.1-5.6h0m.1 43.6h0m.1-25.6h0m.1 9.6h0m.1-7.1h0m0-14.7h0m.3 4.2h0m0 5.1h0m.1 33.7h0m0-13.9h0m.1 18.9h0m.1-37.3h0m.1 47.7h0m0-52.1h0m.1 18.6h0m0 11.2h0m.2-3.6h0m.1 8.4h0m.1-31.4h0m.1 47.2h0m.2-39.9h0m.1 28.6h0m.2-26.5h0m.1 19.3h0m0 4.3h0m.1 6.5h0m.2-21.4h0m.1-6.5h0m.1-13h0m0 10.6h0m.1 3.7h0m.1-6.5h0m.1-2.6h0m.1-25.5h0m0 50.5h0m.2-12.9h0m0 9.9h0m.1-43.9h0m.1 13.6h0m0-9.6h0m.2 7.1h0m.2 10.5h0m.2-4.1h0m0 23.8h0m.1 8.8h0m.1-43.8h0m0-9.3h0m.2 40.6h0m.3-27.9h0m.1 12.6h0m0-18.6h0m.1 27.6h0m.2-16.3h0m0 33.4h0m.1 3.2h0m.3-27.1h0m.1 21.2h0m.1 4.7h0m0-14.9h0m.1-9h0m.2-7.6h0m.1 20.5h0m.1-28.5h0m.1 31.1h0m0-9.6h0m.1-3.2h0m.1-16.4h0m.1 18.2h0m.1-11.9h0m.1 28.5h0m.4-4.2h0m0-25.6h0m.1 47.8h0m.1-2.6h0m.1-7.6h0m.1-14.3h0m0 30.3h0m.2-17.6h0m.1-15.7h0m.1 29.4h0m.2-15.5h0m.1-17.2h0m.1-8.6h0m.1 1.8h0m.2 5.6h0m0 19.7h0m.1-27.1h0m0 32.2h0m.1-8.4h0m.1 22.5h0m.1-10.6h0m.1-15h0m0 9.4h0m.2-17.6h0m0 6.3h0m.1 16.9h0m0-20.1h0m.1-10.8h0m.2-7.1h0m.1-8.7h0m.1 30.5h0m.2-31.6h0m0 34.5h0m.1-12.8h0m.1-12.9h0m0-5h0m.2 1.1h0m.1-12.2h0m0 14.1h0m.1 8.4h0m.2-4.4h0m0-16.7h0m.1-14.5h0m0 39h0m.2-10.3h0m0-1.6h0m.1-9.6h0m.3 26.3h0m0-19.4h0m.1 32.5h0m0-35h0m.1 27.5h0m.2-2.1h0m.1 22.3h0m0-36.5h0m.2 28.8h0m.2-20.9h0m0 22.9h0m.1 2.9h0m0 12h0m.2-18.6h0m.1-1.1h0m.1-4.2h0m.1-10.3h0m.3-6.7h0m.4 10h0m.1 16.9h0m.1-35.7h0m0 12.7h0m.1 20h0m0-28.5h0m.1-1.8h0m.1 19.1h0m.1 18.1h0m.2-16.4h0m.1-16.4h0m0 9.1h0m.1-15.4h0m.1 30.7h0m.3 9.8h0m0-15.1h0m.1-14.6h0m.1 16.9h0m.1-6.6h0m0 28.1h0m.1 0h0m.3-12.4h0m0-29.5h0m.2 32.3h0m0-8.7h0m.1 11.2h0m.1-51.6h0m0 14.5h0m.1 12.6h0m.1 24.1h0m.1-13h0m.1-16.7h0m.1-21.5h0m.1 43.5h0m.1-19.5h0m0-11.8h0m.2 20.7h0m.2-35.2h0m.1 36.3h0m.4-30.3h0m0 25.7h0m.1-18h0m.1 15.4h0m.1-12.4h0m0 25.9h0m.1-32h0m0 10.4h0m.1-25.1h0m.2 24h0m0 21.6h0m.1 4.1h0m0-18.3h0m.1-3.4h0m0-22.2h0m.1 36.3h0m.3-5.8h0m.3-10h0m.1-24.2h0m0 63h0m.2-41.6h0m.1 15.4h0m.1-26.3h0m.2 8.7h0m.1-3.6h0m.2 23.1h0m.2-12.4h0m.2-27.8h0m.2 36.8h0m0-26.5h0m.1 22.4h0m.1-17.9h0m.1-9.9h0m.1-5.2h0m.1 49h0m.1-18.5h0m.2-2.4h0m0-11.1h0m.2 8.2h0m0 10.4h0m.1-28.2h0m.2 3.2h0m.1 11.3h0m.2 22.5h0m.3 3.2h0m.1-26.2h0m.1 17.6h0m.3-6.7h0m.1 13.3h0m0-32.5h0m.1-4.3h0m0 43.2h0m.1-2.2h0m.1-19.3h0m.1 11.4h0m0-15.1h0m.1 21.3h0m0-41.9h0m.1 12.6h0m0 17.8h0m.1-32.1h0m.1 19h0m0 4.4h0m.4-12.3h0m.5-15.7h0m0-13.8h0m.1 3.6h0m0-4.5h0m.1 7.6h0m.1 .6h0m0 1.3h0m.1 15.7h0m0-14.6h0m.1 2.5h0m0 2.1h0m.1 7.1h0m.1-5.1h0m.2-3.8h0m.2 .5h0m.2-3h0m.1 8.9h0m0 22.6h0m.1-6.7h0m.1-7.4h0m0-4.3h0m.2 17.4h0m.1-9.2h0m.1 7.2h0m0 10.1h0m.2-11.5h0m.1 12.8h0m.1 10.8h0m0-2h0m.2-.5h0m.1-5.6h0m0 14.1h0m.1-2.4h0m.1-19.7h0m.1-10.5h0m0 16.4h0m.2-21.1h0m.2-12.5h0m0 25.1h0m.3-3.6h0m.1-13.9h0m.1 29.1h0m.1-4.5h0m.2-2.9h0m.1-25.2h0m.1 7.2h0m.1 30.4h0m.1-39.4h0m.3 35.4h0m0-22.2h0m.1 4.4h0m.1-21.9h0m0 42.1h0m.1-15.6h0m.1-27h0m.2 8.8h0m.2 18.9h0m0 7.9h0m.1 1.6h0m.1-22.2h0m.2-3.5h0m.1 18.9h0m.1-7.8h0m.2-2.4h0m.1-21h0m0 16.3h0m.1 9.8h0m.1-22.6h0m.1 31h0m0-25.4h0m.4-8.4h0m.1 4.7h0m.1-6.1h0m.2 31.1h0m.1 11.9h0m.1-26.7h0m.1-6.7h0m.1 31.2h0m0 17.2h0m.3-44.7h0m0 6.9h0m.1-2.2h0m.1 31.7h0m0-26.3h0m.1 20.1h0m.2-9h0m.1 5.5h0m0-11h0m.2 9.2h0m0-22.7h0m.1-4.5h0m0 9h0m.1 6.2h0m.1 3.4h0m.1 4.7h0m.1 2h0m.1 7.5h0m.1-21.1h0m.1-16.9h0m.1-7.6h0m.1 40.2h0m.1-27.5h0m.1 34.2h0m.1-17.7h0m.4-20.6h0m.2 5.4h0m.1 4.7h0m0-2h0m.1 42.8h0m0-9h0m.3-17h0m.1 10h0m.2-7.2h0m0-14.7h0m.1 20.1h0m.2 5.8h0m.2-20.4h0m.1-2.5h0m.2 6.8h0m.1-31.3h0m.2 37.8h0m.1 2.2h0m0 5.1h0m.1-35.3h0m.1 8.3h0m.2 12.3h0m.1-16.6h0m0 23.7h0m.2-3.4h0m.1-14.8h0m0 24.6h0m.1-29.1h0m.3-10.2h0m0 22.6h0m.1-20.5h0m.3 39.3h0m0-22.6h0m.1-7.7h0m.1 35.1h0m.1-3.3h0m.2-18.3h0m0 25.9h0m.1-34.1h0m.1 20.9h0m.1 14.7h0m0-21.8h0m.1-10.1h0m.2-2h0m.1 37.7h0m0-28.2h0m.1 14.7h0m.1-16.8h0m.1 23.4h0m.1-2.9h0m0 15h0m.1-26.3h0m0 19.5h0m.1-5.2h0m.1-29.4h0m0 32.3h0m.2-14h0m0 11.4h0m.1 5.8h0m.1-10.3h0m.3-31.5h0m.1-.9h0m0 18.7h0m.1 9.3h0m.2-31.1h0m0 11.9h0m.1 2.7h0m0-9.6h0m.1-9.8h0m0-3.7h0m.1 33.2h0m.1-40.4h0m0 22.6h0m.2 21.4h0m.1-21.6h0m.2-6.9h0m.1 19.3h0m.1-2.3h0m.1 36.8h0m.2-12.2h0m.1-22.8h0m.1 14h0m0-12.2h0m.2 9.9h0m.3-20.9h0m.1 26.7h0m.2-49.6h0m.1 28h0m0-12.8h0m.1-2.2h0m.1 5h0m.1 19.1h0m0 .6h0m.1-13.5h0m0-17.2h0m.2 26.8h0m.1-8.2h0m.1-19.6h0m.1 36.8h0m.1-54.1h0m.1 52h0m.3-30.6h0m.1 .2h0m0 10.2h0m.3 10.1h0m.1 22.1h0m.1-23.9h0m0-13.8h0m.3 28.9h0m.1-3.1h0m.1 7.5h0m.2-23.4h0m.1-5.1h0m.1-5.6h0m.1 27.6h0m.1 5.7h0m0-22.2h0m.1 7.9h0m0 1.7h0m.1-6.4h0m.1 9.1h0m0-46.2h0m.1 33.5h0m.1-23.3h0m.1 16.1h0m0-21.7h0m.4 11.7h0m.1 .6h0m.1 3.6h0m.3-10.4h0m0 2.3h0m.3 1.4h0m.1 20.9h0m.1-11h0m.1 29.2h0m.1 3.7h0m0-17.7h0m.1 2.2h0m0 4.5h0m.1-30.3h0m.1 57.5h0m.1-40.4h0m0-13.2h0m.1 29.5h0m0 5.5h0m.1-13.3h0m.2 10.9h0m.1-12.8h0m0-8.9h0m.2-9.8h0m.1 15.7h0m0-11.1h0m.1-2.5h0m.1 36.1h0m.1-14.5h0m0-27.4h0m.1 14.9h0m.2-27.7h0m.1 13.9h0m.1 10.4h0m.1 14.5h0m.1 14.6h0m.1-10.3h0m0 9.6h0m.1-28h0m.1 20.5h0m0-15.7h0m.2 18.6h0m0-41.6h0m.1 51.7h0m.1-24.6h0m.1 10.7h0m.2-22.1h0m.1 37.7h0m.1-41.9h0m.1 31h0m.1 7.8h0m.1-26h0m.2 6.1h0m.3-11.1h0m.1-6h0m.1 7.2h0m.1 24.3h0m.2-11.6h0m.2-6.9h0m.1 7.9h0m0 14.7h0m.2-2.6h0m.2-6.3h0m.2 19.4h0m.1-23.6h0m.1-19.1h0m.1 27.4h0m0-15.4h0m.1 7.9h0m.1-14.1h0m.2 18.3h0m.1-27.8h0m.1 38.5h0m.3-20.2h0m.1-16.9h0m.3 36.7h0m0 4.5h0m.2-15.9h0m.1-15.7h0m0-3.9h0m.1-7.9h0m.1 21.8h0m0 3.6h0m.1-11.1h0m.2-9h0m.2 34.2h0m.1-40.4h0m0-1.6h0m.1-11.6h0m.2 27.8h0m0 3.6h0m.1 13.1h0m.2-34.9h0m.1 25.3h0m.1 9.7h0m.3-19.6h0m.1-8.9h0m.2 7.3h0m0-4.3h0m.2 18.8h0m.1-29.5h0m.1 48.3h0m0-7.7h0m.1 3.9h0m.1-22.1h0m.3-10.5h0m.1 20.4h0m.3-30.4h0m.1 33.4h0m.1-16.8h0m0 7.2h0m.1-32.7h0m.1 15h0m.2 2.2h0m.1 17.2h0m.1-35h0m.2 27.6h0m0-25.9h0m.1 36.6h0m.1-5.6h0m.2 13.4h0m.2-26.2h0m0-9.4h0m.1 12.8h0m.1 11.9h0m.1-12.9h0m.1-9h0m.2 21.4h0m.2-27h0m.1 22.7h0m.1-17.1h0m0 28.4h0m.1-31.5h0m.1-12.3h0m.2 21.7h0m.1 9h0m.1-12h0m.1 26.6h0m.2-17.5h0m0 40.8h0m.1-9.1h0m.1 1.4h0m0-22.9h0m.1-21.9h0m.1 31.4h0m0-4.2h0m.1-20.6h0m.1 33.7h0m0-3.3h0m.1-1.1h0m.1-18.8h0m0 20.8h0m.3-14.6h0m0 8.6h0m.1 4.4h0m0-26.8h0m.3 14.8h0m.1 16.7h0m0-22.2h0m.1-24.2h0m.1 31.4h0m0-14.5h0m.1 4.7h0m0-12.1h0m.1-14.2h0m.2 12.1h0m.1 20.1h0m0-14.1h0m.1 20.3h0m.3 1.8h0m0-33.7h0m.1 22.7h0m.1-14.6h0m.2 10.2h0m.2-22.7h0m.1 8.2h0m.1 33.5h0m0-35.2h0m.3 12.7h0m.1 24h0m.2-46.6h0m.1 31.7h0m.2-5.7h0m.1-10h0m.1 2.9h0m0-14.6h0m.1 32.6h0m0 7.7h0m.1-30.3h0m.2 21.5h0m.1-25.7h0m.1 29.4h0m.1 10h0m0-21.5h0m.1-31.3h0m0 10.5h0m.1-17.9h0m.2 39.3h0m0 5.9h0m.3-14.1h0m.1 5.9h0m.1-25.6h0m0 17h0m.2 26.1h0m.1-20.2h0m.1-12.3h0m0 22.3h0m.1-20.7h0m.1 33.4h0m.1-7.9h0m0 16.4h0m.1-34.6h0m.1-13.5h0m.2 24.1h0m.1-18.6h0m.1 29.2h0m.1-42.2h0m.2 17.1h0m.3 19.4h0m.1-19.3h0m.1 11h0m.1 6.1h0m0 16.2h0m.1-47.4h0m0 6.7h0m.3 11.1h0m.2 15.7h0m.1 11.5h0m.1-24.9h0m.1 22.1h0m.2-26.6h0m.1 20.4h0m0 25.6h0m.3-22.2h0m.1-31.5h0m0 12.2h0m.1 3.6h0m0 3.5h0m.2 2.5h0m.1 31.9h0m.1-24.2h0m.1-26.4h0m.1 42.3h0m.2-8h0m.2 1.1h0m.2-3.6h0m.2-8.9h0m.2-1.1h0m.2-33.8h0m0 14.5h0m.1 12.2h0m.1 15.2h0m.1-13.7h0m.1-9.3h0m.1 12.9h0m.2-20.9h0m0 6.4h0m.1 6.3h0m0-15.6h0m.1 30.6h0m.1-25.8h0m.1 21.4h0m.1-12.8h0m0-1.6h0m.1 8.3h0m.1-3h0m.2-22.8h0m.3 2.5h0m.1 32.3h0m.3-20.1h0m.1-26.4h0m0 54.8h0m.3-47h0m.2 1.7h0m0 32.2h0m.2-22.6h0m.1-12.2h0m0 32.6h0m.2 20.9h0m.1-39.5h0m.1 29h0m.1-5h0m.1-9.8h0m.1-12.2h0m0 3.9h0m.1 22.4h0m.1 5.2h0m.1-25.7h0m0 3.2h0m.2-22.5h0m0 12.7h0m.1-14.1h0m.1 30.3h0m.3-24.3h0m.1 38h0m.1-7.6h0m.1-20.3h0m.1 24h0m.1 7.7h0m.2-37.2h0m.1 16.2h0m.1-4.6h0m.1-20.9h0m.1-4.7h0m0 31.8h0m.3-19.2h0m.2 17.6h0m.1-21.4h0m.1 12.1h0m0-5.2h0m.1 8.8h0m.1 2.9h0m.1-22.4h0m.1-13.1h0m0 49.9h0m.1 1.5h0m.1-45.9h0m0 58.6h0m.1-44.9h0m0 24h0m.1-35.3h0m0 42.5h0m.3-6.2h0m0-16.9h0m.1 14.6h0m.1-2.4h0m.1 17h0m.2-22.4h0m0 29.7h0m.1-33.1h0m.2-3h0m0-4.9h0m.1 24.3h0m0 6.3h0m.1 9.9h0m.1 12.2h0m.1-15.9h0m.1-2.9h0m.2-41.3h0m.1 27.8h0m0-5.1h0m.1-13.6h0m.2 14.7h0m0 14h0m.1 7.2h0m0-40.3h0m.1 8.4h0m.1-15.1h0m.3 47.6h0m.1-25.1h0m.2 11.6h0m.2-11.1h0m0-3.8h0m.3 13.3h0m.2-28.5h0m.1 23.6h0m.1 19.4h0m.1-3.2h0m0-29.8h0m.1-3.4h0m0 5.8h0m.1 25.4h0m0-41.9h0m.2 9.1h0m.1 22.4h0m.1 1.7h0m.2 18.6h0m.2-14.2h0m0 1.2h0m.1-38.6h0m.1 35.9h0m0 4.4h0m.1-11.1h0m.2-4h0m.2-3.8h0m0-15.2h0m.2 9.9h0m.1-7.9h0m.1-4.2h0m.1 5.5h0m.1-2.9h0m0 6.5h0m.1 6h0m.1 20.4h0m0-6.7h0m.1-6.8h0m.1-3h0m.1 20.8h0m.2-30h0m.4 19.2h0m.1-3.2h0m.1-27.8h0m.3 17.1h0m.2 9.7h0m.2-11.2h0m.1 19.6h0m0-31.9h0m.1 42.2h0m0-12.7h0m.2 18.3h0m0 5.2h0m.1-10.6h0m0-25.6h0m.1 27.7h0m.1-26.1h0m0-14.3h0m.1-6h0m.1 8.5h0m0 3.4h0m.1 41.7h0m.2-59.1h0m.1 31.5h0m.1-2.8h0m.1-8.4h0m.2 19.2h0m0-29.5h0m.1-1.6h0m.1-4.5h0m.2 7.1h0m.1 27.4h0m.1-4.5h0m.1-17h0m.1 4.9h0m.2-17.8h0m.1 24.5h0m.1 15.7h0m.2-8.7h0m.1 5.6h0m.4-7.8h0m.1 12h0m.1-2.1h0m.1-29.2h0m.1 31.5h0m.1-21.3h0m.1-5.7h0m.1 19.6h0m0-11.8h0m.1-2.1h0m0 3.1h0m.1 13.9h0m.2 10.3h0m.1-20.4h0m0-40.2h0m.2 21.3h0m0-1.2h0m.1 24.3h0m.1-31.6h0m.1 11.5h0m.1 5.5h0m.2-1.5h0m.2-1.8h0m0-20.4h0m.1 10.5h0m.1 22.2h0m.1 8.3h0m.1-36.2h0m0 31.5h0m.1-26.3h0m0 19.9h0m.1 29.3h0m.1-14h0m.2-29.2h0m.2 9.5h0m.1-18.8h0m.1 7.4h0m.2 23.5h0m.1 12.5h0m.1-9.3h0m0 3.5h0m.2-34.6h0m.1 9.7h0m.2 13.5h0m.1 1.7h0m.2-7.3h0m0-4h0m.1-9.5h0m.1 16.5h0m.4 5.9h0m0-11.5h0m.3 1.6h0m.1-9.5h0m0 26.8h0m.2 12.6h0m.1-35.6h0m.1 43.4h0m0-34.1h0m.1 16.5h0m.1-6.2h0m0 12.9h0m.1-39.1h0m.1 53.1h0m0-6.4h0m.2-11.7h0m.1-15.5h0m.1 9.4h0m.1 .9h0m.2 13.6h0m.3-50.5h0m.1 32h0m.1 17.2h0m0-37.2h0m.1 10.8h0m0 3.1h0m.1-10.1h0m.1-9.4h0m.1 22.9h0m.1-16.3h0m.1 30.2h0m.1-24.2h0m.2 1.1h0m.1-25h0m.1 5.6h0m.1-2h0m.1 6.4h0m.2 20.2h0m.2-8.6h0m.1 19.9h0m.1-37h0m0 9.3h0m.1 25.2h0m.2-6.7h0m.2-32.3h0m0 18h0m.1 4.2h0m.1 2.8h0m0 30.1h0m.1-16.2h0m0-8.7h0m.1 13h0m0 4.7h0m.2-34.3h0m.1 20.6h0m0 2.7h0m.1-25.3h0m0 5h0m.1 21.7h0m.1-12.1h0m.5-36.1h0m0-7h0m.1 23.1h0m0-7.5h0m.1-3.2h0m.1-10.9h0m0 7.2h0m.1-5h0m0 13.4h0m.1 7.1h0m.1-8.2h0m.2 8.4h0m0 .6h0m.2-2h0m.1 17.2h0m.1-13.5h0m.1-5.6h0m.1-2.1h0m.2 17.1h0m.1-8.1h0m.1 4.9h0m0-2.8h0m.1 19.9h0m0-13h0m.1 16.1h0m.1-20.9h0m.1 15h0m.1-28.8h0m.1 26.4h0m0 24.5h0m.2-28h0m0 12.2h0m.4 6.7h0m.2-22h0m.1 4.6h0m.1 11.1h0m.1 14.4h0m.1-7h0m.2-38.7h0m.1 45h0m.1-16.7h0m.1 8h0m.1-33h0m0 36.6h0m.1-41.7h0m.1 26.3h0m.1-12.9h0m0 15.4h0m.2 10.6h0m.2-28h0m.1 3.5h0m0 41.7h0m.2-32.9h0m.1-20.1h0m.1-7.2h0m0 9.5h0m.2 13.3h0m.1 8.8h0m0 2.7h0m.1 15.4h0m0-13.4h0m.2-18.4h0m.1 6.9h0m.3 30.4h0m.1-10h0m.1-24.4h0m.1 18.9h0m.1 21.2h0m.2-7.8h0m0-14.6h0m.1 12h0m.2-8.7h0m0 5.2h0m.1-10.4h0m.3-22h0m0 15.9h0m.2-2.4h0m.2-23.6h0m.1 20.3h0m0 7.1h0m.2-8.4h0m0 23.2h0m.1-31.3h0m0 46.1h0m.1-2.3h0m.1-40.5h0m.1 20.4h0m0-4.7h0m.1 21h0m.2-6.1h0m.2-28.1h0m.1 29h0m0 3.2h0m.2-21.4h0m0-20.5h0m.1 4.8h0m.1 26.9h0m0-15.9h0m.1-1.4h0m.1 13.4h0m0-4h0m.3 3h0m.2 16.5h0m0-12.8h0m.3-8h0m0-4.9h0m.1-19.2h0m0 36h0m.3-23.8h0m.1-3h0m.1-4h0m.1 21.9h0m0-24h0m.1-13.8h0m0 9.7h0m.4 15.7h0m0-3h0m.1-19.9h0m.1 9.3h0m.1-13.7h0m.1 6h0m.2 12.9h0m.1 15.9h0m0 16.5h0m.3-22.6h0m.1 18.2h0m0 6.2h0m.1-21.7h0m.2 6.9h0m.1 4.5h0m0 2.6h0m.1 5.8h0m.1-22.3h0m.1 21.5h0m.1-28.3h0m0-4.2h0m.1-12.6h0m0 38.7h0m.1-31.9h0m.1-4.8h0m.2 7.3h0m.1 3.7h0m.1-9h0m.2 1.2h0m.2 14.8h0m0 8.2h0m.2 1.6h0m0-37.8h0m.1 7.8h0m.2 33.3h0m.1-17.1h0m.2-3.6h0m.2-9.9h0m.1 17.5h0m.2-2.5h0m.1-7.1h0m.2 14.9h0m.1 2.6h0m.1-20.4h0m.3 8.3h0m0-15.1h0m.1 32.9h0m.1-35.9h0m0-2.6h0m.1-2.5h0m0-2.4h0m.1 32.4h0m.2 18.2h0m.1-33.4h0m.1 23.9h0m.4-17.8h0m.3-6.6h0m0 20.1h0m.1 14.5h0m.1-42h0m.2 19.2h0m0-14.9h0m.1-.8h0m.1 17.2h0m.1 14.8h0m.2-18.8h0m.1 7.5h0m.1-13.4h0m.1-13.2h0m.1 46.2h0m.2-11.3h0m0-19.5h0m.1 23.6h0m.2-31.2h0m.1 33.6h0m.3-11h0m0 14.5h0m.1-33.6h0m0 25.7h0m.3-9.2h0m.1-29.6h0m.1 35.4h0m.1-28.6h0m.1 18.8h0m0-20.4h0m.1 39.9h0m.1-25h0m.1 2.6h0m.1 19.1h0m.1-27.1h0m.1-12.3h0m.1 6.1h0m.2 22.9h0m0-20.1h0m.1 39.3h0m.1-32.5h0m.2 15.6h0m.1-16.3h0m0 8.1h0m.2 1.7h0m0-5.6h0m.1-13.7h0m.2 28.8h0m.1 8.2h0m.1-6h0m.3-34h0m0 6.4h0m.3 32.7h0m.2-15.9h0m.2 4.1h0m.2 8.3h0m.1-26.4h0m.1-4.2h0m0 4.4h0m.1 9h0m.1-3.1h0m0 24.6h0m.2-8.6h0m.3-11.1h0m.1 21.7h0m.1-7.9h0m0-21.5h0m.1 12.6h0m0 22.1h0m.1-52.1h0m.1 7.9h0m.1 27h0m.1-14.7h0m.2-8.9h0m0-5h0m.1 8.7h0m.4 13.1h0m.1 4.7h0m.1 8.5h0m.1-18h0m.1 6.4h0m.2 17.5h0m.1-11.2h0m0-23h0m.1 4.8h0m.1 8.1h0m.2-2h0m.3-18.4h0m.1 42.2h0m.1-26.1h0m0-11.5h0m.1-10.5h0m.1 6.9h0m0 1.2h0m.2 26.1h0m.1-45.7h0m.1 54.9h0m0-3.7h0m.1-1.6h0m0 16.3h0m.1-25.9h0m0-11.4h0m.1 34.9h0m.1 15.3h0m.1-23h0m.2-30h0m.3 17h0m.1-13.4h0m.2 25.5h0m0-19.9h0m.2 18.3h0m0-29.9h0m.2 14.8h0m.2-12h0m0-11.7h0m.1 33.3h0m.1-7h0m0-9.6h0m.1 26.4h0m.1 8.2h0m0-6.4h0m.1-22.3h0m.1 6.7h0m.1 6.1h0m.2-4.6h0m0-28.8h0m.3 13.4h0m.1-15.8h0m.1 10.4h0m0 9.6h0m.1-3.6h0m.1-11.5h0m0 19.1h0m.1-17.3h0m0-13.2h0m.2 52.4h0m.1-25.9h0m0 18.2h0m.4 1.9h0m.1 13.7h0m.1-28.9h0m.1 3.1h0m.1 13.2h0m.1-10.7h0m0 3.2h0m.2 2.7h0m0 12.3h0m.2-43.8h0m.3 4.4h0m.1 38.7h0m.1-47.1h0m.1 18.5h0m.2 2.2h0m.3-19.4h0m.1-3h0m.1 7.2h0m.1 21.7h0m0-11.1h0m.1-1.7h0m.1 20.6h0m.1-22.9h0m.1 19.3h0m.1-7h0m.1 15.2h0m.1-38.3h0m.1 31.6h0m0-36.6h0m.2 32.6h0m.1-6h0m.1 15h0m.1-30h0m.3 10.3h0m0-27.4h0m.3 35.9h0m.1-22.5h0m.2 17.9h0m.1-9.8h0m.1-2.2h0m.1 4.2h0m.2 23.7h0m0-21h0m.1-19h0m.2-1.2h0m.1 9h0m0 33.6h0m.1-39.6h0m0-12.6h0m.1 19.4h0m.1-3.9h0m.1-1.4h0m0 30.3h0m.1 4h0m.1 18.9h0m.1-4h0m.1-21.6h0m0-9.3h0m.3 22.6h0m0 10.5h0m.1-39.2h0m.2 27.5h0m.1-15.2h0m.2 26.7h0m.1-40.7h0m.2 21.2h0m.1-10.1h0m.1-6.8h0m.1-7.5h0m.1 29.2h0m.1-18.9h0m.1 12.1h0m.2-33.7h0m0 25.1h0m.1-14.4h0m.2 20.6h0m.2-25h0m.1 10.5h0m.1-12.9h0m.1 34.5h0m.1-18.6h0m.5 3.4h0m.2-.7h0m.1-8.5h0m.1 38.3h0m.1-36.6h0m.1 12.3h0m0 15.7h0m.3-7.4h0m0-10.2h0m.1 7.8h0m.1-24.7h0m.1 30.9h0m.1 24.3h0m.1-32.9h0m0 28.3h0m.1-47.3h0m.3 6.6h0m0-9.9h0m.2 53h0m.1-5.3h0m.1-2.5h0m0-26.6h0m.2 17.9h0m0 1.6h0m.3-10.5h0m.1 13.2h0m0-28.1h0m.1 20.8h0m0-26h0m.2 7h0m.2 3.3h0m0 5.9h0m.1-13.7h0m.1 27h0m0 2.8h0m.1-33.4h0m0 36.6h0m.1-28.6h0m.1-10.9h0m.1 51.2h0m.2-29.6h0m.1 3.2h0m.1-7.2h0m.1 26.2h0m.2-16.5h0m.1-12.8h0m.1-16.4h0m0 48.9h0m.1-36.5h0m0 8h0m.1 22.4h0m.1 3h0m.1-5.7h0m0 3.7h0m.4-8.1h0m0-2.9h0m.1-7h0m.1 6.1h0m.1 7.4h0m.1-10.5h0m0-22.9h0m.2 1.3h0m0-7.8h0m.1 12.8h0m.1-3.1h0m.1-8.2h0m.1 14.1h0m0 2.8h0m.2 5.7h0m0-37.3h0m.1 16.3h0m.1-13.8h0m.1 31.5h0m0-22.9h0m.1-6.5h0m.1 .8h0m.2 3.1h0m.1 28h0m0 12h0m.1-22.3h0m.1-3.8h0m.1-3.8h0m.1 38.2h0m.2-11.6h0m0-4h0m.2-10.5h0m.1 21.3h0m.1 5.6h0m.1 3.3h0m.1-9.9h0m.1-11.4h0m.1-5.4h0m.2 22.7h0m.1-10h0m.1-9.2h0m0-10.6h0m.1-11.4h0m.2 27.2h0m.1-4.4h0m.1 11.9h0m.2-38.5h0m0 6.1h0m.1 5.6h0m.1 39.9h0m0-5h0m.1-20.3h0m.1 4.3h0m.1 6.4h0m0-5.2h0m.1-13.6h0m.2-1.1h0m.1-8.8h0m0 12.5h0m.1-30.4h0m.1 52.7h0m.1-8.4h0m0-24.4h0m.1 12.1h0m0 1.5h0m.1 11.7h0m0-33.3h0m.1-2.4h0m.1-3h0m.1 16.5h0m.6-26.5h0m.1-16.5h0m0 4.9h0m.1 10.6h0m0 12.5h0m.1-4.1h0m.1-12.3h0m0 10.7h0m.2-.2h0m0-4.1h0m.1-5.9h0m.1 3.8h0m.3 20.3h0m.1-2.7h0m.2 11.1h0m.2 5.3h0m.1-2.1h0m0-.6h0m.1-9.6h0m0 2.9h0m.3 1.4h0m.1-5.3h0m.1-10h0m.1-3.3h0m0 29.5h0m.1-22.3h0m.1 7.6h0m.2 26.9h0m0-6.1h0m.1-26.1h0m.1-3.3h0m.1 27.1h0m.1-2.9h0m.2 6.5h0m.1 4h0m.1-16.6h0m.1 22.1h0m.2-21.1h0m0 25.1h0m.1 1.6h0m.1-13.9h0m.1 17.8h0m.1-25.5h0m.1 11.2h0m0-28.6h0m.1 8.3h0m.2 6.4h0m.1 20.1h0m.1-30.6h0m0 28.2h0m.1-2.5h0m.1-22.6h0m0 30.1h0m.1-2.3h0m.1 15.8h0m0-48.8h0m.1 7.3h0m.1 11.9h0m.1-27h0m.4 29.2h0m.2-24.6h0m.1 4.7h0m.1 15.5h0m.1-22h0m.1 14.7h0m.1 13.7h0m.1-10.2h0m0-9.3h0m.1 15.5h0m.1 11.7h0m.2-3.1h0m.2-9.8h0m.1-20.5h0m.1 28.4h0m.1-18.4h0m.1-12.3h0m0 40.2h0m.1-29.7h0m.3 4.2h0m.1 7.1h0m0-1h0m.3-3.9h0m.1 13.6h0m0-3.8h0m.1-8.5h0m.3-35.7h0m.2 46.1h0m.1-21.8h0m.1-11.4h0m.1 12.4h0m.1-21.6h0m0 6.9h0m.1 47.7h0m.1-40h0m.2 10h0m.1-12.6h0m.1-13.8h0m.1 5.3h0m.1 23.3h0m.1 11.4h0m.1-22.3h0m.1 18.9h0m.1 6.3h0m.1-23.5h0m.1 13.5h0m0-.6h0m.2 19.8h0m0-21.7h0m.1 21.3h0m.1-44.1h0m0 40.4h0m.2 3.6h0m.1-25h0m0-13.7h0m.1 2.8h0m0 28.5h0m.2-23.2h0m.1-11.6h0m.2 29.5h0m.1 6h0m.1-10.7h0m.2-10.3h0m.3-15h0m.1 11.2h0m0 2.5h0m.2-18.3h0m.1 11.5h0m.1 3h0m0-13.6h0m.1 4.9h0m0 14.2h0m.1 16.6h0m0-28.4h0m.2 24.5h0m.1-8.5h0m0 4.4h0m.1 12.1h0m0-7.5h0m.1 2.2h0m.1-36.2h0m0 13.4h0m.1 9.5h0m0 4.3h0m.1 1.3h0m0-4.7h0m1.8 139.5h0m1 7.3h0m3.6-.7h0m.1-.5h0m1.2 .5h0m.7 1.5h0m.4-5.3h0m.9 5.3h0m.6-2.8h0m.5-6.9h0m1.1 7.9h0m.3 1.8h0m1.9-3.7h0m.8-2.9h0m.9 6.8h0m.6-7h0" stroke="#000" stroke-width="3.6" stroke-linecap="round" clip-path="url(#c2)"/>
<path d="M339.8 660.8h5.6l-2.8 5.0zM463.4 660.8h5.6l-2.8 5.0zM558.4 660.8h5.6l-2.8 5.0zM601.4 660.8h5.6l-2.8 5.0zM781.3 660.8h5.6l-2.8 5.0zM1236.3 660.8h5.6l-2.8 5.0zM1261.5 660.8h5.6l-2.8 5.0z" fill="#ffa500"/>
<path d="M1282.7 660.8h5.6l-2.8 5.0zM1283.2 660.8h5.6l-2.8 5.0zM1283.7 660.8h5.6l-2.8 5.0zM1284.2 660.8h5.6l-2.8 5.0zM1284.7 660.8h5.6l-2.8 5.0zM1285.2 660.8h5.6l-2.8 5.0zM1285.7 660.8h5.6l-2.8 5.0zM1286.2 660.8h5.6l-2.8 5.0zM1286.7 660.8h5.6l-2.8 5.0zM1287.2 660.8h5.6l-2.8 5.0zM1287.7 660.8h5.6l-2.8 5.0zM1288.2 660.8h5.6l-2.8 5.0zM1288.7 660.8h5.6l-2.8 5.0zM1289.2 660.8h5.6l-2.8 5.0zM1289.7 660.8h5.6l-2.8 5.0zM1290.2 660.8h5.6l-2.8 5.0zM1290.7 660.8h5.6l-2.8 5.0zM1291.2 660.8h5.6l-2.8 5.0zM1291.7 660.8h5.6l-2.8 5.0zM1292.2 660.8h5.6l-2.8 5.0zM1292.7 660.8h5.6l-2.8 5.0zM1293.2 660.8h5.6l-2.8 5.0zM1293.7 660.8h5.6l-2.8 5.0zM1294.2 660.8h5.6l-2.8 5.0zM1294.7 660.8h5.6l-2.8 5.0zM1295.2 660.8h5.6l-2.8 5.0zM1295.7 660.8h5.6l-2.8 5.0zM1296.2 660.8h5.6l-2.8 5.0zM1296.7 660.8h5.6l-2.8 5.0zM1297.2 660.8h5.6l-2.8 5.0zM1297.7 660.8h5.6l-2.8 5.0zM1298.2 660.8h5.6l-2.8 5.0zM1298.7 660.8h5.6l-2.8 5.0zM1299.2 660.8h5.6l-2.8 5.0zM1299.7 660.8h5.6l-2.8 5.0zM1300.2 660.8h5.6l-2.8 5.0z" fill="#000"/>
<path d="M1284.7 655.5a1.8 1.8 0 1 0 3.6 0a1.8 1.8 0 1 0 -3.6 0M1292.7 655.5a1.8 1.8 0 1 0 3.6 0a1.8 1.8 0 1 0 -3.6 0M1299.6 651.5a1.8 1.8 0 1 0 3.6 0a1.8 1.8 0 1 0 -3.6 0" fill="#000"/>
<path d="M1260.6 483.4a1.8 1.8 0 1 0 3.6 0a1.8 1.8 0 1 0 -3.6 0" fill="#000"/>
<rect x="105.5" y="499.1" width="1255.2" height="48.7" fill="#ff0000" fill-opacity="0.11"/>
<rect x="162.2" y="505.6" width="1125.5" height="31.5" fill="#ffa500" fill-opacity="0.13"/>
<path d="M162.2 521.2H1287.7" stroke="#ffa500" stroke-width="2.08"/>
<path d="M105.5 522.9H1360.7" stroke="#ff0000" stroke-width="2.08"/>
<path d="M171.6 477.7a1.9 1.9 0 1 0 3.8 0a1.9 1.9 0 1 0 -3.8 0M166.5 565.1a1.9 1.9 0 1 0 3.8 0a1.9 1.9 0 1 0 -3.8 0M178.4 585.9a1.9 1.9 0 1 0 3.8 0a1.9 1.9 0 1 0 -3.8 0M261.7 476.5a1.9 1.9 0 1 0 3.8 0a1.9 1.9 0 1 0 -3.8 0M265.2 563.9a1.9 1.9 0 1 0 3.8 0a1.9 1.9 0 1 0 -3.8 0M273.1 571.6a1.9 1.9 0 1 0 3.8 0a1.9 1.9 0 1 0 -3.8 0M287.4 567.0a1.9 1.9 0 1 0 3.8 0a1.9 1.9 0 1 0 -3.8 0M302.3 578.7a1.9 1.9 0 1 0 3.8 0a1.9 1.9 0 1 0 -3.8 0M317.7 477.7a1.9 1.9 0 1 0 3.8 0a1.9 1.9 0 1 0 -3.8 0M332.8 565.1a1.9 1.9 0 1 0 3.8 0a1.9 1.9 0 1 0 -3.8 0M364.5 576.8a1.9 1.9 0 1 0 3.8 0a1.9 1.9 0 1 0 -3.8 0M386.1 563.9a1.9 1.9 0 1 0 3.8 0a1.9 1.9 0 1 0 -3.8 0M400.5 473.2a1.9 1.9 0 1 0 3.8 0a1.9 1.9 0 1 0 -3.8 0M411.8 565.1a1.9 1.9 0 1 0 3.8 0a1.9 1.9 0 1 0 -3.8 0M417.8 569.6a1.9 1.9 0 1 0 3.8 0a1.9 1.9 0 1 0 -3.8 0M456.5 473.2a1.9 1.9 0 1 0 3.8 0a1.9 1.9 0 1 0 -3.8 0M525.2 581.4a1.9 1.9 0 1 0 3.8 0a1.9 1.9 0 1 0 -3.8 0M539.5 477.7a1.9 1.9 0 1 0 3.8 0a1.9 1.9 0 1 0 -3.8 0M542.2 567.0a1.9 1.9 0 1 0 3.8 0a1.9 1.9 0 1 0 -3.8 0M584.2 573.5a1.9 1.9 0 1 0 3.8 0a1.9 1.9 0 1 0 -3.8 0M592.3 571.6a1.9 1.9 0 1 0 3.8 0a1.9 1.9 0 1 0 -3.8 0M595.5 481.1a1.9 1.9 0 1 0 3.8 0a1.9 1.9 0 1 0 -3.8 0M609.3 567.0a1.9 1.9 0 1 0 3.8 0a1.9 1.9 0 1 0 -3.8 0M654.5 477.7a1.9 1.9 0 1 0 3.8 0a1.9 1.9 0 1 0 -3.8 0M663.4 571.6a1.9 1.9 0 1 0 3.8 0a1.9 1.9 0 1 0 -3.8 0M673.4 569.6a1.9 1.9 0 1 0 3.8 0a1.9 1.9 0 1 0 -3.8 0M737.3 473.2a1.9 1.9 0 1 0 3.8 0a1.9 1.9 0 1 0 -3.8 0M782.2 570.4a1.9 1.9 0 1 0 3.8 0a1.9 1.9 0 1 0 -3.8 0M793.0 475.8a1.9 1.9 0 1 0 3.8 0a1.9 1.9 0 1 0 -3.8 0M799.2 614.4a1.9 1.9 0 1 0 3.8 0a1.9 1.9 0 1 0 -3.8 0M808.4 631.2a1.9 1.9 0 1 0 3.8 0a1.9 1.9 0 1 0 -3.8 0M834.4 567.0a1.9 1.9 0 1 0 3.8 0a1.9 1.9 0 1 0 -3.8 0M847.1 602.7a1.9 1.9 0 1 0 3.8 0a1.9 1.9 0 1 0 -3.8 0M869.3 567.0a1.9 1.9 0 1 0 3.8 0a1.9 1.9 0 1 0 -3.8 0M876.3 477.7a1.9 1.9 0 1 0 3.8 0a1.9 1.9 0 1 0 -3.8 0M886.3 583.3a1.9 1.9 0 1 0 3.8 0a1.9 1.9 0 1 0 -3.8 0M889.6 562.0a1.9 1.9 0 1 0 3.8 0a1.9 1.9 0 1 0 -3.8 0M893.1 631.2a1.9 1.9 0 1 0 3.8 0a1.9 1.9 0 1 0 -3.8 0M932.3 471.3a1.9 1.9 0 1 0 3.8 0a1.9 1.9 0 1 0 -3.8 0M969.6 566.5a1.9 1.9 0 1 0 3.8 0a1.9 1.9 0 1 0 -3.8 0M982.4 479.6a1.9 1.9 0 1 0 3.8 0a1.9 1.9 0 1 0 -3.8 0M1066.2 576.8a1.9 1.9 0 1 0 3.8 0a1.9 1.9 0 1 0 -3.8 0M1056.5 643.6a1.9 1.9 0 1 0 3.8 0a1.9 1.9 0 1 0 -3.8 0M1074.1 481.1a1.9 1.9 0 1 0 3.8 0a1.9 1.9 0 1 0 -3.8 0M1085.2 565.1a1.9 1.9 0 1 0 3.8 0a1.9 1.9 0 1 0 -3.8 0M1119.5 563.9a1.9 1.9 0 1 0 3.8 0a1.9 1.9 0 1 0 -3.8 0M1128.2 612.5a1.9 1.9 0 1 0 3.8 0a1.9 1.9 0 1 0 -3.8 0M1130.4 467.9a1.9 1.9 0 1 0 3.8 0a1.9 1.9 0 1 0 -3.8 0M1133.1 563.9a1.9 1.9 0 1 0 3.8 0a1.9 1.9 0 1 0 -3.8 0M1135.8 563.9a1.9 1.9 0 1 0 3.8 0a1.9 1.9 0 1 0 -3.8 0M1139.3 585.9a1.9 1.9 0 1 0 3.8 0a1.9 1.9 0 1 0 -3.8 0M1208.3 563.9a1.9 1.9 0 1 0 3.8 0a1.9 1.9 0 1 0 -3.8 0M1213.4 472.5a1.9 1.9 0 1 0 3.8 0a1.9 1.9 0 1 0 -3.8 0M1223.7 569.6a1.9 1.9 0 1 0 3.8 0a1.9 1.9 0 1 0 -3.8 0M1234.5 562.0a1.9 1.9 0 1 0 3.8 0a1.9 1.9 0 1 0 -3.8 0M1252.1 477.7a1.9 1.9 0 1 0 3.8 0a1.9 1.9 0 1 0 -3.8 0M1269.1 469.3a1.9 1.9 0 1 0 3.8 0a1.9 1.9 0 1 0 -3.8 0M1279.1 633.8a1.9 1.9 0 1 0 3.8 0a1.9 1.9 0 1 0 -3.8 0M262.3 482.0a1.9 1.9 0 1 0 3.8 0a1.9 1.9 0 1 0 -3.8 0M318.3 483.2a1.9 1.9 0 1 0 3.8 0a1.9 1.9 0 1 0 -3.8 0M401.1 478.7a1.9 1.9 0 1 0 3.8 0a1.9 1.9 0 1 0 -3.8 0M457.1 478.7a1.9 1.9 0 1 0 3.8 0a1.9 1.9 0 1 0 -3.8 0M540.1 483.2a1.9 1.9 0 1 0 3.8 0a1.9 1.9 0 1 0 -3.8 0M596.1 486.6a1.9 1.9 0 1 0 3.8 0a1.9 1.9 0 1 0 -3.8 0M655.1 483.2a1.9 1.9 0 1 0 3.8 0a1.9 1.9 0 1 0 -3.8 0M737.9 478.7a1.9 1.9 0 1 0 3.8 0a1.9 1.9 0 1 0 -3.8 0M793.6 481.3a1.9 1.9 0 1 0 3.8 0a1.9 1.9 0 1 0 -3.8 0M876.9 483.2a1.9 1.9 0 1 0 3.8 0a1.9 1.9 0 1 0 -3.8 0M932.9 476.8a1.9 1.9 0 1 0 3.8 0a1.9 1.9 0 1 0 -3.8 0M983.0 485.1a1.9 1.9 0 1 0 3.8 0a1.9 1.9 0 1 0 -3.8 0M1074.7 486.6a1.9 1.9 0 1 0 3.8 0a1.9 1.9 0 1 0 -3.8 0M1131.0 473.4a1.9 1.9 0 1 0 3.8 0a1.9 1.9 0 1 0 -3.8 0M1214.0 478.0a1.9 1.9 0 1 0 3.8 0a1.9 1.9 0 1 0 -3.8 0M1269.7 474.9a1.9 1.9 0 1 0 3.8 0a1.9 1.9 0 1 0 -3.8 0" fill="#ffa500"/>
<text x="702.81" y="656.80" font-size="14.72" textLength="43.33" lengthAdjust="spacingAndGlyphs" fill="#000">11575</text>
<text x="1272.93" y="636.80" font-size="14.76" textLength="43.34" lengthAdjust="spacingAndGlyphs" fill="#000">46781</text>
<path d="M162.0 666.0V380.5M1286.0 666.0V380.5M1303.0 666.0V380.5" stroke="#800080" stroke-width="2.08" stroke-dasharray="2.08 3.44" fill="none"/>
<rect x="105.5" y="380.5" width="1380.0" height="286.0" fill="none" stroke="#000" stroke-width="1.11"/>
<path d="M162.5 666.5v4.86M449.5 666.5v4.86M736.5 666.5v4.86M1023.5 666.5v4.86M1310.5 666.5v4.86" stroke="#000" stroke-width="1.11"/>
<text x="158.43" y="686.80" font-size="14.76" textLength="8.14" lengthAdjust="spacingAndGlyphs" fill="#000">0</text>
<text x="432.28" y="686.80" font-size="14.76" textLength="34.59" lengthAdjust="spacingAndGlyphs" fill="#000">5000</text>
<text x="714.74" y="686.80" font-size="14.76" textLength="43.55" lengthAdjust="spacingAndGlyphs" fill="#000">10000</text>
<text x="1001.74" y="686.80" font-size="14.76" textLength="43.55" lengthAdjust="spacingAndGlyphs" fill="#000">15000</text>
<text x="1288.63" y="686.80" font-size="14.76" textLength="43.65" lengthAdjust="spacingAndGlyphs" fill="#000">20000</text>
<path d="M105.5 381.5h-4.86M105.5 426.5h-4.86M105.5 471.5h-4.86M105.5 516.5h-4.86M105.5 561.5h-4.86M105.5 606.5h-4.86M105.5 651.5h-4.86" stroke="#000" stroke-width="1.11"/>
<text x="64.42" y="386.50" font-size="14.72" textLength="30.26" lengthAdjust="spacingAndGlyphs" fill="#000">7.44</text>
<text x="64.42" y="431.50" font-size="14.76" textLength="29.96" lengthAdjust="spacingAndGlyphs" fill="#000">7.42</text>
<text x="64.42" y="476.50" font-size="14.76" textLength="30.27" lengthAdjust="spacingAndGlyphs" fill="#000">7.40</text>
<text x="64.41" y="521.50" font-size="14.76" textLength="30.31" lengthAdjust="spacingAndGlyphs" fill="#000">7.38</text>
<text x="64.41" y="566.50" font-size="14.76" textLength="30.40" lengthAdjust="spacingAndGlyphs" fill="#000">7.36</text>
<text x="64.42" y="611.50" font-size="14.76" textLength="30.26" lengthAdjust="spacingAndGlyphs" fill="#000">7.34</text>
<text x="64.42" y="656.50" font-size="14.76" textLength="29.96" lengthAdjust="spacingAndGlyphs" fill="#000">7.32</text>
<rect x="1365.5" y="387.4" width="113.09999999999991" height="47.60000000000002" rx="2.8" fill="#fff" fill-opacity="0.8" stroke="#cccccc" stroke-width="1.11"/>
<path d="M1369 399.3h31" stroke="#ffa500" stroke-width="2.08"/>
<path d="M1369 422h31" stroke="#ff0000" stroke-width="2.08"/>
<text x="1409.26" y="403.90" font-size="14.45" textLength="30.38" lengthAdjust="spacingAndGlyphs" fill="#000">mag</text>
<text x="1440.26" y="405.90" font-size="10.33" font-style="italic" textLength="30.84" lengthAdjust="spacingAndGlyphs" fill="#000">OBSID</text>
<text x="1409.26" y="426.90" font-size="14.45" textLength="30.38" lengthAdjust="spacingAndGlyphs" fill="#000">mag</text>
<rect x="1348.5" y="613.6" width="130.0999999999999" height="45.60000000000002" rx="2.8" fill="#fff" fill-opacity="0.8" stroke="#cccccc" stroke-width="1.11"/>
<path d="M1365.4 626.4a2.0 2.0 0 1 0 4.0 0a2.0 2.0 0 1 0 -4.0 0" fill="#ffa500"/>
<path d="M1365.4 647.5a2.0 2.0 0 1 0 4.0 0a2.0 2.0 0 1 0 -4.0 0" fill="#000"/>
<text x="1393.05" y="629.70" font-size="14.56" textLength="79.78" lengthAdjust="spacingAndGlyphs" fill="#000">Highlighted</text>
<text x="1393.11" y="650.70" font-size="14.76" textLength="20.38" lengthAdjust="spacingAndGlyphs" fill="#000">OK</text>
<path d="M105.5 921.50H1485.5M105.5 889.50H1485.5M105.5 856.50H1485.5M105.5 823.50H1485.5M105.5 791.50H1485.5M105.5 758.50H1485.5" stroke="#b0b0b0" stroke-width="1.11" stroke-dasharray="1.11 1.83" fill="none"/>
<path d="M340.7 854.7l3.4 1.8l-3.4 1.8zM340.7 887.7l3.4 1.8l-3.4 1.8zM464.7 854.7l3.4 1.8l-3.4 1.8zM464.7 887.7l3.4 1.8l-3.4 1.8zM559.4 854.7l3.4 1.8l-3.4 1.8zM559.4 887.7l3.4 1.8l-3.4 1.8zM602.7 854.7l3.4 1.8l-3.4 1.8zM602.7 887.7l3.4 1.8l-3.4 1.8zM782.7 854.7l3.4 1.8l-3.4 1.8zM782.7 887.7l3.4 1.8l-3.4 1.8zM1237.6 854.7l3.4 1.8l-3.4 1.8zM1237.6 887.7l3.4 1.8l-3.4 1.8zM1262.8 854.7l3.4 1.8l-3.4 1.8zM1262.8 887.7l3.4 1.8l-3.4 1.8zM1301.4 756.7l3.4 1.8l-3.4 1.8z" fill="#000"/>
<path d="M105.5 1009.50H1485.5M105.5 983.50H1485.5M105.5 957.50H1485.5" stroke="#b0b0b0" stroke-width="1.11" stroke-dasharray="1.11 1.83" fill="none"/>
<path d="M162.5 1007.4h0m.1 .5h0m.2 .3h0m.3-1.6h0m.8 1.8h0m1-1.8h0m1.6 2.2h0m.6-2.3h0m1.1 2.1h0m.8-2h0m.4 1.6h0m.8-1.9h0m.4 1.6h0m1.4 .4h0m.2-2h0m.3 2.2h0m1-2.1h0m1.1 2.6h0m.8-2.6h0m.1 2.1h0m1.6-.3h0m.1-2.1h0m1.1 .1h0m.8 2.2h0m1.1-.5h0m.2-1.6h0m1.2 2.1h0m1.1 .3h0m.3-2.4h0m.7 2.1h0m1.5 0h0m.8-2.2h0m1.1 1.8h0m.6 0h0m.6-1.5h0m.7-.4h0m.7 2.5h0m.4-2.1h0m.8 1.7h0m.2-1.6h0m.8 1.3h0m.6-1.9h0m.8 2.1h0m1.3-2h0m.1 1.8h0m.6-1.2h0m.6 1.5h0m1.3 .2h0m.4-1.8h0m.5 0h0m.6 0h0m.1 1.6h0m1 0h0m.1-1.1h0m.8 .8h0m.2-1h0m.7 1h0m0-1.5h0m1.4 .5h0m.2 1.3h0m1.3-1.6h0m.2 1.4h0m1.2-1.1h0m.6 1.7h0m1-.3h0m.1-1.7h0m1.5 1.3h0m.4-1.4h0m1 1.9h0m.3-1.4h0m.4 1.2h0m1.4-1.5h0m.1 1.4h0m.8 .4h0m.6-1.5h0m.3 .9h0m.6-1h0m1.1 1.3h0m.4-2h0m.5 2.3h0m.9-2.1h0m.5 2h0m.5-1.9h0m1 1.8h0m.4-1.8h0m1.3 1.5h0m.3-1.2h0m1.5 2h0m.8-2.1h0m.5 1.7h0m.7-1.7h0m.5 2.2h0m.8-2.1h0m1.2 .1h0m.7 1.6h0m.9-2.3h0m.8 1.8h0m.1-1.9h0m1.7 2h0m.9-1.7h0m.4-.1h0m.9 2h0m.5-1.8h0m.7 .1h0m.5 1.4h0m.8-1.1h0m.8 1.8h0m.3-.9h0m1-1.8h0m1.3 2.5h0m.8-1.4h0m.5 1.3h0m1.2-2h0m.2 1.6h0m.5-.1h0m.4-1.3h0m1.4 1.8h0m.1-2.1h0m1.3 1.6h0m.9-1h0m.2 1.2h0m1-1.5h0m.8 1.7h0m.6-1.3h0m1-.1h0m.5 1.6h0m.7-1.4h0m1.1 1.5h0m.3-2.3h0m1.5 1.8h0m.2-1h0m.7-.1h0m1.3 1.5h0m.4-2h0m.7 1.7h0m.3-1.8h0m1.2 2h0m.4-2h0m.9-.3h0m.8 .4h0m.2 1.9h0m1.6-2.1h0m.2 1.8h0m.8 .3h0m.7-1.7h0m.6 1.2h0m1.1 .2h0m.5-1.5h0m.7-.1h0m.2 1.7h0m1.1-1.1h0m.6 1.5h0m.2 0h0m.5-1.9h0m.7 1.3h0m.2-1.6h0m1.5 .3h0m.3 2h0m.3 0h0m.8-2.2h0m.8 .4h0m.5 1.2h0m.8-1h0m.8 1.1h0m.4-1.6h0m.4 2h0m.7-2.2h0m.2 .8h0m1.5-.9h0m.4 2.2h0m.8-2.2h0m1 2h0m.2-1.9h0m.6 1.7h0m1.1-1.8h0m.4 1.8h0m1 .4h0m.4-2.1h0m.7 .2h0m.2 1.9h0m.9-1.5h0m.2 .9h0m1.6 .4h0m.5-2.3h0m.9 .6h0m.1 1.6h0m1.6 .2h0m.3-2.1h0m.7-.2h0m.3 2.3h0m.3-2.2h0m.3 2.3h0m.9-.1h0m.3-1.4h0m.5 1.5h0m1.2 .1h0m0-2.3h0m.9 2.3h0m.2-2.2h0m1.1 1.9h0m.4-2.3h0m.7 .2h0m1 2.1h0m.5-2h0m.6 1.9h0m.9-2.3h0m.4 2.2h0m.3-1.8h0m.4 1.6h0m1.1-1h0m.8 1.5h0m.9-2.2h0m1.8 2.4h0m.2-2.1h0m1.8 1.5h0m.5-1.4h0m.9 1.8h0m.5-2.1h0m.9 .3h0m.3 1.3h0m.3 .1h0m.5-1.7h0m.8 1.6h0m.4-1.3h0m.5 1.3h0m.5-1.4h0m.2 1.5h0m.3-1.5h0m1.2 1.5h0m.6-1.5h0m.3 1.7h0m1-.1h0m.2-2.1h0m1.4 1.9h0m.6-1.5h0m.2 1.7h0m1.4 .4h0m.3-2.1h0m.6 2.3h0m.8-1.8h0m.2 1.7h0m.8 0h0m.4-2h0m1.2 0h0m.4 0h0m.1 1.7h0m1.5-1.9h0m.5 2.4h0m1-2.4h0m.6 2.2h0m.1-2.1h0m1 .4h0m1 1.7h0m.6-1.7h0m1-.4h0m.7 2h0m1.5-2.5h0m.2 1.9h0m1 .2h0m.4-1.6h0m.8 .4h0m.3 2h0m1.5-.4h0m.1-1.9h0m1.2-.2h0m.3 1.9h0m.8-1.7h0m.8 1.5h0m1.6 0h0m.1-1.6h0m.6-.1h0m.4 2.1h0m.6-1.9h0m.3 1.8h0m1.6-1.9h0m.9 1.9h0m.2 0h0m.3-1.3h0m1.2 1h0m.3-1.7h0m.8 1.7h0m.6-1.6h0m.7 1.9h0m.4-2h0m.7 2.5h0m.5-2.3h0m1 1.7h0m.1-2.3h0m.7 .4h0m1.3 .3h0m0 2.2h0m1.9-.9h0m.3-1.6h0m1.1 1.6h0m.2-1.7h0m.9 1.7h0m1.2-1.5h0m.5 2.3h0m.5-2.2h0m.3 1.8h0m1.3-2.4h0m.2 2h0m.2-1.5h0m.6 1.7h0m1.5 .9h0m.6-2.6h0m1.3 1.4h0m.8 .1h0m.4-1.4h0m.4-.4h0m0 1.9h0m.8-.1h0m.8-1.1h0m.7 1.5h0m.5 0h0m.1-2.1h0m1.5 1.9h0m1.2-2.2h0m1.1 2h0m1.1-1.1h0m.3 1.2h0m1.1-1.8h0m.3 2.3h0m.5 0h0m.9-2.1h0m.9 1.9h0m.5-2.1h0m1.4 .3h0m.1 1.5h0m.4-1.6h0m1 2h0m.5-2.1h0m.9 2.2h0m1.3-2.3h0m.3 2.1h0m1.6-2h0m.7 2.2h0m.1-2h0m1.6 1.9h0m.4-2.4h0m1.5 2.2h0m.7 .3h0m.3-2h0m1.4 .4h0m.5 1.3h0m1.2-1.7h0m.1 1.3h0m1.2 .1h0m.9-1.7h0m.4 1.7h0m.8 0h0m.2-1.7h0m.4 1.6h0m.4-1.4h0m1.1 .1h0m.2 1.6h0m.5 .3h0m.7-2.1h0m1.1 1.8h0m.2-1.9h0m1.2 2.3h0m.4-2.5h0m1 2.4h0m1-1.4h0m1.2 1.6h0m.4-3h0m1.1 1.4h0m0 .9h0m.8-1.5h0m.6 1.5h0m1.4 .4h0m.4-1.9h0m1.5 0h0m.6 1.7h0m1.2 .2h0m0-2.2h0m2 .2h0m.2 2.3h0m1-2.2h0m.1 2.2h0m.5-2.3h0m1 1.8h0m1-1.6h0m1.2 2h0m1.2-2.2h0m.8-.1h0m.1 1.9h0m.7 .2h0m.9-.1h0m.2-2.1h0m1.5 .4h0m.1 1.6h0m1 .4h0m.6-2h0m1.5 1.7h0m.5-1.4h0m.3 1h0m.9-1.5h0m.2 1.5h0m.6-1.6h0m.7 2.3h0m.8-2.2h0m.4 1.6h0m1.4 .2h0m.1-1.4h0m1.5 1.1h0m.9-1.3h0m.4 2.1h0m.2-2.1h0m1.2 2h0m.8-2.4h0m0 1h0m1.2-.8h0m.5 2.3h0m1.1-.2h0m.7-2.2h0m1.6 2.1h0m.3-1.9h0m1.6 1.6h0m.2-1.4h0m.5 1.3h0m1.3-1.2h0m.3 1.7h0m.8-2.2h0m.9 .3h0m.2 1.6h0m1-1.6h0m.7 1.8h0m.2-1.9h0m1.3 1.6h0m.1-1.7h0m.9 .4h0m.4 1.2h0m1.4 .5h0m.3-2.1h0m1 2h0m.2-2h0m.8 2.5h0m1.1-2.5h0m.1 1.8h0m.9-1.8h0m.3 1.6h0m1-1.6h0m.4 2.1h0m.5-2h0m1.8 2h0m.4-2.2h0m.3 1.8h0m.6-2.2h0m1.5 .6h0m.4 2h0m1 0h0m.4-2.5h0m.6 2.4h0m1.1-.1h0m1-2.1h0m1.5 .8h0m.1 1.6h0m.1-2h0m1.8 .4h0m.1 .9h0m.7-.9h0m.8 1.6h0m1.2-2.7h0m.6 2.2h0m1.4-.1h0m.2-1.3h0m1.1 1.2h0m.8 .2h0m.2-1.6h0m.6 0h0m.8 1.5h0m.3-1.4h0m.7 1.3h0m.6-1.4h0m.4 1.8h0m.8-1.7h0m.9-.5h0m.2 2h0m1.2-1.6h0m.3 1.9h0m.8-1.9h0m.4 2.2h0m.8-2.1h0m0 2h0m.8-2h0m.6 0h0m1 1.6h0m.5-1.7h0m1.1 1.7h0m.3-1.9h0m.3 1.8h0m1.4-1.1h0m.2 1.4h0m1.3-1.9h0m.1 1.4h0m1.5 .5h0m.9-1.9h0m.8 .1h0m.6 1.8h0m.6-1.8h0m.9-.1h0m.6 2.1h0m1.8-.7h0m.1-1.7h0m.6 1.9h0m0-1.7h0m1.7 2.1h0m.1-2h0m1 2.1h0m.1-2.2h0m.7 2h0m.6-1.8h0m.4 1.9h0m1.2-.4h0m.5-1.8h0m1.2 .3h0m.1 1.8h0m.6-1.9h0m.8 1.5h0m1.4-1.4h0m.6-.3h0m.1 2.2h0m1.3-2.1h0m.5 2.2h0m1.4-.6h0m.7-1.5h0m1 2.3h0m1.4-2.3h0m1.2 .1h0m.3 2h0m.8-2h0m1.4 1.5h0m.3-1.8h0m1 .2h0m.4 1.9h0m1.2-1.9h0m.3 1.4h0m1.2 .2h0m.5-1.9h0m1 .6h0m.5 1.7h0m.7-.3h0m.5-1.4h0m1-.3h0m.6 1.9h0m.7-1.8h0m.1 2.2h0m1.1-.9h0m.6-1.3h0m.8 0h0m.5 1.9h0m1.7-2.1h0m.7 2.2h0m.4-2h0m1.1 2h0m.1-1.7h0m1.1 1.5h0m.5-2h0m.4 .2h0m.2 1.8h0m.9-.1h0m1-1.8h0m.8 2.1h0m1-2.4h0m1.5 2.4h0m1.1-2.1h0m.6 2h0m.2-2h0m.6 2h0m.4-1.9h0m1.2 1.5h0m.5-1.8h0m.8 2h0m1-1.7h0m.3 1.4h0m.5-1.8h0m.5 2.2h0m1.4-2h0m.7 2.1h0m.1-2.6h0m.6 2.6h0m.8 0h0m.6-2h0m1.1 .1h0m.5 1.9h0m.9-2.1h0m.8 2h0m1.7-1.5h0m.3 1.3h0m1.3-2h0m.4 1.9h0m.3-1.5h0m.8 1.3h0m1.1-.9h0m.2 1.5h0m.9-.4h0m.2-1.8h0m1.7 2h0m.1-1.9h0m.6 2.1h0m1 0h0m.1-1.7h0m1.5 1.1h0m.4-1h0m.8 1.9h0m.4-1.7h0m1.2 .9h0m.4-1.9h0m.7 .5h0m.1 1.5h0m.9 .4h0m1.2-2.2h0m0 2.2h0m.8-1.9h0m.1 1.8h0m1.2-1.8h0m.1 1.8h0m1.2-.3h0m.5-1.6h0m.7 .1h0m.8 1.8h0m.7 .2h0m.4-1.8h0m1.3 1.1h0m.5-1.1h0m.8-.6h0m.2 2.4h0m1.2-.7h0m.6-1.6h0m.2 1.6h0m.8-2h0m.3 2.2h0m.7-1.2h0m.9 1.3h0m.7-1.2h0m1 1.7h0m.2-2.5h0m.4 .2h0m.6 2.5h0m.7-2.3h0m.9 1.4h0m1.4-1.5h0m.3 1.9h0m1.7 0h0m.6-2.1h0m1.5 1.9h0m.7 .2h0m.6-2.2h0m.5 .1h0m.4 2.1h0m1.3-.4h0m0-1.6h0m1.2 0h0m.1 2.2h0m0 0h0m1.5-1.6h0m1.3 1.8h0m.2-2.6h0m.8 2.4h0m.3-1.8h0m1.5 .1h0m.1 1.7h0m.7-1.6h0m.2 1.5h0m1.1 0h0m.5-1.8h0m.6-.1h0m.8 1.5h0m1.3-1.8h0m.3 2.3h0m1.2-2h0m.3 0h0m.6 1.9h0m1-3h0m.2 2.2h0m.7 .8h0m1-.5h0m.8-1.7h0m.3 1.6h0m1-1.4h0m.6 2.3h0m.9-2.4h0m.7 1.6h0m.7-1.6h0m.9 1.9h0m.1-1.8h0m1.5-.4h0m.4 2.4h0m1.8-1.6h0m.5 1.1h0m.2-2.1h0m1.4 2.5h0m.5-1.9h0m.5 2.1h0m.8-2.5h0m.6 2.3h0m1.3-1.9h0m.9 1.4h0m.6 .3h0m.2-1.8h0m.5 1.5h0m.7-1.3h0m.7-.1h0m.2 1.7h0m1.2 .2h0m.2-1.4h0m1.4 1.4h0m.5-2.1h0m1.8 1.9h0m.1-1.5h0m1.4 1.8h0m.6-2.1h0m1.1 2.3h0m.8-2.1h0m.4 1.8h0m.3-1.8h0m1.1 1.5h0m.8-1.6h0m.8 2h0m.2-1.9h0m.9 2.3h0m.5-2.6h0m1.6 .7h0m.4 1.5h0m.7 .2h0m.3-2.1h0m1 1.5h0m.6-1.6h0m.8 1.9h0m.1-1.9h0m.7-.1h0m.9 .2h0m.7 1.8h0m.6-1.9h0m1.3 .3h0m.5 2.1h0m.7-2.4h0m.8 1.9h0m.1-2.2h0m1.5 .4h0m.9 1.8h0m1.2-2h0m1.2 2.1h0m.5-2h0m.7 1.4h0m.4-1.5h0m.6 1.6h0m.3-1.4h0m.8 .3h0m.4 1.3h0m1.6 .3h0m.1-1.7h0m.8 1.7h0m.6-2.2h0m.7 2.2h0m1.1-2h0m.7 1.7h0m.2-1.6h0m1.9 1.5h0m0-1.9h0m.6 2.2h0m1-.3h0m.3-1.3h0m1.2 1.3h0m.1-1.6h0m1.8 1.7h0m.9-1.8h0m.3 2.6h0m.6-2.6h0m1.3 2.2h0m.7-2.1h0m.9 1.5h0m.2-1.5h0m.9 0h0m.1 1.5h0m1.2-1.5h0m0 1.7h0m1.3-2.1h0m.1 2.2h0m.6-2.2h0m.5 1.9h0m.6-.1h0m1.5 .6h0m.1-2.8h0m.7 .6h0m.2 2.2h0m1.5-.1h0m.5-1.6h0m1.1-.7h0m.8 2.1h0m1.1-1.7h0m.4 0h0m.1 1.7h0m.5-.1h0m.4-1.5h0m1.2-.1h0m.4 1.7h0m.5-1.6h0m.8 0h0m.4 1.3h0m1.3 .1h0m.4-1.7h0m1 .3h0m.3 1.7h0m.8 .2h0m1.3-1.9h0m.6-.1h0m.1 2.6h0m1.5-.8h0m.9-1.8h0m1.1 1.9h0m.4-1.8h0m.2 1.8h0m1.2-.5h0m.3-1.3h0m1.2 1.7h0m.1-1.8h0m1.4 1.8h0m0-2.1h0m1.9 .2h0m.6-.3h0m.1 2.2h0m.2 .2h0m1.2-2.2h0m.7 1.8h0m.8-1.5h0m.6 1.9h0m1.2-2h0m.9 1.5h0m0-1.9h0m1.8 .4h0m.1 1.8h0m.6 .2h0m1.3-2.3h0m.7 2h0m.3-1.3h0m.6 1.7h0m1.2-1.9h0m.1 1.9h0m.6-2h0m1.9 2.2h0m0-2.6h0m1.4 2.1h0m.5-1.8h0m1.2 0h0m.1 1.5h0m1.4-2h0m.1 2.7h0m1.6-.2h0m.6-1.7h0m1.4 1.6h0m1-2.3h0m1.1 2.4h0m1.4-2.1h0m.2 1.6h0m1.1 .3h0m.3-1.2h0m1.2-.5h0m.2 1.6h0m.8-.3h0m1.1-1.3h0m.5 1.9h0m1.1-1.6h0m1.4 1.5h0m.5-2.5h0m1.1 1.1h0m.2 1.4h0m1.3-1.4h0m.6 1.2h0m.2-2h0m.4 .2h0m1.6 0h0m0 .7h0m.1 1.5h0m2.1 .1h0m.1-2.3h0m.8 2.2h0m.3-1.7h0m.9 .1h0m1.1 1.7h0m.8-2.6h0m.3 2h0m1.2-1.5h0m.8 2h0m.8-2h0m.6 1.8h0m.6-2h0m.4 2h0m1.8-1.8h0m0 2h0m1.7-2.1h0m.6 2.1h0m1.5-2.1h0m.2 1.8h0m.5-2h0m1.5 .5h0m0 1.4h0m2.1-1.8h0m.1 1.9h0m.4 .2h0m1.3-1.6h0m.8 1h0m.6-.9h0m.1 1h0m1.4-1.2h0m.3 1.9h0m.5-2.6h0m1.2 2.4h0m.5-2h0m1 1.5h0m1.5 .1h0m.5-1.9h0m.8 2.1h0m1.1-1.9h0m.5 2.1h0m.3-2.2h0m.9 2.1h0m1.3-2h0m.1 1.9h0m.8-1.8h0m1.1 1.9h0m.6-2h0m.1 2.1h0m1.3-.6h0m.1-1h0m1 0h0m0 1.2h0m.9-1.1h0m.7 1.3h0m.8-1.6h0m.6 1.8h0m.6-1.9h0m1.3 .3h0m.2 1.1h0m1.2 0h0m.5-1.3h0m.8 1.3h0m.8-1.5h0m1 2.1h0m.1-1.9h0m1.5 .2h0m.9 1.7h0m.6-1.5h0m1.1-.1h0m.1 1.4h0m.5 0h0m.7-1.7h0m.5-.3h0m.1 1.6h0m2-1.8h0m0 1.3h0m1.3 1.1h0m.8-1.8h0m.8 1.7h0m.2-2.2h0m.8 1.9h0m.5-1.7h0m1.2 1.7h0m.6-1.7h0m1.3 2.2h0m.1-2.1h0m.9 0h0m.6 1.6h0m.2-1.4h0m1.5-.1h0m.1 1.6h0m.4-1.7h0m1.3-.2h0m.2 2.1h0m1.6-.5h0m.1-1.4h0m1.1-.4h0m.9 2.5h0m1.3-1.7h0m1.2-.8h0m.2 2.6h0m.7-2.8h0m.8 2h0m1.1-1.3h0m.6 2h0m.7-2.7h0m.7 .4h0m.5 2h0m1.4-1.9h0m.6 1.8h0m.8-1.2h0m.2 1.5h0m.5-.4h0m.3-1.3h0m1.8-.3h0m.2 1.7h0m1.1 .2h0m1.1-2h0m.4 1.9h0m.5-1.9h0m1.1 .2h0m.4 1.3h0m1.4 .1h0m.3-1.3h0m1 1.2h0m.4-1.7h0m1 .2h0m.3 1.8h0m1.6-1.5h0m.6 1.4h0m1.3-1.8h0m.8 .1h0m0 1.7h0m1.9-1.8h0m.2 1.8h0m1.2-1.9h0m.3 2.6h0m.8-2.1h0m.5 1.6h0m1.8-.4h0m.1-1.8h0m.7 2.4h0m.2-1.6h0m.8 1.5h0m.3-1.4h0m1.1 .8h0m.2-1.1h0m1.6 .1h0m.1 1.4h0m1.4 .1h0m.2-1.5h0m1.1-.3h0m.4 1.7h0m1.1-1.5h0m.1 1.9h0m1.5-.2h0m.8-2.5h0m1.2 2.1h0m1-1.4h0m.5 2.1h0m.4-2.3h0m1.2 1.9h0m.3-1.3h0m.8 0h0m.3 .8h0m1-1.1h0m.1 1.3h0m1-1.6h0m.1 1.9h0m2.1-2.3h0m.1 2h0m.6 .5h0m.7-1.7h0m.6 1.1h0m.9-1.5h0m.6-.1h0m.1 2.2h0m2-.1h0m.4-2h0m1.5 2.1h0m.3-1.6h0m.5 1.6h0m.9-2.5h0m.3 .2h0m.9 2.5h0m.9-.3h0m.1-2.2h0m2.4 2h0m.1-1.8h0m.4 2h0m0-2h0m.5 2h0m1.3-2.3h0m.7 .1h0m.3 1.5h0m.4 .8h0m1.2-.6h0m.7-1.4h0m.4 1.5h0m1.1-1.1h0m.2 1h0m.6 0h0m.6-1.5h0m.5 1.6h0m1.5-2h0m.1 2h0m1.2 .3h0m1.1-.4h0m.1-2.1h0m2.2 .7h0m.1 2.2h0m1.5-2.5h0m.5 .4h0m.8 2h0m1.1-.1h0m.1-2.5h0m1.7 .3h0m.1 1.6h0m1.2 .9h0m.6-2.1h0m.3 1.7h0m1.1-1.5h0m.7 1.5h0m.7-1.8h0m.2 1.8h0m.8-2.1h0m1.1 2.4h0m1-2.3h0m1 1.8h0m.6-1.7h0m.6 1.3h0m.5-1.4h0m0 1.4h0m.7 0h0m.7 0h0m.2-1.3h0m1.1-.4h0m.1 2.3h0m.2-1.3h0m1.7 1.2h0m.4-2.1h0m1.3 1.2h0m.2 1.2h0m.8-2.6h0m1.6 2.3h0m.1-1.9h0m.8 0h0m.2 2.2h0m1.1-.7h0m1.2-2.5h0m.1 2.6h0m1 .7h0m.2-2.2h0m2.2 1.6h0m.1-1.7h0m.9 0h0m1.2 1.5h0m1-1.7h0m.2 2h0m.8-2h0m.6 1.6h0m1.5-1.8h0m.4 2.6h0m1.5-2.2h0m.1 2.1h0m.7-.2h0m.7-1.4h0m.5 1.5h0m.9-.1h0m.1-1.4h0m.9 1.4h0m.1-1.5h0m.7 .2h0m.9 .9h0m.7-1.1h0m1 1.3h0m.9-1.7h0m1.1 1.7h0m.9-1.8h0m1.1 2h0m.4-2.1h0m1.1 1.7h0m.6-1.5h0m.8 1.4h0m.5-1.6h0m.3 1.7h0m1.3-.1h0m.6-1h0m.8 1.3h0m.6-1.6h0m0 2h0m1.2-2.2h0m1.2 1.7h0m.2-1.6h0m.1 1.5h0m1.4-1.5h0m.4 1.9h0m1.1-1.3h0m.7 .9h0m.6-1.4h0m1.1 2.2h0m1-2.1h0m.8 1.4h0m.5-1.5h0m.5 1.6h0m1.9-.2h0m.1-1.5h0m1.6-.5h0m0 2.4h0m1.1-.4h0m.8-1.4h0m1.4 1.8h0m.2-2.2h0m1.1 1.9h0m.9-1.7h0m.7 1.7h0m1.2-1.5h0m.1 1.8h0m.5 .1h0m1.1-1.7h0m.8 1.2h0m.1-1.7h0m.9 2.2h0m.7-1.9h0m.5 1.3h0m1.7 .5h0m.2-2h0m1.3 1.7h0m.4-1.8h0m1 0h0m.2 2h0m2.1-1.7h0m0 1.9h0m.5 0h0m.3-2.1h0m1.8 2.4h0m.8-2.4h0m.5 2.2h0m0-2h0m1.6-.3h0m.4 1.7h0m.9-1.5h0m.1 1.6h0m1.1-1.5h0m.4 0h0m.3 2h0m1.4-2.3h0m.9 2.1h0m.6-2.3h0m.3 2.2h0m1.1-.3h0m.2-1.9h0m1.4 2.3h0m.7-2.1h0m1.4 2.1h0m1-2.4h0m1 2.5h0m.6 .1h0m.1-2.2h0m.9-.2h0m.6 1.7h0m.5-1.5h0m.7 1.7h0m.3-1.3h0m.6 1.7h0m1.1-1.6h0m.3 1.1h0m1.1-1.8h0m.8 .3h0m.1 1.9h0m.4-1.7h0m.9 1.3h0m.7-.9h0m.7 1h0m.9-2h0m.2 1.8h0m1-1.5h0m.2 1.8h0m.8 .9h0m.3-1.7h0m.7-1.4h0m1.3 2.1h0m1-1.6h0m1 .1h0m.1 1.7h0m.8-1.9h0m.8 2h0m.6 0h0m.8-1.7h0m.7 1.2h0m1.2-1.3h0m.5 1.8h0m.2-1.9h0m.6 1.9h0m.9-1.9h0m.8 0h0m.5 1.9h0m.6 .1h0m.9-1.9h0m1 2h0m.9-1.8h0m1-.3h0m.5 2.1h0m1.9-.5h0m0-1.7h0m.4 1.5h0m1.7 .7h0m.6-2.1h0m.3 2h0m.8-1.9h0m.7 2.3h0m1.5-2.3h0m.4 1.8h0m.8-1.8h0m.3 1.9h0m.6-1.9h0m1.2-.7h0m.3 2.1h0m.4-1.8h0m1.2 2.2h0m.2-1.8h0m.8-.1h0m1.1 0h0m0 1.6h0m1.2 .1h0m.4-1.9h0m1.2-.2h0m0 1.8h0m1.3-1.3h0m.2 1.5h0m1.3-.1h0m.2-1.4h0m.8-.2h0m1 2.1h0m.4-1.9h0m.5-.2h0m.3 1.7h0m.8-1.5h0m.5 1.3h0m.7-1.4h0m.1 1.5h0m1.1-.1h0m.3-1.8h0m.7 1.9h0m1.3 .7h0m.1-2.3h0m1.4 2h0m.9-1.7h0m1.1 2.3h0m.3-2.3h0m.9 1.7h0m.9-1.5h0m.6 1.5h0m1.5-2h0m.3 2.2h0m1.4-2.5h0m1 2.2h0m.7-2h0m.1 2.1h0m.8 .3h0m.7-1.7h0m1.3 1.5h0m.2-2h0m.9 0h0m1.1 1.7h0m.4-2h0m0 2.1h0m.9-1.8h0m1.2 2.3h0m1.1-1.8h0m.3-.8h0m.7 1.8h0m.5-1.3h0m1 1.4h0m.6-1.3h0m1.2-.2h0m.3 2.2h0m.8-2.4h0m.1 1.8h0m1-1.6h0m.6 1.5h0m1.4-1.9h0m.5 2.4h0m1.5-2.2h0m.8 2h0m1.5-1.9h0m.1 1.8h0m1.6-.1h0m.2-1.2h0m1-.4h0m.2 1.6h0m1.2-2.2h0m.9 .4h0m.1 2.6h0m2.2-.7h0m.3-1.9h0m.6 0h0m.4 1.5h0m.9 .1h0m.7-1.5h0m1.2 2h0m.5-1.4h0m1.1-1.1h0m.7 2.5h0m.5 0h0m1.1-2h0m.7 1.5h0m.5-1.5h0m.7 1.4h0m.7 0h0m.3-1.4h0m1.1 1.6h0m1.4-1.6h0m.1 2.4h0m1.5-2.4h0m.5 1.4h0m1-1.4h0m.5 2.1h0m1.7-2.1h0m.1 1.6h0m.9-1.1h0m.6 1.6h0m.8-1.6h0m.1 1.6h0m.4-1.7h0m.6 1.8h0m.6-1.9h0m.4 1.6h0m.5-1.6h0m1.4 1.3h0m.3-1.4h0m.8 1.2h0m1.2-1.1h0m.1 1.7h0m.4-1.9h0m1.3-.3h0m.1 2.1h0m.5-1.8h0m1.1-.1h0m.7 2.1h0m.7-2.2h0m1 0h0m.2 1.9h0m1.2-.1h0m.1-1.3h0m1.5 2h0m.1-2h0m.7 0h0m.9 1.1h0m1 .4h0m.3-2.3h0m.9 2.4h0m1.7-2.5h0m.4 2.4h0m.7-2.3h0m1.2 2.3h0m.8-2.4h0m1.1 2.8h0m.5-1.9h0m.4 1.5h0m1.1-2.2h0m.2 2.1h0m1.4-.4h0m.5-1.3h0m.4 1.3h0m.4 .1h0m.3-1.5h0m1.1 1.5h0m.6-1h0m.8 1.1h0m.7-1.3h0m.6 1.6h0m.2-1.8h0m1.5 1.5h0m.4-1.6h0m.2 1.6h0m1.7-1.7h0m.4 1.9h0m.5-2.4h0m1 2h0m.9-1.5h0m.1 2h0m1 .1h0m.9-2.2h0m.6 .3h0m.8 1.8h0m1.1 .3h0m.5-2.1h0m.5 2h0m.3-1.6h0m1.3 1.4h0m.4-1.6h0m.8 1.6h0m.2-2h0m.5 0h0m.8 2.2h0m1.2-.5h0m.2-1.7h0m1.1 .1h0m.3 1.7h0m.8 .2h0m.1-1.9h0m.3 1.9h0m.9-1.8h0m.7 1.6h0m.7-1.6h0m.9 1.6h0m.9-1.4h0m.4 1.6h0m.8-2.1h0m1 2.3h0m1.1-2.4h0m.1 1.4h0m.2 1.2h0m.6-.1h0m1.5-.5h0m.2-2.2h0m1.8 .5h0m.1 1.7h0m1.8-1.3h0m.4 1.7h0m.5 .1h0m.1-1.7h0m1.2-.6h0m.2 2.5h0m1.1-2.4h0m.8 1.8h0m.5-1.7h0m.6 1.4h0m.4-1.5h0m.6 1.4h0m1.8 .3h0m.3-1.8h0m1 .1h0m1.1 2.2h0m.8-2.7h0m.9 1.5h0m.6 1.1h0m.4-.1h0m.3-1.9h0m1.4-.5h0m.2 1.8h0m.3-1.8h0m1.4 2.3h0m.8-2.1h0m.2 2.3h0m.9-1.7h0m.3 1.5h0m1.5-1.7h0m.7-.6h0m.1 2.2h0m1.2-2h0m.5 1.9h0m1.1-1.6h0m.6 1.4h0m.8-1.6h0m.1 1.7h0m1.1-1.6h0m1.4 1.9h0m.6-.3h0m.2-2.1h0m1.7 2h0m.1-1.9h0m.6 1.9h0m.9-2.4h0m.9 2.3h0m1.1-1.6h0m.2 1.1h0m1.5 1h0m.2-3.5h0m.7 2.5h0m0-.4h0m1.3-1.5h0m.7 2.1h0m1.5-1.7h0m.4 1.9h0m.4-2h0m1.3 2.2h0m.5-2.5h0m.9 0h0m.4 2.3h0m1.2-.8h0m.2-2.2h0m.3 0h0m1.3 2.4h0m.2-.3h0m.7 .7h0m.1-3.3h0m1.2 1.7h0m.8 1.9h0m.1-3.2h0m1 3.5h0m.3-.7h0m.2-2h0" stroke="#000" stroke-width="2.8" stroke-linecap="round" clip-path="url(#c4)"/>
<path d="M341.2 1002.5a1.2 1.2 0 1 0 2.4 0a1.2 1.2 0 1 0 -2.4 0M603.1 1002.5a1.2 1.2 0 1 0 2.4 0a1.2 1.2 0 1 0 -2.4 0M1238.0 1002.5a1.2 1.2 0 1 0 2.4 0a1.2 1.2 0 1 0 -2.4 0M1263.2 1002.5a1.2 1.2 0 1 0 2.4 0a1.2 1.2 0 1 0 -2.4 0" fill="#000"/>
<path d="M342.3 955.6l1.9 3.6h-3.8zM466.3 955.6l1.9 3.6h-3.8zM561.0 955.6l1.9 3.6h-3.8zM604.3 955.6l1.9 3.6h-3.8zM784.3 955.6l1.9 3.6h-3.8zM1239.2 955.6l1.9 3.6h-3.8zM1264.4 955.6l1.9 3.6h-3.8zM1303.0 955.6l1.9 3.6h-3.8z" fill="#ff0000"/>
<path d="M162.0 954.0V725.5M1286.0 954.0V725.5M1303.0 954.0V725.5" stroke="#800080" stroke-width="2.08" stroke-dasharray="2.08 3.44" fill="none"/>
<path d="M162.0 1011.0V954.5M1286.0 1011.0V954.5M1303.0 1011.0V954.5" stroke="#800080" stroke-width="2.08" stroke-dasharray="2.08 3.44" fill="none"/>
<rect x="105.5" y="725.5" width="1380.0" height="229.0" fill="none" stroke="#000" stroke-width="1.11"/>
<rect x="105.5" y="954.5" width="1380.0" height="57.0" fill="none" stroke="#000" stroke-width="1.11"/>
<path d="M105.5 758.5h-4.86M105.5 791.5h-4.86M105.5 823.5h-4.86M105.5 856.5h-4.86M105.5 889.5h-4.86M105.5 921.5h-4.86" stroke="#000" stroke-width="1.11"/>
<text x="15.98" y="763.50" font-size="14.56" textLength="78.85" lengthAdjust="spacingAndGlyphs" fill="#000">not Kalman</text>
<text x="32.67" y="796.50" font-size="14.56" textLength="62.27" lengthAdjust="spacingAndGlyphs" fill="#000">not track</text>
<text x="26.31" y="828.50" font-size="14.56" textLength="68.61" lengthAdjust="spacingAndGlyphs" fill="#000">Sat. pixel.</text>
<text x="37.23" y="861.50" font-size="14.56" textLength="57.71" lengthAdjust="spacingAndGlyphs" fill="#000">Ion. rad.</text>
<text x="51.23" y="894.50" font-size="14.56" textLength="43.26" lengthAdjust="spacingAndGlyphs" fill="#000">dr &gt; 5</text>
<text x="14.43" y="926.50" font-size="14.76" textLength="81.03" lengthAdjust="spacingAndGlyphs" fill="#000">OBS not OK</text>
<path d="M162.5 1011.5v4.86M449.5 1011.5v4.86M736.5 1011.5v4.86M1023.5 1011.5v4.86M1310.5 1011.5v4.86" stroke="#000" stroke-width="1.11"/>
<text x="158.43" y="1031.80" font-size="14.76" textLength="8.14" lengthAdjust="spacingAndGlyphs" fill="#000">0</text>
<text x="432.28" y="1031.80" font-size="14.76" textLength="34.59" lengthAdjust="spacingAndGlyphs" fill="#000">5000</text>
<text x="714.74" y="1031.80" font-size="14.76" textLength="43.55" lengthAdjust="spacingAndGlyphs" fill="#000">10000</text>
<text x="1001.74" y="1031.80" font-size="14.76" textLength="43.55" lengthAdjust="spacingAndGlyphs" fill="#000">15000</text>
<text x="1288.63" y="1031.80" font-size="14.76" textLength="43.65" lengthAdjust="spacingAndGlyphs" fill="#000">20000</text>
<path d="M105.5 1009.5h-4.86M105.5 983.5h-4.86M105.5 957.5h-4.86" stroke="#000" stroke-width="1.11"/>
<text x="86.51" y="1014.50" font-size="14.76" textLength="8.14" lengthAdjust="spacingAndGlyphs" fill="#000">0</text>
<text x="86.68" y="988.50" font-size="14.72" textLength="7.68" lengthAdjust="spacingAndGlyphs" fill="#000">5</text>
<text x="77.69" y="962.50" font-size="14.76" textLength="16.99" lengthAdjust="spacingAndGlyphs" fill="#000">10</text>
<path d="M105.5 996.50h-2.78M105.5 970.50h-2.78" stroke="#000" stroke-width="0.83"/>
<text x="-7.19" y="0.00" font-size="14.56" textLength="14.73" lengthAdjust="spacingAndGlyphs" fill="#000" transform="translate(68.5 983.6) rotate(-90)">dr</text>
</svg></body></html>
